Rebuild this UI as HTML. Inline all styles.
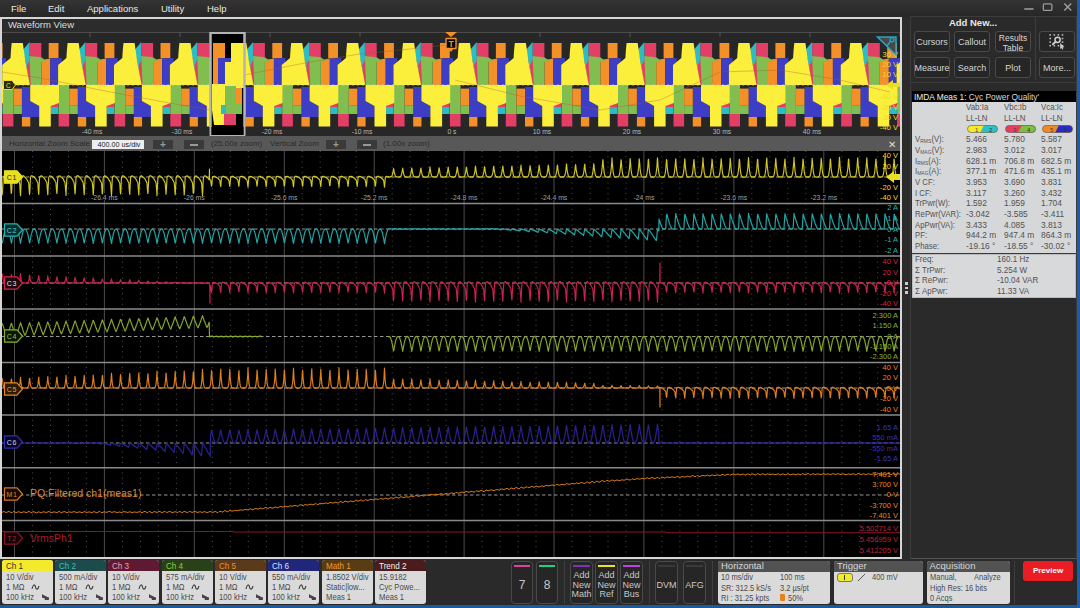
<!DOCTYPE html><html><head><meta charset="utf-8"><style>
html,body{margin:0;padding:0;} body{width:1080px;height:608px;overflow:hidden;position:relative;background:#2b2b2b;font-family:"Liberation Sans", sans-serif;}
.t{position:absolute;white-space:nowrap;} sub{font-size:5.6px;vertical-align:-0.5px;line-height:0;letter-spacing:0.1px}
.a{position:absolute;box-sizing:border-box;}
</style></head><body>
<div class="a" style="left:0;top:0;width:1080px;height:17px;background:linear-gradient(#343434,#262626)"></div>
<div class="t" style="left:11px;top:2.8px;height:12.3px;line-height:12.3px;font-size:9.5px;color:#e8e8e8;">File</div>
<div class="t" style="left:48px;top:2.8px;height:12.3px;line-height:12.3px;font-size:9.5px;color:#e8e8e8;">Edit</div>
<div class="t" style="left:87px;top:2.8px;height:12.3px;line-height:12.3px;font-size:9.5px;color:#e8e8e8;">Applications</div>
<div class="t" style="left:161px;top:2.8px;height:12.3px;line-height:12.3px;font-size:9.5px;color:#e8e8e8;">Utility</div>
<div class="t" style="left:207px;top:2.8px;height:12.3px;line-height:12.3px;font-size:9.5px;color:#e8e8e8;">Help</div>
<svg class="a" style="left:1020px;top:0px" width="57" height="16"><line x1="4.3" y1="9" x2="13.5" y2="9" stroke="#9a9a9a" stroke-width="1.6"/><rect x="23.3" y="3.8" width="8.6" height="6.6" rx="1.2" fill="none" stroke="#9a9a9a" stroke-width="1.3"/><path d="M44.3,3.4 L51.2,10.4 M51.2,3.4 L44.3,10.4" stroke="#a0a0a0" stroke-width="1.4"/></svg>
<div class="a" style="left:0px;top:17px;width:902px;height:542px;border:2px solid #d6d6d6;background:#2c2c2c"></div>
<div class="t" style="left:8px;top:18.8px;height:12.3px;line-height:12.3px;font-size:9.5px;color:#dcdcdc;">Waveform View</div>
<svg width="898" height="104" viewBox="2 32 898 104" style="position:absolute;left:2px;top:32px"><rect x="2" y="32" width="898" height="104" fill="#272727"/><line x1="2" y1="32.5" x2="900" y2="32.5" stroke="#4a4a4a" stroke-width="1"/><line x1="0" y1="32" x2="0" y2="37" stroke="#555" stroke-width="1"/><line x1="90" y1="32" x2="90" y2="37" stroke="#555" stroke-width="1"/><line x1="180" y1="32" x2="180" y2="37" stroke="#555" stroke-width="1"/><line x1="270" y1="32" x2="270" y2="37" stroke="#555" stroke-width="1"/><line x1="360" y1="32" x2="360" y2="37" stroke="#555" stroke-width="1"/><line x1="450" y1="32" x2="450" y2="37" stroke="#555" stroke-width="1"/><line x1="540" y1="32" x2="540" y2="37" stroke="#555" stroke-width="1"/><line x1="630" y1="32" x2="630" y2="37" stroke="#555" stroke-width="1"/><line x1="720" y1="32" x2="720" y2="37" stroke="#555" stroke-width="1"/><line x1="810" y1="32" x2="810" y2="37" stroke="#555" stroke-width="1"/><line x1="900" y1="32" x2="900" y2="37" stroke="#555" stroke-width="1"/><g><polygon fill="#f39028" points="-63.1,43 -53.3,43 -53.3,58 -61.5,58.5 -63.1,58"/><polygon fill="#f39028" points="-70.5,60 -61.5,58.5 -61.5,85 -70.5,85"/><polygon fill="#3d3dc6" points="-61.5,58.5 -50,58 -50,63 -53.7,66 -53.7,85 -61.5,85"/><polygon fill="#e33e66" points="-82.3,43 -70.5,43 -70.5,57.5 -82.3,56.5"/><polygon fill="#82bd4f" points="-82.3,56 -70.5,57.3 -64.8,61.5 -70.5,62 -70.5,85 -82,85 -86.3,62"/><polygon fill="#e33e66" points="-85.8,60 -82.3,56.5 -81.1,85 -82.7,85"/><polygon fill="#2bbcc6" points="-89,50 -82.3,42 -82.3,60 -85.3,66"/><polygon fill="#fbef3c" points="-100.1,43 -89,43 -86.3,62 -82,85 -109.6,85 -109.6,65 -101.3,58 -100.8,50"/><polygon fill="#3d3dc6" points="-33.9,87 -25.6,87 -25.6,101 -16.6,106 -16.6,117 -33.9,117"/><polygon fill="#f39028" points="-33.9,117 -25.6,117 -25.6,126.5 -33.9,126.5"/><polygon fill="#e33e66" points="-61,103 -53.4,103 -53.4,107 -61,107"/><polygon fill="#2bbcc6" points="-61,107 -53.4,107 -53.4,114 -61,114"/><polygon fill="#82bd4f" points="-53.2,85 -42.5,85 -42.5,114 -53.2,114"/><polygon fill="#e33e66" points="-53.2,114 -42.5,114 -42.5,126.5 -53.2,126.5"/><polygon fill="#f39028" points="-42.5,88.6 -33.9,88.6 -33.9,105.8 -42.5,105.8"/><polygon fill="#82bd4f" points="-42.5,105.8 -33.9,105.8 -33.9,114 -42.5,114"/><polygon fill="#fbef3c" points="-81.6,85 -52.8,85 -52.8,103 -61,106 -61,126.5 -72.6,126.5 -72.6,106 -81.6,101"/><polygon fill="#f39028" points="-7.2,43 2.6,43 2.6,58 -5.6,58.5 -7.2,58"/><polygon fill="#f39028" points="-14.6,60 -5.6,58.5 -5.6,85 -14.6,85"/><polygon fill="#3d3dc6" points="-5.6,58.5 5.9,58 5.9,63 2.2,66 2.2,85 -5.6,85"/><polygon fill="#e33e66" points="-26.4,43 -14.6,43 -14.6,57.5 -26.4,56.5"/><polygon fill="#82bd4f" points="-26.4,56 -14.6,57.3 -8.9,61.5 -14.6,62 -14.6,85 -26.1,85 -30.4,62"/><polygon fill="#e33e66" points="-29.9,60 -26.4,56.5 -25.2,85 -26.8,85"/><polygon fill="#2bbcc6" points="-33.1,50 -26.4,42 -26.4,60 -29.4,66"/><polygon fill="#fbef3c" points="-44.2,43 -33.1,43 -30.4,62 -26.1,85 -53.7,85 -53.7,65 -45.4,58 -44.9,50"/><polygon fill="#3d3dc6" points="21.9,87 30.3,87 30.3,101 39.2,106 39.2,117 21.9,117"/><polygon fill="#f39028" points="21.9,117 30.3,117 30.3,126.5 21.9,126.5"/><polygon fill="#e33e66" points="-5.1,103 2.5,103 2.5,107 -5.1,107"/><polygon fill="#2bbcc6" points="-5.1,107 2.5,107 2.5,114 -5.1,114"/><polygon fill="#82bd4f" points="2.7,85 13.4,85 13.4,114 2.7,114"/><polygon fill="#e33e66" points="2.7,114 13.4,114 13.4,126.5 2.7,126.5"/><polygon fill="#f39028" points="13.4,88.6 21.9,88.6 21.9,105.8 13.4,105.8"/><polygon fill="#82bd4f" points="13.4,105.8 21.9,105.8 21.9,114 13.4,114"/><polygon fill="#fbef3c" points="-25.8,85 3.1,85 3.1,103 -5.1,106 -5.1,126.5 -16.8,126.5 -16.8,106 -25.8,101"/><polygon fill="#f39028" points="48.7,43 58.5,43 58.5,58 50.3,58.5 48.7,58"/><polygon fill="#f39028" points="41.3,60 50.3,58.5 50.3,85 41.3,85"/><polygon fill="#3d3dc6" points="50.3,58.5 61.8,58 61.8,63 58.1,66 58.1,85 50.3,85"/><polygon fill="#e33e66" points="29.5,43 41.3,43 41.3,57.5 29.5,56.5"/><polygon fill="#82bd4f" points="29.5,56 41.3,57.3 47,61.5 41.3,62 41.3,85 29.8,85 25.5,62"/><polygon fill="#e33e66" points="26,60 29.5,56.5 30.7,85 29.1,85"/><polygon fill="#2bbcc6" points="22.8,50 29.5,42 29.5,60 26.5,66"/><polygon fill="#fbef3c" points="11.7,43 22.8,43 25.5,62 29.8,85 2.2,85 2.2,65 10.5,58 11,50"/><polygon fill="#3d3dc6" points="77.8,87 86.2,87 86.2,101 95.2,106 95.2,117 77.8,117"/><polygon fill="#f39028" points="77.8,117 86.2,117 86.2,126.5 77.8,126.5"/><polygon fill="#e33e66" points="50.8,103 58.4,103 58.4,107 50.8,107"/><polygon fill="#2bbcc6" points="50.8,107 58.4,107 58.4,114 50.8,114"/><polygon fill="#82bd4f" points="58.6,85 69.2,85 69.2,114 58.6,114"/><polygon fill="#e33e66" points="58.6,114 69.2,114 69.2,126.5 58.6,126.5"/><polygon fill="#f39028" points="69.2,88.6 77.8,88.6 77.8,105.8 69.2,105.8"/><polygon fill="#82bd4f" points="69.2,105.8 77.8,105.8 77.8,114 69.2,114"/><polygon fill="#fbef3c" points="30.2,85 59,85 59,103 50.8,106 50.8,126.5 39.2,126.5 39.2,106 30.2,101"/><polygon fill="#f39028" points="104.6,43 114.4,43 114.4,58 106.2,58.5 104.6,58"/><polygon fill="#f39028" points="97.2,60 106.2,58.5 106.2,85 97.2,85"/><polygon fill="#3d3dc6" points="106.2,58.5 117.7,58 117.7,63 114,66 114,85 106.2,85"/><polygon fill="#e33e66" points="85.4,43 97.2,43 97.2,57.5 85.4,56.5"/><polygon fill="#82bd4f" points="85.4,56 97.2,57.3 102.9,61.5 97.2,62 97.2,85 85.7,85 81.4,62"/><polygon fill="#e33e66" points="81.9,60 85.4,56.5 86.6,85 85,85"/><polygon fill="#2bbcc6" points="78.7,50 85.4,42 85.4,60 82.4,66"/><polygon fill="#fbef3c" points="67.6,43 78.7,43 81.4,62 85.7,85 58.1,85 58.1,65 66.4,58 66.9,50"/><polygon fill="#3d3dc6" points="133.8,87 142.1,87 142.1,101 151.1,106 151.1,117 133.8,117"/><polygon fill="#f39028" points="133.8,117 142.1,117 142.1,126.5 133.8,126.5"/><polygon fill="#e33e66" points="106.7,103 114.3,103 114.3,107 106.7,107"/><polygon fill="#2bbcc6" points="106.7,107 114.3,107 114.3,114 106.7,114"/><polygon fill="#82bd4f" points="114.5,85 125.2,85 125.2,114 114.5,114"/><polygon fill="#e33e66" points="114.5,114 125.2,114 125.2,126.5 114.5,126.5"/><polygon fill="#f39028" points="125.2,88.6 133.8,88.6 133.8,105.8 125.2,105.8"/><polygon fill="#82bd4f" points="125.2,105.8 133.8,105.8 133.8,114 125.2,114"/><polygon fill="#fbef3c" points="86.1,85 114.9,85 114.9,103 106.7,106 106.7,126.5 95.1,126.5 95.1,106 86.1,101"/><polygon fill="#f39028" points="160.5,43 170.3,43 170.3,58 162.1,58.5 160.5,58"/><polygon fill="#f39028" points="153.1,60 162.1,58.5 162.1,85 153.1,85"/><polygon fill="#3d3dc6" points="162.1,58.5 173.6,58 173.6,63 169.9,66 169.9,85 162.1,85"/><polygon fill="#e33e66" points="141.3,43 153.1,43 153.1,57.5 141.3,56.5"/><polygon fill="#82bd4f" points="141.3,56 153.1,57.3 158.8,61.5 153.1,62 153.1,85 141.6,85 137.3,62"/><polygon fill="#e33e66" points="137.8,60 141.3,56.5 142.5,85 140.9,85"/><polygon fill="#2bbcc6" points="134.6,50 141.3,42 141.3,60 138.3,66"/><polygon fill="#fbef3c" points="123.5,43 134.6,43 137.3,62 141.6,85 114,85 114,65 122.3,58 122.8,50"/><polygon fill="#3d3dc6" points="189.7,87 197.9,87 197.9,101 206.9,106 206.9,117 189.7,117"/><polygon fill="#f39028" points="189.7,117 197.9,117 197.9,126.5 189.7,126.5"/><polygon fill="#e33e66" points="162.6,103 170.2,103 170.2,107 162.6,107"/><polygon fill="#2bbcc6" points="162.6,107 170.2,107 170.2,114 162.6,114"/><polygon fill="#82bd4f" points="170.3,85 181.1,85 181.1,114 170.3,114"/><polygon fill="#e33e66" points="170.3,114 181.1,114 181.1,126.5 170.3,126.5"/><polygon fill="#f39028" points="181.1,88.6 189.7,88.6 189.7,105.8 181.1,105.8"/><polygon fill="#82bd4f" points="181.1,105.8 189.7,105.8 189.7,114 181.1,114"/><polygon fill="#fbef3c" points="141.9,85 170.8,85 170.8,103 162.6,106 162.6,126.5 150.9,126.5 150.9,106 141.9,101"/><polygon fill="#f39028" points="216.4,43 226.2,43 226.2,58 218,58.5 216.4,58"/><polygon fill="#f39028" points="209,60 218,58.5 218,85 209,85"/><polygon fill="#3d3dc6" points="218,58.5 229.5,58 229.5,63 225.8,66 225.8,85 218,85"/><polygon fill="#e33e66" points="197.2,43 209,43 209,57.5 197.2,56.5"/><polygon fill="#82bd4f" points="197.2,56 209,57.3 214.7,61.5 209,62 209,85 197.5,85 193.2,62"/><polygon fill="#e33e66" points="193.7,60 197.2,56.5 198.4,85 196.8,85"/><polygon fill="#2bbcc6" points="190.5,50 197.2,42 197.2,60 194.2,66"/><polygon fill="#fbef3c" points="179.4,43 190.5,43 193.2,62 197.5,85 169.9,85 169.9,65 178.2,58 178.7,50"/><polygon fill="#3d3dc6" points="245.5,87 253.8,87 253.8,101 262.8,106 262.8,117 245.5,117"/><polygon fill="#f39028" points="245.5,117 253.8,117 253.8,126.5 245.5,126.5"/><polygon fill="#e33e66" points="218.4,103 226,103 226,107 218.4,107"/><polygon fill="#2bbcc6" points="218.4,107 226,107 226,114 218.4,114"/><polygon fill="#82bd4f" points="226.2,85 236.9,85 236.9,114 226.2,114"/><polygon fill="#e33e66" points="226.2,114 236.9,114 236.9,126.5 226.2,126.5"/><polygon fill="#f39028" points="236.9,88.6 245.5,88.6 245.5,105.8 236.9,105.8"/><polygon fill="#82bd4f" points="236.9,105.8 245.5,105.8 245.5,114 236.9,114"/><polygon fill="#fbef3c" points="197.8,85 226.6,85 226.6,103 218.4,106 218.4,126.5 206.8,126.5 206.8,106 197.8,101"/><polygon fill="#f39028" points="272.3,43 282.1,43 282.1,58 273.9,58.5 272.3,58"/><polygon fill="#f39028" points="264.9,60 273.9,58.5 273.9,85 264.9,85"/><polygon fill="#3d3dc6" points="273.9,58.5 285.4,58 285.4,63 281.7,66 281.7,85 273.9,85"/><polygon fill="#e33e66" points="253.1,43 264.9,43 264.9,57.5 253.1,56.5"/><polygon fill="#82bd4f" points="253.1,56 264.9,57.3 270.6,61.5 264.9,62 264.9,85 253.4,85 249.1,62"/><polygon fill="#e33e66" points="249.6,60 253.1,56.5 254.3,85 252.7,85"/><polygon fill="#2bbcc6" points="246.4,50 253.1,42 253.1,60 250.1,66"/><polygon fill="#fbef3c" points="235.3,43 246.4,43 249.1,62 253.4,85 225.8,85 225.8,65 234.1,58 234.6,50"/><polygon fill="#3d3dc6" points="301.4,87 309.8,87 309.8,101 318.8,106 318.8,117 301.4,117"/><polygon fill="#f39028" points="301.4,117 309.8,117 309.8,126.5 301.4,126.5"/><polygon fill="#e33e66" points="274.4,103 281.9,103 281.9,107 274.4,107"/><polygon fill="#2bbcc6" points="274.4,107 281.9,107 281.9,114 274.4,114"/><polygon fill="#82bd4f" points="282.2,85 292.9,85 292.9,114 282.2,114"/><polygon fill="#e33e66" points="282.2,114 292.9,114 292.9,126.5 282.2,126.5"/><polygon fill="#f39028" points="292.9,88.6 301.4,88.6 301.4,105.8 292.9,105.8"/><polygon fill="#82bd4f" points="292.9,105.8 301.4,105.8 301.4,114 292.9,114"/><polygon fill="#fbef3c" points="253.8,85 282.6,85 282.6,103 274.4,106 274.4,126.5 262.8,126.5 262.8,106 253.8,101"/><polygon fill="#f39028" points="328.2,43 338,43 338,58 329.8,58.5 328.2,58"/><polygon fill="#f39028" points="320.8,60 329.8,58.5 329.8,85 320.8,85"/><polygon fill="#3d3dc6" points="329.8,58.5 341.3,58 341.3,63 337.6,66 337.6,85 329.8,85"/><polygon fill="#e33e66" points="309,43 320.8,43 320.8,57.5 309,56.5"/><polygon fill="#82bd4f" points="309,56 320.8,57.3 326.5,61.5 320.8,62 320.8,85 309.3,85 305,62"/><polygon fill="#e33e66" points="305.5,60 309,56.5 310.2,85 308.6,85"/><polygon fill="#2bbcc6" points="302.3,50 309,42 309,60 306,66"/><polygon fill="#fbef3c" points="291.2,43 302.3,43 305,62 309.3,85 281.7,85 281.7,65 290,58 290.5,50"/><polygon fill="#3d3dc6" points="357.3,87 365.6,87 365.6,101 374.6,106 374.6,117 357.3,117"/><polygon fill="#f39028" points="357.3,117 365.6,117 365.6,126.5 357.3,126.5"/><polygon fill="#e33e66" points="330.2,103 337.8,103 337.8,107 330.2,107"/><polygon fill="#2bbcc6" points="330.2,107 337.8,107 337.8,114 330.2,114"/><polygon fill="#82bd4f" points="338.1,85 348.8,85 348.8,114 338.1,114"/><polygon fill="#e33e66" points="338.1,114 348.8,114 348.8,126.5 338.1,126.5"/><polygon fill="#f39028" points="348.8,88.6 357.3,88.6 357.3,105.8 348.8,105.8"/><polygon fill="#82bd4f" points="348.8,105.8 357.3,105.8 357.3,114 348.8,114"/><polygon fill="#fbef3c" points="309.6,85 338.4,85 338.4,103 330.2,106 330.2,126.5 318.6,126.5 318.6,106 309.6,101"/><polygon fill="#f39028" points="384.1,43 393.9,43 393.9,58 385.7,58.5 384.1,58"/><polygon fill="#f39028" points="376.7,60 385.7,58.5 385.7,85 376.7,85"/><polygon fill="#3d3dc6" points="385.7,58.5 397.2,58 397.2,63 393.5,66 393.5,85 385.7,85"/><polygon fill="#e33e66" points="364.9,43 376.7,43 376.7,57.5 364.9,56.5"/><polygon fill="#82bd4f" points="364.9,56 376.7,57.3 382.4,61.5 376.7,62 376.7,85 365.2,85 360.9,62"/><polygon fill="#e33e66" points="361.4,60 364.9,56.5 366.1,85 364.5,85"/><polygon fill="#2bbcc6" points="358.2,50 364.9,42 364.9,60 361.9,66"/><polygon fill="#fbef3c" points="347.1,43 358.2,43 360.9,62 365.2,85 337.6,85 337.6,65 345.9,58 346.4,50"/><polygon fill="#3d3dc6" points="413.2,87 421.5,87 421.5,101 430.5,106 430.5,117 413.2,117"/><polygon fill="#f39028" points="413.2,117 421.5,117 421.5,126.5 413.2,126.5"/><polygon fill="#e33e66" points="386.1,103 393.7,103 393.7,107 386.1,107"/><polygon fill="#2bbcc6" points="386.1,107 393.7,107 393.7,114 386.1,114"/><polygon fill="#82bd4f" points="393.9,85 404.6,85 404.6,114 393.9,114"/><polygon fill="#e33e66" points="393.9,114 404.6,114 404.6,126.5 393.9,126.5"/><polygon fill="#f39028" points="404.6,88.6 413.2,88.6 413.2,105.8 404.6,105.8"/><polygon fill="#82bd4f" points="404.6,105.8 413.2,105.8 413.2,114 404.6,114"/><polygon fill="#fbef3c" points="365.5,85 394.3,85 394.3,103 386.1,106 386.1,126.5 374.5,126.5 374.5,106 365.5,101"/><polygon fill="#f39028" points="440,43 449.8,43 449.8,58 441.6,58.5 440,58"/><polygon fill="#f39028" points="432.6,60 441.6,58.5 441.6,85 432.6,85"/><polygon fill="#3d3dc6" points="441.6,58.5 453.1,58 453.1,63 449.4,66 449.4,85 441.6,85"/><polygon fill="#e33e66" points="420.8,43 432.6,43 432.6,57.5 420.8,56.5"/><polygon fill="#82bd4f" points="420.8,56 432.6,57.3 438.3,61.5 432.6,62 432.6,85 421.1,85 416.8,62"/><polygon fill="#e33e66" points="417.3,60 420.8,56.5 422,85 420.4,85"/><polygon fill="#2bbcc6" points="414.1,50 420.8,42 420.8,60 417.8,66"/><polygon fill="#fbef3c" points="403,43 414.1,43 416.8,62 421.1,85 393.5,85 393.5,65 401.8,58 402.3,50"/><polygon fill="#3d3dc6" points="469.1,87 477.4,87 477.4,101 486.4,106 486.4,117 469.1,117"/><polygon fill="#f39028" points="469.1,117 477.4,117 477.4,126.5 469.1,126.5"/><polygon fill="#e33e66" points="442.1,103 449.6,103 449.6,107 442.1,107"/><polygon fill="#2bbcc6" points="442.1,107 449.6,107 449.6,114 442.1,114"/><polygon fill="#82bd4f" points="449.9,85 460.6,85 460.6,114 449.9,114"/><polygon fill="#e33e66" points="449.9,114 460.6,114 460.6,126.5 449.9,126.5"/><polygon fill="#f39028" points="460.6,88.6 469.1,88.6 469.1,105.8 460.6,105.8"/><polygon fill="#82bd4f" points="460.6,105.8 469.1,105.8 469.1,114 460.6,114"/><polygon fill="#fbef3c" points="421.4,85 450.2,85 450.2,103 442.1,106 442.1,126.5 430.4,126.5 430.4,106 421.4,101"/><polygon fill="#f39028" points="495.9,43 505.7,43 505.7,58 497.5,58.5 495.9,58"/><polygon fill="#f39028" points="488.5,60 497.5,58.5 497.5,85 488.5,85"/><polygon fill="#3d3dc6" points="497.5,58.5 509,58 509,63 505.3,66 505.3,85 497.5,85"/><polygon fill="#e33e66" points="476.7,43 488.5,43 488.5,57.5 476.7,56.5"/><polygon fill="#82bd4f" points="476.7,56 488.5,57.3 494.2,61.5 488.5,62 488.5,85 477,85 472.7,62"/><polygon fill="#e33e66" points="473.2,60 476.7,56.5 477.9,85 476.3,85"/><polygon fill="#2bbcc6" points="470,50 476.7,42 476.7,60 473.7,66"/><polygon fill="#fbef3c" points="458.9,43 470,43 472.7,62 477,85 449.4,85 449.4,65 457.7,58 458.2,50"/><polygon fill="#3d3dc6" points="525,87 533.4,87 533.4,101 542.4,106 542.4,117 525,117"/><polygon fill="#f39028" points="525,117 533.4,117 533.4,126.5 525,126.5"/><polygon fill="#e33e66" points="497.9,103 505.5,103 505.5,107 497.9,107"/><polygon fill="#2bbcc6" points="497.9,107 505.5,107 505.5,114 497.9,114"/><polygon fill="#82bd4f" points="505.8,85 516.4,85 516.4,114 505.8,114"/><polygon fill="#e33e66" points="505.8,114 516.4,114 516.4,126.5 505.8,126.5"/><polygon fill="#f39028" points="516.4,88.6 525,88.6 525,105.8 516.4,105.8"/><polygon fill="#82bd4f" points="516.4,105.8 525,105.8 525,114 516.4,114"/><polygon fill="#fbef3c" points="477.3,85 506.1,85 506.1,103 497.9,106 497.9,126.5 486.3,126.5 486.3,106 477.3,101"/><polygon fill="#f39028" points="551.8,43 561.6,43 561.6,58 553.4,58.5 551.8,58"/><polygon fill="#f39028" points="544.4,60 553.4,58.5 553.4,85 544.4,85"/><polygon fill="#3d3dc6" points="553.4,58.5 564.9,58 564.9,63 561.2,66 561.2,85 553.4,85"/><polygon fill="#e33e66" points="532.6,43 544.4,43 544.4,57.5 532.6,56.5"/><polygon fill="#82bd4f" points="532.6,56 544.4,57.3 550.1,61.5 544.4,62 544.4,85 532.9,85 528.6,62"/><polygon fill="#e33e66" points="529.1,60 532.6,56.5 533.8,85 532.2,85"/><polygon fill="#2bbcc6" points="525.9,50 532.6,42 532.6,60 529.6,66"/><polygon fill="#fbef3c" points="514.8,43 525.9,43 528.6,62 532.9,85 505.3,85 505.3,65 513.6,58 514.1,50"/><polygon fill="#3d3dc6" points="580.9,87 589.2,87 589.2,101 598.2,106 598.2,117 580.9,117"/><polygon fill="#f39028" points="580.9,117 589.2,117 589.2,126.5 580.9,126.5"/><polygon fill="#e33e66" points="553.8,103 561.4,103 561.4,107 553.8,107"/><polygon fill="#2bbcc6" points="553.8,107 561.4,107 561.4,114 553.8,114"/><polygon fill="#82bd4f" points="561.6,85 572.3,85 572.3,114 561.6,114"/><polygon fill="#e33e66" points="561.6,114 572.3,114 572.3,126.5 561.6,126.5"/><polygon fill="#f39028" points="572.3,88.6 580.9,88.6 580.9,105.8 572.3,105.8"/><polygon fill="#82bd4f" points="572.3,105.8 580.9,105.8 580.9,114 572.3,114"/><polygon fill="#fbef3c" points="533.2,85 562,85 562,103 553.8,106 553.8,126.5 542.2,126.5 542.2,106 533.2,101"/><polygon fill="#f39028" points="607.7,43 617.5,43 617.5,58 609.3,58.5 607.7,58"/><polygon fill="#f39028" points="600.3,60 609.3,58.5 609.3,85 600.3,85"/><polygon fill="#3d3dc6" points="609.3,58.5 620.8,58 620.8,63 617.1,66 617.1,85 609.3,85"/><polygon fill="#e33e66" points="588.5,43 600.3,43 600.3,57.5 588.5,56.5"/><polygon fill="#82bd4f" points="588.5,56 600.3,57.3 606,61.5 600.3,62 600.3,85 588.8,85 584.5,62"/><polygon fill="#e33e66" points="585,60 588.5,56.5 589.7,85 588.1,85"/><polygon fill="#2bbcc6" points="581.8,50 588.5,42 588.5,60 585.5,66"/><polygon fill="#fbef3c" points="570.7,43 581.8,43 584.5,62 588.8,85 561.2,85 561.2,65 569.5,58 570,50"/><polygon fill="#3d3dc6" points="636.9,87 645.2,87 645.2,101 654.2,106 654.2,117 636.9,117"/><polygon fill="#f39028" points="636.9,117 645.2,117 645.2,126.5 636.9,126.5"/><polygon fill="#e33e66" points="609.8,103 617.4,103 617.4,107 609.8,107"/><polygon fill="#2bbcc6" points="609.8,107 617.4,107 617.4,114 609.8,114"/><polygon fill="#82bd4f" points="617.6,85 628.2,85 628.2,114 617.6,114"/><polygon fill="#e33e66" points="617.6,114 628.2,114 628.2,126.5 617.6,126.5"/><polygon fill="#f39028" points="628.2,88.6 636.9,88.6 636.9,105.8 628.2,105.8"/><polygon fill="#82bd4f" points="628.2,105.8 636.9,105.8 636.9,114 628.2,114"/><polygon fill="#fbef3c" points="589.2,85 618,85 618,103 609.8,106 609.8,126.5 598.2,126.5 598.2,106 589.2,101"/><polygon fill="#f39028" points="663.6,43 673.4,43 673.4,58 665.2,58.5 663.6,58"/><polygon fill="#f39028" points="656.2,60 665.2,58.5 665.2,85 656.2,85"/><polygon fill="#3d3dc6" points="665.2,58.5 676.7,58 676.7,63 673,66 673,85 665.2,85"/><polygon fill="#e33e66" points="644.4,43 656.2,43 656.2,57.5 644.4,56.5"/><polygon fill="#82bd4f" points="644.4,56 656.2,57.3 661.9,61.5 656.2,62 656.2,85 644.7,85 640.4,62"/><polygon fill="#e33e66" points="640.9,60 644.4,56.5 645.6,85 644,85"/><polygon fill="#2bbcc6" points="637.7,50 644.4,42 644.4,60 641.4,66"/><polygon fill="#fbef3c" points="626.6,43 637.7,43 640.4,62 644.7,85 617.1,85 617.1,65 625.4,58 625.9,50"/><polygon fill="#3d3dc6" points="692.8,87 701.1,87 701.1,101 710.1,106 710.1,117 692.8,117"/><polygon fill="#f39028" points="692.8,117 701.1,117 701.1,126.5 692.8,126.5"/><polygon fill="#e33e66" points="665.6,103 673.2,103 673.2,107 665.6,107"/><polygon fill="#2bbcc6" points="665.6,107 673.2,107 673.2,114 665.6,114"/><polygon fill="#82bd4f" points="673.5,85 684.1,85 684.1,114 673.5,114"/><polygon fill="#e33e66" points="673.5,114 684.1,114 684.1,126.5 673.5,126.5"/><polygon fill="#f39028" points="684.1,88.6 692.8,88.6 692.8,105.8 684.1,105.8"/><polygon fill="#82bd4f" points="684.1,105.8 692.8,105.8 692.8,114 684.1,114"/><polygon fill="#fbef3c" points="645.1,85 673.9,85 673.9,103 665.6,106 665.6,126.5 654.1,126.5 654.1,106 645.1,101"/><polygon fill="#f39028" points="719.5,43 729.3,43 729.3,58 721.1,58.5 719.5,58"/><polygon fill="#f39028" points="712.1,60 721.1,58.5 721.1,85 712.1,85"/><polygon fill="#3d3dc6" points="721.1,58.5 732.6,58 732.6,63 728.9,66 728.9,85 721.1,85"/><polygon fill="#e33e66" points="700.3,43 712.1,43 712.1,57.5 700.3,56.5"/><polygon fill="#82bd4f" points="700.3,56 712.1,57.3 717.8,61.5 712.1,62 712.1,85 700.6,85 696.3,62"/><polygon fill="#e33e66" points="696.8,60 700.3,56.5 701.5,85 699.9,85"/><polygon fill="#2bbcc6" points="693.6,50 700.3,42 700.3,60 697.3,66"/><polygon fill="#fbef3c" points="682.5,43 693.6,43 696.3,62 700.6,85 673,85 673,65 681.3,58 681.8,50"/><polygon fill="#3d3dc6" points="748.6,87 757,87 757,101 766,106 766,117 748.6,117"/><polygon fill="#f39028" points="748.6,117 757,117 757,126.5 748.6,126.5"/><polygon fill="#e33e66" points="721.5,103 729.1,103 729.1,107 721.5,107"/><polygon fill="#2bbcc6" points="721.5,107 729.1,107 729.1,114 721.5,114"/><polygon fill="#82bd4f" points="729.4,85 740,85 740,114 729.4,114"/><polygon fill="#e33e66" points="729.4,114 740,114 740,126.5 729.4,126.5"/><polygon fill="#f39028" points="740,88.6 748.6,88.6 748.6,105.8 740,105.8"/><polygon fill="#82bd4f" points="740,105.8 748.6,105.8 748.6,114 740,114"/><polygon fill="#fbef3c" points="701,85 729.8,85 729.8,103 721.5,106 721.5,126.5 710,126.5 710,106 701,101"/><polygon fill="#f39028" points="775.4,43 785.2,43 785.2,58 777,58.5 775.4,58"/><polygon fill="#f39028" points="768,60 777,58.5 777,85 768,85"/><polygon fill="#3d3dc6" points="777,58.5 788.5,58 788.5,63 784.8,66 784.8,85 777,85"/><polygon fill="#e33e66" points="756.2,43 768,43 768,57.5 756.2,56.5"/><polygon fill="#82bd4f" points="756.2,56 768,57.3 773.7,61.5 768,62 768,85 756.5,85 752.2,62"/><polygon fill="#e33e66" points="752.7,60 756.2,56.5 757.4,85 755.8,85"/><polygon fill="#2bbcc6" points="749.5,50 756.2,42 756.2,60 753.2,66"/><polygon fill="#fbef3c" points="738.4,43 749.5,43 752.2,62 756.5,85 728.9,85 728.9,65 737.2,58 737.7,50"/><polygon fill="#3d3dc6" points="804.5,87 812.9,87 812.9,101 821.9,106 821.9,117 804.5,117"/><polygon fill="#f39028" points="804.5,117 812.9,117 812.9,126.5 804.5,126.5"/><polygon fill="#e33e66" points="777.4,103 785,103 785,107 777.4,107"/><polygon fill="#2bbcc6" points="777.4,107 785,107 785,114 777.4,114"/><polygon fill="#82bd4f" points="785.2,85 795.9,85 795.9,114 785.2,114"/><polygon fill="#e33e66" points="785.2,114 795.9,114 795.9,126.5 785.2,126.5"/><polygon fill="#f39028" points="795.9,88.6 804.5,88.6 804.5,105.8 795.9,105.8"/><polygon fill="#82bd4f" points="795.9,105.8 804.5,105.8 804.5,114 795.9,114"/><polygon fill="#fbef3c" points="756.9,85 785.6,85 785.6,103 777.4,106 777.4,126.5 765.9,126.5 765.9,106 756.9,101"/><polygon fill="#f39028" points="831.3,43 841.1,43 841.1,58 832.9,58.5 831.3,58"/><polygon fill="#f39028" points="823.9,60 832.9,58.5 832.9,85 823.9,85"/><polygon fill="#3d3dc6" points="832.9,58.5 844.4,58 844.4,63 840.7,66 840.7,85 832.9,85"/><polygon fill="#e33e66" points="812.1,43 823.9,43 823.9,57.5 812.1,56.5"/><polygon fill="#82bd4f" points="812.1,56 823.9,57.3 829.6,61.5 823.9,62 823.9,85 812.4,85 808.1,62"/><polygon fill="#e33e66" points="808.6,60 812.1,56.5 813.3,85 811.7,85"/><polygon fill="#2bbcc6" points="805.4,50 812.1,42 812.1,60 809.1,66"/><polygon fill="#fbef3c" points="794.3,43 805.4,43 808.1,62 812.4,85 784.8,85 784.8,65 793.1,58 793.6,50"/><polygon fill="#3d3dc6" points="860.5,87 868.8,87 868.8,101 877.8,106 877.8,117 860.5,117"/><polygon fill="#f39028" points="860.5,117 868.8,117 868.8,126.5 860.5,126.5"/><polygon fill="#e33e66" points="833.4,103 841,103 841,107 833.4,107"/><polygon fill="#2bbcc6" points="833.4,107 841,107 841,114 833.4,114"/><polygon fill="#82bd4f" points="841.2,85 851.9,85 851.9,114 841.2,114"/><polygon fill="#e33e66" points="841.2,114 851.9,114 851.9,126.5 841.2,126.5"/><polygon fill="#f39028" points="851.9,88.6 860.5,88.6 860.5,105.8 851.9,105.8"/><polygon fill="#82bd4f" points="851.9,105.8 860.5,105.8 860.5,114 851.9,114"/><polygon fill="#fbef3c" points="812.8,85 841.6,85 841.6,103 833.4,106 833.4,126.5 821.8,126.5 821.8,106 812.8,101"/><polygon fill="#f39028" points="887.2,43 897,43 897,58 888.8,58.5 887.2,58"/><polygon fill="#f39028" points="879.8,60 888.8,58.5 888.8,85 879.8,85"/><polygon fill="#3d3dc6" points="888.8,58.5 900.3,58 900.3,63 896.6,66 896.6,85 888.8,85"/><polygon fill="#e33e66" points="868,43 879.8,43 879.8,57.5 868,56.5"/><polygon fill="#82bd4f" points="868,56 879.8,57.3 885.5,61.5 879.8,62 879.8,85 868.3,85 864,62"/><polygon fill="#e33e66" points="864.5,60 868,56.5 869.2,85 867.6,85"/><polygon fill="#2bbcc6" points="861.3,50 868,42 868,60 865,66"/><polygon fill="#fbef3c" points="850.2,43 861.3,43 864,62 868.3,85 840.7,85 840.7,65 849,58 849.5,50"/><polygon fill="#3d3dc6" points="916.4,87 924.7,87 924.7,101 933.7,106 933.7,117 916.4,117"/><polygon fill="#f39028" points="916.4,117 924.7,117 924.7,126.5 916.4,126.5"/><polygon fill="#e33e66" points="889.2,103 896.9,103 896.9,107 889.2,107"/><polygon fill="#2bbcc6" points="889.2,107 896.9,107 896.9,114 889.2,114"/><polygon fill="#82bd4f" points="897.1,85 907.8,85 907.8,114 897.1,114"/><polygon fill="#e33e66" points="897.1,114 907.8,114 907.8,126.5 897.1,126.5"/><polygon fill="#f39028" points="907.8,88.6 916.4,88.6 916.4,105.8 907.8,105.8"/><polygon fill="#82bd4f" points="907.8,105.8 916.4,105.8 916.4,114 907.8,114"/><polygon fill="#fbef3c" points="868.7,85 897.5,85 897.5,103 889.2,106 889.2,126.5 877.7,126.5 877.7,106 868.7,101"/><polygon fill="#f39028" points="943.1,43 952.9,43 952.9,58 944.7,58.5 943.1,58"/><polygon fill="#f39028" points="935.7,60 944.7,58.5 944.7,85 935.7,85"/><polygon fill="#3d3dc6" points="944.7,58.5 956.2,58 956.2,63 952.5,66 952.5,85 944.7,85"/><polygon fill="#e33e66" points="923.9,43 935.7,43 935.7,57.5 923.9,56.5"/><polygon fill="#82bd4f" points="923.9,56 935.7,57.3 941.4,61.5 935.7,62 935.7,85 924.2,85 919.9,62"/><polygon fill="#e33e66" points="920.4,60 923.9,56.5 925.1,85 923.5,85"/><polygon fill="#2bbcc6" points="917.2,50 923.9,42 923.9,60 920.9,66"/><polygon fill="#fbef3c" points="906.1,43 917.2,43 919.9,62 924.2,85 896.6,85 896.6,65 904.9,58 905.4,50"/><polygon fill="#3d3dc6" points="972.2,87 980.6,87 980.6,101 989.6,106 989.6,117 972.2,117"/><polygon fill="#f39028" points="972.2,117 980.6,117 980.6,126.5 972.2,126.5"/><polygon fill="#e33e66" points="945.1,103 952.8,103 952.8,107 945.1,107"/><polygon fill="#2bbcc6" points="945.1,107 952.8,107 952.8,114 945.1,114"/><polygon fill="#82bd4f" points="953,85 963.6,85 963.6,114 953,114"/><polygon fill="#e33e66" points="953,114 963.6,114 963.6,126.5 953,126.5"/><polygon fill="#f39028" points="963.6,88.6 972.2,88.6 972.2,105.8 963.6,105.8"/><polygon fill="#82bd4f" points="963.6,105.8 972.2,105.8 972.2,114 963.6,114"/><polygon fill="#fbef3c" points="924.6,85 953.4,85 953.4,103 945.1,106 945.1,126.5 933.6,126.5 933.6,106 924.6,101"/><polygon fill="#f39028" points="999,43 1008.8,43 1008.8,58 1000.6,58.5 999,58"/><polygon fill="#f39028" points="991.6,60 1000.6,58.5 1000.6,85 991.6,85"/><polygon fill="#3d3dc6" points="1000.6,58.5 1012.1,58 1012.1,63 1008.4,66 1008.4,85 1000.6,85"/><polygon fill="#e33e66" points="979.8,43 991.6,43 991.6,57.5 979.8,56.5"/><polygon fill="#82bd4f" points="979.8,56 991.6,57.3 997.3,61.5 991.6,62 991.6,85 980.1,85 975.8,62"/><polygon fill="#e33e66" points="976.3,60 979.8,56.5 981,85 979.4,85"/><polygon fill="#2bbcc6" points="973.1,50 979.8,42 979.8,60 976.8,66"/><polygon fill="#fbef3c" points="962,43 973.1,43 975.8,62 980.1,85 952.5,85 952.5,65 960.8,58 961.3,50"/><polygon fill="#3d3dc6" points="1028.2,87 1036.5,87 1036.5,101 1045.5,106 1045.5,117 1028.2,117"/><polygon fill="#f39028" points="1028.2,117 1036.5,117 1036.5,126.5 1028.2,126.5"/><polygon fill="#e33e66" points="1001,103 1008.6,103 1008.6,107 1001,107"/><polygon fill="#2bbcc6" points="1001,107 1008.6,107 1008.6,114 1001,114"/><polygon fill="#82bd4f" points="1008.9,85 1019.5,85 1019.5,114 1008.9,114"/><polygon fill="#e33e66" points="1008.9,114 1019.5,114 1019.5,126.5 1008.9,126.5"/><polygon fill="#f39028" points="1019.5,88.6 1028.2,88.6 1028.2,105.8 1019.5,105.8"/><polygon fill="#82bd4f" points="1019.5,105.8 1028.2,105.8 1028.2,114 1019.5,114"/><polygon fill="#fbef3c" points="980.5,85 1009.2,85 1009.2,103 1001,106 1001,126.5 989.5,126.5 989.5,106 980.5,101"/></g><rect x="211" y="33" width="33" height="102" fill="#000"/><polygon fill="#f39028" points="213,43 225,43 225,84 213,84"/><polygon fill="#3d3dc6" points="218,58 232,58 232,84 218,84"/><polygon fill="#fbef3c" points="231,43 244,43 244,84 225,84 225,62 231,62"/><polygon fill="#fbef3c" points="212,84 244,84 244,88 236,88 236,114 225,114 225,125 214,125 212,110"/><polygon fill="#82bd4f" points="225,86 236,86 236,114 225,114"/><polygon fill="#f39028" points="236,88 242,88 242,104 236,104"/><polygon fill="#82bd4f" points="236,104 242,104 242,114 236,114"/><polygon fill="#e33e66" points="224,114 236,114 236,125 224,125"/><polygon fill="#2bbcc6" points="221,105 226,105 226,114 221,114"/><polyline fill="none" stroke="#a85a30" stroke-width="0.7" opacity="0.5" points="2,72 40,78 100,90 175,104 212,110"/><polyline fill="none" stroke="#a85a30" stroke-width="0.7" opacity="0.5" points="244,75 310,62 360,54 420,48 455,44"/><polyline fill="none" stroke="#a85a30" stroke-width="0.7" opacity="0.5" points="455,80 520,96 600,110 660,100 720,72 780,70 840,80 890,92"/><line x1="2" y1="85" x2="900" y2="85" stroke="#d8d8d8" stroke-width="1" stroke-dasharray="2,3" opacity="0.7"/><rect x="210.5" y="33" width="34" height="103" fill="none" stroke="#b4b4b4" stroke-width="2"/><rect x="2" y="127" width="898" height="9" fill="#272727"/><rect x="210.5" y="33" width="34" height="103" fill="none" stroke="#b4b4b4" stroke-width="2"/><rect x="211.5" y="127" width="32" height="8" fill="#000"/><polygon points="3.5,80.5 12,80.5 15.5,85 12,89.5 3.5,89.5" fill="#2a2a10" stroke="#e8df22" stroke-width="1"/><text x="8.3" y="88" font-family="Liberation Sans" font-size="6.5" fill="#e8df22" text-anchor="middle">C</text><polygon fill="#f39028" points="445,32 457,32 451,37"/><polygon points="448,48 454,48 451,52" fill="#f39028"/><rect x="446" y="38.5" width="10" height="10" rx="0.5" fill="#050505" stroke="#f39028" stroke-width="1.4"/><text x="451" y="46.8" font-family="Liberation Sans" font-weight="bold" font-size="8.5" fill="#f39028" text-anchor="middle">T</text><text x="898" y="57.400000000000006" font-family="Liberation Sans" font-size="7.5" fill="#e8df22" text-anchor="end">30 V</text><text x="898" y="67.3" font-family="Liberation Sans" font-size="7.5" fill="#e8df22" text-anchor="end">20 V</text><text x="898" y="77.2" font-family="Liberation Sans" font-size="7.5" fill="#e8df22" text-anchor="end">10 V</text><text x="898" y="99.4" font-family="Liberation Sans" font-size="7.5" fill="#e8df22" text-anchor="end">-10 V</text><text x="898" y="110.10000000000001" font-family="Liberation Sans" font-size="7.5" fill="#e8df22" text-anchor="end">-20 V</text><text x="898" y="119.9" font-family="Liberation Sans" font-size="7.5" fill="#e8df22" text-anchor="end">-30 V</text><text x="898" y="130.2" font-family="Liberation Sans" font-size="7.5" fill="#e8df22" text-anchor="end">-40 V</text><polygon points="886,85 893,80 893,83 900,83 900,87 893,87 893,90" fill="#e8df22"/><polygon fill="#484848" stroke="#28a6c6" stroke-width="1.5" points="877.5,37 896,37 896,55"/><line x1="887" y1="46" x2="890.6" y2="41.2" stroke="#28a6c6" stroke-width="1.3"/><circle cx="892" cy="39.8" r="2" fill="#484848" stroke="#28a6c6" stroke-width="1.2"/></svg>
<div class="t" style="left:92px;top:126.6px;height:9.8px;line-height:9.8px;font-size:7.5px;color:#b8b8b8;transform:translateX(-50%) scaleX(0.9);transform-origin:50% 50%;">-40 ms</div>
<div class="t" style="left:182px;top:126.6px;height:9.8px;line-height:9.8px;font-size:7.5px;color:#b8b8b8;transform:translateX(-50%) scaleX(0.9);transform-origin:50% 50%;">-30 ms</div>
<div class="t" style="left:272px;top:126.6px;height:9.8px;line-height:9.8px;font-size:7.5px;color:#b8b8b8;transform:translateX(-50%) scaleX(0.9);transform-origin:50% 50%;">-20 ms</div>
<div class="t" style="left:362px;top:126.6px;height:9.8px;line-height:9.8px;font-size:7.5px;color:#b8b8b8;transform:translateX(-50%) scaleX(0.9);transform-origin:50% 50%;">-10 ms</div>
<div class="t" style="left:452px;top:126.6px;height:9.8px;line-height:9.8px;font-size:7.5px;color:#b8b8b8;transform:translateX(-50%) scaleX(0.9);transform-origin:50% 50%;">0 s</div>
<div class="t" style="left:542px;top:126.6px;height:9.8px;line-height:9.8px;font-size:7.5px;color:#b8b8b8;transform:translateX(-50%) scaleX(0.9);transform-origin:50% 50%;">10 ms</div>
<div class="t" style="left:632px;top:126.6px;height:9.8px;line-height:9.8px;font-size:7.5px;color:#b8b8b8;transform:translateX(-50%) scaleX(0.9);transform-origin:50% 50%;">20 ms</div>
<div class="t" style="left:722px;top:126.6px;height:9.8px;line-height:9.8px;font-size:7.5px;color:#b8b8b8;transform:translateX(-50%) scaleX(0.9);transform-origin:50% 50%;">30 ms</div>
<div class="t" style="left:812px;top:126.6px;height:9.8px;line-height:9.8px;font-size:7.5px;color:#b8b8b8;transform:translateX(-50%) scaleX(0.9);transform-origin:50% 50%;">40 ms</div>
<div class="a" style="left:2px;top:136px;width:898px;height:15px;background:#585858"></div>
<div class="t" style="left:9px;top:138.8px;height:10.4px;line-height:10.4px;font-size:8px;color:#2a2a2a;">Horizontal Zoom Scale</div>
<div class="a" style="left:92px;top:139.5px;width:52px;height:9.5px;background:#eeeeee"></div>
<div class="t" style="left:118.5px;top:139.6px;height:9.9px;line-height:9.9px;font-size:7.6px;color:#222;transform:translateX(-50%) scaleX(0.95);transform-origin:50% 50%;">400.00 us/div</div>
<div class="a" style="left:153px;top:140px;width:20px;height:9px;background:#3a3a3a"></div>
<div class="a" style="left:184px;top:140px;width:20px;height:9px;background:#3a3a3a"></div>
<div class="a" style="left:326px;top:140px;width:20px;height:9px;background:#3a3a3a"></div>
<div class="a" style="left:357px;top:140px;width:20px;height:9px;background:#3a3a3a"></div>
<div class="t" style="left:163px;top:138px;height:13px;line-height:13px;font-size:10px;color:#999;font-weight:bold;transform:translateX(-50%);">+</div>
<div class="t" style="left:336px;top:138px;height:13px;line-height:13px;font-size:10px;color:#999;font-weight:bold;transform:translateX(-50%);">+</div>
<div class="a" style="left:190px;top:144px;width:8px;height:1.5px;background:#999"></div>
<div class="a" style="left:363px;top:144px;width:8px;height:1.5px;background:#999"></div>
<div class="t" style="left:211px;top:138.8px;height:10.4px;line-height:10.4px;font-size:8px;color:#2a2a2a;">(25.00x zoom)</div>
<div class="t" style="left:270px;top:138.8px;height:10.4px;line-height:10.4px;font-size:8px;color:#2a2a2a;">Vertical Zoom</div>
<div class="t" style="left:383px;top:138.8px;height:10.4px;line-height:10.4px;font-size:8px;color:#2a2a2a;">(1.00x zoom)</div>
<div class="t" style="left:892px;top:137.5px;height:13px;line-height:13px;font-size:10px;color:#ddd;transform:translateX(-50%);">&#x2715;</div>
<svg width="898" height="406" viewBox="2 151 898 406" style="position:absolute;left:2px;top:151px"><rect x="2" y="151" width="898" height="407" fill="#000"/><line x1="32.5" y1="151" x2="32.5" y2="558" stroke="#505050" stroke-width="1" stroke-dasharray="1,4.27"/><line x1="50.5" y1="151" x2="50.5" y2="558" stroke="#505050" stroke-width="1" stroke-dasharray="1,4.27"/><line x1="68.5" y1="151" x2="68.5" y2="558" stroke="#505050" stroke-width="1" stroke-dasharray="1,4.27"/><line x1="86.4" y1="151" x2="86.4" y2="558" stroke="#505050" stroke-width="1" stroke-dasharray="1,4.27"/><line x1="122.4" y1="151" x2="122.4" y2="558" stroke="#505050" stroke-width="1" stroke-dasharray="1,4.27"/><line x1="140.4" y1="151" x2="140.4" y2="558" stroke="#505050" stroke-width="1" stroke-dasharray="1,4.27"/><line x1="158.4" y1="151" x2="158.4" y2="558" stroke="#505050" stroke-width="1" stroke-dasharray="1,4.27"/><line x1="176.4" y1="151" x2="176.4" y2="558" stroke="#505050" stroke-width="1" stroke-dasharray="1,4.27"/><line x1="212.3" y1="151" x2="212.3" y2="558" stroke="#505050" stroke-width="1" stroke-dasharray="1,4.27"/><line x1="230.3" y1="151" x2="230.3" y2="558" stroke="#505050" stroke-width="1" stroke-dasharray="1,4.27"/><line x1="248.3" y1="151" x2="248.3" y2="558" stroke="#505050" stroke-width="1" stroke-dasharray="1,4.27"/><line x1="266.3" y1="151" x2="266.3" y2="558" stroke="#505050" stroke-width="1" stroke-dasharray="1,4.27"/><line x1="302.2" y1="151" x2="302.2" y2="558" stroke="#505050" stroke-width="1" stroke-dasharray="1,4.27"/><line x1="320.2" y1="151" x2="320.2" y2="558" stroke="#505050" stroke-width="1" stroke-dasharray="1,4.27"/><line x1="338.2" y1="151" x2="338.2" y2="558" stroke="#505050" stroke-width="1" stroke-dasharray="1,4.27"/><line x1="356.2" y1="151" x2="356.2" y2="558" stroke="#505050" stroke-width="1" stroke-dasharray="1,4.27"/><line x1="392.2" y1="151" x2="392.2" y2="558" stroke="#505050" stroke-width="1" stroke-dasharray="1,4.27"/><line x1="410.1" y1="151" x2="410.1" y2="558" stroke="#505050" stroke-width="1" stroke-dasharray="1,4.27"/><line x1="428.1" y1="151" x2="428.1" y2="558" stroke="#505050" stroke-width="1" stroke-dasharray="1,4.27"/><line x1="446.1" y1="151" x2="446.1" y2="558" stroke="#505050" stroke-width="1" stroke-dasharray="1,4.27"/><line x1="482.1" y1="151" x2="482.1" y2="558" stroke="#505050" stroke-width="1" stroke-dasharray="1,4.27"/><line x1="500.1" y1="151" x2="500.1" y2="558" stroke="#505050" stroke-width="1" stroke-dasharray="1,4.27"/><line x1="518.1" y1="151" x2="518.1" y2="558" stroke="#505050" stroke-width="1" stroke-dasharray="1,4.27"/><line x1="536" y1="151" x2="536" y2="558" stroke="#505050" stroke-width="1" stroke-dasharray="1,4.27"/><line x1="572" y1="151" x2="572" y2="558" stroke="#505050" stroke-width="1" stroke-dasharray="1,4.27"/><line x1="590" y1="151" x2="590" y2="558" stroke="#505050" stroke-width="1" stroke-dasharray="1,4.27"/><line x1="608" y1="151" x2="608" y2="558" stroke="#505050" stroke-width="1" stroke-dasharray="1,4.27"/><line x1="626" y1="151" x2="626" y2="558" stroke="#505050" stroke-width="1" stroke-dasharray="1,4.27"/><line x1="661.9" y1="151" x2="661.9" y2="558" stroke="#505050" stroke-width="1" stroke-dasharray="1,4.27"/><line x1="679.9" y1="151" x2="679.9" y2="558" stroke="#505050" stroke-width="1" stroke-dasharray="1,4.27"/><line x1="697.9" y1="151" x2="697.9" y2="558" stroke="#505050" stroke-width="1" stroke-dasharray="1,4.27"/><line x1="715.9" y1="151" x2="715.9" y2="558" stroke="#505050" stroke-width="1" stroke-dasharray="1,4.27"/><line x1="751.8" y1="151" x2="751.8" y2="558" stroke="#505050" stroke-width="1" stroke-dasharray="1,4.27"/><line x1="769.8" y1="151" x2="769.8" y2="558" stroke="#505050" stroke-width="1" stroke-dasharray="1,4.27"/><line x1="787.8" y1="151" x2="787.8" y2="558" stroke="#505050" stroke-width="1" stroke-dasharray="1,4.27"/><line x1="805.8" y1="151" x2="805.8" y2="558" stroke="#505050" stroke-width="1" stroke-dasharray="1,4.27"/><line x1="841.8" y1="151" x2="841.8" y2="558" stroke="#505050" stroke-width="1" stroke-dasharray="1,4.27"/><line x1="859.7" y1="151" x2="859.7" y2="558" stroke="#505050" stroke-width="1" stroke-dasharray="1,4.27"/><line x1="877.7" y1="151" x2="877.7" y2="558" stroke="#505050" stroke-width="1" stroke-dasharray="1,4.27"/><line x1="14.5" y1="151" x2="14.5" y2="558" stroke="#4c4c4c" stroke-width="1"/><line x1="104.4" y1="151" x2="104.4" y2="558" stroke="#4c4c4c" stroke-width="1"/><line x1="194.3" y1="151" x2="194.3" y2="558" stroke="#4c4c4c" stroke-width="1"/><line x1="284.3" y1="151" x2="284.3" y2="558" stroke="#4c4c4c" stroke-width="1"/><line x1="374.2" y1="151" x2="374.2" y2="558" stroke="#4c4c4c" stroke-width="1"/><line x1="464.1" y1="151" x2="464.1" y2="558" stroke="#4c4c4c" stroke-width="1"/><line x1="554" y1="151" x2="554" y2="558" stroke="#4c4c4c" stroke-width="1"/><line x1="643.9" y1="151" x2="643.9" y2="558" stroke="#4c4c4c" stroke-width="1"/><line x1="733.9" y1="151" x2="733.9" y2="558" stroke="#4c4c4c" stroke-width="1"/><line x1="823.8" y1="151" x2="823.8" y2="558" stroke="#4c4c4c" stroke-width="1"/><line x1="2" y1="203.5" x2="900" y2="203.5" stroke="#8a8a8a" stroke-width="1.6"/><line x1="2" y1="256" x2="900" y2="256" stroke="#8a8a8a" stroke-width="1.6"/><line x1="2" y1="309" x2="900" y2="309" stroke="#8a8a8a" stroke-width="1.6"/><line x1="2" y1="362.5" x2="900" y2="362.5" stroke="#8a8a8a" stroke-width="1.6"/><line x1="2" y1="415" x2="900" y2="415" stroke="#8a8a8a" stroke-width="1.6"/><line x1="2" y1="467.7" x2="900" y2="467.7" stroke="#8a8a8a" stroke-width="1.6"/><line x1="2" y1="520.5" x2="900" y2="520.5" stroke="#8a8a8a" stroke-width="1.6"/><line x1="2" y1="177" x2="900" y2="177" stroke="#c8c8c8" stroke-width="1" stroke-dasharray="3.5,2.5" opacity="0.75"/><line x1="2" y1="229" x2="900" y2="229" stroke="#c8c8c8" stroke-width="1" stroke-dasharray="3.5,2.5" opacity="0.75"/><line x1="2" y1="283" x2="900" y2="283" stroke="#c8c8c8" stroke-width="1" stroke-dasharray="3.5,2.5" opacity="0.75"/><line x1="2" y1="336.5" x2="900" y2="336.5" stroke="#c8c8c8" stroke-width="1" stroke-dasharray="3.5,2.5" opacity="0.75"/><line x1="2" y1="388" x2="900" y2="388" stroke="#c8c8c8" stroke-width="1" stroke-dasharray="3.5,2.5" opacity="0.75"/><line x1="2" y1="443" x2="900" y2="443" stroke="#c8c8c8" stroke-width="1" stroke-dasharray="3.5,2.5" opacity="0.75"/><line x1="2" y1="495" x2="900" y2="495" stroke="#c8c8c8" stroke-width="1" stroke-dasharray="3.5,2.5" opacity="0.75"/><rect x="90.4" y="193" width="28" height="7" fill="#000"/><text x="104.4" y="199.8" font-family="Liberation Sans" font-size="7.6" fill="#a0a0a0" text-anchor="middle" transform="translate(10.4,0) scale(0.9,1)">-26.4 ms</text><rect x="180.3" y="193" width="28" height="7" fill="#000"/><text x="194.3" y="199.8" font-family="Liberation Sans" font-size="7.6" fill="#a0a0a0" text-anchor="middle" transform="translate(19.4,0) scale(0.9,1)">-26 ms</text><rect x="270.2" y="193" width="28" height="7" fill="#000"/><text x="284.2" y="199.8" font-family="Liberation Sans" font-size="7.6" fill="#a0a0a0" text-anchor="middle" transform="translate(28.4,0) scale(0.9,1)">-25.6 ms</text><rect x="360.2" y="193" width="28" height="7" fill="#000"/><text x="374.2" y="199.8" font-family="Liberation Sans" font-size="7.6" fill="#a0a0a0" text-anchor="middle" transform="translate(37.4,0) scale(0.9,1)">-25.2 ms</text><rect x="450.1" y="193" width="28" height="7" fill="#000"/><text x="464.1" y="199.8" font-family="Liberation Sans" font-size="7.6" fill="#a0a0a0" text-anchor="middle" transform="translate(46.4,0) scale(0.9,1)">-24.8 ms</text><rect x="540" y="193" width="28" height="7" fill="#000"/><text x="554" y="199.8" font-family="Liberation Sans" font-size="7.6" fill="#a0a0a0" text-anchor="middle" transform="translate(55.4,0) scale(0.9,1)">-24.4 ms</text><rect x="629.9" y="193" width="28" height="7" fill="#000"/><text x="643.9" y="199.8" font-family="Liberation Sans" font-size="7.6" fill="#a0a0a0" text-anchor="middle" transform="translate(64.4,0) scale(0.9,1)">-24 ms</text><rect x="719.8" y="193" width="28" height="7" fill="#000"/><text x="733.8" y="199.8" font-family="Liberation Sans" font-size="7.6" fill="#a0a0a0" text-anchor="middle" transform="translate(73.4,0) scale(0.9,1)">-23.6 ms</text><rect x="809.8" y="193" width="28" height="7" fill="#000"/><text x="823.8" y="199.8" font-family="Liberation Sans" font-size="7.6" fill="#a0a0a0" text-anchor="middle" transform="translate(82.4,0) scale(0.9,1)">-23.2 ms</text><path d="M2,191.2 L2.2,194.8 L2.5,191.4 L2.8,186.4 L3,181.3 L3.2,176.7 L3.5,176.4 L3.8,176.6 L4,176.1 L4.2,175.9 L4.5,176.2 L4.8,175.9 L5,176.1 L5.2,176 L5.5,176.2 L5.8,176.2 L6,176.6 L6.2,177 L6.5,177 L6.8,177.3 L7,177.4 L7.2,177.3 L7.5,178 L7.8,178.2 L8,178.4 L8.2,178.6 L8.5,179.4 L8.8,179.6 L9,180.1 L9.2,180.6 L9.5,181 L9.8,181.6 L10,181.8 L10.2,182.6 L10.5,183 L10.8,186.7 L11,190.2 L11.2,193.2 L11.5,193.3 L11.8,188.2 L12,183.5 L12.2,178.2 L12.5,176.9 L12.8,176.4 L13,176.3 L13.2,176.1 L13.5,175.9 L13.8,175.9 L14,175.9 L14.2,176.2 L14.5,176.2 L14.8,176.5 L15,176.7 L15.2,177 L15.5,177.1 L15.8,176.9 L16,177.4 L16.2,177.7 L16.5,177.9 L16.8,178 L17,178.4 L17.2,178.5 L17.5,179.2 L17.8,179.5 L18,179.7 L18.2,180 L18.5,180.9 L18.8,181.4 L19,181.5 L19.2,182.3 L19.5,182.7 L19.8,185 L20,188.5 L20.2,192.2 L20.5,195.7 L20.8,190.2 L21,185.4 L21.2,180 L21.5,177 L21.8,176.6 L22,176.6 L22.2,176.4 L22.5,176 L22.8,176.2 L23,175.8 L23.2,175.7 L23.5,176.1 L23.8,175.9 L24,176.2 L24.2,176.6 L24.5,177 L24.8,176.9 L25,177 L25.2,177.6 L25.5,177.5 L25.8,178.1 L26,178.4 L26.2,178.5 L26.5,178.9 L26.8,179.3 L27,179.7 L27.2,180.1 L27.5,180.6 L27.8,181.1 L28,181.7 L28.2,182 L28.5,182.5 L28.8,183.9 L29,187.1 L29.2,190.6 L29.5,194.4 L29.8,192.5 L30,187.4 L30.2,182 L30.5,177.2 L30.8,176.8 L31,176.2 L31.2,176.3 L31.5,176.1 L31.8,175.7 L32,176 L32.2,175.9 L32.5,176.1 L32.8,176 L33,176.4 L33.2,176.6 L33.5,176.5 L33.8,176.8 L34,177.2 L34.2,177.5 L34.5,177.4 L34.8,177.8 L35,178.1 L35.2,178.3 L35.5,178.7 L35.8,179 L36,179.4 L36.2,180 L36.5,180.3 L36.8,180.8 L37,181.4 L37.2,181.6 L37.5,182.3 L37.8,183 L38,185.7 L38.2,189.1 L38.5,192.9 L38.8,194.4 L39,189.2 L39.2,184.3 L39.5,179.3 L39.8,176.6 L40,176.5 L40.2,176.3 L40.5,176.3 L40.8,176 L41,176.1 L41.2,175.7 L41.5,175.9 L41.8,176.1 L42,176.4 L42.2,176.4 L42.5,176.5 L42.8,176.8 L43,177.1 L43.2,177.1 L43.5,177.6 L43.8,177.8 L44,177.8 L44.2,178.1 L44.5,178.7 L44.8,179 L45,179.5 L45.2,179.7 L45.5,180 L45.8,180.5 L46,181.2 L46.2,181.5 L46.5,182 L46.8,182.6 L47,184.4 L47.2,187.9 L47.5,191.6 L47.8,194.6 L48,191.2 L48.2,186.6 L48.5,181.5 L48.8,177.2 L49,176.7 L49.2,176.7 L49.5,176.4 L49.8,175.9 L50,176.1 L50.2,176.1 L50.5,176 L50.8,176 L51,176 L51.2,176.3 L51.5,176.4 L51.8,176.6 L52,177.1 L52.2,177 L52.5,177.5 L52.8,177.3 L53,178 L53.2,178.2 L53.5,178.7 L53.8,179 L54,179.4 L54.2,179.6 L54.5,179.8 L54.8,180.6 L55,180.7 L55.2,181.3 L55.5,182 L55.8,182.4 L56,183 L56.2,186.7 L56.5,190 L56.8,193.3 L57,193.3 L57.2,188.6 L57.5,183.3 L57.8,178.4 L58,176.7 L58.2,176.4 L58.5,176.3 L58.8,176.3 L59,175.8 L59.2,176 L59.5,176.1 L59.8,176.1 L60,176.2 L60.2,176 L60.5,176.5 L60.8,176.9 L61,176.8 L61.2,177 L61.5,177.1 L61.8,177.5 L62,177.7 L62.2,178 L62.5,178.5 L62.8,178.4 L63,178.8 L63.2,179.2 L63.5,179.6 L63.8,180.1 L64,181 L64.2,181.4 L64.5,181.5 L64.8,182.2 L65,182.6 L65.2,185 L65.5,188.5 L65.8,192.1 L66,195.5 L66.2,190.3 L66.5,185.2 L66.8,180.2 L67,176.7 L67.2,176.7 L67.5,176.5 L67.8,176.1 L68,175.8 L68.2,175.8 L68.5,175.8 L68.8,176 L69,176.2 L69.2,176.1 L69.5,176.5 L69.8,176.7 L70,176.9 L70.2,177 L70.5,177.2 L70.8,177.5 L71,177.6 L71.2,178 L71.5,178.2 L71.8,178.4 L72,178.9 L72.2,179.4 L72.5,179.5 L72.8,180.1 L73,180.5 L73.2,181.2 L73.5,181.7 L73.8,181.9 L74,182.7 L74.2,183.9 L74.5,187.1 L74.8,190.6 L75,193.9 L75.2,192.6 L75.5,187.4 L75.8,182.5 L76,177.3 L76.2,176.8 L76.5,176.6 L76.8,176.3 L77,175.9 L77.2,176 L77.5,175.6 L77.8,175.7 L78,176.1 L78.2,175.9 L78.5,176.1 L78.8,176.3 L79,177 L79.2,176.8 L79.5,176.9 L79.8,177.5 L80,177.3 L80.2,177.9 L80.5,178.2 L80.8,178.6 L81,179 L81.2,179.1 L81.5,179.6 L81.8,179.7 L82,180.5 L82.2,180.8 L82.5,181.4 L82.8,181.6 L83,182.4 L83.2,183.1 L83.5,185.6 L83.8,189.2 L84,192.8 L84.2,194.6 L84.5,189.3 L84.8,184.2 L85,179.1 L85.2,176.9 L85.5,176.7 L85.8,176.3 L86,176.1 L86.2,175.9 L86.5,175.8 L86.8,175.9 L87,175.7 L87.2,176 L87.5,176.5 L87.8,176.4 L88,176.8 L88.2,176.8 L88.5,177.2 L88.8,177.3 L89,177.5 L89.2,177.7 L89.5,177.9 L89.8,178.3 L90,178.8 L90.2,178.8 L90.5,179.1 L90.8,179.9 L91,180.4 L91.2,180.6 L91.5,181.1 L91.8,181.7 L92,181.9 L92.2,182.5 L92.5,184.3 L92.8,187.9 L93,191.3 L93.2,194.7 L93.5,191.5 L93.8,186.6 L94,181.2 L94.2,177.1 L94.5,176.6 L94.8,176.6 L95,176.3 L95.2,175.9 L95.5,175.8 L95.8,175.7 L96,175.9 L96.2,175.9 L96.5,176 L96.8,176.3 L97,176.5 L97.2,177 L97.5,176.8 L97.8,177.4 L98,177.3 L98.2,177.6 L98.5,177.8 L98.8,178.3 L99,178.6 L99.2,178.8 L99.5,179.2 L99.8,179.7 L100,180.2 L100.2,180.4 L100.5,181 L100.8,181.6 L101,181.9 L101.2,182.3 L101.5,182.9 L101.8,186.6 L102,190.1 L102.2,193.7 L102.5,193.6 L102.8,188.3 L103,183.1 L103.2,178.1 L103.5,176.6 L103.8,176.6 L104,176.5 L104.2,176.3 L104.5,175.9 L104.8,176.1 L105,175.8 L105.2,175.9 L105.5,176.2 L105.8,176 L106,176.3 L106.2,176.9 L106.5,176.9 L106.8,177 L107,177.3 L107.2,177.6 L107.5,177.5 L107.8,177.9 L108,178.3 L108.2,178.7 L108.5,178.9 L108.8,179.5 L109,180.1 L109.2,180.2 L109.5,180.7 L109.8,181 L110,181.6 L110.2,182.3 L110.5,182.5 L110.8,185.3 L111,188.8 L111.2,191.8 L111.5,195.7 L111.8,190.4 L112,185.5 L112.2,180.4 L112.5,176.8 L112.8,176.7 L113,176.5 L113.2,176.3 L113.5,175.9 L113.8,176.1 L114,176.1 L114.2,176 L114.5,176 L114.8,176 L115,176.4 L115.2,176.6 L115.5,177 L115.8,177.1 L116,177.2 L116.2,177.2 L116.5,177.7 L116.8,178 L117,178 L117.2,178.7 L117.5,179 L117.8,179.1 L118,179.9 L118.2,179.9 L118.5,180.5 L118.8,181.1 L119,181.5 L119.2,182 L119.5,182.6 L119.8,183.7 L120,187.1 L120.2,190.5 L120.5,193.9 L120.8,192.6 L121,187.5 L121.2,182.3 L121.5,177.3 L121.8,176.7 L122,176.4 L122.2,176.2 L122.5,176.3 L122.8,175.7 L123,175.9 L123.2,175.8 L123.5,176.1 L123.8,176 L124,176.2 L124.2,176.5 L124.5,176.8 L124.8,177.1 L125,177 L125.2,177.5 L125.5,177.3 L125.8,177.7 L126,177.9 L126.2,178.2 L126.5,178.9 L126.8,179.2 L127,179.3 L127.2,179.8 L127.5,180.3 L127.8,180.9 L128,181.5 L128.2,181.9 L128.5,182.3 L128.8,182.7 L129,185.8 L129.2,189.1 L129.5,192.7 L129.8,194.5 L130,189.3 L130.2,184.2 L130.5,179.4 L130.8,176.6 L131,176.7 L131.2,176.5 L131.5,176.4 L131.8,175.9 L132,175.9 L132.2,175.9 L132.5,176 L132.8,176.3 L133,176.3 L133.2,176.3 L133.5,176.9 L133.8,176.9 L134,177.1 L134.2,177.3 L134.5,177.2 L134.8,177.8 L135,178 L135.2,178.2 L135.5,178.6 L135.8,178.9 L136,179.2 L136.2,179.8 L136.5,179.9 L136.8,180.6 L137,181.2 L137.2,181.6 L137.5,182.1 L137.8,182.8 L138,184.6 L138.2,187.7 L138.5,191.5 L138.8,194.9 L139,191.2 L139.2,186.3 L139.5,181.1 L139.8,176.7 L140,176.7 L140.2,176.7 L140.5,176.1 L140.8,176.2 L141,176 L141.2,175.7 L141.5,176.1 L141.8,176 L142,176.4 L142.2,176.4 L142.5,176.7 L142.8,176.8 L143,177.2 L143.2,177.4 L143.5,177.5 L143.8,177.5 L144,178 L144.2,178.1 L144.5,178.3 L144.8,178.6 L145,179 L145.2,179.4 L145.5,179.8 L145.8,180.4 L146,181 L146.2,181.4 L146.5,181.9 L146.8,182.5 L147,183 L147.2,186.5 L147.5,190.1 L147.8,193.4 L148,193.3 L148.2,188.6 L148.5,183.4 L148.8,178.2 L149,176.7 L149.2,176.5 L149.5,176.3 L149.8,176 L150,175.7 L150.2,175.8 L150.5,176 L150.8,175.8 L151,176.1 L151.2,176.1 L151.5,176.3 L151.8,176.6 L152,177 L152.2,176.9 L152.5,177 L152.8,177.3 L153,177.6 L153.2,178 L153.5,178.1 L153.8,178.4 L154,179 L154.2,179.4 L154.5,179.9 L154.8,180 L155,180.7 L155.2,181.1 L155.5,181.5 L155.8,182.4 L156,182.6 L156.2,184.9 L156.5,188.6 L156.8,191.9 L157,195.6 L157.2,190.3 L157.5,185.1 L157.8,180 L158,177 L158.2,176.5 L158.5,176.5 L158.8,176.2 L159,176.2 L159.2,175.8 L159.5,175.8 L159.8,175.8 L160,176.2 L160.2,176.2 L160.5,176.3 L160.8,176.4 L161,177 L161.2,177.3 L161.5,177.2 L161.8,177.1 L162,177.4 L162.2,177.7 L162.5,178 L162.8,178.3 L163,178.7 L163.2,179.3 L163.5,179.9 L163.8,179.9 L164,180.8 L164.2,181 L164.5,181.6 L164.8,182.2 L165,182.7 L165.2,183.5 L165.5,187.1 L165.8,190.7 L166,194.3 L166.2,192.2 L166.5,187.3 L166.8,182.5 L167,177 L167.2,176.7 L167.5,176.4 L167.8,176.3 L168,176.3 L168.2,175.8 L168.5,176 L168.8,176 L169,176.1 L169.2,176.1 L169.5,176.5 L169.8,176.5 L170,176.7 L170.2,176.9 L170.5,177.3 L170.8,177.3 L171,177.4 L171.2,177.6 L171.5,178.2 L171.8,178.4 L172,178.8 L172.2,179 L172.5,179.5 L172.8,179.7 L173,180.5 L173.2,180.6 L173.5,181.3 L173.8,181.9 L174,182.4 L174.2,182.6 L174.5,185.7 L174.8,189.5 L175,192.8 L175.2,194.7 L175.5,189.6 L175.8,184.3 L176,179.4 L176.2,177 L176.5,176.5 L176.8,176.3 L177,175.9 L177.2,175.9 L177.5,176.1 L177.8,175.7 L178,176 L178.2,175.9 L178.5,176 L178.8,176.5 L179,176.6 L179.2,176.7 L179.5,176.9 L179.8,177.3 L180,177.5 L180.2,177.4 L180.5,177.8 L180.8,178.5 L181,178.5 L181.2,179 L181.5,179.3 L181.8,179.9 L182,180.2 L182.2,180.8 L182.5,181.1 L182.8,181.4 L183,181.9 L183.2,182.4 L183.5,184.6 L183.8,187.7 L184,191.1 L184.2,195 L184.5,191.3 L184.8,186.5 L185,181.1 L185.2,176.9 L185.5,176.5 L185.8,176.6 L186,176.3 L186.2,176.1 L186.5,176.1 L186.8,176.1 L187,175.8 L187.2,176 L187.5,176.1 L187.8,176.1 L188,176.7 L188.2,176.9 L188.5,177.2 L188.8,177 L189,177.4 L189.2,177.5 L189.5,177.9 L189.8,177.9 L190,178.4 L190.2,178.8 L190.5,179 L190.8,179.6 L191,180.1 L191.2,180.4 L191.5,181 L191.8,181.4 L192,181.7 L192.2,182.3 L192.5,183.3 L192.8,186.4 L193,189.9 L193.2,193.2 L193.5,193.3 L193.8,188.2 L194,183.5 L194.2,178.3 L194.5,177 L194.8,176.8 L195,176.4 L195.2,176.3 L195.5,176 L195.8,175.9 L196,176.1 L196.2,176.2 L196.5,176.3 L196.8,176.2 L197,176.6 L197.2,176.7 L197.5,177.2 L197.8,177.3 L198,177.2 L198.2,177.7 L198.5,177.6 L198.8,177.8 L199,178.4 L199.2,178.6 L199.5,179 L199.8,179.5 L200,179.6 L200.2,180.4 L200.5,180.6 L200.8,181.2 L201,181.6 L201.2,182.3 L201.5,182.8 L201.8,185 L202,188.4 L202.2,191.9 L202.5,195.5 L202.8,190.2 L203,185.2 L203.2,180.4 L203.5,177 L203.8,176.9 L204,176.6 L204.2,176.4 L204.5,176 L204.8,175.8 L205,175.8 L205.2,175.9 L205.5,176 L205.8,176.2 L206,176.3 L206.2,176.8 L206.5,176.8 L206.8,177 L207,177.4 L207.2,177.5 L207.5,177.5 L207.8,177.8 L208,178.3 L208.2,178.3 L208.5,178.7 L208.8,179.3 L209,179.7 L209.2,179.9 L209.5,169 L209.5,178.7 L209.8,179 L210,179.6 L210.2,179.7 L210.5,180.2 L210.8,180.8 L211,182.8 L211.2,184.2 L211.5,186.1 L211.8,185.1 L212,182.6 L212.2,179.8 L212.5,176.9 L212.8,176.9 L213,176.5 L213.2,176.5 L213.5,176.4 L213.8,176.6 L214,176.4 L214.2,176.3 L214.5,176.2 L214.8,176.5 L215,176.7 L215.2,176.8 L215.5,177.1 L215.8,177.2 L216,176.9 L216.2,177 L216.5,177.4 L216.8,177.6 L217,177.6 L217.2,177.9 L217.5,178 L217.8,178 L218,178.2 L218.2,178.3 L218.5,178.9 L218.8,179.3 L219,179.5 L219.2,179.6 L219.5,179.9 L219.8,180.4 L220,181.9 L220.2,183.7 L220.5,185.5 L220.8,186.5 L221,183.5 L221.2,180.8 L221.5,178.3 L221.8,177.2 L222,176.8 L222.2,176.6 L222.5,176.5 L222.8,176.4 L223,176.6 L223.2,176.4 L223.5,176.7 L223.8,176.3 L224,176.5 L224.2,176.7 L224.5,176.8 L224.8,177.1 L225,177.2 L225.2,177.3 L225.5,177.3 L225.8,177.1 L226,177.5 L226.2,177.7 L226.5,177.9 L226.8,177.9 L227,178.4 L227.2,178.7 L227.5,178.5 L227.8,179 L228,179.2 L228.2,179.5 L228.5,180 L228.8,180.3 L229,181.1 L229.2,182.7 L229.5,185 L229.8,186.5 L230,184.7 L230.2,182.2 L230.5,179.2 L230.8,176.9 L231,177.1 L231.2,176.9 L231.5,176.5 L231.8,176.4 L232,176.3 L232.2,176.2 L232.5,176.3 L232.8,176.7 L233,176.3 L233.2,176.5 L233.5,176.6 L233.8,176.7 L234,177 L234.2,177.2 L234.5,177.4 L234.8,177.4 L235,177.6 L235.2,177.4 L235.5,177.7 L235.8,178.2 L236,178 L236.2,178.3 L236.5,178.6 L236.8,178.7 L237,179.1 L237.2,179.1 L237.5,179.5 L237.8,180.2 L238,180.1 L238.2,182.3 L238.5,183.8 L238.8,186.1 L239,186 L239.2,183.2 L239.5,180.2 L239.8,177.4 L240,177 L240.2,176.6 L240.5,176.5 L240.8,176.7 L241,176.6 L241.2,176.2 L241.5,176.6 L241.8,176.5 L242,176.4 L242.2,176.4 L242.5,176.7 L242.8,177.1 L243,176.9 L243.2,176.9 L243.5,177 L243.8,177.1 L244,177.3 L244.2,177.8 L244.5,177.5 L244.8,177.7 L245,178.3 L245.2,178.6 L245.5,178.8 L245.8,178.6 L246,178.9 L246.2,179.5 L246.5,179.5 L246.8,179.9 L247,180 L247.2,181.2 L247.5,183.2 L247.8,185.3 L248,187.1 L248.2,184.3 L248.5,181.5 L248.8,178.8 L249,176.9 L249.2,176.8 L249.5,176.8 L249.8,176.4 L250,176.5 L250.2,176.6 L250.5,176.6 L250.8,176.3 L251,176.7 L251.2,176.7 L251.5,176.5 L251.8,176.7 L252,176.8 L252.2,176.8 L252.5,177.3 L252.8,177.2 L253,177.5 L253.2,177.3 L253.5,177.4 L253.8,178 L254,178.2 L254.2,178.5 L254.5,178.5 L254.8,178.7 L255,179 L255.2,179 L255.5,179.4 L255.8,179.7 L256,179.8 L256.2,180.7 L256.5,182.4 L256.8,184.4 L257,186.2 L257.2,185.3 L257.5,182.5 L257.8,179.9 L258,177.4 L258.2,177.1 L258.5,176.9 L258.8,176.8 L259,176.4 L259.2,176.7 L259.5,176.3 L259.8,176.2 L260,176.4 L260.2,176.6 L260.5,176.5 L260.8,176.8 L261,176.8 L261.2,177.2 L261.5,177 L261.8,177.1 L262,177.3 L262.2,177.6 L262.5,177.8 L262.8,177.8 L263,177.9 L263.2,178.2 L263.5,178.1 L263.8,178.5 L264,179 L264.2,179.2 L264.5,179.1 L264.8,179.8 L265,179.8 L265.2,180.4 L265.5,181.7 L265.8,183.5 L266,185.5 L266.2,186.6 L266.5,183.7 L266.8,181.1 L267,178.3 L267.2,176.8 L267.5,176.7 L267.8,176.6 L268,176.5 L268.2,176.4 L268.5,176.5 L268.8,176.6 L269,176.5 L269.2,176.3 L269.5,176.4 L269.8,176.6 L270,176.9 L270.2,176.8 L270.5,176.8 L270.8,177 L271,177.1 L271.2,177.1 L271.5,177.5 L271.8,177.9 L272,177.9 L272.2,178.2 L272.5,178.4 L272.8,178.7 L273,178.9 L273.2,178.9 L273.5,179.3 L273.8,179.3 L274,179.9 L274.2,180 L274.5,181 L274.8,183.1 L275,184.7 L275.2,186.5 L275.5,185 L275.8,182.1 L276,179.1 L276.2,176.7 L276.5,176.8 L276.8,176.4 L277,176.7 L277.2,176.3 L277.5,176.3 L277.8,176.3 L278,176.4 L278.2,176.4 L278.5,176.6 L278.8,176.7 L279,176.7 L279.2,176.7 L279.5,177.3 L279.8,177.2 L280,177 L280.2,177.3 L280.5,177.6 L280.8,177.9 L281,177.6 L281.2,177.7 L281.5,178.2 L281.8,178.4 L282,178.8 L282.2,179 L282.5,179 L282.8,179.3 L283,179.7 L283.2,180.1 L283.5,180.1 L283.8,182.1 L284,183.8 L284.2,185.9 L284.5,185.7 L284.8,183.4 L285,180.4 L285.2,177.7 L285.5,176.7 L285.8,176.6 L286,176.6 L286.2,176.7 L286.5,176.5 L286.8,176.3 L287,176.6 L287.2,176.5 L287.5,176.5 L287.8,176.4 L288,176.6 L288.2,177.1 L288.5,176.8 L288.8,177.1 L289,177.2 L289.2,177.2 L289.5,177.5 L289.8,177.7 L290,177.9 L290.2,178 L290.5,177.9 L290.8,178.1 L291,178.5 L291.2,178.7 L291.5,178.9 L291.8,179.5 L292,179.4 L292.2,180 L292.5,180.3 L292.8,181.2 L293,183.5 L293.2,185.1 L293.5,186.9 L293.8,184.1 L294,181.3 L294.2,178.8 L294.5,176.9 L294.8,177 L295,176.8 L295.2,176.3 L295.5,176.4 L295.8,176.4 L296,176.2 L296.2,176.3 L296.5,176.4 L296.8,176.7 L297,176.6 L297.2,176.6 L297.5,176.8 L297.8,177 L298,177.1 L298.2,177.1 L298.5,177.4 L298.8,177.3 L299,177.7 L299.2,177.9 L299.5,177.9 L299.8,178.3 L300,178.4 L300.2,178.7 L300.5,179 L300.8,179.2 L301,179.4 L301.2,179.5 L301.5,180.1 L301.8,180.8 L302,182.5 L302.2,184.4 L302.5,186.1 L302.8,185.6 L303,182.7 L303.2,179.7 L303.5,177.3 L303.8,177.1 L304,176.6 L304.2,176.8 L304.5,176.5 L304.8,176.3 L305,176.5 L305.2,176.3 L305.5,176.6 L305.8,176.6 L306,176.4 L306.2,176.8 L306.5,177.1 L306.8,177 L307,177.1 L307.2,177.3 L307.5,177.3 L307.8,177.4 L308,177.6 L308.2,177.9 L308.5,177.8 L308.8,177.9 L309,178.5 L309.2,178.6 L309.5,178.7 L309.8,179.3 L310,179.5 L310.2,179.6 L310.5,180.1 L310.8,180.3 L311,181.9 L311.2,183.5 L311.5,185.3 L311.8,186.5 L312,183.8 L312.2,180.9 L312.5,178.2 L312.8,177 L313,176.6 L313.2,176.7 L313.5,176.6 L313.8,176.4 L314,176.2 L314.2,176.4 L314.5,176.3 L314.8,176.6 L315,176.4 L315.2,176.6 L315.5,176.7 L315.8,176.9 L316,177.1 L316.2,176.9 L316.5,177 L316.8,177.4 L317,177.4 L317.2,177.7 L317.5,177.7 L317.8,177.9 L318,178.3 L318.2,178.7 L318.5,178.9 L318.8,179 L319,179.2 L319.2,179.3 L319.5,179.6 L319.8,179.9 L320,181.2 L320.2,182.7 L320.5,185 L320.8,186.6 L321,184.8 L321.2,181.9 L321.5,179.5 L321.8,176.8 L322,176.9 L322.2,176.7 L322.5,176.4 L322.8,176.3 L323,176.7 L323.2,176.5 L323.5,176.5 L323.8,176.7 L324,176.3 L324.2,176.7 L324.5,176.9 L324.8,176.8 L325,177 L325.2,177.3 L325.5,177.1 L325.8,177.4 L326,177.3 L326.2,177.7 L326.5,177.7 L326.8,178 L327,178.1 L327.2,178.6 L327.5,178.7 L327.8,178.9 L328,179.2 L328.2,179.3 L328.5,179.8 L328.8,179.8 L329,180.3 L329.2,182.2 L329.5,184 L329.8,185.7 L330,185.7 L330.2,183.2 L330.5,180.3 L330.8,177.8 L331,176.9 L331.2,177 L331.5,176.8 L331.8,176.6 L332,176.4 L332.2,176.2 L332.5,176.4 L332.8,176.6 L333,176.7 L333.2,176.4 L333.5,176.5 L333.8,177.1 L334,177.1 L334.2,177 L334.5,177.3 L334.8,177.1 L335,177.4 L335.2,177.6 L335.5,177.8 L335.8,177.7 L336,177.9 L336.2,178.4 L336.5,178.7 L336.8,178.6 L337,178.8 L337.2,179.1 L337.5,179.7 L337.8,179.8 L338,180.1 L338.2,181.6 L338.5,183.3 L338.8,185 L339,187.1 L339.2,184 L339.5,181.4 L339.8,178.9 L340,176.8 L340.2,176.6 L340.5,176.7 L340.8,176.5 L341,176.7 L341.2,176.2 L341.5,176.6 L341.8,176.4 L342,176.6 L342.2,176.5 L342.5,176.8 L342.8,176.7 L343,176.8 L343.2,177 L343.5,177.2 L343.8,177.1 L344,177.2 L344.2,177.4 L344.5,177.4 L344.8,177.7 L345,178.1 L345.2,178.2 L345.5,178.5 L345.8,178.6 L346,178.7 L346.2,178.9 L346.5,179.3 L346.8,179.5 L347,180 L347.2,180.5 L347.5,182.6 L347.8,184.4 L348,186.3 L348.2,185.5 L348.5,182.6 L348.8,179.8 L349,177 L349.2,176.6 L349.5,176.9 L349.8,176.6 L350,176.3 L350.2,176.6 L350.5,176.4 L350.8,176.5 L351,176.4 L351.2,176.3 L351.5,176.9 L351.8,176.6 L352,176.8 L352.2,177.3 L352.5,176.9 L352.8,177.2 L353,177.3 L353.2,177.3 L353.5,177.8 L353.8,177.7 L354,177.7 L354.2,178.1 L354.5,178.1 L354.8,178.7 L355,179 L355.2,179.3 L355.5,179.1 L355.8,179.7 L356,179.8 L356.2,180.1 L356.5,181.7 L356.8,183.5 L357,185.3 L357.2,186.5 L357.5,183.5 L357.8,181.2 L358,178 L358.2,177.1 L358.5,176.6 L358.8,176.4 L359,176.7 L359.2,176.5 L359.5,176.5 L359.8,176.4 L360,176.5 L360.2,176.3 L360.5,176.7 L360.8,176.7 L361,177.1 L361.2,176.7 L361.5,176.8 L361.8,177.2 L362,177.4 L362.2,177.3 L362.5,177.6 L362.8,177.7 L363,177.8 L363.2,178 L363.5,178.3 L363.8,178.2 L364,178.6 L364.2,179.1 L364.5,179.1 L364.8,179.5 L365,179.6 L365.2,180 L365.5,181.1 L365.8,183 L366,185 L366.2,186.6 L366.5,184.7 L366.8,182 L367,179.1 L367.2,176.8 L367.5,176.9 L367.8,176.8 L368,176.4 L368.2,176.3 L368.5,176.2 L368.8,176.2 L369,176.4 L369.2,176.3 L369.5,176.7 L369.8,176.7 L370,176.7 L370.2,176.9 L370.5,176.8 L370.8,177.2 L371,177.3 L371.2,177.2 L371.5,177.6 L371.8,177.5 L372,177.6 L372.2,177.8 L372.5,178 L372.8,178.4 L373,178.7 L373.2,179 L373.5,178.9 L373.8,179.5 L374,179.6 L374.2,179.9 L374.5,180.3 L374.8,182.1 L375,183.9 L375.2,185.8 L375.5,186 L375.8,183.3 L376,180.6 L376.2,177.5 L376.5,177.1 L376.8,176.9 L377,176.7 L377.2,176.8 L377.5,176.3 L377.8,176.5 L378,176.6 L378.2,176.2 L378.5,176.5 L378.8,176.8 L379,176.6 L379.2,177 L379.5,177.2 L379.8,177 L380,177 L380.2,177.1 L380.5,177.6 L380.8,177.5 L381,177.6 L381.2,177.9 L381.5,178.3 L381.8,178.2 L382,178.3 L382.2,179 L382.5,178.9 L382.8,179.2 L383,179.8 L383.2,179.7 L383.5,179.9 L383.8,181.6 L384,183.1 L384.2,185 L384.5,187.2 L384.8,184.1 L385,181.7 L385.2,178.7 L385.5,176.8 L385.8,176.7 L386,176.7 L386.2,176.6 L386.5,176.4 L386.8,176.4 L387,176.3 L387.2,176.6 L387.5,176.7 L387.8,176.7 L388,176.8 L388.2,176.6 L388.5,176.8 L388.8,176.9 L389,176.8 L389.2,177.2 L389.5,177.2 L389.8,177.2 L390,177 L390.2,176.8 L390.5,176.9 L390.8,176.7 L391,177 L391.2,176.6 L391.5,176.4 L391.8,176.4 L392,175.5 L392.2,175.3 L392.5,174.2 L392.8,173.3 L393,171.8 L393.2,170.7 L393.5,168.6 L393.8,169 L394,170.9 L394.2,172.3 L394.5,173.3 L394.8,174.2 L395,175.2 L395.2,175.5 L395.5,176.4 L395.8,176.4 L396,176.6 L396.2,176.8 L396.5,176.7 L396.8,176.9 L397,177 L397.2,177 L397.5,176.9 L397.8,176.9 L398,177 L398.2,177.1 L398.5,177 L398.8,177.1 L399,177 L399.2,176.8 L399.5,176.8 L399.8,177.1 L400,176.9 L400.2,176.7 L400.5,176.6 L400.8,176.4 L401,175.8 L401.2,175.2 L401.5,174.5 L401.8,173.4 L402,172.5 L402.2,171 L402.5,169.3 L402.8,168.1 L403,170 L403.2,171.7 L403.5,172.8 L403.8,174.2 L404,174.7 L404.2,175.7 L404.5,175.9 L404.8,176.5 L405,176.5 L405.2,176.6 L405.5,176.9 L405.8,177.1 L406,177.2 L406.2,177.2 L406.5,177.2 L406.8,176.8 L407,176.9 L407.2,176.8 L407.5,177.1 L407.8,177 L408,177.1 L408.2,177.1 L408.5,177.2 L408.8,177 L409,177.1 L409.2,176.8 L409.5,176.4 L409.8,176.6 L410,175.8 L410.2,175.3 L410.5,175 L410.8,173.8 L411,172.9 L411.2,171.2 L411.5,169.7 L411.8,168 L412,168.8 L412.2,170.8 L412.5,172.5 L412.8,173.4 L413,174.6 L413.2,175.4 L413.5,175.9 L413.8,176.4 L414,176.6 L414.2,176.5 L414.5,176.7 L414.8,177 L415,177.2 L415.2,176.8 L415.5,177 L415.8,176.8 L416,177.2 L416.2,177 L416.5,177 L416.8,177.1 L417,176.8 L417.2,177.1 L417.5,177.1 L417.8,177.1 L418,176.8 L418.2,176.7 L418.5,176.5 L418.8,176.7 L419,176.1 L419.2,175.6 L419.5,175.1 L419.8,174.4 L420,173.1 L420.2,171.9 L420.5,170.5 L420.8,168.6 L421,168 L421.2,169.8 L421.5,171.8 L421.8,173.1 L422,174.1 L422.2,174.9 L422.5,175.8 L422.8,176 L423,176.3 L423.2,176.5 L423.5,176.7 L423.8,177 L424,176.9 L424.2,177.2 L424.5,177.1 L424.8,177 L425,177.1 L425.2,177.1 L425.5,177.1 L425.8,177 L426,177 L426.2,177 L426.5,177.2 L426.8,176.8 L427,177.1 L427.2,176.8 L427.5,176.9 L427.8,176.4 L428,176.3 L428.2,175.9 L428.5,175.4 L428.8,174.4 L429,173.5 L429.2,172.2 L429.5,170.9 L429.8,169.2 L430,166.8 L430.2,168.9 L430.5,170.7 L430.8,172.6 L431,173.6 L431.2,174.6 L431.5,175.2 L431.8,176 L432,176.4 L432.2,176.7 L432.5,176.5 L432.8,176.8 L433,176.9 L433.2,176.7 L433.5,177.1 L433.8,176.9 L434,176.9 L434.2,177.1 L434.5,177 L434.8,177 L435,177.2 L435.2,177 L435.5,176.9 L435.8,176.8 L436,177 L436.2,176.8 L436.5,176.8 L436.8,176.6 L437,176.2 L437.2,175.8 L437.5,175.4 L437.8,174.6 L438,174.1 L438.2,172.9 L438.5,171.3 L438.8,169.8 L439,167.8 L439.2,167.9 L439.5,170.2 L439.8,171.6 L440,173.3 L440.2,174 L440.5,174.9 L440.8,175.5 L441,176.3 L441.2,176.6 L441.5,176.7 L441.8,176.7 L442,176.9 L442.2,177.1 L442.5,176.8 L442.8,177.2 L443,177.2 L443.2,177.2 L443.5,177.1 L443.8,177.1 L444,177.2 L444.2,176.9 L444.5,176.9 L444.8,176.8 L445,176.8 L445.2,177.1 L445.5,176.6 L445.8,176.8 L446,176.4 L446.2,176.4 L446.5,175.9 L446.8,175.2 L447,174.5 L447.2,173 L447.5,171.8 L447.8,170.2 L448,168.3 L448.2,167.1 L448.5,169.4 L448.8,171.1 L449,172.7 L449.2,173.8 L449.5,174.6 L449.8,175.4 L450,176 L450.2,176.5 L450.5,176.5 L450.8,176.7 L451,176.9 L451.2,176.8 L451.5,177.2 L451.8,176.7 L452,177.1 L452.2,177 L452.5,176.8 L452.8,177 L453,177 L453.2,177.2 L453.5,177.2 L453.8,177 L454,177.2 L454.2,177.1 L454.5,176.7 L454.8,176.9 L455,176.8 L455.2,176.6 L455.5,176 L455.8,175.3 L456,174.4 L456.2,173.7 L456.5,172.2 L456.8,171 L457,169 L457.2,167 L457.5,168.1 L457.8,170 L458,172 L458.2,173.2 L458.5,174.1 L458.8,175.1 L459,175.7 L459.2,176.2 L459.5,176.5 L459.8,176.6 L460,177.1 L460.2,177.1 L460.5,177.1 L460.8,176.9 L461,176.8 L461.2,177.1 L461.5,177.2 L461.8,177.1 L462,176.9 L462.2,177.1 L462.5,177 L462.8,176.9 L463,177 L463.2,176.9 L463.5,177 L463.8,176.9 L464,176.9 L464.2,176.2 L464.5,176.1 L464.8,175.8 L465,175 L465.2,174 L465.5,173 L465.8,171.1 L466,169.8 L466.2,167.6 L466.5,167.2 L466.8,169.1 L467,171.1 L467.2,172.3 L467.5,173.8 L467.8,174.6 L468,175.6 L468.2,176.1 L468.5,176.3 L468.8,176.7 L469,176.7 L469.2,176.9 L469.5,176.8 L469.8,177.2 L470,177.1 L470.2,177.1 L470.5,176.8 L470.8,177.2 L471,176.8 L471.2,177 L471.5,177 L471.8,176.8 L472,177 L472.2,177.2 L472.5,177 L472.8,176.8 L473,176.9 L473.2,176.5 L473.5,176.4 L473.8,175.7 L474,174.9 L474.2,174.5 L474.5,173 L474.8,171.8 L475,170.4 L475.2,168.1 L475.5,166 L475.8,168.4 L476,170.3 L476.2,171.8 L476.5,173.3 L476.8,174.5 L477,175.2 L477.2,175.8 L477.5,176.1 L477.8,176.5 L478,177 L478.2,177.1 L478.5,176.7 L478.8,176.8 L479,176.9 L479.2,177.1 L479.5,176.8 L479.8,176.8 L480,177.1 L480.2,176.8 L480.5,177.2 L480.8,177 L481,177.2 L481.2,177.1 L481.5,176.8 L481.8,177 L482,176.7 L482.2,176.5 L482.5,176.1 L482.8,176 L483,175.4 L483.2,174.5 L483.5,173.8 L483.8,172.2 L484,170.8 L484.2,168.7 L484.5,166.6 L484.8,167.4 L485,169.3 L485.2,171 L485.5,172.5 L485.8,173.9 L486,174.7 L486.2,175.7 L486.5,175.8 L486.8,176.6 L487,176.7 L487.2,177 L487.5,176.8 L487.8,176.7 L488,176.8 L488.2,177.1 L488.5,176.8 L488.8,176.8 L489,177.1 L489.2,177.2 L489.5,177.2 L489.8,177.2 L490,177 L490.2,177.2 L490.5,177.1 L490.8,176.9 L491,176.8 L491.2,176.4 L491.5,176.2 L491.8,176 L492,175.6 L492.2,174.7 L492.5,174.2 L492.8,172.9 L493,171.5 L493.2,169.8 L493.5,167.3 L493.8,166.2 L494,168.6 L494.2,170.2 L494.5,171.8 L494.8,173.5 L495,174.6 L495.2,175.3 L495.5,175.8 L495.8,176.3 L496,176.4 L496.2,176.6 L496.5,176.8 L496.8,177.1 L497,176.8 L497.2,177.2 L497.5,176.8 L497.8,177.2 L498,176.9 L498.2,177.2 L498.5,177.2 L498.8,177.2 L499,177 L499.2,177.1 L499.5,176.9 L499.8,177.1 L500,176.7 L500.2,176.9 L500.5,176.6 L500.8,176 L501,176 L501.2,175.1 L501.5,174.1 L501.8,173.1 L502,171.7 L502.2,170.1 L502.5,168.3 L502.8,166.1 L503,167.3 L503.2,169.6 L503.5,171.4 L503.8,172.8 L504,173.9 L504.2,174.7 L504.5,175.4 L504.8,176.1 L505,176.3 L505.2,176.8 L505.5,176.7 L505.8,177 L506,177 L506.2,177.1 L506.5,176.8 L506.8,176.9 L507,177.1 L507.2,176.9 L507.5,177.1 L507.8,177.2 L508,176.9 L508.2,177.2 L508.5,177 L508.8,177.2 L509,176.9 L509.2,176.9 L509.5,176.7 L509.8,176.2 L510,176 L510.2,175.5 L510.5,174.6 L510.8,173.7 L511,172.6 L511.2,171 L511.5,169.1 L511.8,166.4 L512,166.2 L512.2,168.5 L512.5,170.7 L512.8,171.8 L513,173.3 L513.2,174.7 L513.5,175.2 L513.8,176 L514,176.3 L514.2,176.5 L514.5,176.7 L514.8,176.9 L515,177.2 L515.2,177 L515.5,177.1 L515.8,176.9 L516,177.1 L516.2,177.1 L516.5,177.1 L516.8,177.2 L517,176.8 L517.2,177.2 L517.5,177 L517.8,176.9 L518,176.9 L518.2,176.6 L518.5,176.6 L518.8,176.6 L519,176.2 L519.2,175.8 L519.5,174.8 L519.8,173.8 L520,172.8 L520.2,171.4 L520.5,169.7 L520.8,167.3 L521,165 L521.2,167.4 L521.5,169.5 L521.8,171.5 L522,172.6 L522.2,174.1 L522.5,174.8 L522.8,175.4 L523,176.1 L523.2,176.5 L523.5,176.8 L523.8,176.8 L524,177.1 L524.2,177.1 L524.5,176.8 L524.8,176.7 L525,177.2 L525.2,177 L525.5,176.8 L525.8,176.8 L526,177.1 L526.2,176.8 L526.5,176.9 L526.8,177.1 L527,176.9 L527.2,177 L527.5,177 L527.8,176.7 L528,176.3 L528.2,175.9 L528.5,175.1 L528.8,174.5 L529,173.4 L529.2,172 L529.5,170.2 L529.8,168.3 L530,165.6 L530.2,166.4 L530.5,168.8 L530.8,170.3 L531,172.1 L531.2,173.8 L531.5,174.4 L531.8,175.5 L532,176 L532.2,176.1 L532.5,176.7 L532.8,176.5 L533,177.1 L533.2,176.9 L533.5,177.2 L533.8,177.2 L534,176.8 L534.2,177 L534.5,176.8 L534.8,177.1 L535,176.8 L535.2,176.8 L535.5,176.8 L535.8,177.2 L536,176.8 L536.2,176.8 L536.5,176.8 L536.8,176.7 L537,176.4 L537.2,176.2 L537.5,175.4 L537.8,174.7 L538,173.9 L538.2,172.3 L538.5,170.7 L538.8,169.1 L539,166.5 L539.2,165.2 L539.5,167.7 L539.8,169.6 L540,171.4 L540.2,172.8 L540.5,174.3 L540.8,175 L541,175.6 L541.2,176 L541.5,176.4 L541.8,176.9 L542,176.7 L542.2,177 L542.5,177 L542.8,177 L543,177 L543.2,176.9 L543.5,176.8 L543.8,177.2 L544,177.2 L544.2,177 L544.5,176.9 L544.8,177.2 L545,176.8 L545.2,176.8 L545.5,176.9 L545.8,176.9 L546,176.5 L546.2,176 L546.5,175.9 L546.8,174.8 L547,174 L547.2,173.2 L547.5,171.6 L547.8,169.7 L548,167.2 L548.2,165 L548.5,166.3 L548.8,168.5 L549,170.9 L549.2,172.6 L549.5,173.4 L549.8,174.6 L550,175.6 L550.2,175.9 L550.5,176.3 L550.8,176.8 L551,176.8 L551.2,177.2 L551.5,177.1 L551.8,177.2 L552,177.1 L552.2,176.8 L552.5,177.1 L552.8,177 L553,177 L553.2,177 L553.5,176.9 L553.8,176.8 L554,177.2 L554.2,176.9 L554.5,176.7 L554.8,177 L555,176.6 L555.2,176.4 L555.5,175.8 L555.8,175.1 L556,174.4 L556.2,173.5 L556.5,171.9 L556.8,170.5 L557,168.1 L557.2,165.9 L557.5,165 L557.8,167.7 L558,169.7 L558.2,171.5 L558.5,173.1 L558.8,174.2 L559,175.1 L559.2,175.6 L559.5,176.1 L559.8,176.5 L560,176.9 L560.2,176.7 L560.5,176.9 L560.8,177.2 L561,177 L561.2,176.9 L561.5,177.2 L561.8,176.8 L562,176.8 L562.2,176.8 L562.5,177 L562.8,177.2 L563,176.9 L563.2,176.9 L563.5,177.1 L563.8,176.6 L564,176.4 L564.2,176.5 L564.5,175.8 L564.8,175.5 L565,174.6 L565.2,173.8 L565.5,172.7 L565.8,170.9 L566,168.8 L566.2,166.6 L566.5,163.9 L566.8,166.3 L567,168.8 L567.2,170.8 L567.5,172.5 L567.8,173.7 L568,174.8 L568.2,175.4 L568.5,176.3 L568.8,176.4 L569,176.5 L569.2,176.6 L569.5,176.7 L569.8,176.8 L570,177.2 L570.2,177 L570.5,177 L570.8,177.2 L571,177.2 L571.2,177.1 L571.5,176.9 L571.8,176.9 L572,177 L572.2,176.9 L572.5,176.9 L572.8,176.7 L573,176.6 L573.2,176.7 L573.5,176.3 L573.8,175.7 L574,175.1 L574.2,174.2 L574.5,173.1 L574.8,171.2 L575,169.8 L575.2,167.4 L575.5,164.7 L575.8,165.5 L576,168 L576.2,169.9 L576.5,171.6 L576.8,173.2 L577,174.3 L577.2,175.1 L577.5,175.6 L577.8,176.3 L578,176.5 L578.2,176.9 L578.5,176.9 L578.8,176.8 L579,177.1 L579.2,177 L579.5,176.8 L579.8,176.9 L580,176.8 L580.2,177 L580.5,177.2 L580.8,177.2 L581,177.1 L581.2,176.8 L581.5,176.8 L581.8,176.8 L582,176.7 L582.2,176.7 L582.5,176.1 L582.8,175.9 L583,175.3 L583.2,174.6 L583.5,173.6 L583.8,172 L584,170.4 L584.2,168.1 L584.5,165.7 L584.8,164 L585,166.5 L585.2,169.1 L585.5,171 L585.8,172.5 L586,173.8 L586.2,175 L586.5,175.5 L586.8,176 L587,176.4 L587.2,176.7 L587.5,176.8 L587.8,176.9 L588,176.9 L588.2,176.8 L588.5,177 L588.8,177 L589,176.8 L589.2,177 L589.5,176.9 L589.8,177.2 L590,177.2 L590.2,176.8 L590.5,177.1 L590.8,176.9 L591,176.7 L591.2,176.9 L591.5,176.7 L591.8,176.2 L592,175.6 L592.2,175.1 L592.5,173.9 L592.8,172.7 L593,171 L593.2,169.1 L593.5,166.8 L593.8,163.7 L594,165.3 L594.2,168.1 L594.5,170.2 L594.8,171.9 L595,173.5 L595.2,174.6 L595.5,175.4 L595.8,175.9 L596,176.4 L596.2,176.5 L596.5,176.9 L596.8,176.7 L597,177.2 L597.2,177 L597.5,176.9 L597.8,176.8 L598,177 L598.2,177 L598.5,177.1 L598.8,176.8 L599,177.2 L599.2,177 L599.5,177 L599.8,177.1 L600,176.9 L600.2,176.7 L600.5,176.3 L600.8,176 L601,175.1 L601.2,174.3 L601.5,173.4 L601.8,171.5 L602,169.4 L602.2,167.3 L602.5,164 L602.8,160.5 L603,159.7 L603.2,163.5 L603.5,166.5 L603.8,169.3 L604,171 L604.2,173.1 L604.5,174.2 L604.8,175.3 L605,175.8 L605.2,176.5 L605.5,176.6 L605.8,176.9 L606,176.8 L606.2,177.1 L606.5,177.1 L606.8,176.8 L607,177.1 L607.2,177.2 L607.5,176.9 L607.8,176.8 L608,177.2 L608.2,177.2 L608.5,176.8 L608.8,177.1 L609,177.1 L609.2,176.6 L609.5,176.7 L609.8,176.1 L610,175.8 L610.2,174.9 L610.5,173.8 L610.8,172.2 L611,170.6 L611.2,168.3 L611.5,165.2 L611.8,161.7 L612,157.8 L612.2,161.8 L612.5,165.6 L612.8,168.3 L613,170.7 L613.2,172.5 L613.5,173.6 L613.8,174.8 L614,175.9 L614.2,176.4 L614.5,176.8 L614.8,176.9 L615,177 L615.2,177.1 L615.5,177.2 L615.8,177 L616,176.8 L616.2,176.9 L616.5,176.8 L616.8,176.9 L617,177 L617.2,176.9 L617.5,176.9 L617.8,176.8 L618,176.8 L618.2,176.8 L618.5,176.7 L618.8,176.6 L619,175.7 L619.2,175.1 L619.5,174 L619.8,173.2 L620,171.3 L620.2,169.2 L620.5,166.7 L620.8,163.1 L621,159.8 L621.2,160.3 L621.5,164.1 L621.8,167 L622,169.7 L622.2,171.5 L622.5,173.1 L622.8,174.3 L623,175.5 L623.2,176 L623.5,176.2 L623.8,176.6 L624,176.9 L624.2,176.9 L624.5,177 L624.8,177.2 L625,177.1 L625.2,177.2 L625.5,176.9 L625.8,177.2 L626,177.2 L626.2,177 L626.5,176.8 L626.8,176.8 L627,177.1 L627.2,177 L627.5,176.8 L627.8,176.5 L628,176.1 L628.2,175.3 L628.5,174.7 L628.8,173.8 L629,171.8 L629.2,170.1 L629.5,167.8 L629.8,164.7 L630,161.1 L630.2,158.6 L630.5,162.7 L630.8,166.1 L631,168.8 L631.2,170.8 L631.5,172.8 L631.8,174.2 L632,175 L632.2,175.9 L632.5,176.2 L632.8,176.4 L633,176.5 L633.2,177 L633.5,177.1 L633.8,176.8 L634,176.8 L634.2,176.9 L634.5,176.9 L634.8,177.1 L635,176.8 L635.2,177 L635.5,177 L635.8,176.9 L636,177.1 L636.2,176.9 L636.5,176.8 L636.8,176.7 L637,176.2 L637.2,175.6 L637.5,175.2 L637.8,174.1 L638,172.7 L638.2,170.9 L638.5,168.7 L638.8,165.8 L639,162.4 L639.2,158.7 L639.5,161.3 L639.8,164.4 L640,167.8 L640.2,170 L640.5,172.2 L640.8,173.6 L641,174.5 L641.2,175.3 L641.5,176.3 L641.8,176.7 L642,176.9 L642.2,176.9 L642.5,177 L642.8,177.1 L643,177.2 L643.2,177.2 L643.5,176.9 L643.8,177.2 L644,177.2 L644.2,177 L644.5,176.8 L644.8,176.8 L645,177.1 L645.2,176.9 L645.5,177.1 L645.8,176.7 L646,176.5 L646.2,175.8 L646.5,175.4 L646.8,174.6 L647,173.4 L647.2,171.8 L647.5,169.5 L647.8,167 L648,164.2 L648.2,160.1 L648.5,159.3 L648.8,163.1 L649,166.6 L649.2,169 L649.5,171.4 L649.8,173.1 L650,174.4 L650.2,175 L650.5,176 L650.8,176.5 L651,176.7 L651.2,177 L651.5,177.1 L651.8,177 L652,177.2 L652.2,177 L652.5,176.8 L652.8,176.9 L653,177.2 L653.2,176.9 L653.5,177 L653.8,177.2 L654,177.1 L654.2,177.1 L654.5,176.9 L654.8,176.8 L655,176.3 L655.2,176 L655.5,175.5 L655.8,174.9 L656,173.8 L656.2,172.1 L656.5,170.5 L656.8,167.9 L657,165.2 L657.2,161.6 L657.5,157.8 L657.8,161.6 L658,165.5 L658.2,168 L658.5,170.6 L658.8,172.3 L659,173.7 L659.2,175 L659.5,175.5 L659.8,176.2 L660,176.6 L660.2,177 L660.5,177 L660.8,176.7 L661,177 L661.2,177.2 L661.5,177.2 L661.8,176.9 L662,176.8 L662.2,176.9 L662.5,177.1 L662.8,176.8 L663,177.2 L663.2,176.9 L663.5,177 L663.8,176.9 L664,176.5 L664.2,176.3 L664.5,175.9 L664.8,175.1 L665,174.2 L665.2,173 L665.5,171.5 L665.8,169 L666,166.3 L666.2,163.2 L666.5,159.5 L666.8,160.3 L667,164.1 L667.2,166.9 L667.5,169.6 L667.8,171.6 L668,173.1 L668.2,174.4 L668.5,175.3 L668.8,175.9 L669,176.5 L669.2,176.9 L669.5,177.1 L669.8,176.8 L670,176.9 L670.2,177.2 L670.5,176.8 L670.8,176.8 L671,176.8 L671.2,177.2 L671.5,177 L671.8,177 L672,176.8 L672.2,177.2 L672.5,177.2 L672.8,177 L673,176.9 L673.2,176.5 L673.5,176 L673.8,175.3 L674,174.5 L674.2,173.3 L674.5,171.9 L674.8,169.8 L675,167.3 L675.2,164.8 L675.5,161.2 L675.8,158.8 L676,162.4 L676.2,165.8 L676.5,168.6 L676.8,171 L677,172.5 L677.2,174 L677.5,175 L677.8,175.9 L678,176.2 L678.2,176.3 L678.5,176.7 L678.8,177.1 L679,176.8 L679.2,177.1 L679.5,176.8 L679.8,176.9 L680,177.1 L680.2,176.8 L680.5,177 L680.8,177 L681,176.9 L681.2,177.1 L681.5,177.1 L681.8,176.8 L682,176.9 L682.2,176.7 L682.5,176.3 L682.8,175.8 L683,175 L683.2,174.1 L683.5,172.7 L683.8,170.7 L684,168.7 L684.2,165.9 L684.5,162.5 L684.8,158.8 L685,160.9 L685.2,164.6 L685.5,167.6 L685.8,170 L686,171.8 L686.2,173.6 L686.5,174.4 L686.8,175.5 L687,176 L687.2,176.6 L687.5,176.9 L687.8,177.1 L688,176.8 L688.2,177.2 L688.5,177 L688.8,177 L689,176.8 L689.2,177.2 L689.5,176.9 L689.8,176.9 L690,176.9 L690.2,176.9 L690.5,176.9 L690.8,176.8 L691,176.9 L691.2,176.6 L691.5,176.5 L691.8,176.2 L692,175.5 L692.2,174.4 L692.5,173.3 L692.8,171.7 L693,169.6 L693.2,166.9 L693.5,163.7 L693.8,160.3 L694,159.5 L694.2,163.1 L694.5,166.5 L694.8,168.8 L695,171.3 L695.2,173.1 L695.5,174.4 L695.8,175 L696,176 L696.2,176.5 L696.5,176.5 L696.8,176.9 L697,176.8 L697.2,176.8 L697.5,176.8 L697.8,176.9 L698,177.2 L698.2,177 L698.5,177.1 L698.8,177.2 L699,176.8 L699.2,177.2 L699.5,177.2 L699.8,177 L700,176.8 L700.2,176.6 L700.5,176.5 L700.8,176.1 L701,175.5 L701.2,174.9 L701.5,173.8 L701.8,172.2 L702,170.2 L702.2,168 L702.5,165.3 L702.8,161.8 L703,157.7 L703.2,161.9 L703.5,165.3 L703.8,168 L704,170.5 L704.2,172.4 L704.5,173.6 L704.8,174.7 L705,175.5 L705.2,176.3 L705.5,176.7 L705.8,176.7 L706,176.9 L706.2,176.7 L706.5,177 L706.8,177 L707,177.1 L707.2,177.2 L707.5,176.8 L707.8,177.2 L708,176.8 L708.2,177.2 L708.5,177.2 L708.8,176.8 L709,176.8 L709.2,176.6 L709.5,176.8 L709.8,176.5 L710,176.1 L710.2,175.3 L710.5,174.1 L710.8,173 L711,171.1 L711.2,168.9 L711.5,166.3 L711.8,163.2 L712,159.2 L712.2,160.2 L712.5,163.9 L712.8,167.1 L713,169.5 L713.2,171.5 L713.5,173.2 L713.8,174.4 L714,175.4 L714.2,175.8 L714.5,176.2 L714.8,176.4 L715,176.8 L715.2,177.1 L715.5,177 L715.8,177.1 L716,177.2 L716.2,177.2 L716.5,176.9 L716.8,176.9 L717,177 L717.2,176.9 L717.5,177 L717.8,176.8 L718,176.9 L718.2,177 L718.5,176.6 L718.8,176.3 L719,176.2 L719.2,175.3 L719.5,174.8 L719.8,173.5 L720,172.1 L720.2,170 L720.5,167.5 L720.8,164.3 L721,160.7 L721.2,158.7 L721.5,162.2 L721.8,165.5 L722,168.7 L722.2,170.8 L722.5,172.6 L722.8,174.2 L723,175.1 L723.2,175.6 L723.5,176.1 L723.8,176.7 L724,176.9 L724.2,176.8 L724.5,176.8 L724.8,177 L725,176.8 L725.2,177.2 L725.5,177.1 L725.8,176.8 L726,177 L726.2,177 L726.5,176.8 L726.8,177 L727,177.1 L727.2,176.9 L727.5,176.9 L727.8,176.4 L728,176.5 L728.2,175.8 L728.5,175 L728.8,173.7 L729,172.5 L729.2,170.5 L729.5,168.5 L729.8,165.6 L730,162.2 L730.2,158.3 L730.5,160.7 L730.8,164.3 L731,167.5 L731.2,169.7 L731.5,171.9 L731.8,173.7 L732,174.7 L732.2,175.7 L732.5,175.9 L732.8,176.5 L733,176.6 L733.2,177.1 L733.5,176.9 L733.8,177.1 L734,177.1 L734.2,176.8 L734.5,176.8 L734.8,177.2 L735,177.2 L735.2,177 L735.5,176.8 L735.8,176.8 L736,177.1 L736.2,177 L736.5,176.8 L736.8,176.8 L737,176.5 L737.2,175.7 L737.5,175.4 L737.8,174.6 L738,173.4 L738.2,171.7 L738.5,169.4 L738.8,166.9 L739,163.6 L739.2,160.2 L739.5,159.3 L739.8,163 L740,166.1 L740.2,168.8 L740.5,171.1 L740.8,173.1 L741,174.2 L741.2,175.3 L741.5,175.7 L741.8,176.2 L742,176.5 L742.2,176.7 L742.5,177.1 L742.8,176.9 L743,176.9 L743.2,177.1 L743.5,177 L743.8,177.2 L744,177.1 L744.2,177.2 L744.5,177 L744.8,176.9 L745,177 L745.2,177.2 L745.5,177.1 L745.8,176.8 L746,176.5 L746.2,175.9 L746.5,175.8 L746.8,174.9 L747,173.7 L747.2,172.1 L747.5,170.3 L747.8,168.1 L748,164.9 L748.2,161.5 L748.5,157.5 L748.8,161.6 L749,164.8 L749.2,167.7 L749.5,170.3 L749.8,172.3 L750,173.6 L750.2,174.6 L750.5,175.5 L750.8,176 L751,176.7 L751.2,176.6 L751.5,177.1 L751.8,176.8 L752,176.8 L752.2,176.8 L752.5,177 L752.8,177 L753,177.1 L753.2,177.1 L753.5,177 L753.8,176.8 L754,177.2 L754.2,176.8 L754.5,176.8 L754.8,176.6 L755,176.7 L755.2,176.4 L755.5,175.8 L755.8,175 L756,173.9 L756.2,172.9 L756.5,171.3 L756.8,168.8 L757,166.1 L757.2,163.1 L757.5,159.3 L757.8,159.8 L758,164 L758.2,167 L758.5,169.5 L758.8,171.4 L759,173.4 L759.2,174.4 L759.5,175.4 L759.8,176.2 L760,176.6 L760.2,176.5 L760.5,176.7 L760.8,176.8 L761,176.8 L761.2,177.2 L761.5,177 L761.8,177 L762,176.9 L762.2,177 L762.5,177 L762.8,177.1 L763,177 L763.2,177.2 L763.5,177.1 L763.8,177 L764,176.8 L764.2,176.3 L764.5,176 L764.8,175.6 L765,174.5 L765.2,173.5 L765.5,171.7 L765.8,170 L766,167.3 L766.2,164.3 L766.5,160.9 L766.8,158.1 L767,162 L767.2,165.6 L767.5,168.4 L767.8,170.5 L768,172.5 L768.2,174.1 L768.5,175.2 L768.8,175.9 L769,176.4 L769.2,176.4 L769.5,176.7 L769.8,176.9 L770,176.7 L770.2,177.1 L770.5,176.9 L770.8,177.1 L771,177.1 L771.2,176.9 L771.5,176.9 L771.8,177 L772,176.8 L772.2,176.7 L772.5,176.9 L772.8,176.8 L773,176.7 L773.2,176.7 L773.5,176.4 L773.8,175.7 L774,174.7 L774.2,174.1 L774.5,172.4 L774.8,170.5 L775,168.6 L775.2,165.8 L775.5,162.1 L775.8,158.3 L776,160.9 L776.2,164.4 L776.5,167.3 L776.8,169.7 L777,171.6 L777.2,173.6 L777.5,174.8 L777.8,175.3 L778,176.1 L778.2,176.3 L778.5,176.8 L778.8,176.8 L779,177 L779.2,177 L779.5,176.8 L779.8,177 L780,177.1 L780.2,176.8 L780.5,176.8 L780.8,176.9 L781,177.1 L781.2,177.2 L781.5,176.9 L781.8,177.1 L782,176.9 L782.2,176.6 L782.5,176.4 L782.8,176.1 L783,175.3 L783.2,174.4 L783.5,173.2 L783.8,171.3 L784,169.4 L784.2,166.8 L784.5,163.7 L784.8,160 L785,159 L785.2,162.9 L785.5,166.2 L785.8,168.7 L786,171.3 L786.2,173.1 L786.5,174.2 L786.8,175.1 L787,175.8 L787.2,176.3 L787.5,176.6 L787.8,176.7 L788,177.1 L788.2,176.9 L788.5,176.8 L788.8,177.1 L789,176.8 L789.2,176.9 L789.5,177 L789.8,177.2 L790,176.9 L790.2,176.8 L790.5,177.2 L790.8,176.7 L791,176.8 L791.2,176.8 L791.5,176.8 L791.8,176.1 L792,175.5 L792.2,174.7 L792.5,173.6 L792.8,172 L793,170.5 L793.2,167.9 L793.5,165.1 L793.8,161.3 L794,157.4 L794.2,161.7 L794.5,164.8 L794.8,168.1 L795,170.2 L795.2,172.3 L795.5,173.9 L795.8,174.8 L796,175.8 L796.2,176.1 L796.5,176.5 L796.8,177 L797,176.9 L797.2,176.7 L797.5,176.8 L797.8,177 L798,176.9 L798.2,176.8 L798.5,177.2 L798.8,176.9 L799,177.2 L799.2,176.9 L799.5,176.8 L799.8,176.9 L800,177.1 L800.2,177 L800.5,176.7 L800.8,176.2 L801,175.9 L801.2,175 L801.5,174.1 L801.8,172.6 L802,170.9 L802.2,169.1 L802.5,166.3 L802.8,162.8 L803,159.1 L803.2,159.6 L803.5,163.8 L803.8,166.8 L804,169.5 L804.2,171.4 L804.5,173.1 L804.8,174.5 L805,175.2 L805.2,175.7 L805.5,176.2 L805.8,176.9 L806,176.7 L806.2,176.7 L806.5,177 L806.8,176.8 L807,177 L807.2,177.1 L807.5,176.9 L807.8,177 L808,177.2 L808.2,177.2 L808.5,177.2 L808.8,176.7 L809,177.2 L809.2,176.9 L809.5,176.5 L809.8,176.7 L810,175.9 L810.2,175.7 L810.5,174.3 L810.8,173.2 L811,171.8 L811.2,169.9 L811.5,167.4 L811.8,164.4 L812,160.4 L812.2,158.3 L812.5,162.1 L812.8,165.8 L813,168.5 L813.2,170.8 L813.5,172.3 L813.8,174.1 L814,174.9 L814.2,175.6 L814.5,176.2 L814.8,176.7 L815,176.7 L815.2,176.9 L815.5,177 L815.8,176.9 L816,176.8 L816.2,177 L816.5,177.1 L816.8,177.1 L817,176.9 L817.2,177.1 L817.5,177.2 L817.8,177.1 L818,176.8 L818.2,176.7 L818.5,177 L818.8,176.7 L819,176.1 L819.2,175.8 L819.5,175 L819.8,174 L820,172.4 L820.2,170.8 L820.5,168.3 L820.8,165.5 L821,162.1 L821.2,158.3 L821.5,160.8 L821.8,164.1 L822,167.1 L822.2,169.7 L822.5,172 L822.8,173.3 L823,174.3 L823.2,175.6 L823.5,176 L823.8,176.2 L824,176.8 L824.2,176.9 L824.5,177.1 L824.8,177.1 L825,177.2 L825.2,177.2 L825.5,176.9 L825.8,177.2 L826,177 L826.2,177.1 L826.5,176.9 L826.8,177.1 L827,176.8 L827.2,177.1 L827.5,176.7 L827.8,176.7 L828,176.6 L828.2,176.1 L828.5,175.5 L828.8,174.3 L829,172.9 L829.2,171.7 L829.5,169.2 L829.8,166.9 L830,163.5 L830.2,159.8 L830.5,159 L830.8,162.9 L831,166.3 L831.2,168.9 L831.5,170.9 L831.8,172.8 L832,173.9 L832.2,175.3 L832.5,175.7 L832.8,176.2 L833,176.7 L833.2,176.7 L833.5,177.1 L833.8,177.1 L834,176.9 L834.2,177 L834.5,177.1 L834.8,177 L835,177.1 L835.2,176.9 L835.5,177 L835.8,177 L836,177.2 L836.2,176.9 L836.5,177 L836.8,176.6 L837,176.4 L837.2,176 L837.5,175.8 L837.8,174.6 L838,173.5 L838.2,172.1 L838.5,170.3 L838.8,167.9 L839,164.7 L839.2,161.3 L839.5,157.3 L839.8,161.2 L840,164.7 L840.2,168 L840.5,170 L840.8,171.9 L841,173.5 L841.2,174.9 L841.5,175.5 L841.8,176.1 L842,176.5 L842.2,176.9 L842.5,176.7 L842.8,176.8 L843,176.9 L843.2,177.1 L843.5,176.8 L843.8,177 L844,177 L844.2,176.8 L844.5,176.9 L844.8,176.8 L845,177.2 L845.2,176.7 L845.5,176.7 L845.8,176.9 L846,176.5 L846.2,176.3 L846.5,175.7 L846.8,175.4 L847,174.2 L847.2,172.7 L847.5,170.9 L847.8,168.8 L848,166.2 L848.2,162.9 L848.5,159 L848.8,159.7 L849,163.7 L849.2,166.6 L849.5,169.3 L849.8,171.7 L850,173.2 L850.2,174.3 L850.5,175.4 L850.8,176.1 L851,176.3 L851.2,176.6 L851.5,177 L851.8,176.9 L852,176.9 L852.2,177 L852.5,176.8 L852.8,176.9 L853,177.2 L853.2,176.9 L853.5,177.2 L853.8,176.8 L854,176.9 L854.2,177 L854.5,176.8 L854.8,177.1 L855,176.9 L855.2,176.4 L855.5,175.9 L855.8,175.6 L856,174.7 L856.2,173.4 L856.5,171.6 L856.8,169.5 L857,167.3 L857.2,164.3 L857.5,160.5 L857.8,157.9 L858,161.9 L858.2,165.4 L858.5,168.3 L858.8,170.7 L859,172.4 L859.2,173.8 L859.5,174.8 L859.8,175.8 L860,176.4 L860.2,176.4 L860.5,176.9 L860.8,177 L861,176.8 L861.2,176.8 L861.5,177.2 L861.8,176.8 L862,176.8 L862.2,176.8 L862.5,177.2 L862.8,176.9 L863,176.7 L863.2,176.9 L863.5,177 L863.8,176.9 L864,176.6 L864.2,176.7 L864.5,176.3 L864.8,175.6 L865,174.9 L865.2,173.8 L865.5,172.2 L865.8,170.7 L866,168.2 L866.2,165.5 L866.5,162.2 L866.8,157.9 L867,160.4 L867.2,164.1 L867.5,167.2 L867.8,169.5 L868,171.7 L868.2,173.3 L868.5,174.4 L868.8,175.6 L869,176.1 L869.2,176.4 L869.5,176.5 L869.8,177 L870,176.9 L870.2,177.2 L870.5,177.1 L870.8,176.9 L871,177.1 L871.2,177 L871.5,176.9 L871.8,177.1 L872,176.9 L872.2,176.8 L872.5,176.7 L872.8,177 L873,176.7 L873.2,176.5 L873.5,176.2 L873.8,176.1 L874,175.2 L874.2,174.5 L874.5,173.3 L874.8,171.6 L875,169.2 L875.2,166.9 L875.5,163.5 L875.8,159.8 L876,159 L876.2,162.6 L876.5,166 L876.8,169 L877,170.9 L877.2,172.6 L877.5,173.9 L877.8,175.1 L878,175.7 L878.2,176.5 L878.5,176.4 L878.8,176.8 L879,177 L879.2,177 L879.5,177.2 L879.8,177.1 L880,177.2 L880.2,177.2 L880.5,177.2 L880.8,177.1 L881,176.9 L881.2,177 L881.5,176.8 L881.8,176.8 L882,176.9 L882.2,176.7 L882.5,176.5 L882.8,175.9 L883,175.8 L883.2,174.7 L883.5,173.6 L883.8,172 L884,170.2 L884.2,167.9 L884.5,165 L884.8,161.3 L885,157.3 L885.2,161.2 L885.5,164.8 L885.8,167.7 L886,170.4 L886.2,171.9 L886.5,173.5 L886.8,174.9 L887,175.4 L887.2,175.9 L887.5,176.4 L887.8,176.7 L888,176.9 L888.2,176.8 L888.5,176.9 L888.8,176.9 L889,176.8 L889.2,177 L889.5,176.9 L889.8,176.8 L890,177.2 L890.2,177.2 L890.5,176.9 L890.8,177 L891,176.7 L891.2,176.6 L891.5,176.6 L891.8,176.5 L892,175.6 L892.2,175.1 L892.5,174.3 L892.8,172.5 L893,171.1 L893.2,168.7 L893.5,166.1 L893.8,162.9 L894,159 L894.2,159.7 L894.5,163.2 L894.8,166.7 L895,169.3 L895.2,171.3 L895.5,172.9 L895.8,174.3 L896,175.2 L896.2,175.9 L896.5,176.6 L896.8,176.5 L897,177 L897.2,176.8 L897.5,177.1 L897.8,177 L898,176.9 L898.2,177 L898.5,176.8 L898.8,176.9 L899,177 L899.2,176.8 L899.5,177.2 L899.8,177.1 L900,177" fill="none" stroke="#d2c822" stroke-width="1.15" stroke-linejoin="round" opacity="1"/><path d="M2,241.9 L2.2,243 L2.5,242.1 L2.8,240.7 L3,239.8 L3.2,238.3 L3.5,237.3 L3.8,235.7 L4,234.7 L4.2,233.8 L4.5,233 L4.8,231.9 L5,231.2 L5.2,230.5 L5.5,230 L5.8,229.9 L6,229.6 L6.2,229.1 L6.5,228.9 L6.8,229.2 L7,229 L7.2,229.2 L7.5,229.2 L7.8,229.2 L8,229.9 L8.2,230 L8.5,231 L8.8,231.2 L9,232 L9.2,232.7 L9.5,233.8 L9.8,235 L10,235.9 L10.2,237.1 L10.5,238.3 L10.8,239.6 L11,241.2 L11.2,242.5 L11.5,243.1 L11.8,241.6 L12,240.1 L12.2,239 L12.5,237.7 L12.8,236.2 L13,235.3 L13.2,234.2 L13.5,233 L13.8,232.4 L14,231.3 L14.2,230.9 L14.5,230.5 L14.8,229.9 L15,229.6 L15.2,229.3 L15.5,229 L15.8,228.8 L16,228.9 L16.2,228.9 L16.5,229.3 L16.8,229.5 L17,229.9 L17.2,229.9 L17.5,230.7 L17.8,231.3 L18,231.6 L18.2,232.6 L18.5,233.3 L18.8,234.3 L19,235.6 L19.2,236.9 L19.5,237.9 L19.8,239.2 L20,240.7 L20.2,242.1 L20.5,243.3 L20.8,241.9 L21,240.4 L21.2,239.2 L21.5,238.3 L21.8,236.6 L22,235.7 L22.2,234.6 L22.5,233.7 L22.8,232.8 L23,231.6 L23.2,231 L23.5,230.7 L23.8,230.1 L24,229.8 L24.2,229.1 L24.5,229.3 L24.8,229 L25,229.1 L25.2,229.1 L25.5,229 L25.8,229.3 L26,229.3 L26.2,230.1 L26.5,230.5 L26.8,230.9 L27,231.6 L27.2,232.4 L27.5,233.1 L27.8,234 L28,235.2 L28.2,236.5 L28.5,237.7 L28.8,238.9 L29,240 L29.2,241.4 L29.5,242.8 L29.8,242.7 L30,241.4 L30.2,239.9 L30.5,238.6 L30.8,237.2 L31,235.9 L31.2,234.8 L31.5,234.2 L31.8,233.2 L32,232.2 L32.2,231.5 L32.5,230.6 L32.8,230 L33,229.5 L33.2,229.2 L33.5,229.1 L33.8,229.3 L34,229 L34.2,228.9 L34.5,228.8 L34.8,228.9 L35,229.1 L35.2,229.5 L35.5,230 L35.8,230.4 L36,231.1 L36.2,232 L36.5,232.6 L36.8,233.5 L37,234.9 L37.2,235.7 L37.5,237.1 L37.8,238.2 L38,239.7 L38.2,240.7 L38.5,242.2 L38.8,243.4 L39,241.7 L39.2,240.5 L39.5,238.9 L39.8,237.6 L40,236.5 L40.2,235.4 L40.5,234.1 L40.8,233.3 L41,232.4 L41.2,231.6 L41.5,231.1 L41.8,230.6 L42,229.9 L42.2,229.5 L42.5,229.4 L42.8,229.2 L43,229 L43.2,229.1 L43.5,228.9 L43.8,229.2 L44,229.3 L44.2,229.7 L44.5,229.8 L44.8,230.2 L45,231.2 L45.2,231.7 L45.5,232.6 L45.8,233.5 L46,234.5 L46.2,235.3 L46.5,236.7 L46.8,237.8 L47,239 L47.2,240.2 L47.5,241.6 L47.8,243.1 L48,242.3 L48.2,240.9 L48.5,239.6 L48.8,238.5 L49,237.1 L49.2,235.9 L49.5,234.5 L49.8,233.8 L50,232.8 L50.2,232.1 L50.5,231.2 L50.8,230.7 L51,230.1 L51.2,229.8 L51.5,229.4 L51.8,229.3 L52,229.2 L52.2,229 L52.5,229 L52.8,229.2 L53,229.2 L53.2,229.7 L53.5,230 L53.8,230.2 L54,230.8 L54.2,231.2 L54.5,232.3 L54.8,233 L55,233.7 L55.2,234.7 L55.5,236.2 L55.8,237.4 L56,238.6 L56.2,239.8 L56.5,241.1 L56.8,242.6 L57,243.1 L57.2,241.6 L57.5,239.9 L57.8,238.6 L58,237.3 L58.2,236.5 L58.5,235.3 L58.8,234.3 L59,233.1 L59.2,232.2 L59.5,231.3 L59.8,230.7 L60,230.2 L60.2,229.8 L60.5,229.4 L60.8,229.4 L61,229.3 L61.2,229 L61.5,229.2 L61.8,228.9 L62,229 L62.2,229.5 L62.5,229.4 L62.8,229.8 L63,230.8 L63.2,231.1 L63.5,231.8 L63.8,232.8 L64,233.7 L64.2,234.5 L64.5,235.8 L64.8,236.6 L65,238.2 L65.2,239.3 L65.5,240.6 L65.8,241.8 L66,243.3 L66.2,242 L66.5,240.5 L66.8,239.4 L67,238.3 L67.2,236.7 L67.5,235.7 L67.8,234.6 L68,233.6 L68.2,232.8 L68.5,231.8 L68.8,231.3 L69,230.3 L69.2,230.1 L69.5,229.6 L69.8,229.2 L70,229 L70.2,229.3 L70.5,229.1 L70.8,229 L71,229.1 L71.2,229.4 L71.5,229.6 L71.8,229.7 L72,230.5 L72.2,231 L72.5,231.7 L72.8,232.4 L73,233.2 L73.2,234 L73.5,235.4 L73.8,236.4 L74,237.3 L74.2,238.9 L74.5,240.1 L74.8,241.3 L75,243.1 L75.2,242.5 L75.5,241.2 L75.8,239.7 L76,238.5 L76.2,237.3 L76.5,236.2 L76.8,235.2 L77,234.1 L77.2,233.1 L77.5,232.1 L77.8,231.6 L78,230.6 L78.2,230.1 L78.5,229.8 L78.8,229.4 L79,229.2 L79.2,228.9 L79.5,228.9 L79.8,228.8 L80,229 L80.2,229 L80.5,229.5 L80.8,229.6 L81,230 L81.2,230.7 L81.5,231.1 L81.8,232.1 L82,232.8 L82.2,233.5 L82.5,234.8 L82.8,236.1 L83,236.9 L83.2,238.3 L83.5,239.6 L83.8,241.2 L84,242.6 L84.2,243 L84.5,241.7 L84.8,240.6 L85,239 L85.2,237.8 L85.5,236.6 L85.8,235.1 L86,234.1 L86.2,233.5 L86.5,232.4 L86.8,231.6 L87,231 L87.2,230.5 L87.5,230.1 L87.8,229.4 L88,229.4 L88.2,228.9 L88.5,229 L88.8,229.2 L89,229 L89.2,229 L89.5,229.5 L89.8,229.7 L90,230.1 L90.2,230.4 L90.5,230.9 L90.8,231.8 L91,232.4 L91.2,233.1 L91.5,234.1 L91.8,235.6 L92,236.6 L92.2,237.5 L92.5,239.2 L92.8,240.5 L93,241.6 L93.2,243.5 L93.5,242.2 L93.8,241 L94,239.7 L94.2,238.3 L94.5,236.9 L94.8,235.8 L95,234.8 L95.2,233.9 L95.5,233 L95.8,232.2 L96,231.4 L96.2,230.6 L96.5,230 L96.8,229.9 L97,229.6 L97.2,229.1 L97.5,229.2 L97.8,228.9 L98,228.8 L98.2,229.1 L98.5,229.4 L98.8,229.5 L99,229.9 L99.2,230.4 L99.5,230.9 L99.8,231.3 L100,232.3 L100.2,232.8 L100.5,233.9 L100.8,234.7 L101,236 L101.2,237.5 L101.5,238.7 L101.8,240.1 L102,241.3 L102.2,242.7 L102.5,242.8 L102.8,241.5 L103,240.3 L103.2,238.7 L103.5,237.7 L103.8,236.2 L104,235.3 L104.2,234 L104.5,233.4 L104.8,232.1 L105,231.3 L105.2,230.9 L105.5,230.4 L105.8,230 L106,229.5 L106.2,229.4 L106.5,228.9 L106.8,228.9 L107,228.9 L107.2,228.9 L107.5,228.9 L107.8,229.2 L108,229.6 L108.2,230.1 L108.5,230.4 L108.8,231.2 L109,231.7 L109.2,232.8 L109.5,233.3 L109.8,234.7 L110,235.8 L110.2,236.8 L110.5,238.1 L110.8,239.6 L111,240.5 L111.2,241.9 L111.5,243.5 L111.8,242.2 L112,240.7 L112.2,239.3 L112.5,238 L112.8,236.8 L113,235.8 L113.2,234.3 L113.5,233.6 L113.8,232.4 L114,232 L114.2,231 L114.5,230.7 L114.8,229.9 L115,229.7 L115.2,229.3 L115.5,229.4 L115.8,229 L116,229 L116.2,229 L116.5,229 L116.8,229.5 L117,229.4 L117.2,229.7 L117.5,230.2 L117.8,231 L118,231.7 L118.2,232.3 L118.5,233.4 L118.8,234 L119,235.4 L119.2,236.4 L119.5,237.4 L119.8,238.6 L120,240.1 L120.2,241.5 L120.5,242.9 L120.8,242.8 L121,241.1 L121.2,239.7 L121.5,238.4 L121.8,237.1 L122,236 L122.2,235 L122.5,233.8 L122.8,232.8 L123,232.2 L123.2,231.2 L123.5,230.9 L123.8,230.3 L124,229.6 L124.2,229.2 L124.5,229.4 L124.8,228.8 L125,229.1 L125.2,229 L125.5,229.1 L125.8,229 L126,229.5 L126.2,229.6 L126.5,230.2 L126.8,230.9 L127,231.3 L127.2,231.8 L127.5,232.7 L127.8,233.7 L128,234.9 L128.2,236 L128.5,237 L128.8,238.3 L129,239.5 L129.2,240.9 L129.5,242.3 L129.8,243.4 L130,241.7 L130.2,240.3 L130.5,239.1 L130.8,237.6 L131,236.3 L131.2,235.4 L131.5,234.5 L131.8,233.3 L132,232.3 L132.2,231.6 L132.5,231 L132.8,230.3 L133,229.9 L133.2,229.6 L133.5,229.1 L133.8,229 L134,229.2 L134.2,228.9 L134.5,229.1 L134.8,228.9 L135,229.3 L135.2,229.5 L135.5,230 L135.8,230.2 L136,230.8 L136.2,231.6 L136.5,232.7 L136.8,233.3 L137,234.5 L137.2,235.4 L137.5,236.8 L137.8,237.6 L138,239.2 L138.2,240.3 L138.5,241.6 L138.8,243.2 L139,242.3 L139.2,241.2 L139.5,239.8 L139.8,238.4 L140,236.9 L140.2,235.7 L140.5,234.7 L140.8,233.6 L141,232.7 L141.2,231.8 L141.5,231.1 L141.8,230.5 L142,229.9 L142.2,229.6 L142.5,229.6 L142.8,229.3 L143,229.1 L143.2,229.2 L143.5,229.2 L143.8,228.9 L144,229 L144.2,229.4 L144.5,229.8 L144.8,230.4 L145,230.5 L145.2,231.5 L145.5,232.3 L145.8,232.8 L146,234 L146.2,235.1 L146.5,235.9 L146.8,237.3 L147,238.5 L147.2,240 L147.5,241.1 L147.8,242.7 L148,242.7 L148.2,241.3 L148.5,240.1 L148.8,238.7 L149,237.5 L149.2,236.2 L149.5,235.4 L149.8,234.1 L150,233.1 L150.2,232.2 L150.5,231.7 L150.8,230.7 L151,230.5 L151.2,229.7 L151.5,229.7 L151.8,229.2 L152,229.1 L152.2,228.9 L152.5,229.2 L152.8,228.9 L153,229.3 L153.2,229.4 L153.5,229.8 L153.8,230.3 L154,230.7 L154.2,230.9 L154.5,232 L154.8,232.4 L155,233.7 L155.2,234.7 L155.5,235.4 L155.8,236.5 L156,238.2 L156.2,239.2 L156.5,240.8 L156.8,242.2 L157,243.7 L157.2,242.1 L157.5,240.8 L157.8,239.5 L158,238.2 L158.2,236.7 L158.5,235.8 L158.8,234.5 L159,233.7 L159.2,232.6 L159.5,231.8 L159.8,230.9 L160,230.3 L160.2,230.2 L160.5,229.6 L160.8,229.5 L161,229.1 L161.2,229.1 L161.5,229 L161.8,228.8 L162,229 L162.2,229.3 L162.5,229.3 L162.8,230.1 L163,230.1 L163.2,230.9 L163.5,231.7 L163.8,232.4 L164,233 L164.2,233.9 L164.5,235.3 L164.8,236.3 L165,237.3 L165.2,238.6 L165.5,240.2 L165.8,241.3 L166,242.8 L166.2,242.9 L166.5,241.1 L166.8,240 L167,238.3 L167.2,237.1 L167.5,235.8 L167.8,235.1 L168,233.9 L168.2,233.1 L168.5,232.3 L168.8,231.5 L169,230.5 L169.2,230.2 L169.5,229.5 L169.8,229.6 L170,229.1 L170.2,229.1 L170.5,229.2 L170.8,229.2 L171,229.1 L171.2,229.1 L171.5,229.6 L171.8,229.9 L172,230 L172.2,230.6 L172.5,231.5 L172.8,232.2 L173,233 L173.2,233.7 L173.5,234.6 L173.8,236 L174,236.9 L174.2,238.3 L174.5,239.5 L174.8,241.1 L175,242.3 L175.2,243.2 L175.5,242 L175.8,240.5 L176,239.3 L176.2,237.6 L176.5,236.4 L176.8,235.5 L177,234.3 L177.2,233.5 L177.5,232.4 L177.8,231.4 L178,231 L178.2,230.3 L178.5,230.1 L178.8,229.7 L179,229.5 L179.2,228.9 L179.5,229.1 L179.8,228.8 L180,229.3 L180.2,228.9 L180.5,229.4 L180.8,229.7 L181,229.8 L181.2,230.4 L181.5,230.8 L181.8,231.4 L182,232.3 L182.2,233.1 L182.5,234.3 L182.8,235.5 L183,236.7 L183.2,237.6 L183.5,239 L183.8,240.5 L184,241.7 L184.2,243.1 L184.5,242.3 L184.8,241.1 L185,239.5 L185.2,238.4 L185.5,236.8 L185.8,235.7 L186,234.6 L186.2,233.6 L186.5,232.6 L186.8,231.9 L187,231.4 L187.2,230.7 L187.5,230.4 L187.8,229.6 L188,229.3 L188.2,229 L188.5,229 L188.8,228.8 L189,229.2 L189.2,229 L189.5,229 L189.8,229.4 L190,229.7 L190.2,230 L190.5,230.6 L190.8,231.5 L191,232.4 L191.2,233 L191.5,233.8 L191.8,234.7 L192,236 L192.2,237.1 L192.5,238.5 L192.8,239.8 L193,241.1 L193.2,242.5 L193.5,243.1 L193.8,241.7 L194,240.2 L194.2,239 L194.5,237.5 L194.8,236.4 L195,235.1 L195.2,234.2 L195.5,233.3 L195.8,232.4 L196,231.7 L196.2,230.9 L196.5,230.2 L196.8,230 L197,229.7 L197.2,229.1 L197.5,228.9 L197.8,228.8 L198,228.9 L198.2,228.9 L198.5,229 L198.8,229.2 L199,229.5 L199.2,229.8 L199.5,230.7 L199.8,230.9 L200,231.6 L200.2,232.8 L200.5,233.5 L200.8,234.6 L201,235.5 L201.2,236.5 L201.5,237.8 L201.8,239.5 L202,240.4 L202.2,242 L202.5,243.4 L202.8,242.1 L203,240.6 L203.2,239.5 L203.5,237.9 L203.8,236.8 L204,235.8 L204.2,234.5 L204.5,233.7 L204.8,232.4 L205,232 L205.2,231.1 L205.5,230.8 L205.8,230.1 L206,229.5 L206.2,229.5 L206.5,229 L206.8,229 L207,229.1 L207.2,228.8 L207.5,228.9 L207.8,229.4 L208,229.3 L208.2,230 L208.5,230.3 L208.8,230.7 L209,231.7 L209.2,232.2 L209.5,233 L209.8,234.3 L210,235.4 L210.2,236.2 L210.5,237.7 L210.8,238.6 L211,240.3 L211.2,241.6 L211.5,242.8 L211.8,242.6 L212,241.1 L212.2,239.9 L212.5,238.5 L212.8,237.2 L213,236.2 L213.2,234.9 L213.5,233.7 L213.8,233 L214,232.3 L214.2,231.2 L214.5,230.6 L214.8,230.4 L215,229.6 L215.2,229.7 L215.5,229.1 L215.8,228.9 L216,229.1 L216.2,229.2 L216.5,229 L216.8,229.1 L217,229.2 L217.2,229.4 L217.5,230.2 L217.8,230.7 L218,231.1 L218.2,232 L218.5,232.9 L218.8,233.8 L219,234.8 L219.2,236 L219.5,236.9 L219.8,238.5 L220,239.6 L220.2,240.9 L220.5,242.4 L220.8,243.1 L221,241.7 L221.2,240.6 L221.5,239.2 L221.8,237.8 L222,236.7 L222.2,235.6 L222.5,234.3 L222.8,233.1 L223,232.7 L223.2,231.4 L223.5,231 L223.8,230.2 L224,229.9 L224.2,229.7 L224.5,229.1 L224.8,229.1 L225,229 L225.2,229.1 L225.5,229.2 L225.8,229.2 L226,229.1 L226.2,229.5 L226.5,229.9 L226.8,230.2 L227,231.2 L227.2,231.6 L227.5,232.4 L227.8,233.2 L228,234.3 L228.2,235.5 L228.5,236.3 L228.8,237.8 L229,239 L229.2,240.2 L229.5,241.7 L229.8,243.3 L230,242.4 L230.2,241.2 L230.5,239.7 L230.8,238.5 L231,237.1 L231.2,235.9 L231.5,234.9 L231.8,233.9 L232,232.9 L232.2,231.9 L232.5,231.1 L232.8,230.8 L233,229.9 L233.2,229.6 L233.5,229.6 L233.8,229.1 L234,229 L234.2,228.9 L234.5,229.1 L234.8,229.2 L235,229 L235.2,229.4 L235.5,229.9 L235.8,230.2 L236,231 L236.2,231.3 L236.5,232.1 L236.8,232.8 L237,234.1 L237.2,234.9 L237.5,236.2 L237.8,237.4 L238,238.4 L238.2,240 L238.5,241 L238.8,242.9 L239,243.1 L239.2,241.4 L239.5,240.2 L239.8,238.7 L240,237.5 L240.2,236.5 L240.5,235.1 L240.8,234.2 L241,232.9 L241.2,232.1 L241.5,231.5 L241.8,230.8 L242,230.5 L242.2,229.9 L242.5,229.7 L242.8,229.3 L243,229.3 L243.2,228.9 L243.5,228.8 L243.8,229.2 L244,229.2 L244.2,229.2 L244.5,229.5 L244.8,230 L245,230.7 L245.2,231.2 L245.5,231.8 L245.8,232.7 L246,233.4 L246.2,234.5 L246.5,235.5 L246.8,236.9 L247,237.8 L247.2,239.3 L247.5,240.5 L247.8,241.9 L248,243.6 L248.2,242.3 L248.5,240.7 L248.8,239.6 L249,238.1 L249.2,236.8 L249.5,235.7 L249.8,234.3 L250,233.3 L250.2,232.7 L250.5,231.7 L250.8,231.3 L251,230.4 L251.2,229.9 L251.5,229.5 L251.8,229.6 L252,229.2 L252.2,228.9 L252.5,228.8 L252.8,229.1 L253,228.8 L253.2,229.4 L253.5,229.3 L253.8,230 L254,230.5 L254.2,230.8 L254.5,231.6 L254.8,232.4 L255,233.1 L255.2,234.1 L255.5,235.4 L255.8,236.2 L256,237.5 L256.2,238.5 L256.5,240.2 L256.8,241.7 L257,242.9 L257.2,242.8 L257.5,241.1 L257.8,239.8 L258,238.5 L258.2,237.5 L258.5,236 L258.8,234.7 L259,233.9 L259.2,233 L259.5,232.2 L259.8,231.4 L260,230.6 L260.2,230.3 L260.5,229.6 L260.8,229.3 L261,229 L261.2,228.8 L261.5,228.9 L261.8,229.1 L262,229 L262.2,229.2 L262.5,229.3 L262.8,229.6 L263,230.2 L263.2,230.8 L263.5,231.1 L263.8,232.1 L264,233 L264.2,233.7 L264.5,234.9 L264.8,235.7 L265,237.2 L265.2,238.1 L265.5,239.4 L265.8,240.7 L266,242.1 L266.2,243.3 L266.5,241.7 L266.8,240.3 L267,239.2 L267.2,237.6 L267.5,236.7 L267.8,235.2 L268,234.6 L268.2,233.5 L268.5,232.4 L268.8,231.9 L269,231.2 L269.2,230.6 L269.5,229.8 L269.8,229.5 L270,229.2 L270.2,229.1 L270.5,229.1 L270.8,229.2 L271,228.9 L271.2,229.1 L271.5,229.2 L271.8,229.5 L272,229.7 L272.2,230.4 L272.5,231 L272.8,231.7 L273,232.6 L273.2,233.3 L273.5,234.2 L273.8,235.6 L274,236.5 L274.2,237.6 L274.5,239.1 L274.8,240.5 L275,241.7 L275.2,243.1 L275.5,242.1 L275.8,241 L276,239.5 L276.2,238.4 L276.5,236.8 L276.8,235.9 L277,234.6 L277.2,233.6 L277.5,232.6 L277.8,232 L278,231.4 L278.2,230.6 L278.5,230.3 L278.8,229.8 L279,229.6 L279.2,229.2 L279.5,229 L279.8,229 L280,229.2 L280.2,229 L280.5,229.1 L280.8,229.7 L281,230 L281.2,230.3 L281.5,230.9 L281.8,231.2 L282,232.3 L282.2,233 L282.5,233.8 L282.8,234.8 L283,236.2 L283.2,237.5 L283.5,238.7 L283.8,239.6 L284,241.3 L284.2,242.6 L284.5,242.8 L284.8,241.3 L285,240.2 L285.2,238.7 L285.5,237.4 L285.8,236.3 L286,235.4 L286.2,234 L286.5,233.2 L286.8,232.4 L287,231.6 L287.2,231 L287.5,230.2 L287.8,230 L288,229.3 L288.2,229.2 L288.5,229.2 L288.8,229.2 L289,228.9 L289.2,229.1 L289.5,229.2 L289.8,229.1 L290,229.8 L290.2,230.2 L290.5,230.3 L290.8,231 L291,231.8 L291.2,232.8 L291.5,233.8 L291.8,234.4 L292,235.6 L292.2,236.6 L292.5,237.8 L292.8,239.2 L293,240.9 L293.2,242.3 L293.5,243.3 L293.8,242.1 L294,240.7 L294.2,239.3 L294.5,238.2 L294.8,236.6 L295,235.5 L295.2,234.3 L295.5,233.7 L295.8,232.8 L296,231.8 L296.2,230.9 L296.5,230.7 L296.8,230.2 L297,229.8 L297.2,229.6 L297.5,229.2 L297.8,229 L298,229.2 L298.2,228.8 L298.5,229.3 L298.8,229.2 L299,229.5 L299.2,230 L299.5,230.1 L299.8,230.8 L300,231.7 L300.2,232.2 L300.5,233.4 L300.8,234.2 L301,235 L301.2,236.3 L301.5,237.4 L301.8,238.9 L302,240.2 L302.2,241.5 L302.5,242.7 L302.8,242.8 L303,241.1 L303.2,239.9 L303.5,238.7 L303.8,237.2 L304,235.8 L304.2,235 L304.5,233.7 L304.8,232.8 L305,232 L305.2,231.2 L305.5,230.8 L305.8,230.3 L306,229.7 L306.2,229.7 L306.5,229 L306.8,229 L307,228.9 L307.2,229 L307.5,229.1 L307.8,229.1 L308,229.3 L308.2,229.6 L308.5,230 L308.8,230.4 L309,231.4 L309.2,231.7 L309.5,232.8 L309.8,233.6 L310,234.7 L310.2,235.9 L310.5,237.2 L310.8,238.5 L311,239.6 L311.2,240.8 L311.5,242.1 L311.8,243 L312,242 L312.2,240.3 L312.5,239 L312.8,237.7 L313,236.5 L313.2,235.2 L313.5,234.2 L313.8,233.3 L314,232.4 L314.2,231.4 L314.5,230.8 L314.8,230.2 L315,229.9 L315.2,229.6 L315.5,229.5 L315.8,229.1 L316,229.1 L316.2,229.1 L316.5,229 L316.8,229.1 L317,229.1 L317.2,229.7 L317.5,230 L317.8,230.3 L318,231.1 L318.2,231.5 L318.5,232.3 L318.8,233.2 L319,234.3 L319.2,235.3 L319.5,236.4 L319.8,238 L320,239.2 L320.2,240.3 L320.5,241.6 L320.8,243.3 L321,242.6 L321.2,241.1 L321.5,239.7 L321.8,238.5 L322,237.1 L322.2,235.6 L322.5,234.7 L322.8,233.7 L323,232.8 L323.2,231.8 L323.5,231.3 L323.8,230.7 L324,230 L324.2,229.8 L324.5,229.3 L324.8,229.3 L325,229 L325.2,229.2 L325.5,229 L325.8,228.8 L326,229 L326.2,229.5 L326.5,229.6 L326.8,230.3 L327,230.7 L327.2,231.3 L327.5,232.1 L327.8,233.1 L328,233.9 L328.2,234.9 L328.5,236.1 L328.8,237.3 L329,238.5 L329.2,240 L329.5,241.2 L329.8,242.5 L330,242.7 L330.2,241.5 L330.5,240 L330.8,238.6 L331,237.3 L331.2,236.2 L331.5,235.4 L331.8,234.1 L332,233 L332.2,232.3 L332.5,231.5 L332.8,230.6 L333,230.5 L333.2,229.9 L333.5,229.7 L333.8,229.3 L334,229 L334.2,229.3 L334.5,228.8 L334.8,228.9 L335,229 L335.2,229.2 L335.5,229.4 L335.8,230.2 L336,230.3 L336.2,231.1 L336.5,231.6 L336.8,232.5 L337,233.3 L337.2,234.5 L337.5,235.5 L337.8,236.9 L338,238.3 L338.2,239.2 L338.5,240.7 L338.8,242.1 L339,243.7 L339.2,241.9 L339.5,240.8 L339.8,239.3 L340,238 L340.2,236.9 L340.5,235.7 L340.8,234.5 L341,233.7 L341.2,232.7 L341.5,231.7 L341.8,231 L342,230.4 L342.2,230.2 L342.5,229.8 L342.8,229.2 L343,229.2 L343.2,228.8 L343.5,228.8 L343.8,229.1 L344,229.1 L344.2,229.2 L344.5,229.5 L344.8,229.8 L345,230.2 L345.2,230.7 L345.5,231.7 L345.8,232.1 L346,233.2 L346.2,233.9 L346.5,235.1 L346.8,236.1 L347,237.3 L347.2,238.8 L347.5,239.9 L347.8,241.5 L348,243 L348.2,242.7 L348.5,241 L348.8,239.8 L349,238.4 L349.2,237.4 L349.5,236.2 L349.8,235 L350,234.1 L350.2,232.9 L350.5,232.4 L350.8,231.5 L351,230.9 L351.2,230 L351.5,229.9 L351.8,229.5 L352,229.3 L352.2,229.3 L352.5,228.9 L352.8,228.8 L353,229.1 L353.2,229 L353.5,229.6 L353.8,229.9 L354,230.1 L354.2,230.8 L354.5,231.3 L354.8,232.2 L355,232.8 L355.2,233.6 L355.5,235 L355.8,235.7 L356,236.8 L356.2,238.4 L356.5,239.7 L356.8,241.1 L357,242.2 L357.2,243.4 L357.5,242 L357.8,240.5 L358,238.8 L358.2,237.9 L358.5,236.5 L358.8,235.2 L359,234.2 L359.2,233.6 L359.5,232.4 L359.8,231.6 L360,231.2 L360.2,230.5 L360.5,229.9 L360.8,229.5 L361,229.3 L361.2,229.1 L361.5,229.1 L361.8,229.1 L362,228.9 L362.2,229.3 L362.5,229.4 L362.8,229.6 L363,229.8 L363.2,230.4 L363.5,231.2 L363.8,231.5 L364,232.4 L364.2,233.4 L364.5,234.4 L364.8,235.6 L365,236.5 L365.2,237.9 L365.5,238.9 L365.8,240.2 L366,241.9 L366.2,243.1 L366.5,242.5 L366.8,240.9 L367,239.5 L367.2,238.4 L367.5,236.8 L367.8,236.1 L368,234.6 L368.2,233.5 L368.5,232.7 L368.8,231.8 L369,231.1 L369.2,230.6 L369.5,230.1 L369.8,229.5 L370,229.6 L370.2,229 L370.5,228.9 L370.8,228.9 L371,228.8 L371.2,229.3 L371.5,229 L371.8,229.2 L372,229.8 L372.2,230.1 L372.5,230.5 L372.8,231.4 L373,232 L373.2,232.8 L373.5,233.9 L373.8,234.8 L374,236 L374.2,237.3 L374.5,238.8 L374.8,239.9 L375,241.3 L375.2,242.5 L375.5,242.9 L375.8,241.4 L376,240.3 L376.2,239 L376.5,237.7 L376.8,236.3 L377,235.3 L377.2,234 L377.5,233.3 L377.8,232.5 L378,231.4 L378.2,230.6 L378.5,230.5 L378.8,229.9 L379,229.6 L379.2,229.4 L379.5,229.2 L379.8,228.8 L380,228.9 L380.2,229 L380.5,229.3 L380.8,229.5 L381,229.5 L381.2,229.8 L381.5,230.7 L381.8,231.3 L382,231.6 L382.2,232.5 L382.5,233.3 L382.8,234.5 L383,235.4 L383.2,236.7 L383.5,237.9 L383.8,239.1 L384,240.9 L384.2,241.9 L384.5,243.7 L384.8,242.2 L385,240.6 L385.2,239.3 L385.5,238 L385.8,236.7 L386,235.6 L386.2,234.3 L386.5,233.6 L386.8,232.6 L387,231.7 L387.2,231.3 L387.5,230.4 L387.8,230.1 L388,229.7 L388.2,229.5 L388.5,229.2 L388.8,229 L389,229 L389.2,229.1 L389.5,228.6 L389.8,228.8 L390,228.9 L390.2,228.7 L390.5,228.8 L390.8,228.9 L391,229 L391.2,228.8 L391.5,229.1 L391.8,229.2 L392,229.2 L392.2,229.1 L392.5,229.5 L392.8,229.2 L393,229.3 L393.2,229 L393.5,229.2 L393.8,229.1 L394,229.2 L394.2,228.8 L394.5,228.6 L394.8,228.7 L395,228.7 L395.2,228.8 L395.5,228.7 L395.8,229 L396,229.1 L396.2,228.7 L396.5,229.3 L396.8,228.9 L397,229.1 L397.2,229 L397.5,229.4 L397.8,229.5 L398,229.1 L398.2,229.2 L398.5,229.3 L398.8,229.1 L399,228.8 L399.2,228.8 L399.5,229 L399.8,228.9 L400,228.7 L400.2,228.8 L400.5,228.6 L400.8,228.8 L401,229.1 L401.2,228.8 L401.5,229 L401.8,229.2 L402,229 L402.2,229.1 L402.5,229.4 L402.8,229.1 L403,229.2 L403.2,229.3 L403.5,229 L403.8,229 L404,228.7 L404.2,228.8 L404.5,228.8 L404.8,228.7 L405,228.7 L405.2,228.6 L405.5,228.9 L405.8,228.8 L406,229.1 L406.2,229 L406.5,229.4 L406.8,229.2 L407,229.4 L407.2,229.3 L407.5,229.1 L407.8,229.2 L408,229 L408.2,229.1 L408.5,228.9 L408.8,228.8 L409,229.1 L409.2,229 L409.5,228.8 L409.8,228.8 L410,228.9 L410.2,228.9 L410.5,228.9 L410.8,229 L411,229.2 L411.2,228.9 L411.5,229.1 L411.8,229 L412,229.3 L412.2,229 L412.5,229.2 L412.8,229 L413,229 L413.2,229.2 L413.5,228.8 L413.8,228.8 L414,228.9 L414.2,228.6 L414.5,228.6 L414.8,228.7 L415,228.9 L415.2,228.7 L415.5,228.8 L415.8,228.8 L416,229 L416.2,229.1 L416.5,229.3 L416.8,229.1 L417,229.3 L417.2,229.4 L417.5,229.1 L417.8,229.2 L418,229.2 L418.2,229.2 L418.5,229 L418.8,228.9 L419,228.8 L419.2,228.7 L419.5,229 L419.8,228.6 L420,228.8 L420.2,228.7 L420.5,229 L420.8,229.3 L421,229.2 L421.2,229 L421.5,229.4 L421.8,229 L422,229.1 L422.2,229.2 L422.5,228.9 L422.8,229.2 L423,229.1 L423.2,229.1 L423.5,228.9 L423.8,228.7 L424,228.6 L424.2,228.7 L424.5,228.8 L424.8,229 L425,228.7 L425.2,229 L425.5,229.1 L425.8,229 L426,229.3 L426.2,229.1 L426.5,229.2 L426.8,229.1 L427,229.4 L427.2,228.9 L427.5,229 L427.8,229.1 L428,228.9 L428.2,228.7 L428.5,228.8 L428.8,228.7 L429,228.8 L429.2,228.7 L429.5,228.6 L429.8,229 L430,228.9 L430.2,229.2 L430.5,229 L430.8,229.4 L431,229.1 L431.2,229.3 L431.5,229.5 L431.8,229.1 L432,229.3 L432.2,229.1 L432.5,228.8 L432.8,229 L433,228.8 L433.2,228.6 L433.5,228.9 L433.8,228.8 L434,229 L434.2,228.6 L434.5,228.8 L434.8,229 L435,228.9 L435.2,228.9 L435.5,229.1 L435.8,229.2 L436,229.2 L436.2,229.2 L436.5,229.2 L436.8,229.2 L437,229.2 L437.2,228.9 L437.5,229 L437.8,229.1 L438,229 L438.2,228.9 L438.5,229 L438.8,228.7 L439,228.9 L439.2,229 L439.5,228.8 L439.8,229.1 L440,229 L440.2,229.2 L440.5,229 L440.8,229.4 L441,229.2 L441.2,229.2 L441.5,229.2 L441.8,229.3 L442,229.3 L442.2,229.2 L442.5,229 L442.8,228.7 L443,228.8 L443.2,228.8 L443.5,228.7 L443.8,229 L444,228.7 L444.2,228.9 L444.5,229.2 L444.8,228.9 L445,229.1 L445.2,229.4 L445.5,229.4 L445.8,229.2 L446,229.3 L446.2,229.3 L446.5,229 L446.8,229.3 L447,229.2 L447.2,229.2 L447.5,228.7 L447.8,228.8 L448,228.9 L448.2,228.9 L448.5,228.9 L448.8,228.6 L449,228.9 L449.2,228.8 L449.5,228.8 L449.8,229.1 L450,228.9 L450.2,229.1 L450.5,229.2 L450.8,229.2 L451,229.1 L451.2,229.2 L451.5,229.1 L451.8,228.9 L452,228.8 L452.2,228.8 L452.5,228.6 L452.8,228.8 L453,229 L453.2,228.6 L453.5,229 L453.8,228.8 L454,228.9 L454.2,229.1 L454.5,229 L454.8,229.1 L455,229.4 L455.2,229 L455.5,229.2 L455.8,229.1 L456,229.2 L456.2,229.2 L456.5,229.2 L456.8,228.9 L457,229.1 L457.2,229.1 L457.5,228.9 L457.8,228.8 L458,228.9 L458.2,228.5 L458.5,228.9 L458.8,228.8 L459,228.9 L459.2,229.1 L459.5,229 L459.8,229.4 L460,229 L460.2,229.1 L460.5,229.2 L460.8,229 L461,229 L461.2,229.2 L461.5,228.9 L461.8,228.8 L462,229 L462.2,229 L462.5,228.8 L462.8,228.8 L463,228.7 L463.2,229 L463.5,229 L463.8,229.1 L464,229 L464.2,228.9 L464.5,229.1 L464.8,229.2 L465,229.3 L465.2,229.1 L465.5,229.1 L465.8,229.2 L466,228.9 L466.2,228.9 L466.5,229 L466.8,228.9 L467,229 L467.2,229 L467.5,228.8 L467.8,228.8 L468,228.7 L468.2,228.9 L468.5,228.8 L468.8,229.2 L469,229.1 L469.2,229 L469.5,229.2 L469.8,229.4 L470,229 L470.2,229.5 L470.5,229.3 L470.8,229.2 L471,229 L471.2,228.9 L471.5,228.8 L471.8,229 L472,228.9 L472.2,228.8 L472.5,228.7 L472.8,228.7 L473,228.6 L473.2,228.8 L473.5,229 L473.8,228.8 L474,229.3 L474.2,228.9 L474.5,229.2 L474.8,229.1 L475,229.3 L475.2,229.1 L475.5,229.2 L475.8,228.9 L476,229.2 L476.2,229.2 L476.5,229.1 L476.8,228.9 L477,228.6 L477.2,228.8 L477.5,228.8 L477.8,228.9 L478,228.8 L478.2,229.1 L478.5,228.9 L478.8,228.8 L479,229 L479.2,229.5 L479.5,229.2 L479.8,229.1 L480,229.1 L480.2,229.4 L480.5,229.3 L480.8,229 L481,228.7 L481.2,229 L481.5,228.6 L481.8,228.9 L482,228.7 L482.2,228.7 L482.5,228.5 L482.8,228.9 L483,229.1 L483.2,229 L483.5,229.2 L483.8,229 L484,229.1 L484.2,229.2 L484.5,229.1 L484.8,229.5 L485,229.2 L485.2,228.9 L485.5,229.1 L485.8,228.8 L486,228.8 L486.2,229 L486.5,228.7 L486.8,228.6 L487,228.9 L487.2,228.7 L487.5,229 L487.8,228.6 L488,228.7 L488.2,229.3 L488.5,229.2 L488.8,229.2 L489,229.4 L489.2,229.1 L489.5,229.4 L489.8,229.1 L490,229.4 L490.2,229.1 L490.5,229.2 L490.8,229.2 L491,229 L491.2,228.6 L491.5,228.7 L491.8,229 L492,228.7 L492.2,228.6 L492.5,228.8 L492.8,228.7 L493,228.8 L493.2,229.1 L493.5,228.9 L493.8,229.2 L494,229.2 L494.2,229.4 L494.5,229.2 L494.8,229.2 L495,229.2 L495.2,228.9 L495.5,229 L495.8,228.7 L496,228.8 L496.2,228.9 L496.5,229 L496.8,229 L497,228.9 L497.2,228.6 L497.5,228.9 L497.8,228.9 L498,229 L498.2,229.1 L498.5,229.3 L498.8,229 L499,229.3 L499.2,229 L499.5,229.3 L499.8,229.4 L500,229.5 L500.2,229.6 L500.5,229.7 L500.8,229.7 L501,229.4 L501.2,229.6 L501.5,229.6 L501.8,229.6 L502,229.4 L502.2,229.1 L502.5,229.1 L502.8,228.8 L503,229.2 L503.2,229.2 L503.5,228.8 L503.8,229.2 L504,229.3 L504.2,229.2 L504.5,229.3 L504.8,229.2 L505,229.2 L505.2,229.2 L505.5,229.1 L505.8,229.2 L506,229.2 L506.2,229.4 L506.5,229.4 L506.8,229.4 L507,229.8 L507.2,229.4 L507.5,229.6 L507.8,229.8 L508,229.6 L508.2,229.5 L508.5,229.8 L508.8,229.8 L509,230 L509.2,229.9 L509.5,229.9 L509.8,230.1 L510,230.2 L510.2,230 L510.5,230 L510.8,230.4 L511,229.9 L511.2,230 L511.5,229.6 L511.8,229.2 L512,228.8 L512.2,228.9 L512.5,228.9 L512.8,229.2 L513,229.2 L513.2,229.4 L513.5,229.2 L513.8,229.5 L514,229.6 L514.2,229.5 L514.5,229.5 L514.8,229.8 L515,229.6 L515.2,229.4 L515.5,229.9 L515.8,229.6 L516,229.8 L516.2,229.8 L516.5,230.2 L516.8,230.1 L517,230.1 L517.2,230.4 L517.5,230.4 L517.8,230.4 L518,230.3 L518.2,230.3 L518.5,230.7 L518.8,230.7 L519,230.9 L519.2,230.7 L519.5,231 L519.8,230.7 L520,230.7 L520.2,230.6 L520.5,230 L520.8,229.3 L521,228.9 L521.2,228.9 L521.5,229.2 L521.8,229.3 L522,229.3 L522.2,229.3 L522.5,229.2 L522.8,229.4 L523,229.8 L523.2,229.7 L523.5,229.7 L523.8,229.8 L524,229.8 L524.2,229.7 L524.5,229.8 L524.8,230 L525,229.9 L525.2,230.2 L525.5,230.2 L525.8,230.4 L526,230.4 L526.2,230.7 L526.5,230.7 L526.8,230.9 L527,230.9 L527.2,230.8 L527.5,231 L527.8,231.2 L528,231 L528.2,231.4 L528.5,231.6 L528.8,231.6 L529,231.7 L529.2,231.2 L529.5,230.2 L529.8,229.9 L530,229.2 L530.2,228.9 L530.5,229.1 L530.8,229 L531,229.4 L531.2,229.2 L531.5,229.4 L531.8,229.4 L532,229.9 L532.2,229.6 L532.5,229.9 L532.8,229.7 L533,229.9 L533.2,230.1 L533.5,230 L533.8,230.5 L534,230.5 L534.2,230.3 L534.5,230.6 L534.8,230.6 L535,230.8 L535.2,231.1 L535.5,230.9 L535.8,231.3 L536,231.3 L536.2,231.5 L536.5,231.7 L536.8,231.5 L537,231.9 L537.2,232.1 L537.5,232 L537.8,232 L538,232.3 L538.2,231.8 L538.5,230.9 L538.8,230.6 L539,229.4 L539.2,229.1 L539.5,229 L539.8,229.2 L540,229.3 L540.2,229.3 L540.5,229.6 L540.8,229.9 L541,229.7 L541.2,229.9 L541.5,230.2 L541.8,229.9 L542,230.4 L542.2,230.6 L542.5,230.5 L542.8,230.4 L543,230.6 L543.2,230.7 L543.5,231 L543.8,230.9 L544,231.4 L544.2,231.6 L544.5,231.3 L544.8,231.7 L545,231.7 L545.2,231.9 L545.5,232 L545.8,232 L546,232.3 L546.2,232.4 L546.5,232.4 L546.8,232.5 L547,232.7 L547.2,232.6 L547.5,231.9 L547.8,231 L548,230.2 L548.2,229.3 L548.5,229.2 L548.8,229.1 L549,229.3 L549.2,229.3 L549.5,229.8 L549.8,230 L550,230 L550.2,230 L550.5,230 L550.8,230.3 L551,230.5 L551.2,230.5 L551.5,230.7 L551.8,230.6 L552,230.8 L552.2,231.1 L552.5,231.4 L552.8,231.3 L553,231.5 L553.2,231.6 L553.5,231.6 L553.8,231.9 L554,232.2 L554.2,232.2 L554.5,232.4 L554.8,232.6 L555,232.8 L555.2,233 L555.5,233.2 L555.8,233.4 L556,233.4 L556.2,233.6 L556.5,233 L556.8,231.7 L557,230.7 L557.2,229.4 L557.5,229.1 L557.8,229.2 L558,229.6 L558.2,229.3 L558.5,229.5 L558.8,229.9 L559,230.1 L559.2,230.2 L559.5,230.1 L559.8,230.6 L560,230.6 L560.2,230.9 L560.5,231.1 L560.8,231.1 L561,231.2 L561.2,231.4 L561.5,231.3 L561.8,231.8 L562,232.1 L562.2,232.1 L562.5,232.3 L562.8,232.5 L563,232.6 L563.2,232.5 L563.5,233 L563.8,233.2 L564,233.1 L564.2,233.4 L564.5,233.4 L564.8,233.6 L565,233.9 L565.2,234.1 L565.5,233.9 L565.8,232.8 L566,231.5 L566.2,230.1 L566.5,228.9 L566.8,229 L567,229.4 L567.2,229.4 L567.5,229.7 L567.8,229.8 L568,230.1 L568.2,230.3 L568.5,230.3 L568.8,230.5 L569,230.8 L569.2,230.7 L569.5,231.1 L569.8,231.1 L570,231.3 L570.2,231.6 L570.5,231.8 L570.8,231.9 L571,232.4 L571.2,232.2 L571.5,232.7 L571.8,232.8 L572,232.8 L572.2,233 L572.5,233.4 L572.8,233.5 L573,233.7 L573.2,234.1 L573.5,233.9 L573.8,234.1 L574,234.7 L574.2,234.6 L574.5,234.9 L574.8,233.5 L575,232.1 L575.2,231.1 L575.5,229.7 L575.8,229 L576,229.1 L576.2,229.6 L576.5,229.6 L576.8,230 L577,229.9 L577.2,230.5 L577.5,230.3 L577.8,230.6 L578,230.7 L578.2,231.1 L578.5,231.4 L578.8,231.2 L579,231.7 L579.2,232.1 L579.5,232 L579.8,232.4 L580,232.6 L580.2,232.6 L580.5,233.1 L580.8,233.2 L581,233.3 L581.2,233.4 L581.5,233.5 L581.8,234.1 L582,234.2 L582.2,234.4 L582.5,234.5 L582.8,234.5 L583,234.8 L583.2,235 L583.5,235.6 L583.8,234.9 L584,233.2 L584.2,231.8 L584.5,230.3 L584.8,229.3 L585,229.5 L585.2,229.3 L585.5,229.9 L585.8,229.9 L586,230 L586.2,230.4 L586.5,230.3 L586.8,230.9 L587,231.1 L587.2,231 L587.5,231.3 L587.8,231.8 L588,232.1 L588.2,232.1 L588.5,232.5 L588.8,232.3 L589,232.7 L589.2,233.1 L589.5,233 L589.8,233.3 L590,233.5 L590.2,233.9 L590.5,234.3 L590.8,234.3 L591,234.7 L591.2,234.6 L591.5,235 L591.8,235.5 L592,235.8 L592.2,235.6 L592.5,235.8 L592.8,235.8 L593,234.5 L593.2,232.5 L593.5,230.9 L593.8,229.2 L594,229.2 L594.2,229.6 L594.5,229.6 L594.8,230 L595,230.1 L595.2,230.5 L595.5,230.5 L595.8,230.9 L596,231 L596.2,231.2 L596.5,231.4 L596.8,231.9 L597,231.9 L597.2,232.5 L597.5,232.6 L597.8,232.5 L598,233.2 L598.2,233.4 L598.5,233.5 L598.8,233.6 L599,234.1 L599.2,234.1 L599.5,234.7 L599.8,234.9 L600,234.8 L600.2,235.2 L600.5,235.7 L600.8,235.9 L601,235.9 L601.2,236.2 L601.5,236.7 L601.8,236.6 L602,235.3 L602.2,233.8 L602.5,231.8 L602.8,230.2 L603,229.1 L603.2,229.3 L603.5,229.7 L603.8,230 L604,229.9 L604.2,230.4 L604.5,230.8 L604.8,231.1 L605,230.9 L605.2,231.4 L605.5,231.5 L605.8,232.1 L606,232 L606.2,232.6 L606.5,232.6 L606.8,233.2 L607,233 L607.2,233.5 L607.5,233.8 L607.8,234 L608,234.2 L608.2,234.7 L608.5,234.6 L608.8,235.3 L609,235.6 L609.2,235.8 L609.5,236 L609.8,236.2 L610,236.5 L610.2,236.7 L610.5,236.9 L610.8,237.4 L611,236.6 L611.2,234.6 L611.5,233 L611.8,231.2 L612,229.1 L612.2,229.1 L612.5,229.3 L612.8,229.6 L613,230.1 L613.2,230.5 L613.5,230.6 L613.8,230.7 L614,231.4 L614.2,231.6 L614.5,231.6 L614.8,232.2 L615,232.5 L615.2,232.5 L615.5,232.9 L615.8,232.9 L616,233.4 L616.2,233.6 L616.5,234.2 L616.8,234.4 L617,234.5 L617.2,235 L617.5,235 L617.8,235.3 L618,235.7 L618.2,236.2 L618.5,236.6 L618.8,236.6 L619,236.9 L619.2,237.2 L619.5,237.5 L619.8,238 L620,238.2 L620.2,236 L620.5,234 L620.8,232 L621,229.6 L621.2,229 L621.5,229.3 L621.8,229.6 L622,229.8 L622.2,230.4 L622.5,230.7 L622.8,230.8 L623,231.4 L623.2,231.4 L623.5,231.8 L623.8,232.2 L624,232.5 L624.2,232.9 L624.5,232.8 L624.8,233.1 L625,233.4 L625.2,233.8 L625.5,234.2 L625.8,234.6 L626,235 L626.2,235.4 L626.5,235.6 L626.8,235.8 L627,236.1 L627.2,236.3 L627.5,236.6 L627.8,237 L628,237.2 L628.2,237.8 L628.5,237.9 L628.8,238.6 L629,238.6 L629.2,237.7 L629.5,235.2 L629.8,232.9 L630,230.8 L630.2,229.1 L630.5,229.6 L630.8,229.5 L631,229.8 L631.2,230.1 L631.5,230.8 L631.8,230.7 L632,231.5 L632.2,231.4 L632.5,232.1 L632.8,232.1 L633,232.7 L633.2,232.8 L633.5,233.1 L633.8,233.3 L634,233.8 L634.2,234.1 L634.5,234.7 L634.8,234.8 L635,235.3 L635.2,235.5 L635.5,235.9 L635.8,236.2 L636,236.3 L636.2,236.9 L636.5,237.3 L636.8,237.5 L637,237.7 L637.2,238 L637.5,238.5 L637.8,239.1 L638,239.2 L638.2,239 L638.5,236.7 L638.8,234.4 L639,232.1 L639.2,229.3 L639.5,229.2 L639.8,229.4 L640,229.8 L640.2,230.2 L640.5,230.4 L640.8,230.7 L641,231.4 L641.2,231.5 L641.5,232.1 L641.8,232.1 L642,232.5 L642.2,232.8 L642.5,233.5 L642.8,233.5 L643,233.9 L643.2,234.4 L643.5,234.7 L643.8,235.2 L644,235.3 L644.2,235.5 L644.5,236.2 L644.8,236.4 L645,236.8 L645.2,237 L645.5,237.8 L645.8,238 L646,238.1 L646.2,238.5 L646.5,238.8 L646.8,239.6 L647,239.5 L647.2,240 L647.5,238.1 L647.8,235.6 L648,233.2 L648.2,230.4 L648.5,229.2 L648.8,229.6 L649,229.7 L649.2,230.4 L649.5,230.5 L649.8,230.9 L650,231.5 L650.2,231.5 L650.5,231.7 L650.8,232.2 L651,232.5 L651.2,232.9 L651.5,233.6 L651.8,233.9 L652,234 L652.2,234.5 L652.5,234.8 L652.8,235.1 L653,235.5 L653.2,235.8 L653.5,236.6 L653.8,236.7 L654,237.2 L654.2,237.7 L654.5,237.9 L654.8,238.3 L655,238.8 L655.2,239 L655.5,239.3 L655.8,239.9 L656,240 L656.2,240.6 L656.5,239.7 L656.8,237.1 L657,234.3 L657.2,231.7 L657.5,228.9 L657.8,229.5 L658,229.7 L658.2,229.9 L658.5,230.5 L658.8,230.8 L659,218.9 L659.2,219.7 L659.5,220.2 L659.8,221.3 L660,221.8 L660.2,223 L660.5,223.5 L660.8,224.3 L661,224.8 L661.2,225.3 L661.5,226.1 L661.8,226.7 L662,227.2 L662.2,228.1 L662.5,228.3 L662.8,228.8 L663,228.9 L663.2,229.2 L663.5,228.8 L663.8,229.2 L664,228.8 L664.2,228.9 L664.5,229 L664.8,228.9 L665,228.8 L665.2,229.1 L665.5,228.8 L665.8,227.9 L666,223.5 L666.2,219.2 L666.5,215.1 L666.8,214.1 L667,214.7 L667.2,215.8 L667.5,216.7 L667.8,217.8 L668,218.7 L668.2,219.3 L668.5,220.2 L668.8,220.7 L669,221.7 L669.2,222.7 L669.5,223.4 L669.8,224 L670,224.8 L670.2,225.5 L670.5,226 L670.8,226.4 L671,227.3 L671.2,227.6 L671.5,228.4 L671.8,228.5 L672,229.1 L672.2,229.1 L672.5,229.1 L672.8,228.9 L673,229 L673.2,229 L673.5,229.2 L673.8,229.1 L674,229.1 L674.2,229.2 L674.5,229 L674.8,229.1 L675,225.4 L675.2,221.1 L675.5,216.8 L675.8,213.6 L676,214.4 L676.2,215.7 L676.5,216.3 L676.8,217.4 L677,218 L677.2,218.9 L677.5,219.6 L677.8,220.6 L678,221.2 L678.2,222.1 L678.5,223 L678.8,223.9 L679,224.1 L679.2,225.2 L679.5,225.9 L679.8,226.5 L680,227.1 L680.2,227.6 L680.5,228 L680.8,228.2 L681,228.7 L681.2,229.1 L681.5,228.9 L681.8,229 L682,229.1 L682.2,229 L682.5,228.9 L682.8,228.9 L683,229.2 L683.2,229 L683.5,229.1 L683.8,229.1 L684,227 L684.2,222.8 L684.5,218.6 L684.8,214.4 L685,214.3 L685.2,215 L685.5,216 L685.8,217 L686,217.7 L686.2,218.6 L686.5,219.6 L686.8,220.3 L687,221.1 L687.2,221.7 L687.5,222.7 L687.8,223.5 L688,223.9 L688.2,224.6 L688.5,225.6 L688.8,226.1 L689,226.8 L689.2,227.1 L689.5,228 L689.8,228.3 L690,228.6 L690.2,229.1 L690.5,229 L690.8,228.9 L691,229.2 L691.2,228.8 L691.5,228.9 L691.8,229.2 L692,229.2 L692.2,228.8 L692.5,229.2 L692.8,228.8 L693,228.8 L693.2,224.7 L693.5,220.1 L693.8,216 L694,213.8 L694.2,214.8 L694.5,215.6 L694.8,216.4 L695,217.4 L695.2,218.3 L695.5,219.2 L695.8,219.8 L696,220.5 L696.2,221.7 L696.5,222.4 L696.8,223.2 L697,223.9 L697.2,224.3 L697.5,225 L697.8,226 L698,226.5 L698.2,227 L698.5,227.7 L698.8,228 L699,228.8 L699.2,229 L699.5,228.9 L699.8,229.1 L700,229 L700.2,228.9 L700.5,228.8 L700.8,228.8 L701,229 L701.2,229 L701.5,229.2 L701.8,228.9 L702,229 L702.2,226.5 L702.5,222.2 L702.8,217.8 L703,213.7 L703.2,214.5 L703.5,215.5 L703.8,216.3 L704,216.9 L704.2,218 L704.5,218.9 L704.8,219.7 L705,220.4 L705.2,221 L705.5,222 L705.8,222.9 L706,223.7 L706.2,224.3 L706.5,224.9 L706.8,225.4 L707,226.1 L707.2,227 L707.5,227.1 L707.8,227.9 L708,228.3 L708.2,228.7 L708.5,229.2 L708.8,228.8 L709,229.1 L709.2,229.1 L709.5,228.8 L709.8,228.8 L710,228.9 L710.2,228.8 L710.5,228.9 L710.8,229.2 L711,229.2 L711.2,228 L711.5,223.7 L711.8,219.5 L712,215.1 L712.2,214.1 L712.5,214.9 L712.8,215.9 L713,216.7 L713.2,217.6 L713.5,218.5 L713.8,219.3 L714,220.1 L714.2,220.8 L714.5,221.6 L714.8,222.5 L715,223 L715.2,224 L715.5,224.7 L715.8,225.2 L716,226.2 L716.2,226.7 L716.5,227.3 L716.8,227.7 L717,228.4 L717.2,228.5 L717.5,229 L717.8,229 L718,228.9 L718.2,229 L718.5,229.2 L718.8,228.8 L719,229.1 L719.2,228.8 L719.5,229 L719.8,229.1 L720,229 L720.2,229.2 L720.5,225.6 L720.8,220.9 L721,216.8 L721.2,213.8 L721.5,214.7 L721.8,215.5 L722,216.2 L722.2,217.1 L722.5,218 L722.8,219 L723,219.9 L723.2,220.5 L723.5,221.5 L723.8,222.2 L724,222.9 L724.2,223.8 L724.5,224.2 L724.8,225.2 L725,225.6 L725.2,226.5 L725.5,226.9 L725.8,227.4 L726,228.2 L726.2,228.4 L726.5,229 L726.8,229 L727,228.8 L727.2,228.9 L727.5,228.9 L727.8,228.8 L728,228.8 L728.2,229 L728.5,229 L728.8,229.1 L729,228.9 L729.2,228.8 L729.5,227.3 L729.8,223 L730,218.8 L730.2,214.3 L730.5,214.1 L730.8,215.4 L731,215.8 L731.2,216.9 L731.5,217.6 L731.8,218.5 L732,219.7 L732.2,220.5 L732.5,221.1 L732.8,221.6 L733,222.6 L733.2,223.6 L733.5,224.3 L733.8,224.6 L734,225.3 L734.2,226.1 L734.5,226.5 L734.8,227.2 L735,227.8 L735.2,228.2 L735.5,228.8 L735.8,229.2 L736,228.9 L736.2,229 L736.5,229.1 L736.8,228.8 L737,229 L737.2,229 L737.5,229.2 L737.8,229 L738,229.2 L738.2,229.1 L738.5,228.6 L738.8,224.7 L739,220.3 L739.2,216.1 L739.5,213.9 L739.8,214.8 L740,215.6 L740.2,216.5 L740.5,217.6 L740.8,218.1 L741,219.1 L741.2,219.9 L741.5,220.5 L741.8,221.3 L742,222.3 L742.2,223.3 L742.5,223.8 L742.8,224.4 L743,224.9 L743.2,225.7 L743.5,226.7 L743.8,226.9 L744,227.8 L744.2,228.2 L744.5,228.3 L744.8,229.1 L745,229 L745.2,228.8 L745.5,229.2 L745.8,229.1 L746,228.8 L746.2,229 L746.5,229 L746.8,228.9 L747,229.1 L747.2,229.2 L747.5,229.1 L747.8,226.1 L748,222.3 L748.2,217.8 L748.5,213.3 L748.8,214.6 L749,215.5 L749.2,216.4 L749.5,217.3 L749.8,218 L750,218.6 L750.2,219.8 L750.5,220.5 L750.8,221.5 L751,222.3 L751.2,222.8 L751.5,223.3 L751.8,224.4 L752,224.7 L752.2,225.5 L752.5,226.2 L752.8,226.6 L753,227.3 L753.2,228 L753.5,228.2 L753.8,228.9 L754,228.8 L754.2,228.8 L754.5,229.2 L754.8,228.9 L755,228.8 L755.2,229.1 L755.5,229 L755.8,229 L756,229.2 L756.2,228.9 L756.5,229 L756.8,228.1 L757,223.6 L757.2,219.5 L757.5,215.1 L757.8,214.3 L758,214.7 L758.2,215.7 L758.5,216.9 L758.8,217.4 L759,218.5 L759.2,219.2 L759.5,220.2 L759.8,221 L760,221.8 L760.2,222.7 L760.5,223 L760.8,223.7 L761,224.5 L761.2,225.1 L761.5,225.9 L761.8,226.8 L762,227 L762.2,227.6 L762.5,228 L762.8,228.7 L763,228.9 L763.2,229 L763.5,229.2 L763.8,228.9 L764,229.1 L764.2,228.9 L764.5,229.2 L764.8,229.2 L765,228.9 L765.2,229.2 L765.5,228.8 L765.8,228.8 L766,225.4 L766.2,221.1 L766.5,216.8 L766.8,213.6 L767,214.5 L767.2,215.4 L767.5,216.5 L767.8,217.1 L768,218.2 L768.2,219.1 L768.5,219.8 L768.8,220.4 L769,221.3 L769.2,222 L769.5,222.8 L769.8,223.8 L770,224.5 L770.2,225 L770.5,225.5 L770.8,226.4 L771,227.2 L771.2,227.5 L771.5,228 L771.8,228.5 L772,228.8 L772.2,229.2 L772.5,228.8 L772.8,229 L773,229.2 L773.2,228.8 L773.5,229.2 L773.8,229 L774,229 L774.2,229.2 L774.5,229.2 L774.8,228.8 L775,227 L775.2,222.6 L775.5,218.5 L775.8,214.4 L776,214.2 L776.2,215.2 L776.5,215.8 L776.8,216.7 L777,217.7 L777.2,218.5 L777.5,219.4 L777.8,220.3 L778,221.1 L778.2,221.6 L778.5,222.4 L778.8,223.1 L779,224.2 L779.2,225 L779.5,225.6 L779.8,226.1 L780,226.8 L780.2,227.3 L780.5,227.6 L780.8,228.1 L781,228.8 L781.2,229 L781.5,229.1 L781.8,228.9 L782,228.9 L782.2,228.9 L782.5,229 L782.8,229 L783,229 L783.2,229 L783.5,229.1 L783.8,228.8 L784,229 L784.2,224.4 L784.5,220.3 L784.8,215.9 L785,213.6 L785.2,214.6 L785.5,215.4 L785.8,216.6 L786,217.2 L786.2,218.4 L786.5,219.2 L786.8,220.1 L787,220.6 L787.2,221.4 L787.5,222.4 L787.8,223.2 L788,224 L788.2,224.7 L788.5,225.4 L788.8,225.6 L789,226.5 L789.2,227.1 L789.5,227.8 L789.8,228.1 L790,228.4 L790.2,228.7 L790.5,228.9 L790.8,228.8 L791,229 L791.2,228.8 L791.5,229.2 L791.8,228.8 L792,229.1 L792.2,228.9 L792.5,228.9 L792.8,228.8 L793,229 L793.2,226.4 L793.5,222 L793.8,217.8 L794,213.4 L794.2,214.3 L794.5,215.5 L794.8,216 L795,217.2 L795.2,218.1 L795.5,218.8 L795.8,219.5 L796,220.3 L796.2,221.3 L796.5,222.1 L796.8,222.6 L797,223.4 L797.2,224.4 L797.5,224.7 L797.8,225.8 L798,226.3 L798.2,226.7 L798.5,227.6 L798.8,227.8 L799,228.4 L799.2,228.8 L799.5,228.8 L799.8,228.9 L800,228.8 L800.2,229.1 L800.5,229.2 L800.8,228.8 L801,228.9 L801.2,229 L801.5,229 L801.8,229 L802,229.1 L802.2,228.2 L802.5,223.5 L802.8,219.3 L803,215.2 L803.2,214.1 L803.5,215.1 L803.8,215.9 L804,216.9 L804.2,217.8 L804.5,218.7 L804.8,219.2 L805,220.4 L805.2,221 L805.5,221.8 L805.8,222.6 L806,223 L806.2,224.2 L806.5,224.8 L806.8,225.4 L807,226.1 L807.2,226.5 L807.5,227.2 L807.8,227.6 L808,228.1 L808.2,228.6 L808.5,228.9 L808.8,229.2 L809,229 L809.2,228.8 L809.5,229.1 L809.8,229.1 L810,229.2 L810.2,229.1 L810.5,228.8 L810.8,228.8 L811,229.2 L811.2,229.1 L811.5,225.4 L811.8,221.4 L812,216.7 L812.2,213.8 L812.5,214.5 L812.8,215.3 L813,216.6 L813.2,217.4 L813.5,217.9 L813.8,219 L814,220 L814.2,220.8 L814.5,221.4 L814.8,222.3 L815,223.1 L815.2,223.7 L815.5,224.6 L815.8,224.9 L816,225.6 L816.2,226.3 L816.5,227.1 L816.8,227.3 L817,227.9 L817.2,228.5 L817.5,229.1 L817.8,229 L818,229.2 L818.2,228.8 L818.5,228.9 L818.8,228.8 L819,228.8 L819.2,229.2 L819.5,228.9 L819.8,229 L820,229 L820.2,228.8 L820.5,227.4 L820.8,222.9 L821,218.8 L821.2,214.2 L821.5,214.3 L821.8,215.3 L822,216.2 L822.2,216.9 L822.5,217.9 L822.8,218.8 L823,219.5 L823.2,220.4 L823.5,220.9 L823.8,221.9 L824,222.7 L824.2,223.2 L824.5,224.2 L824.8,224.6 L825,225.6 L825.2,226 L825.5,226.5 L825.8,227.2 L826,227.9 L826.2,228.2 L826.5,228.7 L826.8,229 L827,228.8 L827.2,229 L827.5,229 L827.8,229.1 L828,228.9 L828.2,228.8 L828.5,229.2 L828.8,229.1 L829,228.8 L829.2,228.8 L829.5,229 L829.8,224.5 L830,220.2 L830.2,216.1 L830.5,214.1 L830.8,214.9 L831,215.4 L831.2,216.5 L831.5,217.7 L831.8,218.4 L832,219.2 L832.2,220 L832.5,220.9 L832.8,221.3 L833,222.5 L833.2,222.9 L833.5,223.8 L833.8,224.4 L834,224.9 L834.2,225.7 L834.5,226.4 L834.8,227.2 L835,227.5 L835.2,228.1 L835.5,228.7 L835.8,229 L836,229.1 L836.2,229.1 L836.5,228.9 L836.8,229.2 L837,228.9 L837.2,228.9 L837.5,229.2 L837.8,229 L838,229.1 L838.2,229 L838.5,228.9 L838.8,226.2 L839,221.9 L839.2,217.7 L839.5,213.5 L839.8,214.2 L840,215.2 L840.2,216.3 L840.5,217.1 L840.8,217.8 L841,218.9 L841.2,219.5 L841.5,220.6 L841.8,221.5 L842,222 L842.2,222.7 L842.5,223.7 L842.8,224.3 L843,224.7 L843.2,225.6 L843.5,226.4 L843.8,226.9 L844,227.5 L844.2,227.8 L844.5,228.6 L844.8,228.9 L845,228.9 L845.2,229.1 L845.5,229 L845.8,228.9 L846,229.1 L846.2,229.2 L846.5,229.1 L846.8,229.2 L847,229.2 L847.2,229.1 L847.5,229.2 L847.8,227.9 L848,223.6 L848.2,219.4 L848.5,215.1 L848.8,214 L849,214.9 L849.2,215.6 L849.5,216.8 L849.8,217.6 L850,218.4 L850.2,219.2 L850.5,220.4 L850.8,221.1 L851,221.9 L851.2,222.6 L851.5,223 L851.8,223.8 L852,224.7 L852.2,225.5 L852.5,225.8 L852.8,226.6 L853,227.3 L853.2,227.9 L853.5,228 L853.8,228.8 L854,229 L854.2,229.2 L854.5,228.8 L854.8,229.1 L855,229.2 L855.2,229.2 L855.5,228.9 L855.8,229 L856,229.2 L856.2,229 L856.5,229 L856.8,228.9 L857,225.4 L857.2,221 L857.5,216.8 L857.8,213.9 L858,214.8 L858.2,215.3 L858.5,216.5 L858.8,217.5 L859,218 L859.2,218.9 L859.5,219.8 L859.8,220.5 L860,221.5 L860.2,222.3 L860.5,222.9 L860.8,223.8 L861,224.6 L861.2,224.9 L861.5,225.8 L861.8,226.1 L862,227 L862.2,227.3 L862.5,227.9 L862.8,228.6 L863,228.9 L863.2,228.9 L863.5,228.8 L863.8,229.2 L864,229 L864.2,228.9 L864.5,229.2 L864.8,229.1 L865,229.1 L865.2,229 L865.5,229.1 L865.8,228.8 L866,227 L866.2,223 L866.5,218.6 L866.8,214.2 L867,214 L867.2,215 L867.5,216.2 L867.8,216.7 L868,217.8 L868.2,218.6 L868.5,219.4 L868.8,220.2 L869,221.3 L869.2,222.1 L869.5,222.6 L869.8,223.5 L870,224.1 L870.2,224.9 L870.5,225.7 L870.8,226 L871,226.7 L871.2,227.2 L871.5,227.9 L871.8,228.2 L872,228.9 L872.2,229.2 L872.5,228.8 L872.8,229.1 L873,228.8 L873.2,228.8 L873.5,228.8 L873.8,229 L874,229.2 L874.2,228.8 L874.5,229.2 L874.8,229 L875,228.7 L875.2,224.7 L875.5,220.5 L875.8,216 L876,213.8 L876.2,215 L876.5,215.9 L876.8,216.4 L877,217.5 L877.2,218.5 L877.5,219.3 L877.8,219.8 L878,221 L878.2,221.6 L878.5,222.5 L878.8,223 L879,224 L879.2,224.6 L879.5,225 L879.8,225.8 L880,226.2 L880.2,227.2 L880.5,227.6 L880.8,228 L881,228.6 L881.2,229.1 L881.5,228.9 L881.8,229 L882,228.9 L882.2,229.2 L882.5,228.8 L882.8,229.2 L883,229.1 L883.2,229.2 L883.5,228.9 L883.8,228.9 L884,228.9 L884.2,226.4 L884.5,221.8 L884.8,217.6 L885,213.7 L885.2,214.6 L885.5,215.5 L885.8,216.3 L886,217 L886.2,217.8 L886.5,218.9 L886.8,219.5 L887,220.3 L887.2,221.4 L887.5,222.2 L887.8,222.6 L888,223.4 L888.2,224.5 L888.5,224.8 L888.8,225.7 L889,226.4 L889.2,226.6 L889.5,227.2 L889.8,227.9 L890,228.2 L890.2,229 L890.5,229 L890.8,229.2 L891,229.1 L891.2,228.9 L891.5,228.9 L891.8,229 L892,229 L892.2,229.2 L892.5,228.9 L892.8,228.9 L893,228.9 L893.2,228.1 L893.5,223.8 L893.8,219.5 L894,215 L894.2,214.1 L894.5,215 L894.8,216 L895,216.7 L895.2,217.5 L895.5,218.6 L895.8,219 L896,220.3 L896.2,221 L896.5,221.8 L896.8,222.4 L897,223.1 L897.2,223.8 L897.5,224.7 L897.8,225.1 L898,226.2 L898.2,226.8 L898.5,227.1 L898.8,227.9 L899,228.4 L899.2,228.8 L899.5,229.2 L899.8,228.8 L900,229.2" fill="none" stroke="#22aaaa" stroke-width="1.15" stroke-linejoin="round" opacity="1"/><path d="M2,276.3 L2.2,273.8 L2.5,275.3 L2.8,277.3 L3,279.2 L3.2,280.5 L3.5,281.2 L3.8,281.8 L4,282.6 L4.2,282.8 L4.5,282.7 L4.8,282.9 L5,282.9 L5.2,283.2 L5.5,283.1 L5.8,282.9 L6,282.9 L6.2,283.2 L6.5,283 L6.8,283 L7,283 L7.2,282.8 L7.5,282.8 L7.8,283 L8,282.9 L8.2,283.2 L8.5,283 L8.8,282.9 L9,283.1 L9.2,282.9 L9.5,282.8 L9.8,282.5 L10,282 L10.2,281.4 L10.5,280.3 L10.8,279.1 L11,277.2 L11.2,275.3 L11.5,274.5 L11.8,276.9 L12,278.9 L12.2,279.9 L12.5,280.9 L12.8,282 L13,282.1 L13.2,282.7 L13.5,282.7 L13.8,282.9 L14,282.8 L14.2,283.1 L14.5,282.8 L14.8,282.9 L15,283.2 L15.2,283.1 L15.5,283 L15.8,282.9 L16,282.8 L16.2,282.8 L16.5,283.2 L16.8,283.2 L17,282.9 L17.2,283.1 L17.5,283 L17.8,283.1 L18,282.9 L18.2,283 L18.5,282.5 L18.8,282.7 L19,282.1 L19.2,281.9 L19.5,280.7 L19.8,279.6 L20,278.4 L20.2,276.4 L20.5,273.8 L20.8,276.2 L21,278.3 L21.2,279.9 L21.5,280.9 L21.8,281.7 L22,282 L22.2,282.6 L22.5,282.5 L22.8,282.6 L23,282.7 L23.2,282.8 L23.5,283.2 L23.8,283.2 L24,283 L24.2,282.9 L24.5,282.9 L24.8,283.1 L25,283.1 L25.2,283 L25.5,283.1 L25.8,283 L26,283.2 L26.2,282.8 L26.5,283.1 L26.8,282.8 L27,283.2 L27.2,283.1 L27.5,283 L27.8,282.5 L28,282.5 L28.2,281.8 L28.5,281.3 L28.8,280.5 L29,279.1 L29.2,277.8 L29.5,275.2 L29.8,275.8 L30,277.7 L30.2,279.7 L30.5,280.7 L30.8,281.5 L31,282 L31.2,282.3 L31.5,282.4 L31.8,282.8 L32,282.9 L32.2,282.9 L32.5,283.1 L32.8,282.9 L33,282.9 L33.2,282.8 L33.5,283.1 L33.8,283.2 L34,282.8 L34.2,282.9 L34.5,282.8 L34.8,282.9 L35,283 L35.2,283.2 L35.5,282.8 L35.8,282.9 L36,283.2 L36.2,282.7 L36.5,283.1 L36.8,283 L37,282.7 L37.2,282 L37.5,281.7 L37.8,281.1 L38,279.9 L38.2,278.4 L38.5,276.8 L38.8,275.5 L39,277.6 L39.2,279 L39.5,280.1 L39.8,281.2 L40,282 L40.2,282.3 L40.5,282.9 L40.8,282.7 L41,283.1 L41.2,282.7 L41.5,282.8 L41.8,282.8 L42,283.1 L42.2,283.2 L42.5,282.9 L42.8,282.9 L43,282.8 L43.2,282.9 L43.5,282.9 L43.8,282.8 L44,283 L44.2,283 L44.5,282.8 L44.8,283.1 L45,282.9 L45.2,282.9 L45.5,283.1 L45.8,282.7 L46,282.8 L46.2,282.2 L46.5,282.2 L46.8,281.1 L47,280.7 L47.2,279.6 L47.5,277.7 L47.8,275.9 L48,277.1 L48.2,279 L48.5,280 L48.8,281.2 L49,281.7 L49.2,282 L49.5,282.6 L49.8,283 L50,282.8 L50.2,282.9 L50.5,283 L50.8,283.2 L51,283.1 L51.2,283.2 L51.5,283.1 L51.8,282.8 L52,283.1 L52.2,283.2 L52.5,283.1 L52.8,282.9 L53,283 L53.2,283.2 L53.5,283 L53.8,282.9 L54,283.2 L54.2,283.1 L54.5,282.9 L54.8,282.8 L55,282.5 L55.2,282.3 L55.5,282.4 L55.8,281.8 L56,281.1 L56.2,280.3 L56.5,278.6 L56.8,277.3 L57,276.8 L57.2,278.2 L57.5,279.8 L57.8,281 L58,281.6 L58.2,282 L58.5,282.7 L58.8,282.7 L59,282.8 L59.2,282.9 L59.5,282.9 L59.8,282.9 L60,283.1 L60.2,282.8 L60.5,282.8 L60.8,282.8 L61,282.9 L61.2,283 L61.5,282.8 L61.8,283.2 L62,282.8 L62.2,282.8 L62.5,283.1 L62.8,282.9 L63,282.9 L63.2,283 L63.5,282.7 L63.8,282.8 L64,282.8 L64.2,282.9 L64.5,282.3 L64.8,282.1 L65,281.5 L65.2,280.4 L65.5,279.6 L65.8,278.3 L66,276.5 L66.2,278.2 L66.5,279.6 L66.8,280.7 L67,281.6 L67.2,282.2 L67.5,282.6 L67.8,282.9 L68,282.8 L68.2,283.1 L68.5,283 L68.8,283.2 L69,283.1 L69.2,283.1 L69.5,283.1 L69.8,283 L70,283.1 L70.2,283.2 L70.5,282.8 L70.8,283.1 L71,283.1 L71.2,283.1 L71.5,283.2 L71.8,282.9 L72,282.8 L72.2,282.9 L72.5,283.2 L72.8,283.1 L73,283.1 L73.2,282.8 L73.5,282.7 L73.8,282.2 L74,281.8 L74.2,281.2 L74.5,280.1 L74.8,278.9 L75,277.3 L75.2,277.9 L75.5,279.2 L75.8,280.4 L76,281.5 L76.2,282 L76.5,282.1 L76.8,282.6 L77,282.8 L77.2,282.8 L77.5,282.8 L77.8,282.8 L78,283.1 L78.2,283.2 L78.5,283 L78.8,283.2 L79,282.9 L79.2,282.8 L79.5,283.2 L79.8,282.9 L80,282.9 L80.2,283 L80.5,283.2 L80.8,282.8 L81,282.8 L81.2,283 L81.5,283.1 L81.8,282.7 L82,282.9 L82.2,283 L82.5,282.6 L82.8,282.2 L83,282 L83.2,281.7 L83.5,280.7 L83.8,279.8 L84,278.4 L84.2,277.8 L84.5,279.1 L84.8,280.4 L85,281 L85.2,281.8 L85.5,282 L85.8,282.6 L86,282.7 L86.2,282.7 L86.5,282.8 L86.8,283 L87,283.1 L87.2,283.2 L87.5,283.1 L87.8,283.2 L88,282.9 L88.2,282.8 L88.5,283 L88.8,282.9 L89,283.1 L89.2,283 L89.5,283.2 L89.8,283.2 L90,283.1 L90.2,282.9 L90.5,282.9 L90.8,282.8 L91,282.8 L91.2,282.9 L91.5,282.8 L91.8,282.5 L92,282.3 L92.2,281.8 L92.5,281.2 L92.8,280.7 L93,279.3 L93.2,277.8 L93.5,279 L93.8,280.1 L94,280.8 L94.2,281.7 L94.5,282.3 L94.8,282.4 L95,282.6 L95.2,282.9 L95.5,283 L95.8,283.2 L96,282.9 L96.2,283 L96.5,282.8 L96.8,283.2 L97,282.9 L97.2,283.1 L97.5,283 L97.8,282.8 L98,283.2 L98.2,282.9 L98.5,282.8 L98.8,283.2 L99,282.9 L99.2,282.8 L99.5,282.8 L99.8,283.1 L100,283.1 L100.2,282.9 L100.5,282.8 L100.8,282.6 L101,282.7 L101.2,281.9 L101.5,281.4 L101.8,281.2 L102,280.3 L102.2,279.1 L102.5,279 L102.8,280.2 L103,280.8 L103.2,281.4 L103.5,282.1 L103.8,282.2 L104,282.6 L104.2,282.6 L104.5,283 L104.8,282.7 L105,283.1 L105.2,283.2 L105.5,282.8 L105.8,283 L106,282.8 L106.2,282.9 L106.5,282.8 L106.8,283 L107,282.8 L107.2,283 L107.5,283.1 L107.8,283 L108,283.2 L108.2,283.2 L108.5,283.2 L108.8,282.9 L109,283.1 L109.2,283.1 L109.5,283.1 L109.8,283 L110,282.5 L110.2,282.6 L110.5,282 L110.8,281.6 L111,280.5 L111.2,279.9 L111.5,278.8 L111.8,280.1 L112,280.9 L112.2,281.4 L112.5,282 L112.8,282.4 L113,282.4 L113.2,282.7 L113.5,283.1 L113.8,282.8 L114,283.1 L114.2,282.8 L114.5,282.9 L114.8,282.8 L115,283 L115.2,282.8 L115.5,282.8 L115.8,283.2 L116,282.9 L116.2,282.9 L116.5,282.8 L116.8,282.8 L117,282.9 L117.2,283 L117.5,282.8 L117.8,283.1 L118,282.8 L118.2,283.1 L118.5,282.8 L118.8,282.9 L119,282.8 L119.2,282.4 L119.5,282.4 L119.8,281.9 L120,281.2 L120.2,280.5 L120.5,279.6 L120.8,280.1 L121,280.9 L121.2,281.2 L121.5,282.1 L121.8,282.3 L122,282.7 L122.2,282.6 L122.5,282.8 L122.8,283.2 L123,283.1 L123.2,283 L123.5,283 L123.8,282.9 L124,282.9 L124.2,283 L124.5,283 L124.8,283 L125,283.1 L125.2,283.2 L125.5,283.1 L125.8,283.2 L126,282.8 L126.2,283 L126.5,282.9 L126.8,282.8 L127,282.9 L127.2,283.2 L127.5,283.2 L127.8,282.9 L128,282.6 L128.2,282.7 L128.5,282.3 L128.8,282.1 L129,281.5 L129.2,281.2 L129.5,280.3 L129.8,279.7 L130,280.6 L130.2,281.3 L130.5,282 L130.8,282.5 L131,282.4 L131.2,282.5 L131.5,282.9 L131.8,282.8 L132,282.8 L132.2,283.1 L132.5,283.1 L132.8,282.9 L133,283.2 L133.2,283 L133.5,283.1 L133.8,283 L134,283.1 L134.2,283.2 L134.5,282.8 L134.8,283 L135,283.1 L135.2,283.2 L135.5,283.2 L135.8,282.8 L136,282.8 L136.2,283.1 L136.5,282.9 L136.8,283.1 L137,282.9 L137.2,282.8 L137.5,282.5 L137.8,282.1 L138,282 L138.2,281.6 L138.5,280.8 L138.8,280.1 L139,280.8 L139.2,281.4 L139.5,282 L139.8,282.1 L140,282.7 L140.2,282.7 L140.5,283.1 L140.8,282.7 L141,282.7 L141.2,283.1 L141.5,283.2 L141.8,282.9 L142,283 L142.2,283.1 L142.5,283.1 L142.8,283.1 L143,283.2 L143.2,283.2 L143.5,282.8 L143.8,282.8 L144,283 L144.2,282.9 L144.5,282.8 L144.8,283 L145,282.9 L145.2,283.2 L145.5,283.2 L145.8,283.2 L146,282.9 L146.2,283 L146.5,282.7 L146.8,282.3 L147,282.4 L147.2,282.1 L147.5,281.4 L147.8,281 L148,281 L148.2,281.3 L148.5,281.9 L148.8,282.4 L149,282.7 L149.2,282.5 L149.5,282.8 L149.8,282.8 L150,283.1 L150.2,283.1 L150.5,282.9 L150.8,283 L151,282.9 L151.2,282.9 L151.5,283.1 L151.8,282.8 L152,282.9 L152.2,283.1 L152.5,283 L152.8,283 L153,282.9 L153.2,282.9 L153.5,283 L153.8,283.2 L154,283.2 L154.2,283.1 L154.5,283 L154.8,283.1 L155,283 L155.2,283.1 L155.5,283 L155.8,282.9 L156,282.7 L156.2,282.3 L156.5,281.9 L156.8,281.5 L157,281.2 L157.2,281.8 L157.5,281.8 L157.8,282.5 L158,282.4 L158.2,282.7 L158.5,282.6 L158.8,282.7 L159,282.9 L159.2,283.1 L159.5,282.8 L159.8,282.8 L160,283.1 L160.2,283.1 L160.5,283.2 L160.8,283.2 L161,282.9 L161.2,282.9 L161.5,282.9 L161.8,283.1 L162,283.2 L162.2,282.9 L162.5,283.2 L162.8,283.2 L163,282.9 L163.2,283.1 L163.5,282.9 L163.8,283.2 L164,283 L164.2,283 L164.5,282.9 L164.8,282.7 L165,282.8 L165.2,282.7 L165.5,282.2 L165.8,282.1 L166,281.8 L166.2,281.8 L166.5,282.1 L166.8,282.3 L167,282.5 L167.2,283 L167.5,282.7 L167.8,282.7 L168,283 L168.2,283.1 L168.5,282.8 L168.8,282.9 L169,283.2 L169.2,283.2 L169.5,283.1 L169.8,283 L170,283 L170.2,283.2 L170.5,283.2 L170.8,283 L171,283.1 L171.2,283.2 L171.5,283.2 L171.8,283 L172,282.8 L172.2,283.2 L172.5,283 L172.8,283.1 L173,283 L173.2,282.8 L173.5,282.7 L173.8,282.9 L174,283 L174.2,282.8 L174.5,282.8 L174.8,282.3 L175,282.2 L175.2,282.2 L175.5,282.2 L175.8,282.5 L176,282.9 L176.2,282.7 L176.5,282.7 L176.8,282.9 L177,282.9 L177.2,283.1 L177.5,282.9 L177.8,283.1 L178,282.8 L178.2,283.1 L178.5,283.2 L178.8,282.9 L179,283 L179.2,283.2 L179.5,282.8 L179.8,282.8 L180,282.9 L180.2,283 L180.5,283 L180.8,282.8 L181,282.9 L181.2,282.8 L181.5,282.9 L181.8,282.9 L182,282.9 L182.2,283 L182.5,282.7 L182.8,283.1 L183,283 L183.2,282.7 L183.5,282.8 L183.8,282.9 L184,282.8 L184.2,282.7 L184.5,282.4 L184.8,282.9 L185,282.8 L185.2,283 L185.5,283 L185.8,283.1 L186,283 L186.2,282.8 L186.5,283.2 L186.8,282.8 L187,282.9 L187.2,283.2 L187.5,282.9 L187.8,283 L188,283.2 L188.2,283.2 L188.5,283.1 L188.8,283.1 L189,282.9 L189.2,283.1 L189.5,283.2 L189.8,282.8 L190,282.9 L190.2,283 L190.5,282.8 L190.8,283.2 L191,283.2 L191.2,282.8 L191.5,283 L191.8,283 L192,282.7 L192.2,283.1 L192.5,282.9 L192.8,282.8 L193,282.8 L193.2,282.8 L193.5,283 L193.8,283.2 L194,283 L194.2,282.8 L194.5,283.2 L194.8,283.1 L195,283.1 L195.2,283.2 L195.5,282.9 L195.8,283.2 L196,283.2 L196.2,282.7 L196.5,282.8 L196.8,282.8 L197,282.7 L197.2,282.7 L197.5,282.8 L197.8,282.7 L198,283 L198.2,282.9 L198.5,283.1 L198.8,283.3 L199,283.3 L199.2,283 L199.5,282.9 L199.8,283.2 L200,282.9 L200.2,283 L200.5,282.8 L200.8,283 L201,282.9 L201.2,282.9 L201.5,283 L201.8,282.8 L202,282.8 L202.2,282.8 L202.5,282.7 L202.8,282.8 L203,282.9 L203.2,283 L203.5,282.9 L203.8,283.3 L204,283.3 L204.2,283.4 L204.5,283.3 L204.8,282.9 L205,283.2 L205.2,283.2 L205.5,283.2 L205.8,283.1 L206,283.1 L206.2,282.9 L206.5,282.8 L206.8,282.8 L207,282.9 L207.2,283 L207.5,283 L207.8,282.8 L208,283 L208.2,283.2 L208.5,283.2 L208.8,283.1 L209,283.2 L209.2,283 L209.5,285 L209.8,285.3 L210,303 L210,285.3 L210.2,285.6 L210.5,285.9 L210.8,286.8 L211,288.3 L211.2,290.6 L211.5,292.5 L211.8,291.5 L212,288.7 L212.2,285.8 L212.5,283.3 L212.8,282.6 L213,282.5 L213.2,282.7 L213.5,282.4 L213.8,282.3 L214,282.2 L214.2,282.5 L214.5,282.6 L214.8,282.5 L215,282.4 L215.2,282.9 L215.5,283 L215.8,282.9 L216,282.9 L216.2,283.1 L216.5,283.2 L216.8,283.2 L217,283.8 L217.2,283.9 L217.5,283.9 L217.8,284.1 L218,284.2 L218.2,284.6 L218.5,284.7 L218.8,285.2 L219,285.1 L219.2,285.6 L219.5,285.9 L219.8,286.2 L220,287.7 L220.2,289.5 L220.5,291.7 L220.8,292.5 L221,289.7 L221.2,287 L221.5,284.1 L221.8,283.2 L222,282.6 L222.2,282.6 L222.5,282.3 L222.8,282.2 L223,282.5 L223.2,282.4 L223.5,282.4 L223.8,282.6 L224,282.3 L224.2,282.6 L224.5,283.1 L224.8,283.1 L225,283 L225.2,283.2 L225.5,283.4 L225.8,283.3 L226,283.3 L226.2,283.8 L226.5,283.9 L226.8,284.2 L227,284.3 L227.2,284.4 L227.5,284.5 L227.8,285 L228,285.2 L228.2,285.4 L228.5,285.9 L228.8,286 L229,287.2 L229.2,288.7 L229.5,290.5 L229.8,292.6 L230,290.6 L230.2,288.3 L230.5,285.4 L230.8,283.2 L231,282.7 L231.2,282.9 L231.5,282.8 L231.8,282.7 L232,282.6 L232.2,282.2 L232.5,282.6 L232.8,282.3 L233,282.5 L233.2,282.5 L233.5,282.6 L233.8,283.1 L234,283.1 L234.2,283.3 L234.5,283.1 L234.8,283.2 L235,283.6 L235.2,283.8 L235.5,283.9 L235.8,284.2 L236,284.4 L236.2,284.5 L236.5,284.8 L236.8,285 L237,284.9 L237.2,285.2 L237.5,285.6 L237.8,285.8 L238,286.5 L238.2,288.3 L238.5,290 L238.8,291.7 L239,291.7 L239.2,288.9 L239.5,286.3 L239.8,283.5 L240,283.1 L240.2,282.7 L240.5,282.6 L240.8,282.6 L241,282.7 L241.2,282.5 L241.5,282.3 L241.8,282.4 L242,282.4 L242.2,282.5 L242.5,282.8 L242.8,282.9 L243,282.9 L243.2,283.1 L243.5,282.9 L243.8,283.3 L244,283.5 L244.2,283.8 L244.5,283.7 L244.8,283.8 L245,284.2 L245.2,284.6 L245.5,284.4 L245.8,284.7 L246,284.8 L246.2,285.2 L246.5,285.7 L246.8,285.8 L247,285.9 L247.2,287.3 L247.5,289.1 L247.8,291.2 L248,292.8 L248.2,290.1 L248.5,287.5 L248.8,284.9 L249,283.1 L249.2,282.8 L249.5,282.8 L249.8,282.4 L250,282.3 L250.2,282.4 L250.5,282.5 L250.8,282.5 L251,282.6 L251.2,282.4 L251.5,282.5 L251.8,282.6 L252,282.8 L252.2,283.1 L252.5,283.3 L252.8,283.4 L253,283.5 L253.2,283.5 L253.5,283.5 L253.8,284 L254,284.1 L254.2,284.5 L254.5,284.5 L254.8,284.5 L255,284.8 L255.2,285.4 L255.5,285.3 L255.8,285.7 L256,286 L256.2,286.6 L256.5,288.7 L256.8,290.6 L257,292.1 L257.2,291.6 L257.5,288.6 L257.8,285.7 L258,283.3 L258.2,282.8 L258.5,282.7 L258.8,282.5 L259,282.5 L259.2,282.3 L259.5,282.6 L259.8,282.2 L260,282.4 L260.2,282.5 L260.5,282.8 L260.8,282.7 L261,283 L261.2,282.9 L261.5,283.2 L261.8,283.2 L262,283.5 L262.2,283.6 L262.5,283.5 L262.8,283.8 L263,284 L263.2,284.3 L263.5,284.2 L263.8,284.6 L264,285 L264.2,284.9 L264.5,285.6 L264.8,285.6 L265,285.9 L265.2,285.9 L265.5,287.7 L265.8,289.6 L266,291.4 L266.2,292.7 L266.5,289.7 L266.8,286.9 L267,284.4 L267.2,283.1 L267.5,282.7 L267.8,282.4 L268,282.4 L268.2,282.3 L268.5,282.4 L268.8,282.7 L269,282.2 L269.2,282.4 L269.5,282.4 L269.8,282.6 L270,283 L270.2,283 L270.5,283.2 L270.8,283 L271,283.3 L271.2,283.2 L271.5,283.5 L271.8,283.5 L272,284 L272.2,284 L272.5,284.3 L272.8,284.6 L273,284.7 L273.2,284.8 L273.5,285.2 L273.8,285.7 L274,285.8 L274.2,286.1 L274.5,287.2 L274.8,289 L275,290.6 L275.2,292.7 L275.5,291 L275.8,287.9 L276,285.2 L276.2,282.8 L276.5,283.1 L276.8,282.6 L277,282.7 L277.2,282.3 L277.5,282.2 L277.8,282.5 L278,282.3 L278.2,282.4 L278.5,282.6 L278.8,282.5 L279,282.8 L279.2,282.7 L279.5,282.8 L279.8,282.9 L280,283.3 L280.2,283.4 L280.5,283.4 L280.8,283.5 L281,284 L281.2,283.9 L281.5,284.3 L281.8,284.6 L282,284.8 L282.2,285.1 L282.5,285.1 L282.8,285.4 L283,285.8 L283.2,285.7 L283.5,286.3 L283.8,288.2 L284,290.2 L284.2,291.9 L284.5,292.1 L284.8,289.3 L285,286.7 L285.2,283.9 L285.5,282.9 L285.8,283 L286,282.7 L286.2,282.3 L286.5,282.5 L286.8,282.5 L287,282.3 L287.2,282.6 L287.5,282.6 L287.8,282.8 L288,282.7 L288.2,282.9 L288.5,283 L288.8,283.2 L289,283.2 L289.2,283 L289.5,283.5 L289.8,283.4 L290,283.6 L290.2,283.7 L290.5,284.2 L290.8,284.1 L291,284.8 L291.2,284.7 L291.5,284.9 L291.8,285.3 L292,285.8 L292.2,285.9 L292.5,286 L292.8,287.3 L293,289.3 L293.2,291 L293.5,292.9 L293.8,290.3 L294,287.3 L294.2,284.8 L294.5,283.1 L294.8,283 L295,282.6 L295.2,282.6 L295.5,282.4 L295.8,282.5 L296,282.3 L296.2,282.4 L296.5,282.6 L296.8,282.4 L297,282.9 L297.2,282.8 L297.5,282.8 L297.8,282.9 L298,282.9 L298.2,283.3 L298.5,283.3 L298.8,283.3 L299,283.6 L299.2,284 L299.5,284 L299.8,284 L300,284.4 L300.2,284.7 L300.5,285 L300.8,285 L301,285.3 L301.2,285.7 L301.5,286.1 L301.8,286.9 L302,288.5 L302.2,290.2 L302.5,292.2 L302.8,291.1 L303,288.6 L303.2,285.9 L303.5,283 L303.8,282.8 L304,282.8 L304.2,282.4 L304.5,282.4 L304.8,282.4 L305,282.5 L305.2,282.5 L305.5,282.2 L305.8,282.5 L306,282.7 L306.2,282.7 L306.5,282.8 L306.8,283 L307,283.3 L307.2,283.2 L307.5,283.5 L307.8,283.3 L308,283.5 L308.2,283.9 L308.5,283.9 L308.8,284.4 L309,284.3 L309.2,284.7 L309.5,285 L309.8,284.9 L310,285.2 L310.2,285.5 L310.5,285.9 L310.8,286.4 L311,287.8 L311.2,289.7 L311.5,291.4 L311.8,292.4 L312,289.5 L312.2,287.1 L312.5,284 L312.8,283 L313,282.6 L313.2,282.7 L313.5,282.7 L313.8,282.5 L314,282.6 L314.2,282.2 L314.5,282.6 L314.8,282.7 L315,282.8 L315.2,282.6 L315.5,282.8 L315.8,283.2 L316,283.1 L316.2,283.2 L316.5,283 L316.8,283.2 L317,283.4 L317.2,283.6 L317.5,283.9 L317.8,283.9 L318,284.4 L318.2,284.7 L318.5,284.7 L318.8,284.8 L319,285.3 L319.2,285.7 L319.5,285.7 L319.8,286.3 L320,287.2 L320.2,288.9 L320.5,290.7 L320.8,292.6 L321,290.9 L321.2,287.9 L321.5,285.5 L321.8,283.1 L322,282.9 L322.2,282.9 L322.5,282.4 L322.8,282.5 L323,282.4 L323.2,282.5 L323.5,282.7 L323.8,282.2 L324,282.3 L324.2,282.5 L324.5,282.8 L324.8,283.1 L325,283.2 L325.2,283.1 L325.5,283.1 L325.8,283.4 L326,283.4 L326.2,283.4 L326.5,283.6 L326.8,284 L327,284.2 L327.2,284.5 L327.5,284.7 L327.8,284.6 L328,285 L328.2,285.2 L328.5,285.6 L328.8,286.1 L329,286.4 L329.2,288.2 L329.5,289.8 L329.8,291.8 L330,292 L330.2,289 L330.5,286.4 L330.8,283.6 L331,282.8 L331.2,282.7 L331.5,282.6 L331.8,282.7 L332,282.6 L332.2,282.4 L332.5,282.6 L332.8,282.5 L333,282.6 L333.2,282.7 L333.5,282.9 L333.8,282.9 L334,282.9 L334.2,283.2 L334.5,283.1 L334.8,283.2 L335,283.6 L335.2,283.6 L335.5,283.5 L335.8,283.9 L336,284.1 L336.2,284.2 L336.5,284.8 L336.8,284.5 L337,285 L337.2,285.4 L337.5,285.5 L337.8,285.8 L338,286.3 L338.2,287.5 L338.5,289.4 L338.8,291.3 L339,292.8 L339.2,290.3 L339.5,287.3 L339.8,284.6 L340,283.1 L340.2,283 L340.5,282.9 L340.8,282.4 L341,282.5 L341.2,282.2 L341.5,282.2 L341.8,282.5 L342,282.2 L342.2,282.3 L342.5,282.8 L342.8,282.7 L343,282.9 L343.2,282.9 L343.5,283 L343.8,283.2 L344,283.5 L344.2,283.6 L344.5,283.4 L344.8,283.7 L345,283.9 L345.2,284.3 L345.5,284.7 L345.8,284.9 L346,284.7 L346.2,285 L346.5,285.6 L346.8,285.8 L347,286.2 L347.2,286.6 L347.5,288.3 L347.8,290.5 L348,292 L348.2,291.2 L348.5,288.5 L348.8,285.7 L349,283 L349.2,283 L349.5,282.6 L349.8,282.7 L350,282.5 L350.2,282.4 L350.5,282.4 L350.8,282.4 L351,282.7 L351.2,282.4 L351.5,282.5 L351.8,282.9 L352,283.1 L352.2,283.2 L352.5,282.9 L352.8,283.2 L353,283.1 L353.2,283.3 L353.5,283.4 L353.8,283.6 L354,283.7 L354.2,284 L354.5,284.6 L354.8,284.7 L355,284.9 L355.2,284.9 L355.5,285.2 L355.8,285.8 L356,286.1 L356.2,286.1 L356.5,287.6 L356.8,289.6 L357,291.6 L357.2,292.6 L357.5,289.9 L357.8,287.2 L358,284 L358.2,283.1 L358.5,282.8 L358.8,282.7 L359,282.6 L359.2,282.5 L359.5,282.4 L359.8,282.6 L360,282.4 L360.2,282.4 L360.5,282.5 L360.8,282.6 L361,282.7 L361.2,283.2 L361.5,283 L361.8,283 L362,283.2 L362.2,283.4 L362.5,283.4 L362.8,283.6 L363,283.9 L363.2,284.1 L363.5,284.4 L363.8,284.6 L364,284.7 L364.2,284.8 L364.5,285.3 L364.8,285.3 L365,285.9 L365.2,286.2 L365.5,287.1 L365.8,288.7 L366,290.9 L366.2,292.6 L366.5,290.6 L366.8,288.3 L367,285.3 L367.2,282.8 L367.5,282.8 L367.8,282.8 L368,282.8 L368.2,282.3 L368.5,282.6 L368.8,282.2 L369,282.2 L369.2,282.3 L369.5,282.6 L369.8,282.8 L370,282.9 L370.2,282.8 L370.5,283.1 L370.8,283.1 L371,283.1 L371.2,283.3 L371.5,283.7 L371.8,283.5 L372,283.7 L372.2,283.8 L372.5,284.2 L372.8,284.2 L373,284.6 L373.2,285 L373.5,285.1 L373.8,285.1 L374,285.6 L374.2,286 L374.5,286.4 L374.8,288.3 L375,290 L375.2,292.1 L375.5,291.7 L375.8,289.2 L376,286.3 L376.2,283.5 L376.5,282.9 L376.8,282.8 L377,282.5 L377.2,282.7 L377.5,282.5 L377.8,282.3 L378,282.3 L378.2,282.5 L378.5,282.6 L378.8,282.4 L379,282.6 L379.2,282.8 L379.5,283.2 L379.8,283.1 L380,283.1 L380.2,283.3 L380.5,283.3 L380.8,283.4 L381,283.6 L381.2,283.7 L381.5,284.3 L381.8,284.2 L382,284.6 L382.2,284.8 L382.5,284.8 L382.8,285.1 L383,285.3 L383.2,285.8 L383.5,285.9 L383.8,287.5 L384,289.5 L384.2,290.9 L384.5,293.2 L384.8,290.4 L385,287.3 L385.2,284.8 L385.5,282.9 L385.8,282.7 L386,282.6 L386.2,282.8 L386.5,282.4 L386.8,282.4 L387,282.2 L387.2,282.6 L387.5,282.4 L387.8,282.4 L388,282.5 L388.2,283 L388.5,282.8 L388.8,283 L389,283.2 L389.2,283.3 L389.5,283.7 L389.8,284.1 L390,284 L390.2,284.7 L390.5,284.9 L390.8,285.5 L391,285.6 L391.2,286 L391.5,286.8 L391.8,287 L392,287.8 L392.2,288 L392.5,288.8 L392.8,290.1 L393,293.3 L393.2,297.2 L393.5,300.6 L393.8,299 L394,293.5 L394.2,288.5 L394.5,283.2 L394.8,282.6 L395,282.4 L395.2,282.5 L395.5,281.9 L395.8,282.2 L396,281.8 L396.2,281.8 L396.5,282 L396.8,282.2 L397,282.2 L397.2,282.4 L397.5,282.9 L397.8,282.8 L398,283 L398.2,283.5 L398.5,283.4 L398.8,283.8 L399,284.3 L399.2,284.3 L399.5,284.6 L399.8,285.2 L400,285.6 L400.2,286.1 L400.5,286.7 L400.8,287 L401,287.5 L401.2,288 L401.5,288.2 L401.8,289.2 L402,291.9 L402.2,295.5 L402.5,299 L402.8,301.1 L403,296 L403.2,290.5 L403.5,285.1 L403.8,282.6 L404,282.4 L404.2,282.2 L404.5,282 L404.8,282.2 L405,281.9 L405.2,281.7 L405.5,282.2 L405.8,281.9 L406,282 L406.2,282.2 L406.5,282.6 L406.8,283 L407,283.2 L407.2,283.3 L407.5,283.7 L407.8,283.8 L408,284.2 L408.2,284.3 L408.5,284.6 L408.8,284.9 L409,285.5 L409.2,285.6 L409.5,286.2 L409.8,286.7 L410,287.1 L410.2,287.8 L410.5,288.2 L410.8,288.6 L411,290.6 L411.2,294 L411.5,297.8 L411.8,301.1 L412,297.7 L412.2,292.6 L412.5,287.2 L412.8,282.8 L413,282.6 L413.2,282.3 L413.5,282.2 L413.8,282 L414,282 L414.2,281.7 L414.5,281.9 L414.8,281.8 L415,282.3 L415.2,282.2 L415.5,282.4 L415.8,283.1 L416,283 L416.2,282.9 L416.5,283.2 L416.8,283.4 L417,283.9 L417.2,284 L417.5,284.5 L417.8,285.1 L418,285.4 L418.2,285.6 L418.5,286.1 L418.8,286.6 L419,287.2 L419.2,287.6 L419.5,288.3 L419.8,288.8 L420,289.3 L420.2,292.7 L420.5,296.5 L420.8,300 L421,299.9 L421.2,294.8 L421.5,289.7 L421.8,284.3 L422,282.7 L422.2,282.3 L422.5,282.4 L422.8,282 L423,281.8 L423.2,281.7 L423.5,282 L423.8,282.1 L424,281.9 L424.2,282.1 L424.5,282.4 L424.8,282.8 L425,282.8 L425.2,282.9 L425.5,283.4 L425.8,283.7 L426,283.5 L426.2,284 L426.5,284.4 L426.8,284.6 L427,285.2 L427.2,285.3 L427.5,286 L427.8,286.2 L428,286.9 L428.2,287.4 L428.5,288.1 L428.8,288.5 L429,288.8 L429.2,291.2 L429.5,295 L429.8,298.6 L430,302 L430.2,296.7 L430.5,291.6 L430.8,286.2 L431,283.1 L431.2,282.8 L431.5,282.2 L431.8,281.9 L432,281.8 L432.2,281.9 L432.5,281.9 L432.8,282 L433,282.1 L433.2,282.1 L433.5,282.3 L433.8,282.8 L434,283 L434.2,282.8 L434.5,283.4 L434.8,283.3 L435,283.5 L435.2,283.8 L435.5,284.3 L435.8,284.6 L436,285.1 L436.2,285.2 L436.5,285.7 L436.8,286.3 L437,286.5 L437.2,287.2 L437.5,287.9 L437.8,288 L438,288.8 L438.2,290.1 L438.5,293.5 L438.8,297.1 L439,300.5 L439.2,299 L439.5,293.6 L439.8,288.2 L440,283.4 L440.2,282.8 L440.5,282.7 L440.8,282.1 L441,282.1 L441.2,282.2 L441.5,281.8 L441.8,281.9 L442,282.1 L442.2,282.3 L442.5,282.5 L442.8,282.3 L443,282.7 L443.2,283.1 L443.5,283.2 L443.8,283.4 L444,283.7 L444.2,283.9 L444.5,284.2 L444.8,284.4 L445,284.7 L445.2,285.2 L445.5,285.5 L445.8,286.1 L446,286.3 L446.2,286.9 L446.5,287.3 L446.8,288 L447,288.6 L447.2,288.8 L447.5,292.1 L447.8,295.8 L448,299.4 L448.2,300.9 L448.5,295.8 L448.8,290.4 L449,285.1 L449.2,282.7 L449.5,282.8 L449.8,282.5 L450,282 L450.2,282 L450.5,281.8 L450.8,281.7 L451,282 L451.2,282 L451.5,282.4 L451.8,282.2 L452,282.4 L452.2,283 L452.5,283.1 L452.8,283.1 L453,283.6 L453.2,283.9 L453.5,284.2 L453.8,284.1 L454,284.4 L454.2,284.8 L454.5,285.3 L454.8,285.9 L455,286.5 L455.2,286.9 L455.5,287.4 L455.8,287.5 L456,288 L456.2,288.8 L456.5,290.8 L456.8,294.4 L457,297.9 L457.2,301.4 L457.5,297.8 L457.8,292.8 L458,287.4 L458.2,283 L458.5,282.7 L458.8,282.4 L459,282 L459.2,282.3 L459.5,282 L459.8,281.7 L460,281.9 L460.2,281.7 L460.5,282.1 L460.8,282.6 L461,282.4 L461.2,282.8 L461.5,282.9 L461.8,283.3 L462,283.1 L462.2,283.6 L462.5,283.9 L462.8,284.1 L463,284.6 L463.2,285 L463.5,285 L463.8,285.7 L464,286.2 L464.2,286.7 L464.5,287.2 L464.8,287.7 L465,287.9 L465.2,288.7 L465.5,289.2 L465.8,292.7 L466,296.4 L466.2,299.7 L466.5,300.1 L466.8,294.8 L467,289.6 L467.2,284 L467.5,283 L467.8,282.6 L468,282 L468.2,282.1 L468.5,281.9 L468.8,281.7 L469,281.7 L469.2,282.2 L469.5,282.1 L469.8,282 L470,282.2 L470.2,282.8 L470.5,283.2 L470.8,283.1 L471,283.4 L471.2,283.4 L471.5,283.6 L471.8,284.3 L472,284.3 L472.2,284.9 L472.5,285.2 L472.8,285.7 L473,285.9 L473.2,286.3 L473.5,286.6 L473.8,287.2 L474,287.9 L474.2,288.3 L474.5,288.9 L474.8,291.3 L475,294.8 L475.2,298.7 L475.5,302.2 L475.8,296.6 L476,291.8 L476.2,286.4 L476.5,282.9 L476.8,282.6 L477,282.3 L477.2,282.1 L477.5,282 L477.8,281.9 L478,282 L478.2,282 L478.5,282.2 L478.8,282.1 L479,282.2 L479.2,282.7 L479.5,283 L479.8,282.9 L480,283.2 L480.2,283.6 L480.5,283.5 L480.8,283.7 L481,284.3 L481.2,284.6 L481.5,285.2 L481.8,285.4 L482,285.6 L482.2,286.4 L482.5,286.9 L482.8,287.4 L483,287.7 L483.2,288.3 L483.5,288.5 L483.8,289.8 L484,293.5 L484.2,296.9 L484.5,300.7 L484.8,298.8 L485,293.6 L485.2,288.6 L485.5,283.2 L485.8,282.7 L486,282.5 L486.2,282.2 L486.5,282.2 L486.8,281.7 L487,281.9 L487.2,281.7 L487.5,282.1 L487.8,281.8 L488,282.2 L488.2,282.6 L488.5,282.8 L488.8,282.8 L489,283.3 L489.2,283.5 L489.5,283.3 L489.8,283.8 L490,284 L490.2,284.6 L490.5,284.7 L490.8,285.4 L491,285.7 L491.2,285.8 L491.5,286.7 L491.8,286.7 L492,287.5 L492.2,288.1 L492.5,288.7 L492.8,288.8 L493,292 L493.2,295.6 L493.5,299 L493.8,301.2 L494,296 L494.2,290.3 L494.5,285.2 L494.8,282.8 L495,282.7 L495.2,282.2 L495.5,282.3 L495.8,282 L496,281.9 L496.2,282 L496.5,281.8 L496.8,282 L497,282 L497.2,282.6 L497.5,282.5 L497.8,282.8 L498,283.2 L498.2,283.2 L498.5,283.7 L498.8,283.5 L499,284.1 L499.2,284.3 L499.5,284.5 L499.8,285 L500,285.2 L500.2,286.1 L500.5,286.3 L500.8,286.6 L501,287.2 L501.2,287.8 L501.5,288.3 L501.8,288.6 L502,290.6 L502.2,294.4 L502.5,297.9 L502.8,301.2 L503,297.6 L503.2,292.5 L503.5,287.5 L503.8,282.8 L504,282.5 L504.2,282.2 L504.5,282.1 L504.8,282.2 L505,281.9 L505.2,281.7 L505.5,281.6 L505.8,282.2 L506,282.1 L506.2,282.3 L506.5,282.4 L506.8,282.9 L507,283.2 L507.2,283.2 L507.5,283.3 L507.8,283.8 L508,283.6 L508.2,284.1 L508.5,284.7 L508.8,284.8 L509,285.2 L509.2,285.8 L509.5,286.2 L509.8,286.6 L510,287 L510.2,287.4 L510.5,288.1 L510.8,288.8 L511,289.2 L511.2,292.7 L511.5,296.5 L511.8,299.7 L512,299.7 L512.2,294.7 L512.5,289.7 L512.8,284.3 L513,282.7 L513.2,282.4 L513.5,282.3 L513.8,282.3 L514,281.8 L514.2,281.9 L514.5,282.1 L514.8,282.1 L515,282.1 L515.2,282.5 L515.5,282.4 L515.8,282.5 L516,282.9 L516.2,283 L516.5,283.5 L516.8,283.3 L517,283.5 L517.2,283.9 L517.5,284.3 L517.8,284.9 L518,285 L518.2,285.4 L518.5,285.8 L518.8,286.2 L519,286.6 L519.2,287.4 L519.5,287.7 L519.8,288.3 L520,289 L520.2,291.2 L520.5,294.7 L520.8,298.2 L521,302.2 L521.2,296.8 L521.5,291.5 L521.8,286.1 L522,282.9 L522.2,282.4 L522.5,282.5 L522.8,282.4 L523,281.9 L523.2,281.8 L523.5,281.7 L523.8,282.1 L524,281.8 L524.2,282.1 L524.5,282.2 L524.8,282.5 L525,283.1 L525.2,283 L525.5,283 L525.8,283.2 L526,283.4 L526.2,283.9 L526.5,284.3 L526.8,284.4 L527,284.7 L527.2,285.2 L527.5,286 L527.8,286.3 L528,286.6 L528.2,286.9 L528.5,287.5 L528.8,287.9 L529,288.6 L529.2,289.7 L529.5,293.5 L529.8,297.1 L530,300.5 L530.2,298.8 L530.5,293.5 L530.8,288.3 L531,283.4 L531.2,282.5 L531.5,282.3 L531.8,282.5 L532,282.2 L532.2,282.1 L532.5,281.6 L532.8,281.9 L533,281.8 L533.2,282.1 L533.5,282.5 L533.8,282.5 L534,283 L534.2,283 L534.5,283.2 L534.8,283.2 L535,283.3 L535.2,283.5 L535.5,283.9 L535.8,284.3 L536,285 L536.2,285.2 L536.5,285.6 L536.8,285.8 L537,286.3 L537.2,287 L537.5,287.6 L537.8,287.7 L538,288.7 L538.2,289 L538.5,291.9 L538.8,295.9 L539,299.2 L539.2,301.1 L539.5,295.8 L539.8,290.4 L540,285.5 L540.2,283 L540.5,282.4 L540.8,282.3 L541,282.2 L541.2,282.1 L541.5,282.1 L541.8,282.1 L542,281.8 L542.2,281.8 L542.5,282.1 L542.8,282.2 L543,282.9 L543.2,282.8 L543.5,283 L543.8,283.2 L544,283.3 L544.2,283.6 L544.5,283.8 L544.8,284.1 L545,284.9 L545.2,285.2 L545.5,285.3 L545.8,285.7 L546,286.3 L546.2,286.6 L546.5,287.3 L546.8,287.5 L547,288.4 L547.2,289 L547.5,290.6 L547.8,294.1 L548,298 L548.2,301.5 L548.5,297.6 L548.8,292.4 L549,287.3 L549.2,283 L549.5,282.8 L549.8,282.5 L550,282.3 L550.2,282.2 L550.5,282.1 L550.8,281.6 L551,281.9 L551.2,281.7 L551.5,282.1 L551.8,282.5 L552,282.3 L552.2,282.6 L552.5,282.9 L552.8,282.9 L553,283.3 L553.2,283.5 L553.5,283.7 L553.8,283.9 L554,284.4 L554.2,284.7 L554.5,285.2 L554.8,285.5 L555,286.3 L555.2,286.7 L555.5,286.9 L555.8,287.6 L556,287.8 L556.2,288.7 L556.5,289.4 L556.8,292.9 L557,296.1 L557.2,299.8 L557.5,299.8 L557.8,294.7 L558,289.4 L558.2,284.5 L558.5,282.7 L558.8,282.7 L559,282.4 L559.2,282.1 L559.5,281.7 L559.8,281.9 L560,281.6 L560.2,282.2 L560.5,281.8 L560.8,282 L561,282.3 L561.2,282.8 L561.5,283.2 L561.8,282.8 L562,283.2 L562.2,283.5 L562.5,283.6 L562.8,284.3 L563,284.3 L563.2,284.6 L563.5,285.3 L563.8,285.7 L564,286.1 L564.2,286.2 L564.5,287 L564.8,287.2 L565,287.7 L565.2,288.3 L565.5,289 L565.8,291.4 L566,295 L566.2,298.5 L566.5,302 L566.8,296.9 L567,291.4 L567.2,286.2 L567.5,283 L567.8,282.8 L568,282.4 L568.2,282.2 L568.5,281.8 L568.8,281.9 L569,282.1 L569.2,281.7 L569.5,282.1 L569.8,282.4 L570,282.4 L570.2,282.5 L570.5,283 L570.8,282.8 L571,283.4 L571.2,283.5 L571.5,283.4 L571.8,283.9 L572,284.1 L572.2,284.6 L572.5,284.7 L572.8,285.1 L573,285.9 L573.2,286 L573.5,286.6 L573.8,287 L574,287.7 L574.2,288.1 L574.5,288.7 L574.8,290.1 L575,293.3 L575.2,297.1 L575.5,300.7 L575.8,298.8 L576,293.6 L576.2,288.3 L576.5,283.1 L576.8,282.8 L577,282.7 L577.2,282.5 L577.5,281.9 L577.8,282.1 L578,282 L578.2,281.8 L578.5,282 L578.8,282 L579,282.5 L579.2,282.7 L579.5,282.9 L579.8,283 L580,283.2 L580.2,283.2 L580.5,283.4 L580.8,283.8 L581,283.9 L581.2,284.5 L581.5,284.8 L581.8,285.1 L582,285.7 L582.2,285.9 L582.5,286.6 L582.8,286.7 L583,287.2 L583.2,287.9 L583.5,288.3 L583.8,289.2 L584,292 L584.2,295.9 L584.5,298.9 L584.8,301 L585,295.5 L585.2,290.6 L585.5,285.4 L585.8,283 L586,282.7 L586.2,282.3 L586.5,282.1 L586.8,281.9 L587,281.6 L587.2,281.8 L587.5,281.7 L587.8,281.8 L588,282.1 L588.2,282.3 L588.5,282.8 L588.8,283 L589,283.1 L589.2,283.1 L589.5,283.7 L589.8,283.5 L590,283.8 L590.2,284.4 L590.5,284.5 L590.8,285.2 L591,285.2 L591.2,286 L591.5,286.4 L591.8,287 L592,287.3 L592.2,287.6 L592.5,288.2 L592.8,288.7 L593,290.9 L593.2,294.3 L593.5,297.7 L593.8,301.4 L594,298.1 L594.2,292.7 L594.5,287.5 L594.8,282.8 L595,282.7 L595.2,282.3 L595.5,282.1 L595.8,282.1 L596,282.1 L596.2,282 L596.5,282 L596.8,282.1 L597,281.9 L597.2,282.1 L597.5,282.8 L597.8,282.8 L598,283 L598.2,283.4 L598.5,283.4 L598.8,283.4 L599,284 L599.2,283.9 L599.5,284.5 L599.8,284.8 L600,285.4 L600.2,285.9 L600.5,286.1 L600.8,286.7 L601,287 L601.2,287.3 L601.5,288 L601.8,288.7 L602,289.1 L602.2,292.5 L602.5,296.3 L602.8,299.8 L603,300 L603.2,294.9 L603.5,289.6 L603.8,284.1 L604,282.7 L604.2,282.6 L604.5,282.2 L604.8,282.3 L605,281.9 L605.2,282 L605.5,281.9 L605.8,282 L606,282.2 L606.2,282.2 L606.5,282.7 L606.8,282.6 L607,283 L607.2,283 L607.5,283.5 L607.8,283.6 L608,283.9 L608.2,284.1 L608.5,284.4 L608.8,284.7 L609,285.1 L609.2,285.3 L609.5,285.9 L609.8,286.5 L610,286.8 L610.2,287.5 L610.5,288 L610.8,288.3 L611,288.8 L611.2,291.4 L611.5,295.1 L611.8,298.5 L612,301.8 L612.2,297 L612.5,291.6 L612.8,286.1 L613,282.7 L613.2,282.7 L613.5,282.5 L613.8,282.4 L614,282.2 L614.2,282.1 L614.5,282.1 L614.8,281.9 L615,282.2 L615.2,282.3 L615.5,282.4 L615.8,282.4 L616,282.9 L616.2,283.3 L616.5,283.3 L616.8,283.4 L617,283.7 L617.2,284.1 L617.5,284.1 L617.8,284.7 L618,284.8 L618.2,285.4 L618.5,285.5 L618.8,286.2 L619,286.8 L619.2,287.2 L619.5,287.7 L619.8,288.2 L620,288.6 L620.2,289.7 L620.5,293.4 L620.8,297.1 L621,300.5 L621.2,298.8 L621.5,293.8 L621.8,288.3 L622,283.4 L622.2,283 L622.5,282.3 L622.8,282.2 L623,282 L623.2,281.8 L623.5,282 L623.8,281.8 L624,281.9 L624.2,282 L624.5,282.3 L624.8,282.5 L625,282.7 L625.2,283 L625.5,283.3 L625.8,283.5 L626,283.4 L626.2,283.8 L626.5,284.1 L626.8,284.6 L627,285 L627.2,285.2 L627.5,285.5 L627.8,285.9 L628,286.3 L628.2,286.7 L628.5,287.5 L628.8,287.9 L629,288.3 L629.2,288.8 L629.5,291.9 L629.8,295.7 L630,299.2 L630.2,300.9 L630.5,295.9 L630.8,290.5 L631,285.1 L631.2,282.6 L631.5,282.8 L631.8,282.5 L632,282.1 L632.2,281.7 L632.5,282 L632.8,282 L633,281.8 L633.2,281.9 L633.5,282.3 L633.8,282.3 L634,282.8 L634.2,282.8 L634.5,282.9 L634.8,283.3 L635,283.2 L635.2,283.8 L635.5,284.2 L635.8,284.1 L636,284.6 L636.2,284.8 L636.5,285.6 L636.8,285.9 L637,286.5 L637.2,286.9 L637.5,287 L637.8,287.8 L638,288.4 L638.2,288.8 L638.5,290.5 L638.8,294 L639,297.8 L639.2,301.1 L639.5,297.6 L639.8,292.8 L640,287.3 L640.2,283 L640.5,282.5 L640.8,282.4 L641,282.1 L641.2,282.2 L641.5,281.7 L641.8,282 L642,281.7 L642.2,282.1 L642.5,282.1 L642.8,282.1 L643,282.7 L643.2,282.7 L643.5,283.2 L643.8,283.3 L644,283.5 L644.2,283.7 L644.5,283.9 L644.8,283.9 L645,284.3 L645.2,284.6 L645.5,285.1 L645.8,285.8 L646,286.2 L646.2,286.5 L646.5,287 L646.8,287.6 L647,288 L647.2,288.7 L647.5,289.3 L647.8,292.6 L648,296.5 L648.2,299.7 L648.5,300 L648.8,294.7 L649,289.3 L649.2,284.2 L649.5,282.9 L649.8,282.6 L650,282.1 L650.2,282 L650.5,281.9 L650.8,282 L651,281.6 L651.2,282.1 L651.5,282.2 L651.8,282.4 L652,282.6 L652.2,282.5 L652.5,283 L652.8,283.3 L653,283.5 L653.2,283.7 L653.5,283.8 L653.8,283.9 L654,284.2 L654.2,284.7 L654.5,285 L654.8,285.7 L655,286 L655.2,286.2 L655.5,286.9 L655.8,287.3 L656,287.6 L656.2,288.2 L656.5,289.1 L656.8,291.4 L657,295 L657.2,298.3 L657.5,302.1 L657.8,296.6 L658,291.5 L658.2,286.1 L658.5,283.1 L658.8,282.8 L659,282.7 L659.2,282.6 L659.5,282.6 L659.8,282.5 L660,263 L660,282.3 L660.2,282.7 L660.5,282.3 L660.8,282.6 L661,282.6 L661.2,282.8 L661.5,283 L661.8,283 L662,283 L662.2,283.2 L662.5,283.5 L662.8,283.6 L663,283.8 L663.2,284 L663.5,284.1 L663.8,284.4 L664,284.6 L664.2,284.9 L664.5,285 L664.8,284.9 L665,285.4 L665.2,285.5 L665.5,286 L665.8,286.8 L666,288.7 L666.2,290.2 L666.5,292 L666.8,291.5 L667,288.8 L667.2,285.7 L667.5,283.2 L667.8,283.1 L668,282.9 L668.2,282.4 L668.5,282.5 L668.8,282.7 L669,282.4 L669.2,282.4 L669.5,282.6 L669.8,282.5 L670,282.6 L670.2,282.8 L670.5,283 L670.8,282.9 L671,283.1 L671.2,283 L671.5,283.2 L671.8,283.2 L672,283.6 L672.2,283.6 L672.5,284 L672.8,284.3 L673,284.5 L673.2,284.4 L673.5,284.9 L673.8,285 L674,285.3 L674.2,285.5 L674.5,285.8 L674.8,285.9 L675,287.8 L675.2,289.7 L675.5,291.5 L675.8,292.6 L676,289.8 L676.2,287.2 L676.5,284 L676.8,282.7 L677,282.7 L677.2,282.7 L677.5,282.6 L677.8,282.6 L678,282.4 L678.2,282.3 L678.5,282.4 L678.8,282.7 L679,282.7 L679.2,282.5 L679.5,282.6 L679.8,282.8 L680,283 L680.2,283.2 L680.5,283.2 L680.8,283.6 L681,283.7 L681.2,283.7 L681.5,283.8 L681.8,283.9 L682,284.3 L682.2,284.6 L682.5,284.7 L682.8,285.1 L683,285.1 L683.2,285.6 L683.5,285.8 L683.8,285.9 L684,287.2 L684.2,288.8 L684.5,290.5 L684.8,292.5 L685,291 L685.2,287.9 L685.5,285.2 L685.8,283 L686,283 L686.2,282.6 L686.5,282.8 L686.8,282.4 L687,282.4 L687.2,282.4 L687.5,282.5 L687.8,282.3 L688,282.4 L688.2,282.7 L688.5,282.9 L688.8,283.1 L689,283 L689.2,283.1 L689.5,283.4 L689.8,283.1 L690,283.6 L690.2,283.6 L690.5,283.9 L690.8,283.7 L691,284 L691.2,284.2 L691.5,284.5 L691.8,284.9 L692,285.2 L692.2,285.3 L692.5,285.7 L692.8,286 L693,286.3 L693.2,288.3 L693.5,290.2 L693.8,291.8 L694,292 L694.2,289.3 L694.5,286.4 L694.8,283.6 L695,282.7 L695.2,282.6 L695.5,282.5 L695.8,282.4 L696,282.2 L696.2,282.2 L696.5,282.6 L696.8,282.3 L697,282.5 L697.2,282.3 L697.5,282.9 L697.8,283 L698,283 L698.2,282.8 L698.5,283 L698.8,283.4 L699,283.2 L699.2,283.4 L699.5,283.8 L699.8,284.1 L700,284.3 L700.2,284.3 L700.5,284.8 L700.8,284.8 L701,285 L701.2,285.4 L701.5,285.6 L701.8,285.7 L702,286.1 L702.2,287.6 L702.5,289.3 L702.8,291 L703,293.2 L703.2,290.3 L703.5,287.4 L703.8,284.8 L704,282.8 L704.2,282.8 L704.5,282.7 L704.8,282.3 L705,282.5 L705.2,282.2 L705.5,282.5 L705.8,282.2 L706,282.3 L706.2,282.3 L706.5,282.7 L706.8,282.8 L707,282.9 L707.2,283.2 L707.5,282.9 L707.8,283.3 L708,283.5 L708.2,283.6 L708.5,283.6 L708.8,284 L709,283.8 L709.2,284.2 L709.5,284.5 L709.8,284.9 L710,284.7 L710.2,285.3 L710.5,285.6 L710.8,285.5 L711,286.1 L711.2,286.6 L711.5,288.7 L711.8,290.4 L712,292.3 L712.2,291.2 L712.5,288.5 L712.8,285.8 L713,283.3 L713.2,283 L713.5,282.8 L713.8,282.5 L714,282.6 L714.2,282.4 L714.5,282.6 L714.8,282.6 L715,282.6 L715.2,282.5 L715.5,282.4 L715.8,283 L716,282.8 L716.2,282.8 L716.5,283.3 L716.8,283.3 L717,283.5 L717.2,283.6 L717.5,283.4 L717.8,283.9 L718,283.8 L718.2,284.2 L718.5,284.5 L718.8,284.6 L719,284.7 L719.2,285.1 L719.5,285.6 L719.8,285.7 L720,286.1 L720.2,285.9 L720.5,287.5 L720.8,289.8 L721,291.4 L721.2,292.3 L721.5,289.8 L721.8,286.9 L722,284.1 L722.2,282.7 L722.5,282.6 L722.8,282.5 L723,282.5 L723.2,282.5 L723.5,282.2 L723.8,282.2 L724,282.5 L724.2,282.4 L724.5,282.4 L724.8,282.5 L725,282.8 L725.2,282.7 L725.5,283 L725.8,282.9 L726,283.3 L726.2,283.6 L726.5,283.5 L726.8,283.6 L727,283.8 L727.2,283.9 L727.5,284.2 L727.8,284.5 L728,284.7 L728.2,284.8 L728.5,285 L728.8,285.6 L729,285.9 L729.2,286 L729.5,286.8 L729.8,288.8 L730,290.8 L730.2,292.6 L730.5,290.6 L730.8,287.8 L731,285.3 L731.2,283.1 L731.5,282.6 L731.8,282.5 L732,282.8 L732.2,282.7 L732.5,282.5 L732.8,282.4 L733,282.4 L733.2,282.3 L733.5,282.6 L733.8,282.5 L734,282.7 L734.2,282.9 L734.5,282.9 L734.8,283.1 L735,283.1 L735.2,283.5 L735.5,283.3 L735.8,283.4 L736,283.5 L736.2,284 L736.5,284.2 L736.8,284.1 L737,284.6 L737.2,284.9 L737.5,285.1 L737.8,285.2 L738,285.8 L738.2,286 L738.5,286.2 L738.8,288.1 L739,290 L739.2,291.7 L739.5,291.8 L739.8,289.2 L740,286.2 L740.2,283.8 L740.5,282.8 L740.8,282.8 L741,282.4 L741.2,282.7 L741.5,282.5 L741.8,282.6 L742,282.6 L742.2,282.5 L742.5,282.5 L742.8,282.4 L743,282.8 L743.2,282.9 L743.5,283 L743.8,282.9 L744,283.1 L744.2,283.4 L744.5,283.2 L744.8,283.8 L745,283.7 L745.2,283.7 L745.5,283.9 L745.8,284.6 L746,284.4 L746.2,284.9 L746.5,285 L746.8,285.4 L747,285.4 L747.2,286 L747.5,285.9 L747.8,287.2 L748,289.1 L748.2,291.3 L748.5,292.8 L748.8,290.4 L749,287.7 L749.2,284.7 L749.5,283 L749.8,283 L750,282.9 L750.2,282.4 L750.5,282.7 L750.8,282.5 L751,282.3 L751.2,282.4 L751.5,282.6 L751.8,282.6 L752,282.5 L752.2,283 L752.5,283.1 L752.8,283.1 L753,283.3 L753.2,283.1 L753.5,283.5 L753.8,283.4 L754,283.9 L754.2,283.6 L754.5,284 L754.8,284.3 L755,284.2 L755.2,284.7 L755.5,284.8 L755.8,285.2 L756,285.5 L756.2,285.6 L756.5,285.9 L756.8,286.6 L757,288.6 L757.2,290.5 L757.5,292.2 L757.8,291.2 L758,288.5 L758.2,285.9 L758.5,283.1 L758.8,282.8 L759,282.6 L759.2,282.7 L759.5,282.5 L759.8,282.3 L760,282.4 L760.2,282.6 L760.5,282.6 L760.8,282.3 L761,282.7 L761.2,282.6 L761.5,282.8 L761.8,282.8 L762,283 L762.2,283 L762.5,283.3 L762.8,283.5 L763,283.4 L763.2,283.6 L763.5,284.2 L763.8,283.9 L764,284.4 L764.2,284.7 L764.5,284.9 L764.8,285 L765,285.4 L765.2,285.6 L765.5,285.7 L765.8,286.3 L766,287.7 L766.2,289.7 L766.5,291.6 L766.8,292.7 L767,289.7 L767.2,287 L767.5,284.2 L767.8,283.2 L768,282.8 L768.2,282.9 L768.5,282.4 L768.8,282.3 L769,282.3 L769.2,282.2 L769.5,282.3 L769.8,282.6 L770,282.5 L770.2,282.6 L770.5,282.8 L770.8,282.9 L771,282.8 L771.2,282.9 L771.5,283.3 L771.8,283.5 L772,283.4 L772.2,283.7 L772.5,283.7 L772.8,284 L773,284.3 L773.2,284.4 L773.5,284.9 L773.8,285.2 L774,285 L774.2,285.6 L774.5,285.6 L774.8,286.2 L775,287.2 L775.2,289 L775.5,290.7 L775.8,292.8 L776,290.6 L776.2,287.9 L776.5,285.1 L776.8,283 L777,282.8 L777.2,282.7 L777.5,282.6 L777.8,282.7 L778,282.6 L778.2,282.3 L778.5,282.6 L778.8,282.6 L779,282.7 L779.2,282.5 L779.5,282.8 L779.8,282.8 L780,282.8 L780.2,283.2 L780.5,283 L780.8,283.1 L781,283.7 L781.2,283.6 L781.5,283.8 L781.8,284.1 L782,283.9 L782.2,284.2 L782.5,284.5 L782.8,284.8 L783,284.9 L783.2,285.2 L783.5,285.4 L783.8,286 L784,286.1 L784.2,287.9 L784.5,289.8 L784.8,292 L785,292 L785.2,289.1 L785.5,286.2 L785.8,283.8 L786,283 L786.2,282.7 L786.5,282.8 L786.8,282.7 L787,282.2 L787.2,282.4 L787.5,282.6 L787.8,282.3 L788,282.6 L788.2,282.8 L788.5,282.9 L788.8,282.8 L789,282.8 L789.2,283 L789.5,283.3 L789.8,283.2 L790,283.4 L790.2,283.7 L790.5,283.7 L790.8,284 L791,284 L791.2,284.1 L791.5,284.8 L791.8,285 L792,285 L792.2,285.2 L792.5,285.6 L792.8,286 L793,286.1 L793.2,287.3 L793.5,289.3 L793.8,291 L794,292.9 L794.2,290.4 L794.5,287.3 L794.8,284.9 L795,282.8 L795.2,282.9 L795.5,282.6 L795.8,282.5 L796,282.6 L796.2,282.2 L796.5,282.4 L796.8,282.2 L797,282.6 L797.2,282.4 L797.5,282.7 L797.8,282.8 L798,283 L798.2,283.3 L798.5,282.9 L798.8,283.3 L799,283.5 L799.2,283.6 L799.5,283.5 L799.8,283.6 L800,283.8 L800.2,284.1 L800.5,284.4 L800.8,284.8 L801,285.1 L801.2,285.2 L801.5,285.4 L801.8,285.8 L802,286.1 L802.2,286.7 L802.5,288.3 L802.8,290.4 L803,292.3 L803.2,291.1 L803.5,288.8 L803.8,285.8 L804,283.1 L804.2,282.8 L804.5,282.9 L804.8,282.6 L805,282.3 L805.2,282.2 L805.5,282.4 L805.8,282.4 L806,282.5 L806.2,282.7 L806.5,282.6 L806.8,283 L807,283 L807.2,283 L807.5,283.1 L807.8,283.3 L808,283.4 L808.2,283.3 L808.5,283.4 L808.8,283.6 L809,283.9 L809.2,284.1 L809.5,284.5 L809.8,284.8 L810,284.9 L810.2,285.2 L810.5,285.3 L810.8,285.3 L811,285.9 L811.2,286 L811.5,287.6 L811.8,289.9 L812,291.7 L812.2,292.4 L812.5,289.7 L812.8,286.8 L813,284.1 L813.2,283.1 L813.5,283 L813.8,282.9 L814,282.5 L814.2,282.5 L814.5,282.2 L814.8,282.3 L815,282.5 L815.2,282.4 L815.5,282.5 L815.8,282.5 L816,282.8 L816.2,282.9 L816.5,283.1 L816.8,283 L817,283.3 L817.2,283.4 L817.5,283.6 L817.8,283.8 L818,283.9 L818.2,284.1 L818.5,284.1 L818.8,284.6 L819,284.7 L819.2,285.1 L819.5,285.3 L819.8,285.5 L820,285.5 L820.2,286.1 L820.5,287.3 L820.8,289.1 L821,290.6 L821.2,292.8 L821.5,291 L821.8,288.2 L822,285.5 L822.2,282.8 L822.5,282.8 L822.8,282.5 L823,282.6 L823.2,282.5 L823.5,282.3 L823.8,282.5 L824,282.2 L824.2,282.6 L824.5,282.5 L824.8,282.5 L825,282.6 L825.2,282.7 L825.5,282.9 L825.8,283.1 L826,283 L826.2,283.5 L826.5,283.6 L826.8,283.8 L827,283.5 L827.2,284 L827.5,284 L827.8,284.4 L828,284.6 L828.2,284.8 L828.5,285.3 L828.8,285.2 L829,285.8 L829.2,286.1 L829.5,286.4 L829.8,288.4 L830,289.9 L830.2,291.9 L830.5,291.8 L830.8,289.2 L831,286.2 L831.2,283.6 L831.5,283.1 L831.8,282.8 L832,282.4 L832.2,282.5 L832.5,282.3 L832.8,282.4 L833,282.5 L833.2,282.5 L833.5,282.7 L833.8,282.5 L834,282.8 L834.2,283 L834.5,283.2 L834.8,283.1 L835,283.2 L835.2,283.1 L835.5,283.6 L835.8,283.7 L836,283.8 L836.2,283.9 L836.5,284 L836.8,284.5 L837,284.6 L837.2,284.6 L837.5,285.1 L837.8,285.5 L838,285.8 L838.2,285.7 L838.5,285.9 L838.8,287.6 L839,289.2 L839.2,291 L839.5,293.2 L839.8,290.5 L840,287.5 L840.2,284.9 L840.5,282.7 L840.8,282.7 L841,282.6 L841.2,282.6 L841.5,282.3 L841.8,282.7 L842,282.5 L842.2,282.4 L842.5,282.5 L842.8,282.4 L843,282.6 L843.2,282.9 L843.5,283 L843.8,283 L844,283 L844.2,283.4 L844.5,283.4 L844.8,283.5 L845,283.8 L845.2,283.7 L845.5,283.8 L845.8,284.3 L846,284.6 L846.2,284.8 L846.5,285 L846.8,285.2 L847,285.4 L847.2,285.5 L847.5,286.1 L847.8,286.7 L848,288.5 L848.2,290.4 L848.5,292.4 L848.8,291.4 L849,288.5 L849.2,285.8 L849.5,283.2 L849.8,283 L850,282.9 L850.2,282.7 L850.5,282.7 L850.8,282.6 L851,282.2 L851.2,282.5 L851.5,282.2 L851.8,282.5 L852,282.4 L852.2,282.7 L852.5,282.7 L852.8,282.8 L853,283.1 L853.2,283 L853.5,283.5 L853.8,283.2 L854,283.8 L854.2,283.6 L854.5,284 L854.8,284 L855,284.4 L855.2,284.6 L855.5,284.7 L855.8,285.1 L856,285.4 L856.2,285.8 L856.5,285.8 L856.8,286 L857,287.9 L857.2,289.4 L857.5,291.4 L857.8,292.4 L858,289.7 L858.2,286.7 L858.5,284.3 L858.8,283.1 L859,282.9 L859.2,282.4 L859.5,282.8 L859.8,282.5 L860,282.4 L860.2,282.4 L860.5,282.2 L860.8,282.6 L861,282.5 L861.2,282.6 L861.5,282.9 L861.8,283.2 L862,283 L862.2,282.9 L862.5,283.3 L862.8,283.5 L863,283.6 L863.2,283.6 L863.5,283.9 L863.8,283.9 L864,284.2 L864.2,284.5 L864.5,284.7 L864.8,284.8 L865,285.4 L865.2,285.6 L865.5,285.9 L865.8,285.8 L866,287.3 L866.2,288.8 L866.5,290.6 L866.8,292.7 L867,290.9 L867.2,288.1 L867.5,285.3 L867.8,283.2 L868,282.7 L868.2,282.7 L868.5,282.7 L868.8,282.5 L869,282.2 L869.2,282.6 L869.5,282.5 L869.8,282.3 L870,282.6 L870.2,282.4 L870.5,283 L870.8,282.8 L871,283.3 L871.2,283.1 L871.5,283.4 L871.8,283.3 L872,283.5 L872.2,283.5 L872.5,283.7 L872.8,284.2 L873,284.4 L873.2,284.5 L873.5,284.8 L873.8,284.7 L874,285 L874.2,285.5 L874.5,285.7 L874.8,286.1 L875,286.4 L875.2,288.3 L875.5,290.2 L875.8,292 L876,291.7 L876.2,289.2 L876.5,286.5 L876.8,283.4 L877,283.1 L877.2,282.7 L877.5,282.5 L877.8,282.5 L878,282.6 L878.2,282.6 L878.5,282.3 L878.8,282.5 L879,282.7 L879.2,282.8 L879.5,282.6 L879.8,282.7 L880,282.9 L880.2,283.2 L880.5,283.3 L880.8,283.1 L881,283.3 L881.2,283.8 L881.5,283.8 L881.8,283.8 L882,284.2 L882.2,284.2 L882.5,284.8 L882.8,284.9 L883,285.2 L883.2,285.4 L883.5,285.3 L883.8,285.6 L884,285.9 L884.2,287.6 L884.5,289.1 L884.8,291.1 L885,293.2 L885.2,290.1 L885.5,287.6 L885.8,285 L886,283 L886.2,283 L886.5,282.7 L886.8,282.8 L887,282.7 L887.2,282.6 L887.5,282.6 L887.8,282.2 L888,282.4 L888.2,282.8 L888.5,282.9 L888.8,282.8 L889,282.9 L889.2,282.8 L889.5,283.1 L889.8,283.4 L890,283.5 L890.2,283.4 L890.5,283.6 L890.8,283.6 L891,284.2 L891.2,284 L891.5,284.3 L891.8,284.8 L892,285.2 L892.2,285 L892.5,285.7 L892.8,285.8 L893,286 L893.2,286.6 L893.5,288.4 L893.8,290.5 L894,292.3 L894.2,291.6 L894.5,288.8 L894.8,286.1 L895,283.1 L895.2,282.9 L895.5,282.5 L895.8,282.7 L896,282.7 L896.2,282.6 L896.5,282.5 L896.8,282.2 L897,282.2 L897.2,282.6 L897.5,282.8 L897.8,282.6 L898,283.1 L898.2,283.2 L898.5,283.2 L898.8,283.4 L899,283.3 L899.2,283.3 L899.5,283.4 L899.8,283.7 L900,283.7" fill="none" stroke="#cc2250" stroke-width="1.15" stroke-linejoin="round" opacity="1"/><path d="M2,324.3 L2.2,323.6 L2.5,324.4 L2.8,324.8 L3,325.4 L3.2,326.6 L3.5,327 L3.8,327.7 L4,328.7 L4.2,329.3 L4.5,330.2 L4.8,330.7 L5,331.7 L5.2,332.2 L5.5,333.1 L5.8,333.4 L6,334.5 L6.2,335.1 L6.5,335.5 L6.8,336.1 L7,335.8 L7.2,335.3 L7.5,334.7 L7.8,333.9 L8,333.6 L8.2,332.8 L8.5,332 L8.8,331.4 L9,330.3 L9.2,329.6 L9.5,328.9 L9.8,328.2 L10,327.6 L10.2,326.7 L10.5,326 L10.8,325.2 L11,324.2 L11.2,323.4 L11.5,323.6 L11.8,324.2 L12,325.1 L12.2,325.6 L12.5,326.5 L12.8,327.2 L13,328.2 L13.2,328.7 L13.5,329.2 L13.8,330.2 L14,330.8 L14.2,331.4 L14.5,332.2 L14.8,333.1 L15,333.6 L15.2,334.4 L15.5,334.7 L15.8,335.7 L16,336 L16.2,335.4 L16.5,334.8 L16.8,333.9 L17,333.1 L17.2,332.5 L17.5,331.7 L17.8,331 L18,330.6 L18.2,329.6 L18.5,329.1 L18.8,328.4 L19,327.5 L19.2,326.6 L19.5,325.8 L19.8,325.3 L20,324.5 L20.2,323.6 L20.5,322.7 L20.8,323.5 L21,324.1 L21.2,325 L21.5,325.9 L21.8,326.4 L22,327.1 L22.2,327.8 L22.5,328.6 L22.8,329.7 L23,330.3 L23.2,330.8 L23.5,331.6 L23.8,332.5 L24,332.9 L24.2,333.7 L24.5,334.4 L24.8,334.7 L25,335.5 L25.2,334.9 L25.5,334.2 L25.8,334 L26,333.2 L26.2,332.5 L26.5,331.9 L26.8,331.3 L27,330.1 L27.2,329.8 L27.5,328.9 L27.8,328.3 L28,327.6 L28.2,326.5 L28.5,325.9 L28.8,325.2 L29,324.4 L29.2,323.7 L29.5,322.6 L29.8,323 L30,323.8 L30.2,324.7 L30.5,325.2 L30.8,325.9 L31,326.6 L31.2,327.2 L31.5,328 L31.8,328.9 L32,329.5 L32.2,330.1 L32.5,330.9 L32.8,331.8 L33,332.5 L33.2,333 L33.5,333.7 L33.8,334.3 L34,335 L34.2,334.8 L34.5,334.1 L34.8,333.5 L35,332.9 L35.2,332.6 L35.5,331.6 L35.8,331.2 L36,330.5 L36.2,329.4 L36.5,328.6 L36.8,327.8 L37,327.2 L37.2,326.4 L37.5,325.8 L37.8,325.1 L38,324.3 L38.2,323.4 L38.5,322.5 L38.8,322 L39,323.2 L39.2,323.6 L39.5,324.3 L39.8,325.1 L40,325.8 L40.2,326.7 L40.5,327.2 L40.8,328 L41,329 L41.2,329.8 L41.5,330.4 L41.8,331.1 L42,331.8 L42.2,332.4 L42.5,332.9 L42.8,333.7 L43,334.3 L43.2,334.8 L43.5,334.4 L43.8,333.4 L44,332.9 L44.2,332.3 L44.5,331.7 L44.8,330.7 L45,330.3 L45.2,329.4 L45.5,328.7 L45.8,328.1 L46,327.3 L46.2,326.3 L46.5,325.5 L46.8,325 L47,324.4 L47.2,323.4 L47.5,322.9 L47.8,321.8 L48,322.5 L48.2,323 L48.5,323.6 L48.8,324.8 L49,325.4 L49.2,326.1 L49.5,327 L49.8,327.4 L50,328.1 L50.2,329.2 L50.5,329.4 L50.8,330.3 L51,331.2 L51.2,331.9 L51.5,332.4 L51.8,333.2 L52,333.6 L52.2,334.3 L52.5,333.8 L52.8,333.2 L53,332.9 L53.2,332.2 L53.5,331.2 L53.8,330.8 L54,330.1 L54.2,329.2 L54.5,328.5 L54.8,327.9 L55,327.4 L55.2,326.4 L55.5,325.6 L55.8,324.8 L56,324.4 L56.2,323.3 L56.5,322.4 L56.8,321.8 L57,321.8 L57.2,322.5 L57.5,323 L57.8,323.8 L58,324.5 L58.2,325.6 L58.5,326.1 L58.8,326.6 L59,327.4 L59.2,328.3 L59.5,328.9 L59.8,329.9 L60,330.6 L60.2,331.1 L60.5,331.6 L60.8,332.6 L61,333.2 L61.2,333.5 L61.5,333.7 L61.8,333.5 L62,332.8 L62.2,331.8 L62.5,331.2 L62.8,330.8 L63,329.9 L63.2,329.3 L63.5,328.5 L63.8,327.9 L64,327.2 L64.2,326.4 L64.5,325.9 L64.8,324.9 L65,324.2 L65.2,323.5 L65.5,322.3 L65.8,322 L66,320.9 L66.2,321.7 L66.5,322.5 L66.8,323.3 L67,324 L67.2,324.6 L67.5,325.4 L67.8,326.4 L68,326.8 L68.2,327.6 L68.5,328.2 L68.8,329.3 L69,329.8 L69.2,330.4 L69.5,331.1 L69.8,331.8 L70,332.5 L70.2,333.1 L70.5,333.4 L70.8,333 L71,332.7 L71.2,331.9 L71.5,331.1 L71.8,330.6 L72,329.7 L72.2,329.4 L72.5,328.4 L72.8,327.9 L73,327.1 L73.2,326.1 L73.5,325.6 L73.8,324.8 L74,324.3 L74.2,323 L74.5,322.5 L74.8,321.8 L75,321 L75.2,320.9 L75.5,321.7 L75.8,322.6 L76,323.4 L76.2,324.2 L76.5,325 L76.8,325.4 L77,326.5 L77.2,327 L77.5,327.7 L77.8,328.2 L78,329.2 L78.2,329.5 L78.5,330.5 L78.8,331 L79,331.5 L79.2,332.2 L79.5,332.7 L79.8,333 L80,332.4 L80.2,331.7 L80.5,331.2 L80.8,330.3 L81,329.8 L81.2,329.1 L81.5,328.6 L81.8,327.6 L82,327.1 L82.2,326.1 L82.5,325.7 L82.8,324.8 L83,323.8 L83.2,323.1 L83.5,322.6 L83.8,321.6 L84,320.7 L84.2,320.3 L84.5,321.4 L84.8,322.1 L85,322.7 L85.2,323.6 L85.5,324 L85.8,324.9 L86,325.6 L86.2,326.3 L86.5,327.3 L86.8,327.6 L87,328.2 L87.2,329.1 L87.5,329.6 L87.8,330.2 L88,330.8 L88.2,331.8 L88.5,332.3 L88.8,332.9 L89,332.4 L89.2,331.7 L89.5,330.9 L89.8,330.1 L90,329.4 L90.2,329 L90.5,328.2 L90.8,327.5 L91,327 L91.2,326.3 L91.5,325.5 L91.8,324.8 L92,324 L92.2,323.3 L92.5,322.6 L92.8,321.6 L93,320.9 L93.2,320.3 L93.5,320.7 L93.8,321.5 L94,322.1 L94.2,322.8 L94.5,323.5 L94.8,324.1 L95,325.2 L95.2,325.5 L95.5,326.4 L95.8,327 L96,327.6 L96.2,328.3 L96.5,329.1 L96.8,329.7 L97,330.2 L97.2,330.9 L97.5,331.5 L97.8,332 L98,332 L98.2,331.2 L98.5,330.7 L98.8,330.4 L99,329.6 L99.2,329.1 L99.5,328.2 L99.8,327.5 L100,327 L100.2,325.9 L100.5,325.3 L100.8,324.5 L101,324 L101.2,323 L101.5,322.6 L101.8,321.7 L102,320.7 L102.2,320.3 L102.5,319.9 L102.8,320.5 L103,321.5 L103.2,322.1 L103.5,323.1 L103.8,323.4 L104,324.3 L104.2,324.8 L104.5,325.7 L104.8,326.2 L105,326.9 L105.2,327.7 L105.5,328.6 L105.8,329.3 L106,329.7 L106.2,330.2 L106.5,330.8 L106.8,331.4 L107,332 L107.2,331.1 L107.5,330.7 L107.8,330 L108,329.6 L108.2,328.7 L108.5,328 L108.8,327.3 L109,326.4 L109.2,325.9 L109.5,325.2 L109.8,324.3 L110,323.8 L110.2,322.9 L110.5,322.4 L110.8,321.6 L111,320.9 L111.2,319.9 L111.5,319.3 L111.8,320 L112,321 L112.2,321.3 L112.5,322.3 L112.8,322.8 L113,323.5 L113.2,324.5 L113.5,324.8 L113.8,325.9 L114,326.6 L114.2,327 L114.5,327.8 L114.8,328.5 L115,329.1 L115.2,329.7 L115.5,330.2 L115.8,330.9 L116,331.5 L116.2,331.1 L116.5,330.7 L116.8,329.9 L117,329.2 L117.2,328.5 L117.5,327.8 L117.8,327.2 L118,326.4 L118.2,325.7 L118.5,325.1 L118.8,324.3 L119,323.6 L119.2,323.2 L119.5,322.4 L119.8,321.5 L120,320.6 L120.2,319.8 L120.5,319.3 L120.8,319.6 L121,319.9 L121.2,320.8 L121.5,321.6 L121.8,322.5 L122,322.9 L122.2,323.6 L122.5,324.4 L122.8,325.3 L123,325.7 L123.2,326.5 L123.5,327 L123.8,328.1 L124,328.4 L124.2,328.9 L124.5,329.8 L124.8,330.2 L125,330.8 L125.2,331.1 L125.5,330.5 L125.8,329.9 L126,329.2 L126.2,328.3 L126.5,328.1 L126.8,327.3 L127,326.4 L127.2,325.6 L127.5,325.2 L127.8,324.3 L128,323.4 L128.2,322.9 L128.5,322.4 L128.8,321.4 L129,320.5 L129.2,320.1 L129.5,319 L129.8,318.8 L130,319.3 L130.2,320.3 L130.5,320.8 L130.8,321.6 L131,322.3 L131.2,323.2 L131.5,323.5 L131.8,324.2 L132,325.3 L132.2,325.7 L132.5,326.3 L132.8,327.1 L133,327.7 L133.2,328.4 L133.5,328.9 L133.8,329.8 L134,330.2 L134.2,330.7 L134.5,330.4 L134.8,329.7 L135,329 L135.2,328.5 L135.5,327.5 L135.8,327.2 L136,326.5 L136.2,325.6 L136.5,325 L136.8,324.3 L137,323.7 L137.2,322.9 L137.5,321.9 L137.8,321.2 L138,320.5 L138.2,319.9 L138.5,319 L138.8,318.5 L139,318.9 L139.2,319.4 L139.5,320.4 L139.8,320.9 L140,321.9 L140.2,322.6 L140.5,323.2 L140.8,323.6 L141,324.5 L141.2,325.1 L141.5,326 L141.8,326.4 L142,327.3 L142.2,327.9 L142.5,328.6 L142.8,329.2 L143,329.6 L143.2,330.3 L143.5,330.1 L143.8,329.6 L144,328.9 L144.2,328 L144.5,327.8 L144.8,327.1 L145,326.2 L145.2,325.6 L145.5,324.8 L145.8,324.1 L146,323.5 L146.2,322.9 L146.5,322.2 L146.8,321.1 L147,320.5 L147.2,320 L147.5,319 L147.8,318.1 L148,318 L148.2,318.7 L148.5,319.5 L148.8,320.5 L149,320.9 L149.2,321.8 L149.5,322.6 L149.8,323.4 L150,324 L150.2,324.6 L150.5,325.4 L150.8,326.1 L151,326.8 L151.2,326.9 L151.5,327.7 L151.8,328.5 L152,329.2 L152.2,329.7 L152.5,329.7 L152.8,329.4 L153,328.6 L153.2,328.3 L153.5,327.6 L153.8,326.7 L154,325.9 L154.2,325.7 L154.5,324.7 L154.8,324.3 L155,323.3 L155.2,322.8 L155.5,322 L155.8,321.1 L156,320.7 L156.2,320 L156.5,319.2 L156.8,318.5 L157,317.7 L157.2,318.2 L157.5,319.1 L157.8,319.6 L158,320.5 L158.2,321.2 L158.5,321.8 L158.8,322.7 L159,323.4 L159.2,323.8 L159.5,324.7 L159.8,325.2 L160,325.7 L160.2,326.8 L160.5,327.4 L160.8,327.8 L161,328.4 L161.2,329 L161.5,329.3 L161.8,329.4 L162,328.6 L162.2,328.2 L162.5,327.5 L162.8,326.6 L163,326.3 L163.2,325.6 L163.5,324.5 L163.8,323.8 L164,323.4 L164.2,322.5 L164.5,321.9 L164.8,321.1 L165,320.2 L165.2,319.4 L165.5,319.1 L165.8,318.1 L166,317.7 L166.2,317.7 L166.5,318.6 L166.8,319 L167,319.8 L167.2,320.6 L167.5,321.3 L167.8,322 L168,322.3 L168.2,323.1 L168.5,323.8 L168.8,324.7 L169,325.1 L169.2,326 L169.5,326.8 L169.8,327.2 L170,327.8 L170.2,328.3 L170.5,328.7 L170.8,329.2 L171,328.6 L171.2,327.9 L171.5,327.3 L171.8,326.4 L172,325.8 L172.2,325.2 L172.5,324.4 L172.8,323.9 L173,323.1 L173.2,322.4 L173.5,321.8 L173.8,320.8 L174,320.3 L174.2,319.8 L174.5,318.7 L174.8,318.3 L175,317.4 L175.2,316.8 L175.5,317.5 L175.8,318.6 L176,319.3 L176.2,320 L176.5,320.3 L176.8,321.3 L177,321.8 L177.2,322.8 L177.5,323.1 L177.8,323.8 L178,324.8 L178.2,325.4 L178.5,325.9 L178.8,326.6 L179,327.3 L179.2,327.7 L179.5,328.3 L179.8,328.8 L180,328.2 L180.2,327.7 L180.5,326.9 L180.8,326.3 L181,325.8 L181.2,325.2 L181.5,324.4 L181.8,324 L182,323.3 L182.2,322.2 L182.5,321.7 L182.8,321 L183,320.4 L183.2,319.7 L183.5,319 L183.8,318 L184,317.1 L184.2,316.8 L184.5,316.9 L184.8,317.6 L185,318.4 L185.2,319.1 L185.5,319.7 L185.8,320.8 L186,321.2 L186.2,321.8 L186.5,322.5 L186.8,323.2 L187,324 L187.2,324.4 L187.5,325.4 L187.8,325.9 L188,326.3 L188.2,327.3 L188.5,327.5 L188.8,328.1 L189,328.3 L189.2,327.6 L189.5,326.8 L189.8,326.3 L190,325.8 L190.2,325.2 L190.5,324.3 L190.8,323.6 L191,323.1 L191.2,322.4 L191.5,321.7 L191.8,321.1 L192,320.2 L192.2,319.3 L192.5,318.8 L192.8,317.8 L193,317.2 L193.2,316.3 L193.5,316.3 L193.8,316.9 L194,318 L194.2,318.3 L194.5,319.1 L194.8,320.2 L195,320.5 L195.2,321.6 L195.5,321.9 L195.8,322.7 L196,323.2 L196.2,324.2 L196.5,324.6 L196.8,325.1 L197,326.1 L197.2,326.6 L197.5,326.9 L197.8,327.4 L198,327.9 L198.2,327.4 L198.5,326.7 L198.8,326 L199,325.6 L199.2,324.9 L199.5,324.2 L199.8,323.5 L200,322.9 L200.2,322.3 L200.5,321.5 L200.8,320.8 L201,320.3 L201.2,319.5 L201.5,318.6 L201.8,317.9 L202,317 L202.2,316.4 L202.5,315.7 L202.8,316.3 L203,317.2 L203.2,318.1 L203.5,318.4 L203.8,319.3 L204,320.2 L204.2,320.7 L204.5,321.3 L204.8,321.9 L205,322.8 L205.2,323.3 L205.5,324.1 L205.8,324.4 L206,325.4 L206.2,326 L206.5,326.3 L206.8,327 L207,327.6 L207.2,327 L207.5,326.5 L207.8,326.2 L208,325.2 L208.2,324.6 L208.5,324.2 L208.8,323.6 L209,322.7 L209.2,322.2 L209.5,336.8 L209.8,336.8 L210,336.7 L210.2,336.4 L210.5,336.4 L210.8,336.3 L211,336.4 L211.2,336.3 L211.5,336.4 L211.8,336 L212,336.4 L212.2,336.1 L212.5,336.5 L212.8,336.3 L213,336.8 L213.2,336.5 L213.5,337 L213.8,337 L214,336.6 L214.2,336.6 L214.5,336.7 L214.8,336.5 L215,336.6 L215.2,336.5 L215.5,336.4 L215.8,336.3 L216,336.1 L216.2,336.2 L216.5,336.4 L216.8,336.4 L217,336.2 L217.2,336.4 L217.5,336.7 L217.8,336.4 L218,336.7 L218.2,336.7 L218.5,337 L218.8,337 L219,336.7 L219.2,336.6 L219.5,336.7 L219.8,336.4 L220,336.3 L220.2,336.6 L220.5,336.3 L220.8,336.4 L221,336.1 L221.2,336.2 L221.5,336.4 L221.8,336.4 L222,336.3 L222.2,336.6 L222.5,336.6 L222.8,336.5 L223,336.9 L223.2,336.6 L223.5,336.7 L223.8,336.9 L224,336.7 L224.2,336.9 L224.5,336.5 L224.8,336.4 L225,336.7 L225.2,336.5 L225.5,336.5 L225.8,336 L226,336.5 L226.2,336.4 L226.5,336.1 L226.8,336.6 L227,336.5 L227.2,336.7 L227.5,336.6 L227.8,336.6 L228,336.7 L228.2,337 L228.5,336.8 L228.8,336.6 L229,336.6 L229.2,336.7 L229.5,336.5 L229.8,336.6 L230,336.4 L230.2,336 L230.5,336.3 L230.8,336.1 L231,336.4 L231.2,336.3 L231.5,336.4 L231.8,336.2 L232,336.3 L232.2,336.8 L232.5,336.8 L232.8,337 L233,336.9 L233.2,336.9 L233.5,337 L233.8,336.7 L234,336.8 L234.2,336.5 L234.5,336.3 L234.8,336.5 L235,336.4 L235.2,336.2 L235.5,336.5 L235.8,336.1 L236,336.2 L236.2,336.3 L236.5,336.4 L236.8,336.5 L237,336.8 L237.2,336.7 L237.5,336.8 L237.8,336.8 L238,337 L238.2,336.7 L238.5,336.6 L238.8,336.4 L239,336.6 L239.2,336.3 L239.5,336.2 L239.8,336.4 L240,336.5 L240.2,336.3 L240.5,336.3 L240.8,336.1 L241,336.1 L241.2,336.2 L241.5,336.2 L241.8,336.7 L242,336.5 L242.2,336.8 L242.5,336.6 L242.8,336.9 L243,336.7 L243.2,336.8 L243.5,336.8 L243.8,336.8 L244,336.3 L244.2,336.6 L244.5,336.2 L244.8,336.5 L245,336.2 L245.2,336.3 L245.5,336.3 L245.8,336.5 L246,336.3 L246.2,336.5 L246.5,336.4 L246.8,336.6 L247,336.7 L247.2,336.8 L247.5,336.8 L247.8,336.6 L248,336.6 L248.2,336.8 L248.5,336.6 L248.8,336.4 L249,336.3 L249.2,336.5 L249.5,336.3 L249.8,336.5 L250,336 L250.2,336.5 L250.5,336.5 L250.8,336.4 L251,336.6 L251.2,336.7 L251.5,336.4 L251.8,336.8 L252,336.6 L252.2,336.9 L252.5,336.8 L252.8,336.7 L253,336.5 L253.2,336.5 L253.5,336.5 L253.8,336.7 L254,336.6 L254.2,336.5 L254.5,336.3 L254.8,336.4 L255,336.3 L255.2,336.5 L255.5,336.5 L255.8,336.3 L256,336.3 L256.2,336.5 L256.5,336.5 L256.8,336.8 L257,336.8 L257.2,337 L257.5,336.5 L257.8,336.7 L258,336.7 L258.2,336.6 L258.5,336.3 L258.8,336.5 L259,336.3 L259.2,336.2 L259.5,336 L259.8,336.2 L260,336 L260.2,336.3 L260.5,336.1 L260.8,336.2 L261,336.4 L261.2,336.4 L261.5,336.7 L261.8,336.9" fill="none" stroke="#8aaa2a" stroke-width="1.15" stroke-linejoin="round" opacity="1"/><path d="M388,336.8 L388.2,336.8 L388.5,336.5 L388.8,336.5 L389,336.7 L389.2,336.6 L389.5,336.4 L389.8,336.9 L390,336.9 L390.2,337.4 L390.5,337.9 L390.8,338.3 L391,339.2 L391.2,339.7 L391.5,340.6 L391.8,341.9 L392,343.1 L392.2,344 L392.5,345.1 L392.8,346.8 L393,348 L393.2,349.5 L393.5,351 L393.8,350.6 L394,349.3 L394.2,347.9 L394.5,346.4 L394.8,344.8 L395,343.7 L395.2,342.9 L395.5,341.7 L395.8,340.6 L396,339.9 L396.2,338.9 L396.5,338.3 L396.8,337.6 L397,337.3 L397.2,337 L397.5,336.9 L397.8,336.5 L398,336.6 L398.2,336.6 L398.5,336.6 L398.8,336.6 L399,337 L399.2,337 L399.5,337.8 L399.8,338.3 L400,338.9 L400.2,339.7 L400.5,340.4 L400.8,341.5 L401,342.3 L401.2,343.5 L401.5,344.8 L401.8,346 L402,347.3 L402.2,348.9 L402.5,350.3 L402.8,351.4 L403,349.8 L403.2,348.3 L403.5,346.9 L403.8,345.4 L404,344.5 L404.2,343.3 L404.5,342.2 L404.8,340.8 L405,340 L405.2,339.4 L405.5,338.4 L405.8,338.1 L406,337.4 L406.2,336.9 L406.5,336.7 L406.8,336.6 L407,336.3 L407.2,336.3 L407.5,336.5 L407.8,336.8 L408,336.6 L408.2,337.3 L408.5,337.5 L408.8,337.7 L409,338.6 L409.2,339.3 L409.5,340.1 L409.8,340.8 L410,341.8 L410.2,342.9 L410.5,344.3 L410.8,345.5 L411,346.8 L411.2,348.1 L411.5,349.7 L411.8,351.4 L412,350.5 L412.2,348.9 L412.5,347.6 L412.8,346.3 L413,344.8 L413.2,343.6 L413.5,342.6 L413.8,341.2 L414,340.5 L414.2,339.6 L414.5,338.9 L414.8,338.2 L415,337.8 L415.2,337.4 L415.5,336.9 L415.8,336.6 L416,336.4 L416.2,336.3 L416.5,336.4 L416.8,336.5 L417,336.8 L417.2,337 L417.5,337.5 L417.8,337.7 L418,338.3 L418.2,339.1 L418.5,339.8 L418.8,340.8 L419,341.8 L419.2,342.7 L419.5,343.7 L419.8,345 L420,346.1 L420.2,347.6 L420.5,349.3 L420.8,350.8 L421,351 L421.2,349.6 L421.5,348.3 L421.8,346.8 L422,345.3 L422.2,344.3 L422.5,343.1 L422.8,341.7 L423,340.9 L423.2,339.7 L423.5,339.3 L423.8,338.5 L424,337.6 L424.2,337.4 L424.5,337.1 L424.8,336.8 L425,336.7 L425.2,336.7 L425.5,336.3 L425.8,336.6 L426,336.8 L426.2,337 L426.5,337.2 L426.8,337.5 L427,338.2 L427.2,338.9 L427.5,339.5 L427.8,340.3 L428,341.3 L428.2,342 L428.5,343.1 L428.8,344.7 L429,345.9 L429.2,347.1 L429.5,348.6 L429.8,350.2 L430,351.3 L430.2,349.8 L430.5,348.5 L430.8,347.4 L431,345.8 L431.2,344.6 L431.5,343.3 L431.8,342.3 L432,341.1 L432.2,340.2 L432.5,339.4 L432.8,338.8 L433,337.9 L433.2,337.4 L433.5,336.9 L433.8,336.7 L434,336.8 L434.2,336.3 L434.5,336.5 L434.8,336.5 L435,336.6 L435.2,336.7 L435.5,337 L435.8,337.2 L436,337.9 L436.2,338.3 L436.5,338.9 L436.8,339.7 L437,341 L437.2,341.6 L437.5,343 L437.8,343.8 L438,345.4 L438.2,346.4 L438.5,348 L438.8,349.4 L439,351 L439.2,350.7 L439.5,349.3 L439.8,347.7 L440,346.6 L440.2,345 L440.5,343.9 L440.8,342.5 L441,341.7 L441.2,340.8 L441.5,339.7 L441.8,339.2 L442,338.1 L442.2,337.9 L442.5,337.3 L442.8,337.1 L443,336.6 L443.2,336.5 L443.5,336.4 L443.8,336.3 L444,336.5 L444.2,336.7 L444.5,336.7 L444.8,337.4 L445,337.5 L445.2,338.1 L445.5,338.9 L445.8,339.7 L446,340.6 L446.2,341.3 L446.5,342.5 L446.8,343.6 L447,344.8 L447.2,346.2 L447.5,347.6 L447.8,349.1 L448,350.2 L448.2,351.4 L448.5,349.9 L448.8,348.4 L449,346.9 L449.2,345.7 L449.5,344.2 L449.8,343.2 L450,341.8 L450.2,341 L450.5,340.2 L450.8,339.2 L451,338.5 L451.2,338.1 L451.5,337.4 L451.8,336.9 L452,336.6 L452.2,336.8 L452.5,336.5 L452.8,336.4 L453,336.7 L453.2,336.8 L453.5,336.9 L453.8,337.1 L454,337.2 L454.2,337.9 L454.5,338.6 L454.8,339.3 L455,340.1 L455.2,340.7 L455.5,342.2 L455.8,343.2 L456,344.4 L456.2,345.6 L456.5,346.8 L456.8,348.4 L457,349.6 L457.2,351.2 L457.5,350.3 L457.8,349 L458,347.4 L458.2,346 L458.5,345 L458.8,343.4 L459,342.4 L459.2,341.4 L459.5,340.4 L459.8,339.6 L460,338.7 L460.2,338.4 L460.5,337.8 L460.8,337.1 L461,337.1 L461.2,336.5 L461.5,336.4 L461.8,336.4 L462,336.6 L462.2,336.7 L462.5,336.8 L462.8,337.2 L463,337 L463.2,337.9 L463.5,338.1 L463.8,339 L464,339.8 L464.2,340.6 L464.5,341.3 L464.8,342.6 L465,343.7 L465.2,345 L465.5,346.1 L465.8,347.7 L466,349 L466.2,350.5 L466.5,351 L466.8,349.2 L467,348 L467.2,346.7 L467.5,345.2 L467.8,344.2 L468,343.1 L468.2,341.9 L468.5,340.6 L468.8,340 L469,338.9 L469.2,338.3 L469.5,338 L469.8,337.3 L470,337.1 L470.2,336.9 L470.5,336.6 L470.8,336.5 L471,336.3 L471.2,336.4 L471.5,336.5 L471.8,337.1 L472,337 L472.2,337.5 L472.5,338.1 L472.8,338.7 L473,339.4 L473.2,340.4 L473.5,341.1 L473.8,342.4 L474,343.3 L474.2,344.8 L474.5,345.7 L474.8,347 L475,348.7 L475.2,349.9 L475.5,351.4 L475.8,350.1 L476,348.7 L476.2,347 L476.5,346 L476.8,344.5 L477,343.4 L477.2,342.2 L477.5,341.1 L477.8,340.1 L478,339.4 L478.2,338.7 L478.5,338 L478.8,337.3 L479,337 L479.2,336.6 L479.5,336.4 L479.8,336.4 L480,336.5 L480.2,336.7 L480.5,336.4 L480.8,336.6 L481,337.1 L481.2,337.6 L481.5,337.8 L481.8,338.7 L482,339.3 L482.2,339.7 L482.5,340.9 L482.8,341.9 L483,343.1 L483.2,344 L483.5,345.1 L483.8,346.9 L484,348.2 L484.2,349.5 L484.5,351 L484.8,350.7 L485,349.3 L485.2,347.8 L485.5,346.4 L485.8,345.2 L486,344 L486.2,342.4 L486.5,341.5 L486.8,340.8 L487,339.9 L487.2,338.7 L487.5,338.3 L487.8,337.7 L488,337.5 L488.2,336.8 L488.5,336.9 L488.8,336.5 L489,336.7 L489.2,336.6 L489.5,336.4 L489.8,336.5 L490,337.1 L490.2,337.4 L490.5,337.7 L490.8,338.1 L491,338.8 L491.2,339.5 L491.5,340.4 L491.8,341.1 L492,342.2 L492.2,343.5 L492.5,345 L492.8,345.9 L493,347.6 L493.2,348.9 L493.5,350.2 L493.8,351.1 L494,349.9 L494.2,348.3 L494.5,347.1 L494.8,345.4 L495,344.2 L495.2,342.9 L495.5,341.9 L495.8,340.8 L496,340.2 L496.2,339.4 L496.5,338.5 L496.8,338 L497,337.4 L497.2,337.2 L497.5,336.8 L497.8,336.8 L498,336.5 L498.2,336.3 L498.5,336.4 L498.8,336.4 L499,336.8 L499.2,337.3 L499.5,337.4 L499.8,337.7 L500,338.4 L500.2,339.1 L500.5,339.9 L500.8,341 L501,342.2 L501.2,342.9 L501.5,344.2 L501.8,345.6 L502,346.8 L502.2,348.3 L502.5,350 L502.8,351.2 L503,350.3 L503.2,348.8 L503.5,347.7 L503.8,346.2 L504,344.9 L504.2,343.4 L504.5,342.6 L504.8,341.5 L505,340.3 L505.2,339.6 L505.5,338.8 L505.8,337.9 L506,337.5 L506.2,337.4 L506.5,336.7 L506.8,336.7 L507,336.7 L507.2,336.6 L507.5,336.4 L507.8,336.4 L508,336.9 L508.2,337.1 L508.5,337.2 L508.8,337.6 L509,338.2 L509.2,339.2 L509.5,339.6 L509.8,340.5 L510,341.7 L510.2,342.6 L510.5,343.9 L510.8,345.1 L511,346.2 L511.2,347.5 L511.5,349 L511.8,350.8 L512,350.8 L512.2,349.4 L512.5,347.8 L512.8,346.8 L513,345.2 L513.2,343.9 L513.5,342.7 L513.8,341.7 L514,340.9 L514.2,339.8 L514.5,339.3 L514.8,338.4 L515,338 L515.2,337.5 L515.5,336.9 L515.8,336.7 L516,336.5 L516.2,336.6 L516.5,336.6 L516.8,336.5 L517,336.7 L517.2,337.1 L517.5,337.2 L517.8,337.8 L518,337.9 L518.2,338.6 L518.5,339.6 L518.8,340.5 L519,341.3 L519.2,342.1 L519.5,343.3 L519.8,344.7 L520,345.7 L520.2,347.1 L520.5,348.8 L520.8,350 L521,351.3 L521.2,349.9 L521.5,348.3 L521.8,347 L522,345.9 L522.2,344.8 L522.5,343.3 L522.8,342.2 L523,341.2 L523.2,340.2 L523.5,339.3 L523.8,338.9 L524,338.2 L524.2,337.6 L524.5,337 L524.8,337.1 L525,336.9 L525.2,336.5 L525.5,336.3 L525.8,336.7 L526,336.5 L526.2,336.8 L526.5,337.1 L526.8,337.3 L527,338 L527.2,338.4 L527.5,339.1 L527.8,340.1 L528,340.7 L528.2,341.7 L528.5,342.7 L528.8,343.8 L529,345.3 L529.2,346.7 L529.5,347.8 L529.8,349.6 L530,350.7 L530.2,350.7 L530.5,349.2 L530.8,347.7 L531,346.1 L531.2,344.8 L531.5,343.6 L531.8,342.6 L532,341.5 L532.2,340.8 L532.5,339.6 L532.8,339.1 L533,338.2 L533.2,337.9 L533.5,337.2 L533.8,337 L534,336.8 L534.2,336.4 L534.5,336.3 L534.8,336.4 L535,336.3 L535.2,336.8 L535.5,337.1 L535.8,337.3 L536,337.9 L536.2,338 L536.5,338.9 L536.8,339.5 L537,340.4 L537.2,341.6 L537.5,342.2 L537.8,343.7 L538,344.7 L538.2,345.8 L538.5,347.6 L538.8,349 L539,350.3 L539.2,351.4 L539.5,349.5 L539.8,348.4 L540,347.1 L540.2,345.4 L540.5,344.2 L540.8,343.2 L541,341.8 L541.2,341 L541.5,340.1 L541.8,339.2 L542,338.3 L542.2,337.9 L542.5,337.5 L542.8,337.1 L543,337 L543.2,336.5 L543.5,336.7 L543.8,336.6 L544,336.4 L544.2,336.7 L544.5,336.9 L544.8,337.1 L545,337.2 L545.2,337.8 L545.5,338.5 L545.8,339.1 L546,340.2 L546.2,340.8 L546.5,342.2 L546.8,343 L547,344.4 L547.2,345.5 L547.5,347 L547.8,348.4 L548,349.8 L548.2,351.2 L548.5,350.4 L548.8,348.9 L549,347.2 L549.2,346.1 L549.5,344.8 L549.8,343.5 L550,342.6 L550.2,341.2 L550.5,340.3 L550.8,339.5 L551,339 L551.2,338 L551.5,337.6 L551.8,337.4 L552,337.1 L552.2,336.8 L552.5,336.4 L552.8,336.6 L553,336.4 L553.2,336.5 L553.5,336.6 L553.8,337.1 L554,337.1 L554.2,337.7 L554.5,338.4 L554.8,338.8 L555,339.5 L555.2,340.6 L555.5,341.5 L555.8,342.9 L556,343.6 L556.2,345.3 L556.5,346.5 L556.8,347.7 L557,349.2 L557.2,350.7 L557.5,350.9 L557.8,349.5 L558,347.8 L558.2,346.5 L558.5,345.3 L558.8,344.1 L559,342.7 L559.2,341.6 L559.5,340.8 L559.8,339.7 L560,339.1 L560.2,338.2 L560.5,337.8 L560.8,337.4 L561,337.1 L561.2,336.9 L561.5,336.7 L561.8,336.6 L562,336.5 L562.2,336.4 L562.5,336.4 L562.8,337 L563,337.2 L563.2,337.6 L563.5,337.8 L563.8,338.5 L564,339.2 L564.2,340.3 L564.5,341.3 L564.8,342 L565,343.1 L565.2,344.7 L565.5,345.6 L565.8,347 L566,348.8 L566.2,350.2 L566.5,351.7 L566.8,350 L567,348.7 L567.2,347.4 L567.5,346.1 L567.8,344.5 L568,343.4 L568.2,342.3 L568.5,341.4 L568.8,340.4 L569,339.3 L569.2,338.4 L569.5,337.8 L569.8,337.5 L570,337.3 L570.2,336.8 L570.5,336.7 L570.8,336.5 L571,336.7 L571.2,336.6 L571.5,336.8 L571.8,336.9 L572,336.9 L572.2,337.5 L572.5,338.1 L572.8,338.3 L573,339.2 L573.2,340 L573.5,340.6 L573.8,341.9 L574,342.6 L574.2,343.9 L574.5,345.1 L574.8,346.7 L575,348.1 L575.2,349.4 L575.5,351.1 L575.8,350.5 L576,349 L576.2,347.8 L576.5,346.6 L576.8,344.9 L577,344 L577.2,342.8 L577.5,341.4 L577.8,340.7 L578,339.8 L578.2,339.2 L578.5,338.3 L578.8,337.6 L579,337.5 L579.2,337 L579.5,336.9 L579.8,336.7 L580,336.7 L580.2,336.6 L580.5,336.6 L580.8,336.6 L581,336.9 L581.2,337.4 L581.5,337.4 L581.8,338.4 L582,338.7 L582.2,339.6 L582.5,340.4 L582.8,341.3 L583,342.2 L583.2,343.4 L583.5,344.7 L583.8,346.3 L584,347.5 L584.2,348.8 L584.5,350.3 L584.8,351.1 L585,349.5 L585.2,348.1 L585.5,346.9 L585.8,345.4 L586,344.4 L586.2,343.1 L586.5,342.1 L586.8,340.8 L587,340.3 L587.2,339.4 L587.5,338.8 L587.8,337.8 L588,337.4 L588.2,337.3 L588.5,336.6 L588.8,336.7 L589,336.3 L589.2,336.6 L589.5,336.8 L589.8,336.8 L590,336.6 L590.2,337.2 L590.5,337.3 L590.8,337.9 L591,338.7 L591.2,339.1 L591.5,340.1 L591.8,341.1 L592,342 L592.2,343.3 L592.5,344.4 L592.8,345.4 L593,346.7 L593.2,348.1 L593.5,350 L593.8,351.1 L594,350.1 L594.2,349 L594.5,347.2 L594.8,346.3 L595,344.8 L595.2,343.7 L595.5,342.3 L595.8,341.5 L596,340.5 L596.2,339.5 L596.5,339 L596.8,338 L597,337.8 L597.2,337.2 L597.5,336.8 L597.8,336.7 L598,336.7 L598.2,336.3 L598.5,336.5 L598.8,336.6 L599,336.5 L599.2,337.1 L599.5,337.2 L599.8,338 L600,338.3 L600.2,339.2 L600.5,339.8 L600.8,340.5 L601,341.7 L601.2,342.7 L601.5,343.6 L601.8,345 L602,346.4 L602.2,347.5 L602.5,349 L602.8,350.8 L603,351.1 L603.2,349.6 L603.5,348.2 L603.8,346.9 L604,345.1 L604.2,344.2 L604.5,343 L604.8,341.6 L605,340.9 L605.2,339.9 L605.5,339 L605.8,338.6 L606,337.7 L606.2,337.4 L606.5,336.9 L606.8,336.5 L607,336.4 L607.2,336.4 L607.5,336.3 L607.8,336.7 L608,336.6 L608.2,336.9 L608.5,337.4 L608.8,337.7 L609,338.3 L609.2,338.9 L609.5,339.5 L609.8,340.2 L610,341.2 L610.2,342.5 L610.5,343.3 L610.8,344.6 L611,345.8 L611.2,347.1 L611.5,348.5 L611.8,349.8 L612,351.5 L612.2,350 L612.5,348.5 L612.8,346.9 L613,345.6 L613.2,344.6 L613.5,343.5 L613.8,342.2 L614,341.4 L614.2,340.4 L614.5,339.3 L614.8,338.7 L615,337.9 L615.2,337.7 L615.5,337.4 L615.8,337 L616,336.7 L616.2,336.3 L616.5,336.5 L616.8,336.6 L617,336.7 L617.2,336.6 L617.5,336.8 L617.8,337.4 L618,337.9 L618.2,338.5 L618.5,339.2 L618.8,339.7 L619,340.9 L619.2,342 L619.5,343 L619.8,343.9 L620,345.1 L620.2,346.8 L620.5,348.2 L620.8,349.3 L621,351 L621.2,350.7 L621.5,349.3 L621.8,347.6 L622,346.3 L622.2,345.3 L622.5,344 L622.8,342.5 L623,341.6 L623.2,340.7 L623.5,339.8 L623.8,339.1 L624,338.5 L624.2,337.6 L624.5,337 L624.8,336.9 L625,336.9 L625.2,336.6 L625.5,336.6 L625.8,336.7 L626,336.3 L626.2,336.9 L626.5,336.8 L626.8,337.1 L627,337.8 L627.2,338.3 L627.5,338.7 L627.8,339.4 L628,340.4 L628.2,341.5 L628.5,342.2 L628.8,343.4 L629,344.9 L629.2,345.9 L629.5,347.5 L629.8,348.9 L630,350.2 L630.2,351.1 L630.5,349.6 L630.8,348.1 L631,347 L631.2,345.4 L631.5,344.5 L631.8,343 L632,342.1 L632.2,341.1 L632.5,340.2 L632.8,339.4 L633,338.4 L633.2,337.9 L633.5,337.4 L633.8,336.9 L634,336.6 L634.2,336.7 L634.5,336.4 L634.8,336.5 L635,336.6 L635.2,336.6 L635.5,336.6 L635.8,337 L636,337.5 L636.2,337.7 L636.5,338.4 L636.8,339.1 L637,339.8 L637.2,340.8 L637.5,342.1 L637.8,342.9 L638,344.1 L638.2,345.6 L638.5,347 L638.8,348.3 L639,349.9 L639.2,351 L639.5,350.4 L639.8,348.9 L640,347.6 L640.2,346.1 L640.5,344.7 L640.8,343.6 L641,342.2 L641.2,341.2 L641.5,340.7 L641.8,339.5 L642,338.9 L642.2,338.2 L642.5,337.9 L642.8,337 L643,336.8 L643.2,336.9 L643.5,336.5 L643.8,336.4 L644,336.7 L644.2,336.8 L644.5,336.8 L644.8,336.9 L645,337.4 L645.2,337.6 L645.5,338.4 L645.8,338.9 L646,339.7 L646.2,340.5 L646.5,341.8 L646.8,342.6 L647,344.1 L647.2,344.9 L647.5,346.5 L647.8,347.7 L648,349.4 L648.2,350.8 L648.5,351.2 L648.8,349.6 L649,348 L649.2,346.8 L649.5,345.2 L649.8,344.2 L650,343.1 L650.2,341.6 L650.5,340.6 L650.8,340 L651,339.1 L651.2,338.6 L651.5,338 L651.8,337.3 L652,337.1 L652.2,336.6 L652.5,336.5 L652.8,336.4 L653,336.3 L653.2,336.7 L653.5,336.9 L653.8,336.8 L654,336.9 L654.2,337.7 L654.5,338.1 L654.8,338.7 L655,339.4 L655.2,340.3 L655.5,341.1 L655.8,342 L656,343.1 L656.2,344.8 L656.5,345.7 L656.8,347.3 L657,348.4 L657.2,349.9 L657.5,351.3 L657.8,350.2 L658,348.5 L658.2,347 L658.5,345.8 L658.8,344.5 L659,343.2 L659.2,342 L659.5,341.3 L659.8,340.4 L660,339.2 L660.2,338.6 L660.5,338.3 L660.8,337.8 L661,337.2 L661.2,336.7 L661.5,336.7 L661.8,336.4 L662,336.7 L662.2,336.6 L662.5,336.7 L662.8,336.9 L663,337.3 L663.2,337.4 L663.5,337.8 L663.8,338.4 L664,338.9 L664.2,339.7 L664.5,340.8 L664.8,341.6 L665,342.8 L665.2,344.1 L665.5,345.1 L665.8,346.5 L666,348 L666.2,349.5 L666.5,350.9 L666.8,350.7 L667,349.3 L667.2,347.5 L667.5,346.4 L667.8,344.9 L668,343.6 L668.2,342.5 L668.5,341.6 L668.8,340.6 L669,339.6 L669.2,339.1 L669.5,338.5 L669.8,337.6 L670,337.2 L670.2,337.1 L670.5,336.9 L670.8,336.6 L671,336.6 L671.2,336.3 L671.5,336.4 L671.8,336.9 L672,336.7 L672.2,337.4 L672.5,337.9 L672.8,338.2 L673,338.7 L673.2,339.7 L673.5,340.3 L673.8,341.6 L674,342.2 L674.2,343.7 L674.5,344.7 L674.8,346.2 L675,347.2 L675.2,348.9 L675.5,350.2 L675.8,351 L676,349.8 L676.2,348.5 L676.5,346.9 L676.8,345.6 L677,344.3 L677.2,343.2 L677.5,341.9 L677.8,340.9 L678,339.9 L678.2,339.3 L678.5,338.8 L678.8,337.7 L679,337.5 L679.2,337.1 L679.5,337 L679.8,336.8 L680,336.5 L680.2,336.6 L680.5,336.5 L680.8,336.8 L681,336.6 L681.2,336.9 L681.5,337.2 L681.8,338.1 L682,338.7 L682.2,339.2 L682.5,340.2 L682.8,340.9 L683,342.1 L683.2,342.9 L683.5,344.4 L683.8,345.5 L684,347.1 L684.2,348.1 L684.5,349.8 L684.8,351.3 L685,350.4 L685.2,348.9 L685.5,347.7 L685.8,345.9 L686,344.7 L686.2,343.5 L686.5,342.5 L686.8,341.5 L687,340.2 L687.2,339.4 L687.5,339 L687.8,338.2 L688,337.5 L688.2,337.5 L688.5,336.8 L688.8,336.7 L689,336.3 L689.2,336.5 L689.5,336.6 L689.8,336.8 L690,336.8 L690.2,336.9 L690.5,337.1 L690.8,337.6 L691,338.4 L691.2,338.9 L691.5,339.6 L691.8,340.7 L692,341.8 L692.2,342.6 L692.5,343.9 L692.8,345 L693,346.3 L693.2,347.6 L693.5,349.2 L693.8,350.7 L694,351.1 L694.2,349.5 L694.5,348.2 L694.8,346.7 L695,345.4 L695.2,344.2 L695.5,342.8 L695.8,342 L696,340.7 L696.2,340.1 L696.5,339.3 L696.8,338.2 L697,337.8 L697.2,337.4 L697.5,336.8 L697.8,336.9 L698,336.5 L698.2,336.7 L698.5,336.3 L698.8,336.5 L699,336.6 L699.2,337 L699.5,337.3 L699.8,337.8 L700,338.3 L700.2,338.8 L700.5,339.3 L700.8,340.3 L701,341.3 L701.2,342.3 L701.5,343.2 L701.8,344.4 L702,345.7 L702.2,347.4 L702.5,348.7 L702.8,350.1 L703,351.7 L703.2,350.2 L703.5,348.4 L703.8,347.4 L704,345.9 L704.2,344.3 L704.5,343.5 L704.8,342 L705,341.1 L705.2,340 L705.5,339.2 L705.8,338.7 L706,337.9 L706.2,337.6 L706.5,337 L706.8,337 L707,336.4 L707.2,336.5 L707.5,336.5 L707.8,336.6 L708,336.5 L708.2,336.9 L708.5,336.8 L708.8,337.6 L709,337.9 L709.2,338.2 L709.5,338.9 L709.8,340.1 L710,340.6 L710.2,342 L710.5,342.8 L710.8,344.1 L711,345.3 L711.2,346.5 L711.5,348.1 L711.8,349.3 L712,351 L712.2,350.6 L712.5,349.3 L712.8,347.6 L713,346.3 L713.2,345 L713.5,344 L713.8,342.6 L714,341.4 L714.2,340.4 L714.5,339.8 L714.8,339.1 L715,338.3 L715.2,337.8 L715.5,337.4 L715.8,337 L716,336.6 L716.2,336.8 L716.5,336.6 L716.8,336.3 L717,336.4 L717.2,336.4 L717.5,336.7 L717.8,337.2 L718,337.5 L718.2,338.3 L718.5,339 L718.8,339.6 L719,340.2 L719.2,341.3 L719.5,342.7 L719.8,343.4 L720,345 L720.2,346.3 L720.5,347.4 L720.8,349.1 L721,350.3 L721.2,351.1 L721.5,349.6 L721.8,348.1 L722,347.1 L722.2,345.6 L722.5,344.1 L722.8,343.2 L723,342.2 L723.2,341 L723.5,340.3 L723.8,339.5 L724,338.6 L724.2,337.9 L724.5,337.5 L724.8,336.9 L725,337 L725.2,336.4 L725.5,336.7 L725.8,336.6 L726,336.7 L726.2,336.4 L726.5,336.6 L726.8,337 L727,337.6 L727.2,338 L727.5,338.3 L727.8,339.2 L728,340 L728.2,340.8 L728.5,341.9 L728.8,343.3 L729,344.2 L729.2,345.7 L729.5,347.1 L729.8,348.4 L730,349.9 L730.2,351.2 L730.5,350.1 L730.8,348.6 L731,347.4 L731.2,346 L731.5,344.9 L731.8,343.8 L732,342.5 L732.2,341.4 L732.5,340.2 L732.8,339.3 L733,338.7 L733.2,338 L733.5,337.7 L733.8,337.3 L734,336.7 L734.2,336.6 L734.5,336.7 L734.8,336.6 L735,336.6 L735.2,336.7 L735.5,336.5 L735.8,337 L736,337.1 L736.2,337.8 L736.5,338.2 L736.8,338.9 L737,339.7 L737.2,340.4 L737.5,341.6 L737.8,342.8 L738,344 L738.2,345.2 L738.5,346.6 L738.8,347.8 L739,349.1 L739.2,350.5 L739.5,351 L739.8,349.3 L740,348 L740.2,346.9 L740.5,345.4 L740.8,344.2 L741,342.9 L741.2,341.9 L741.5,340.9 L741.8,340.1 L742,339.2 L742.2,338.4 L742.5,337.8 L742.8,337.4 L743,337.3 L743.2,336.6 L743.5,336.5 L743.8,336.7 L744,336.7 L744.2,336.5 L744.5,336.5 L744.8,336.8 L745,337.3 L745.2,337.3 L745.5,337.9 L745.8,338.9 L746,339.4 L746.2,340.2 L746.5,341.3 L746.8,342.1 L747,343.3 L747.2,344.4 L747.5,345.8 L747.8,347.3 L748,348.4 L748.2,350.2 L748.5,351.5 L748.8,349.9 L749,348.4 L749.2,347.1 L749.5,345.8 L749.8,344.3 L750,343.3 L750.2,342.4 L750.5,341.2 L750.8,340.2 L751,339.6 L751.2,338.8 L751.5,337.9 L751.8,337.7 L752,336.9 L752.2,336.8 L752.5,336.8 L752.8,336.4 L753,336.5 L753.2,336.6 L753.5,336.7 L753.8,337 L754,336.9 L754.2,337.5 L754.5,338 L754.8,338.5 L755,339.3 L755.2,339.7 L755.5,340.8 L755.8,341.8 L756,343.1 L756.2,344.2 L756.5,345.3 L756.8,346.6 L757,347.8 L757.2,349.5 L757.5,351 L757.8,350.8 L758,349.3 L758.2,347.5 L758.5,346.5 L758.8,345 L759,344 L759.2,342.8 L759.5,341.8 L759.8,340.7 L760,339.9 L760.2,338.7 L760.5,338.1 L760.8,337.9 L761,337.3 L761.2,336.8 L761.5,336.6 L761.8,336.4 L762,336.3 L762.2,336.3 L762.5,336.7 L762.8,336.9 L763,336.8 L763.2,337.1 L763.5,337.7 L763.8,338 L764,338.7 L764.2,339.5 L764.5,340.6 L764.8,341.5 L765,342.2 L765.2,343.4 L765.5,344.6 L765.8,346.3 L766,347.3 L766.2,348.9 L766.5,350.1 L766.8,351.3 L767,349.6 L767.2,348.4 L767.5,347.1 L767.8,345.4 L768,344.1 L768.2,343.1 L768.5,341.9 L768.8,341.1 L769,340 L769.2,339 L769.5,338.7 L769.8,338.1 L770,337.7 L770.2,337.2 L770.5,336.9 L770.8,336.4 L771,336.3 L771.2,336.5 L771.5,336.5 L771.8,336.5 L772,336.6 L772.2,337.2 L772.5,337.6 L772.8,337.7 L773,338.7 L773.2,339.1 L773.5,340 L773.8,341 L774,342.1 L774.2,343.2 L774.5,344.1 L774.8,345.5 L775,347 L775.2,348.3 L775.5,349.7 L775.8,351.4 L776,350.2 L776.2,349 L776.5,347.7 L776.8,345.9 L777,345 L777.2,343.7 L777.5,342.4 L777.8,341.3 L778,340.4 L778.2,339.8 L778.5,338.6 L778.8,338.3 L779,337.7 L779.2,337 L779.5,337.1 L779.8,336.6 L780,336.4 L780.2,336.7 L780.5,336.5 L780.8,336.5 L781,336.6 L781.2,336.7 L781.5,337.3 L781.8,337.6 L782,338.3 L782.2,339.1 L782.5,339.9 L782.8,340.6 L783,341.5 L783.2,342.5 L783.5,343.6 L783.8,344.8 L784,346.6 L784.2,347.7 L784.5,349.3 L784.8,350.6 L785,350.7 L785.2,349.6 L785.5,348.1 L785.8,346.6 L786,345.3 L786.2,344.3 L786.5,342.9 L786.8,341.8 L787,340.7 L787.2,340.1 L787.5,338.9 L787.8,338.2 L788,337.8 L788.2,337.5 L788.5,337.2 L788.8,336.9 L789,336.7 L789.2,336.6 L789.5,336.4 L789.8,336.6 L790,336.5 L790.2,336.9 L790.5,337 L790.8,337.6 L791,338 L791.2,338.6 L791.5,339.4 L791.8,340.1 L792,341 L792.2,342.4 L792.5,343.3 L792.8,344.4 L793,345.7 L793.2,347.1 L793.5,348.8 L793.8,350.1 L794,351.7 L794.2,350.2 L794.5,348.5 L794.8,347.2 L795,345.9 L795.2,344.4 L795.5,343.4 L795.8,342.2 L796,340.9 L796.2,340.1 L796.5,339.5 L796.8,338.8 L797,338.2 L797.2,337.4 L797.5,337.3 L797.8,337 L798,336.7 L798.2,336.3 L798.5,336.7 L798.8,336.5 L799,336.8 L799.2,336.5 L799.5,336.8 L799.8,337.6 L800,338 L800.2,338.2 L800.5,339.1 L800.8,340 L801,340.7 L801.2,341.9 L801.5,342.8 L801.8,344.1 L802,345.3 L802.2,346.6 L802.5,347.8 L802.8,349.4 L803,351.1 L803.2,350.8 L803.5,348.9 L803.8,347.9 L804,346.4 L804.2,344.9 L804.5,343.9 L804.8,342.5 L805,341.6 L805.2,340.8 L805.5,339.9 L805.8,338.9 L806,338.2 L806.2,337.9 L806.5,337.3 L806.8,336.9 L807,336.6 L807.2,336.7 L807.5,336.6 L807.8,336.5 L808,336.8 L808.2,336.8 L808.5,336.8 L808.8,337.4 L809,337.5 L809.2,338.2 L809.5,338.6 L809.8,339.4 L810,340.5 L810.2,341.4 L810.5,342.6 L810.8,343.6 L811,344.9 L811.2,346.2 L811.5,347.2 L811.8,348.7 L812,350.4 L812.2,351.1 L812.5,349.8 L812.8,348.1 L813,347 L813.2,345.7 L813.5,344.4 L813.8,343.2 L814,342.1 L814.2,340.9 L814.5,340 L814.8,339.1 L815,338.4 L815.2,337.8 L815.5,337.3 L815.8,336.9 L816,336.8 L816.2,336.8 L816.5,336.6 L816.8,336.3 L817,336.6 L817.2,336.6 L817.5,336.6 L817.8,337.3 L818,337.3 L818.2,338 L818.5,338.5 L818.8,339.3 L819,340.1 L819.2,340.9 L819.5,342.1 L819.8,343.3 L820,344.2 L820.2,345.6 L820.5,346.9 L820.8,348.1 L821,349.7 L821.2,351.1 L821.5,350.5 L821.8,349.1 L822,347.3 L822.2,346 L822.5,344.9 L822.8,343.8 L823,342.6 L823.2,341.2 L823.5,340.5 L823.8,339.4 L824,338.7 L824.2,338.2 L824.5,337.7 L824.8,337.1 L825,336.7 L825.2,336.9 L825.5,336.5 L825.8,336.6 L826,336.5 L826.2,336.7 L826.5,336.9 L826.8,337.1 L827,337.2 L827.2,337.6 L827.5,338.3 L827.8,338.7 L828,339.5 L828.2,340.6 L828.5,341.5 L828.8,342.9 L829,344.1 L829.2,344.9 L829.5,346.5 L829.8,347.9 L830,349 L830.2,350.7 L830.5,351.1 L830.8,349.5 L831,347.9 L831.2,346.9 L831.5,345.4 L831.8,344.1 L832,343 L832.2,341.6 L832.5,341 L832.8,339.8 L833,339 L833.2,338.2 L833.5,338.1 L833.8,337.2 L834,337.2 L834.2,336.9 L834.5,336.6 L834.8,336.4 L835,336.4 L835.2,336.5 L835.5,336.8 L835.8,337 L836,337.3 L836.2,337.4 L836.5,337.8 L836.8,338.6 L837,339.5 L837.2,340.4 L837.5,340.9 L837.8,342.2 L838,343.4 L838.2,344.4 L838.5,345.7 L838.8,347.1 L839,348.4 L839.2,349.9 L839.5,351.3 L839.8,349.8 L840,348.4 L840.2,347.3 L840.5,345.9 L840.8,344.4 L841,343.3 L841.2,342.1 L841.5,341.4 L841.8,340.3 L842,339.4 L842.2,338.5 L842.5,338.1 L842.8,337.6 L843,337.3 L843.2,336.7 L843.5,336.8 L843.8,336.7 L844,336.7 L844.2,336.7 L844.5,336.6 L844.8,336.7 L845,336.9 L845.2,337.6 L845.5,337.9 L845.8,338.6 L846,339 L846.2,339.8 L846.5,341 L846.8,341.6 L847,343.1 L847.2,344.3 L847.5,345.3 L847.8,346.8 L848,348.2 L848.2,349.6 L848.5,351 L848.8,350.7 L849,349.3 L849.2,347.9 L849.5,346.3 L849.8,344.9 L850,343.9 L850.2,342.4 L850.5,341.4 L850.8,340.4 L851,339.9 L851.2,338.9 L851.5,338.5 L851.8,337.9 L852,337.5 L852.2,337 L852.5,336.6 L852.8,336.7 L853,336.6 L853.2,336.7 L853.5,336.3 L853.8,336.8 L854,336.8 L854.2,337.1 L854.5,337.8 L854.8,338.1 L855,339 L855.2,339.5 L855.5,340.7 L855.8,341.3 L856,342.2 L856.2,343.6 L856.5,344.8 L856.8,345.9 L857,347.4 L857.2,348.9 L857.5,350.3 L857.8,351 L858,349.9 L858.2,348.3 L858.5,346.8 L858.8,345.4 L859,344.4 L859.2,343 L859.5,342.2 L859.8,341.1 L860,339.9 L860.2,339.3 L860.5,338.4 L860.8,338 L861,337.5 L861.2,337.3 L861.5,336.9 L861.8,336.4 L862,336.5 L862.2,336.7 L862.5,336.5 L862.8,336.4 L863,337 L863.2,337.2 L863.5,337.4 L863.8,338 L864,338.8 L864.2,339.4 L864.5,340 L864.8,340.9 L865,342.1 L865.2,342.9 L865.5,344.5 L865.8,345.4 L866,346.7 L866.2,348.2 L866.5,349.8 L866.8,351.4 L867,350.4 L867.2,348.6 L867.5,347.3 L867.8,346 L868,345 L868.2,343.4 L868.5,342.5 L868.8,341.6 L869,340.3 L869.2,339.7 L869.5,338.6 L869.8,338.3 L870,337.7 L870.2,337.5 L870.5,336.9 L870.8,336.7 L871,336.3 L871.2,336.6 L871.5,336.5 L871.8,336.7 L872,336.7 L872.2,337 L872.5,337.3 L872.8,337.7 L873,338.1 L873.2,338.9 L873.5,339.6 L873.8,340.4 L874,341.6 L874.2,342.5 L874.5,343.7 L874.8,345.1 L875,346.4 L875.2,347.7 L875.5,349.3 L875.8,350.6 L876,350.8 L876.2,349.6 L876.5,347.9 L876.8,346.7 L877,345.2 L877.2,343.9 L877.5,342.9 L877.8,342 L878,340.8 L878.2,340 L878.5,339.2 L878.8,338.3 L879,337.6 L879.2,337.3 L879.5,336.8 L879.8,336.7 L880,336.5 L880.2,336.6 L880.5,336.7 L880.8,336.4 L881,336.8 L881.2,336.6 L881.5,337.3 L881.8,337.6 L882,338.2 L882.2,338.6 L882.5,339.2 L882.8,340.3 L883,341.2 L883.2,342.4 L883.5,343.1 L883.8,344.7 L884,345.8 L884.2,347.3 L884.5,348.7 L884.8,350.2 L885,351.5 L885.2,350 L885.5,348.5 L885.8,347.4 L886,345.9 L886.2,344.4 L886.5,343.6 L886.8,342.3 L887,341 L887.2,340.1 L887.5,339.6 L887.8,338.5 L888,337.8 L888.2,337.5 L888.5,336.9 L888.8,336.8 L889,336.6 L889.2,336.8 L889.5,336.7 L889.8,336.3 L890,336.5 L890.2,337 L890.5,336.8 L890.8,337.4 L891,337.9 L891.2,338.6 L891.5,339.3 L891.8,339.8 L892,340.9 L892.2,341.9 L892.5,342.7 L892.8,344.1 L893,345.1 L893.2,346.9 L893.5,347.9 L893.8,349.5 L894,351.1 L894.2,350.8 L894.5,349.3 L894.8,347.8 L895,346.4 L895.2,345.3 L895.5,343.8 L895.8,342.8 L896,341.6 L896.2,340.6 L896.5,339.6 L896.8,339.1 L897,338.2 L897.2,337.6 L897.5,337.4 L897.8,336.9 L898,336.8 L898.2,336.5 L898.5,336.7 L898.8,336.3 L899,336.5 L899.2,336.5 L899.5,336.9 L899.8,337.1 L900,337.7" fill="none" stroke="#8aaa2a" stroke-width="1.15" stroke-linejoin="round" opacity="1"/><path d="M2,381.2 L2.2,378.4 L2.5,380 L2.8,382.6 L3,384 L3.2,385.5 L3.5,386.5 L3.8,386.8 L4,387.6 L4.2,387.6 L4.5,388 L4.8,387.9 L5,388 L5.2,388.1 L5.5,388 L5.8,388 L6,388.1 L6.2,388.1 L6.5,388.1 L6.8,388 L7,388.1 L7.2,388.2 L7.5,387.8 L7.8,388 L8,387.9 L8.2,387.9 L8.5,388.1 L8.8,387.9 L9,387.9 L9.2,387.8 L9.5,387.5 L9.8,387.3 L10,386.8 L10.2,385.9 L10.5,385.2 L10.8,383.6 L11,381.8 L11.2,379.5 L11.5,379 L11.8,381.3 L12,383.3 L12.2,384.9 L12.5,385.9 L12.8,386.7 L13,387.1 L13.2,387.6 L13.5,387.7 L13.8,387.8 L14,388.1 L14.2,387.8 L14.5,388.1 L14.8,387.8 L15,387.8 L15.2,387.8 L15.5,387.9 L15.8,387.8 L16,387.9 L16.2,388 L16.5,388 L16.8,388 L17,387.9 L17.2,388 L17.5,387.8 L17.8,388 L18,388.1 L18.2,387.8 L18.5,387.7 L18.8,387.6 L19,386.8 L19.2,386.6 L19.5,385.4 L19.8,384.2 L20,382.6 L20.2,380.2 L20.5,377.3 L20.8,380.2 L21,382.6 L21.2,384.1 L21.5,385.5 L21.8,386.4 L22,387 L22.2,387.5 L22.5,387.8 L22.8,387.7 L23,388 L23.2,388.1 L23.5,387.9 L23.8,387.7 L24,388 L24.2,388.1 L24.5,388 L24.8,388.2 L25,388.1 L25.2,387.9 L25.5,388.1 L25.8,388 L26,387.8 L26.2,387.9 L26.5,388.1 L26.8,388 L27,388.1 L27.2,387.7 L27.5,387.5 L27.8,387.5 L28,387 L28.2,386.5 L28.5,385.9 L28.8,384.8 L29,382.9 L29.2,381.1 L29.5,378.3 L29.8,378.8 L30,381.2 L30.2,383.3 L30.5,385 L30.8,386 L31,386.9 L31.2,387.1 L31.5,387.8 L31.8,387.9 L32,388.1 L32.2,387.8 L32.5,388.2 L32.8,388.2 L33,388 L33.2,388.1 L33.5,388.1 L33.8,388 L34,388 L34.2,388.1 L34.5,388 L34.8,388 L35,387.9 L35.2,388.2 L35.5,388.1 L35.8,387.9 L36,388.1 L36.2,387.9 L36.5,388 L36.8,387.6 L37,387.3 L37.2,386.7 L37.5,386.2 L37.8,384.9 L38,383.6 L38.2,381.4 L38.5,379.1 L38.8,377 L39,380.3 L39.2,382.6 L39.5,384.3 L39.8,385.6 L40,386.3 L40.2,386.9 L40.5,387.5 L40.8,387.9 L41,387.6 L41.2,387.9 L41.5,388.2 L41.8,387.8 L42,388.1 L42.2,387.8 L42.5,387.9 L42.8,388 L43,387.9 L43.2,387.9 L43.5,388.2 L43.8,387.9 L44,387.9 L44.2,388.2 L44.5,388 L44.8,387.9 L45,387.9 L45.2,388.1 L45.5,387.9 L45.8,387.9 L46,387.5 L46.2,386.9 L46.5,386.4 L46.8,385.2 L47,383.8 L47.2,382.2 L47.5,379.9 L47.8,376.6 L48,378.7 L48.2,381.4 L48.5,383.2 L48.8,385.1 L49,385.9 L49.2,386.8 L49.5,387.5 L49.8,387.8 L50,388 L50.2,388.1 L50.5,387.7 L50.8,388.1 L51,388.1 L51.2,387.9 L51.5,387.9 L51.8,388.2 L52,388.1 L52.2,388 L52.5,387.9 L52.8,388.2 L53,388.2 L53.2,388.2 L53.5,388.1 L53.8,388.2 L54,388.2 L54.2,388.1 L54.5,387.8 L54.8,388 L55,387.3 L55.2,387.4 L55.5,386.7 L55.8,385.6 L56,384.5 L56.2,382.8 L56.5,380.6 L56.8,377.6 L57,377 L57.2,379.9 L57.5,382.6 L57.8,384.4 L58,385.6 L58.2,386.4 L58.5,387.2 L58.8,387.5 L59,387.8 L59.2,387.7 L59.5,388.1 L59.8,388 L60,388.1 L60.2,388.2 L60.5,388 L60.8,388 L61,388 L61.2,388.2 L61.5,388 L61.8,388 L62,387.8 L62.2,387.8 L62.5,387.8 L62.8,387.9 L63,387.8 L63.2,388 L63.5,388 L63.8,387.9 L64,387.9 L64.2,387.3 L64.5,387 L64.8,386 L65,385.1 L65.2,383.5 L65.5,381.5 L65.8,378.9 L66,375.4 L66.2,378.7 L66.5,381.2 L66.8,383.7 L67,384.9 L67.2,386 L67.5,386.6 L67.8,387.4 L68,387.7 L68.2,388.1 L68.5,388 L68.8,387.8 L69,388.1 L69.2,388.2 L69.5,388.2 L69.8,387.9 L70,388 L70.2,388 L70.5,387.9 L70.8,388.2 L71,388.1 L71.2,387.9 L71.5,388.1 L71.8,388.2 L72,387.9 L72.2,388.2 L72.5,388 L72.8,387.9 L73,387.8 L73.2,387.3 L73.5,387.2 L73.8,386.2 L74,385.6 L74.2,384 L74.5,381.9 L74.8,379.5 L75,376.4 L75.2,377 L75.5,380 L75.8,382.6 L76,384.2 L76.2,385.8 L76.5,386.6 L76.8,387.3 L77,387.6 L77.2,387.9 L77.5,387.9 L77.8,387.8 L78,387.9 L78.2,387.8 L78.5,388.1 L78.8,388 L79,387.9 L79.2,388 L79.5,387.8 L79.8,388.2 L80,388 L80.2,388.2 L80.5,387.8 L80.8,388 L81,388 L81.2,388.2 L81.5,387.8 L81.8,388 L82,387.8 L82.2,387.5 L82.5,387 L82.8,386.5 L83,385.6 L83.2,384.7 L83.5,382.8 L83.8,380.3 L84,377.3 L84.2,375.4 L84.5,378.8 L84.8,381.4 L85,383.7 L85.2,385.2 L85.5,386 L85.8,386.8 L86,387.6 L86.2,387.9 L86.5,387.6 L86.8,387.9 L87,388.1 L87.2,387.9 L87.5,388.2 L87.8,388.2 L88,387.8 L88.2,388 L88.5,387.8 L88.8,387.8 L89,388.2 L89.2,387.9 L89.5,388.2 L89.8,388 L90,387.8 L90.2,387.8 L90.5,388.2 L90.8,387.7 L91,388 L91.2,387.6 L91.5,387.4 L91.8,386.6 L92,386 L92.2,384.8 L92.5,383.2 L92.8,381.3 L93,378.4 L93.2,375 L93.5,377.3 L93.8,380.4 L94,382.8 L94.2,384.6 L94.5,385.5 L94.8,386.7 L95,387.2 L95.2,387.7 L95.5,387.9 L95.8,387.7 L96,388 L96.2,387.7 L96.5,388 L96.8,388.2 L97,388.2 L97.2,388.1 L97.5,388 L97.8,388 L98,388.2 L98.2,387.8 L98.5,387.9 L98.8,388 L99,388.1 L99.2,387.8 L99.5,387.8 L99.8,387.9 L100,387.7 L100.2,387.8 L100.5,387.4 L100.8,387 L101,386.3 L101.2,385.5 L101.5,384.1 L101.8,382.1 L102,379.5 L102.2,376.3 L102.5,375.4 L102.8,378.6 L103,381.5 L103.2,383.5 L103.5,385.3 L103.8,386.2 L104,387.1 L104.2,387.5 L104.5,387.7 L104.8,388 L105,387.9 L105.2,388 L105.5,388 L105.8,387.9 L106,387.8 L106.2,388 L106.5,388.1 L106.8,387.8 L107,387.9 L107.2,388.1 L107.5,388 L107.8,387.8 L108,387.8 L108.2,388.1 L108.5,387.9 L108.8,387.8 L109,387.9 L109.2,388 L109.5,387.4 L109.8,387 L110,386.7 L110.2,385.6 L110.5,384.6 L110.8,382.8 L111,380.6 L111.2,377.1 L111.5,373.2 L111.8,377.1 L112,380.4 L112.2,382.7 L112.5,384.6 L112.8,385.6 L113,386.8 L113.2,387.4 L113.5,387.4 L113.8,388 L114,387.7 L114.2,387.7 L114.5,388 L114.8,387.8 L115,388 L115.2,387.8 L115.5,388 L115.8,388 L116,388.2 L116.2,388 L116.5,387.9 L116.8,387.8 L117,387.8 L117.2,388 L117.5,388.2 L117.8,387.8 L118,388 L118.2,387.9 L118.5,387.7 L118.8,387.3 L119,386.8 L119.2,386.1 L119.5,385 L119.8,383.6 L120,381 L120.2,378.2 L120.5,374.5 L120.8,375.5 L121,379.1 L121.2,381.9 L121.5,383.7 L121.8,385.4 L122,386.4 L122.2,386.8 L122.5,387.4 L122.8,387.8 L123,387.9 L123.2,388.2 L123.5,387.8 L123.8,388.2 L124,388 L124.2,388 L124.5,388.2 L124.8,388 L125,387.9 L125.2,388 L125.5,388.2 L125.8,388 L126,388.1 L126.2,388.2 L126.5,387.9 L126.8,388 L127,388.2 L127.2,387.8 L127.5,387.6 L127.8,387.3 L128,386.9 L128.2,386.3 L128.5,385.2 L128.8,384.2 L129,382.1 L129.2,379.4 L129.5,375.7 L129.8,373.3 L130,377.4 L130.2,380.4 L130.5,383 L130.8,384.7 L131,385.9 L131.2,386.5 L131.5,387.3 L131.8,387.4 L132,387.8 L132.2,388 L132.5,387.8 L132.8,388 L133,388 L133.2,387.8 L133.5,388.2 L133.8,387.8 L134,387.8 L134.2,388.1 L134.5,388 L134.8,388.1 L135,387.8 L135.2,388.1 L135.5,388.2 L135.8,388 L136,388.2 L136.2,388 L136.5,388 L136.8,387.4 L137,387.3 L137.2,386.7 L137.5,385.9 L137.8,384.6 L138,383 L138.2,380.6 L138.5,377.1 L138.8,372.9 L139,375.5 L139.2,379 L139.5,382 L139.8,383.7 L140,385.5 L140.2,386.5 L140.5,386.9 L140.8,387.3 L141,387.5 L141.2,387.6 L141.5,387.9 L141.8,388 L142,388.2 L142.2,388 L142.5,388.2 L142.8,388 L143,387.9 L143.2,388.1 L143.5,388 L143.8,387.9 L144,388 L144.2,387.8 L144.5,387.9 L144.8,388.1 L145,387.8 L145.2,388 L145.5,387.9 L145.8,387.7 L146,387.4 L146.2,386.7 L146.5,386.4 L146.8,384.9 L147,383.3 L147.2,381.2 L147.5,378.4 L147.8,374.5 L148,373.7 L148.2,377.4 L148.5,380.7 L148.8,383.1 L149,384.6 L149.2,385.8 L149.5,386.8 L149.8,387.3 L150,387.5 L150.2,387.6 L150.5,387.7 L150.8,388.2 L151,388.1 L151.2,388.2 L151.5,387.8 L151.8,388 L152,388.2 L152.2,388.2 L152.5,388 L152.8,387.9 L153,388 L153.2,388.1 L153.5,387.9 L153.8,387.8 L154,387.9 L154.2,387.8 L154.5,387.9 L154.8,387.7 L155,387.3 L155.2,387.2 L155.5,386.5 L155.8,385.5 L156,384.1 L156.2,381.9 L156.5,379.3 L156.8,375.9 L157,371 L157.2,375.8 L157.5,379.5 L157.8,382.2 L158,384.3 L158.2,385.3 L158.5,386.5 L158.8,387 L159,387.5 L159.2,387.8 L159.5,388 L159.8,387.9 L160,388 L160.2,388.2 L160.5,388 L160.8,387.9 L161,388.2 L161.2,388 L161.5,387.8 L161.8,388 L162,387.8 L162.2,387.8 L162.5,388 L162.8,387.7 L163,388.2 L163.2,388.1 L163.5,387.7 L163.8,387.7 L164,387.7 L164.2,387.3 L164.5,387 L164.8,385.9 L165,384.7 L165.2,383 L165.5,380.5 L165.8,377.2 L166,373.1 L166.2,373.9 L166.5,378 L166.8,380.9 L167,383.3 L167.2,384.8 L167.5,386 L167.8,386.8 L168,387.2 L168.2,387.9 L168.5,387.8 L168.8,388 L169,388.2 L169.2,388 L169.5,387.8 L169.8,388.2 L170,387.9 L170.2,387.9 L170.5,387.9 L170.8,388.1 L171,388.2 L171.2,387.9 L171.5,388.1 L171.8,388.2 L172,388 L172.2,388 L172.5,387.7 L172.8,387.9 L173,387.6 L173.2,387.5 L173.5,387.2 L173.8,386.4 L174,385.2 L174.2,383.6 L174.5,381.5 L174.8,378.1 L175,374.5 L175.2,371.3 L175.5,375.9 L175.8,379.5 L176,382.2 L176.2,384.2 L176.5,385.6 L176.8,386.4 L177,387.3 L177.2,387.6 L177.5,387.9 L177.8,388 L178,387.8 L178.2,387.9 L178.5,387.8 L178.8,388 L179,388.1 L179.2,388.2 L179.5,388 L179.8,388.1 L180,387.8 L180.2,387.9 L180.5,387.9 L180.8,388 L181,387.9 L181.2,387.8 L181.5,387.7 L181.8,387.7 L182,387.6 L182.2,387.5 L182.5,387.3 L182.8,386.7 L183,385.8 L183.2,383.9 L183.5,382 L183.8,379.4 L184,376 L184.2,371.1 L184.5,374 L184.8,378.3 L185,381.1 L185.2,383.2 L185.5,384.9 L185.8,386.1 L186,386.7 L186.2,387.6 L186.5,387.5 L186.8,387.9 L187,387.9 L187.2,388 L187.5,387.8 L187.8,387.8 L188,388 L188.2,388.2 L188.5,388.2 L188.8,387.8 L189,388.2 L189.2,388.2 L189.5,388 L189.8,388 L190,388.2 L190.2,387.9 L190.5,387.8 L190.8,387.9 L191,387.9 L191.2,387.5 L191.5,387.4 L191.8,386.9 L192,385.9 L192.2,384.5 L192.5,383.1 L192.8,380.6 L193,377 L193.2,372.8 L193.5,371.9 L193.8,376.5 L194,379.9 L194.2,382.7 L194.5,384.6 L194.8,385.6 L195,386.5 L195.2,387 L195.5,387.5 L195.8,387.8 L196,388 L196.2,388.1 L196.5,388.1 L196.8,388.2 L197,388.2 L197.2,388.2 L197.5,388 L197.8,388.2 L198,388 L198.2,387.8 L198.5,387.8 L198.8,388.2 L199,387.9 L199.2,387.9 L199.5,388.2 L199.8,388.1 L200,388 L200.2,388 L200.5,387.6 L200.8,387.2 L201,386.2 L201.2,385.3 L201.5,383.4 L201.8,381.6 L202,378.6 L202.2,374.2 L202.5,369.2 L202.8,374.5 L203,378.5 L203.2,381.4 L203.5,383.5 L203.8,385.2 L204,386.1 L204.2,386.9 L204.5,387.5 L204.8,387.6 L205,387.9 L205.2,388.1 L205.5,388 L205.8,388.2 L206,388.1 L206.2,388.1 L206.5,388.2 L206.8,388 L207,388.1 L207.2,388.2 L207.5,387.9 L207.8,388 L208,387.9 L208.2,388 L208.5,387.9 L208.8,388 L209,387.7 L209.2,388 L209.5,387.7 L209.8,387.4 L210,386.3 L210.2,385.3 L210.5,384.1 L210.8,382 L211,379 L211.2,375.3 L211.5,370.6 L211.8,371.4 L212,376.2 L212.2,379.5 L212.5,382.3 L212.8,384.4 L213,385.8 L213.2,386.9 L213.5,387.1 L213.8,387.6 L214,387.8 L214.2,388 L214.5,388.2 L214.8,388.1 L215,388 L215.2,388.1 L215.5,388.2 L215.8,387.8 L216,387.9 L216.2,387.9 L216.5,387.9 L216.8,388.2 L217,388 L217.2,388.1 L217.5,388 L217.8,387.8 L218,387.9 L218.2,388 L218.5,387.6 L218.8,387.4 L219,387 L219.2,386.2 L219.5,384.6 L219.8,382.7 L220,380.2 L220.2,377.1 L220.5,372.3 L220.8,369 L221,374.2 L221.2,378.6 L221.5,381.2 L221.8,383.6 L222,385.1 L222.2,386.6 L222.5,387 L222.8,387.6 L223,388 L223.2,387.7 L223.5,387.8 L223.8,388.1 L224,387.8 L224.2,388 L224.5,387.9 L224.8,387.9 L225,388.2 L225.2,387.9 L225.5,388.1 L225.8,387.8 L226,388 L226.2,388.1 L226.5,388.1 L226.8,387.9 L227,387.8 L227.2,388 L227.5,387.8 L227.8,387.3 L228,387.2 L228.2,386.5 L228.5,385.2 L228.8,383.4 L229,381.6 L229.2,378.4 L229.5,374.5 L229.8,369.4 L230,372.5 L230.2,376.9 L230.5,380.3 L230.8,383 L231,384.6 L231.2,386 L231.5,386.7 L231.8,387.6 L232,387.7 L232.2,387.6 L232.5,387.9 L232.8,387.9 L233,387.8 L233.2,387.9 L233.5,388.2 L233.8,387.9 L234,387.8 L234.2,388 L234.5,388.2 L234.8,388 L235,387.8 L235.2,388.1 L235.5,388 L235.8,388 L236,388.2 L236.2,388 L236.5,388.1 L236.8,387.7 L237,387.1 L237.2,386.4 L237.5,385.6 L237.8,384.6 L238,382.5 L238.2,379.7 L238.5,376.3 L238.8,371.6 L239,370.5 L239.2,375.2 L239.5,379.3 L239.8,382.1 L240,384.2 L240.2,385.6 L240.5,386.4 L240.8,387.4 L241,387.6 L241.2,387.8 L241.5,388.1 L241.8,388 L242,388.1 L242.2,387.8 L242.5,388 L242.8,387.9 L243,388.1 L243.2,387.9 L243.5,387.9 L243.8,387.8 L244,388 L244.2,387.8 L244.5,388.2 L244.8,388.2 L245,387.7 L245.2,387.8 L245.5,387.8 L245.8,387.8 L246,387.6 L246.2,386.9 L246.5,386.2 L246.8,385.2 L247,383 L247.2,380.7 L247.5,377.6 L247.8,373.5 L248,367.9 L248.2,373.4 L248.5,377.7 L248.8,381.1 L249,383.1 L249.2,385 L249.5,386.1 L249.8,387.1 L250,387.3 L250.2,387.8 L250.5,387.7 L250.8,387.7 L251,388 L251.2,387.9 L251.5,387.8 L251.8,388.2 L252,387.8 L252.2,387.8 L252.5,387.9 L252.8,387.9 L253,387.8 L253.2,387.8 L253.5,388.2 L253.8,387.8 L254,387.8 L254.2,388 L254.5,387.8 L254.8,388 L255,387.6 L255.2,387.3 L255.5,386.3 L255.8,385.5 L256,384 L256.2,382 L256.5,379.3 L256.8,375.2 L257,370.1 L257.2,371.4 L257.5,376.1 L257.8,379.7 L258,382.2 L258.2,384.3 L258.5,385.6 L258.8,386.6 L259,387.1 L259.2,387.6 L259.5,387.6 L259.8,388 L260,388.1 L260.2,387.8 L260.5,388.1 L260.8,387.9 L261,387.9 L261.2,388.2 L261.5,387.8 L261.8,388.2 L262,388 L262.2,388 L262.5,388.1 L262.8,388.1 L263,388 L263.2,388.2 L263.5,387.8 L263.8,387.9 L264,387.5 L264.2,387.4 L264.5,386.9 L264.8,386.2 L265,384.9 L265.2,382.7 L265.5,380.2 L265.8,376.8 L266,372.6 L266.2,369.4 L266.5,374.5 L266.8,378.4 L267,381.3 L267.2,383.5 L267.5,385.4 L267.8,386.2 L268,387 L268.2,387.2 L268.5,387.9 L268.8,387.6 L269,388 L269.2,388.1 L269.5,388.1 L269.8,387.9 L270,388.1 L270.2,387.8 L270.5,387.9 L270.8,387.9 L271,387.8 L271.2,388 L271.5,388.2 L271.8,388 L272,387.9 L272.2,388 L272.5,388.2 L272.8,387.7 L273,387.9 L273.2,387.4 L273.5,387 L273.8,386.1 L274,385.5 L274.2,383.8 L274.5,381.6 L274.8,378.2 L275,374.3 L275.2,369.1 L275.5,372.4 L275.8,377 L276,380.5 L276.2,382.9 L276.5,384.5 L276.8,385.9 L277,386.9 L277.2,387.2 L277.5,387.7 L277.8,387.9 L278,387.7 L278.2,387.7 L278.5,388.1 L278.8,388.1 L279,388.1 L279.2,388.2 L279.5,388.1 L279.8,388 L280,388.2 L280.2,388.2 L280.5,388.2 L280.8,388.2 L281,387.8 L281.2,388.2 L281.5,387.8 L281.8,387.9 L282,387.6 L282.2,387.5 L282.5,387.1 L282.8,386.4 L283,385.6 L283.2,384.3 L283.5,382.2 L283.8,379.8 L284,376.2 L284.2,371.5 L284.5,370.2 L284.8,375.4 L285,379 L285.2,382 L285.5,384.2 L285.8,385.7 L286,386.7 L286.2,387 L286.5,387.6 L286.8,387.6 L287,387.9 L287.2,388.1 L287.5,388.2 L287.8,387.8 L288,388.1 L288.2,387.9 L288.5,387.8 L288.8,388 L289,388 L289.2,388 L289.5,388.2 L289.8,388.2 L290,387.8 L290.2,388.2 L290.5,388.2 L290.8,388.2 L291,388 L291.2,387.7 L291.5,387.4 L291.8,386.9 L292,386.3 L292.2,385.1 L292.5,383.3 L292.8,381.1 L293,377.8 L293.2,373.3 L293.5,368.2 L293.8,373.6 L294,377.8 L294.2,381 L294.5,383.4 L294.8,385.2 L295,386.1 L295.2,386.8 L295.5,387.2 L295.8,387.7 L296,387.7 L296.2,387.9 L296.5,387.9 L296.8,387.8 L297,387.8 L297.2,388.2 L297.5,387.8 L297.8,388.1 L298,388 L298.2,388.1 L298.5,388.2 L298.8,388.2 L299,388.1 L299.2,388 L299.5,388 L299.8,387.8 L300,387.7 L300.2,387.6 L300.5,387.4 L300.8,387.1 L301,386.6 L301.2,385.4 L301.5,384 L301.8,381.8 L302,379 L302.2,375 L302.5,370.2 L302.8,371.4 L303,376.3 L303.2,379.6 L303.5,382.3 L303.8,384.4 L304,385.9 L304.2,386.7 L304.5,387.2 L304.8,387.7 L305,388 L305.2,387.8 L305.5,388 L305.8,387.9 L306,388.1 L306.2,388 L306.5,387.9 L306.8,388 L307,388 L307.2,388.1 L307.5,387.8 L307.8,387.8 L308,387.8 L308.2,387.8 L308.5,388.1 L308.8,387.8 L309,388.1 L309.2,388 L309.5,387.7 L309.8,387.4 L310,386.9 L310.2,386 L310.5,384.7 L310.8,382.8 L311,380.4 L311.2,376.7 L311.5,372.4 L311.8,368.9 L312,374.6 L312.2,378.2 L312.5,381.4 L312.8,383.7 L313,385.2 L313.2,386.2 L313.5,387.1 L313.8,387.4 L314,387.5 L314.2,388 L314.5,387.8 L314.8,387.9 L315,388.1 L315.2,388.2 L315.5,388.1 L315.8,388.2 L316,387.9 L316.2,388 L316.5,388.2 L316.8,387.8 L317,387.9 L317.2,388.1 L317.5,387.9 L317.8,387.8 L318,387.7 L318.2,388.1 L318.5,387.8 L318.8,387.4 L319,387.3 L319.2,386.4 L319.5,385.4 L319.8,383.5 L320,381.6 L320.2,378.3 L320.5,374.6 L320.8,369 L321,372.3 L321.2,376.8 L321.5,380.4 L321.8,382.9 L322,384.9 L322.2,386 L322.5,386.7 L322.8,387.4 L323,387.7 L323.2,388 L323.5,388.1 L323.8,387.9 L324,388 L324.2,387.9 L324.5,388 L324.8,388.1 L325,388 L325.2,387.8 L325.5,388.1 L325.8,388.2 L326,387.8 L326.2,388.1 L326.5,388.1 L326.8,388 L327,387.9 L327.2,387.9 L327.5,387.7 L327.8,387.5 L328,387.4 L328.2,386.7 L328.5,385.7 L328.8,384.5 L329,382.5 L329.2,380 L329.5,376 L329.8,371.4 L330,370.3 L330.2,375.2 L330.5,379.3 L330.8,382 L331,384.3 L331.2,385.6 L331.5,386.7 L331.8,387.3 L332,387.7 L332.2,387.9 L332.5,387.8 L332.8,387.8 L333,388 L333.2,388.1 L333.5,387.9 L333.8,388 L334,387.9 L334.2,388 L334.5,387.9 L334.8,388.2 L335,387.9 L335.2,387.8 L335.5,388 L335.8,388 L336,388.2 L336.2,387.8 L336.5,387.7 L336.8,387.7 L337,387.3 L337.2,386.9 L337.5,386.3 L337.8,384.8 L338,383.3 L338.2,381.1 L338.5,377.6 L338.8,373.5 L339,367.8 L339.2,373.4 L339.5,377.5 L339.8,380.7 L340,383.1 L340.2,385.1 L340.5,385.9 L340.8,387.1 L341,387.5 L341.2,387.9 L341.5,388 L341.8,387.7 L342,388 L342.2,387.9 L342.5,387.9 L342.8,387.8 L343,387.8 L343.2,387.9 L343.5,388.1 L343.8,388 L344,388.1 L344.2,387.9 L344.5,388 L344.8,388 L345,388 L345.2,387.7 L345.5,387.7 L345.8,387.7 L346,387.6 L346.2,387.1 L346.5,386.4 L346.8,385.8 L347,384.3 L347.2,381.8 L347.5,379.3 L347.8,375.3 L348,370.1 L348.2,371.2 L348.5,375.9 L348.8,379.9 L349,382.2 L349.2,384.3 L349.5,385.6 L349.8,386.7 L350,387.4 L350.2,387.7 L350.5,387.7 L350.8,388.1 L351,388.1 L351.2,388 L351.5,388.2 L351.8,387.9 L352,387.9 L352.2,388.1 L352.5,388 L352.8,387.8 L353,387.9 L353.2,387.8 L353.5,387.8 L353.8,387.9 L354,388.2 L354.2,388.1 L354.5,388 L354.8,387.9 L355,387.9 L355.2,387.3 L355.5,386.6 L355.8,385.9 L356,384.6 L356.2,382.7 L356.5,380.3 L356.8,376.7 L357,372.6 L357.2,369.4 L357.5,374.1 L357.8,378.6 L358,381.5 L358.2,383.6 L358.5,385.3 L358.8,386.4 L359,387.1 L359.2,387.7 L359.5,387.9 L359.8,387.6 L360,388.1 L360.2,387.8 L360.5,388.1 L360.8,388 L361,387.8 L361.2,388.2 L361.5,387.9 L361.8,387.8 L362,388 L362.2,388 L362.5,388.1 L362.8,388 L363,388 L363.2,388.2 L363.5,387.8 L363.8,387.7 L364,387.8 L364.2,387.4 L364.5,387.3 L364.8,386.4 L365,385.1 L365.2,383.6 L365.5,381.4 L365.8,378.6 L366,374.1 L366.2,369.2 L366.5,372.5 L366.8,377 L367,380.2 L367.2,382.8 L367.5,384.6 L367.8,386.1 L368,386.8 L368.2,387.6 L368.5,387.5 L368.8,387.6 L369,388 L369.2,388 L369.5,387.9 L369.8,388 L370,387.8 L370.2,387.9 L370.5,388.1 L370.8,388.1 L371,388 L371.2,388.1 L371.5,388.2 L371.8,388.1 L372,388.2 L372.2,387.8 L372.5,387.9 L372.8,387.8 L373,388 L373.2,387.4 L373.5,387.5 L373.8,386.6 L374,385.6 L374.2,384.6 L374.5,382.2 L374.8,379.7 L375,376 L375.2,371.2 L375.5,370.3 L375.8,375.3 L376,379.1 L376.2,382.1 L376.5,384.3 L376.8,385.3 L377,386.4 L377.2,387.1 L377.5,387.4 L377.8,387.6 L378,387.9 L378.2,388 L378.5,388.1 L378.8,387.8 L379,388.2 L379.2,387.9 L379.5,388.1 L379.8,387.9 L380,388 L380.2,388.1 L380.5,388.1 L380.8,388.2 L381,387.9 L381.2,388 L381.5,388.2 L381.8,387.8 L382,387.7 L382.2,387.8 L382.5,387.3 L382.8,386.8 L383,386.2 L383.2,385 L383.5,383.2 L383.8,380.7 L384,377.7 L384.2,373.3 L384.5,368 L384.8,373.6 L385,377.8 L385.2,380.9 L385.5,383.5 L385.8,385.2 L386,386.3 L386.2,387.1 L386.5,387.4 L386.8,387.5 L387,388.1 L387.2,387.8 L387.5,387.9 L387.8,387.9 L388,388.1 L388.2,387.9 L388.5,388.1 L388.8,387.8 L389,388 L389.2,387.8 L389.5,387.9 L389.8,388.1 L390,388.2 L390.2,388.1 L390.5,388.2 L390.8,388.2 L391,387.8 L391.2,387.9 L391.5,387.8 L391.8,387.7 L392,387 L392.2,387 L392.5,385.9 L392.8,385 L393,383.5 L393.2,381.8 L393.5,379.4 L393.8,379.9 L394,382.3 L394.2,383.9 L394.5,385.5 L394.8,386 L395,386.8 L395.2,387.2 L395.5,387.9 L395.8,387.6 L396,387.8 L396.2,387.8 L396.5,387.8 L396.8,387.9 L397,387.8 L397.2,387.9 L397.5,387.8 L397.8,387.9 L398,388.2 L398.2,387.8 L398.5,388 L398.8,388.1 L399,388 L399.2,387.9 L399.5,387.8 L399.8,388.1 L400,387.9 L400.2,387.9 L400.5,387.9 L400.8,387.9 L401,387.4 L401.2,386.9 L401.5,386.3 L401.8,385.4 L402,384.5 L402.2,382.8 L402.5,380.5 L402.8,379 L403,381.6 L403.2,383.2 L403.5,385.1 L403.8,386.1 L404,386.8 L404.2,387 L404.5,387.4 L404.8,387.8 L405,387.9 L405.2,387.9 L405.5,388.1 L405.8,388 L406,388.2 L406.2,387.8 L406.5,388.1 L406.8,388 L407,387.9 L407.2,388.1 L407.5,388.2 L407.8,387.9 L408,388 L408.2,387.9 L408.5,387.8 L408.8,387.9 L409,388 L409.2,387.9 L409.5,387.7 L409.8,387.9 L410,387.8 L410.2,387.1 L410.5,386.5 L410.8,386 L411,384.8 L411.2,383.5 L411.5,381.4 L411.8,378.9 L412,380.6 L412.2,382.8 L412.5,384.4 L412.8,385.5 L413,386.6 L413.2,387 L413.5,387.6 L413.8,387.8 L414,388 L414.2,387.8 L414.5,388.1 L414.8,388 L415,388.1 L415.2,388.2 L415.5,388.2 L415.8,388.1 L416,388.2 L416.2,387.8 L416.5,387.9 L416.8,388.1 L417,388.2 L417.2,388 L417.5,387.8 L417.8,388 L418,388 L418.2,388.1 L418.5,387.8 L418.8,387.9 L419,387.6 L419.2,387.4 L419.5,387.2 L419.8,386.2 L420,385.5 L420.2,384 L420.5,382.3 L420.8,380.5 L421,379.9 L421.2,382.4 L421.5,384 L421.8,385.3 L422,386.4 L422.2,387 L422.5,387.3 L422.8,387.7 L423,387.6 L423.2,388.1 L423.5,388 L423.8,388 L424,387.8 L424.2,388.2 L424.5,387.8 L424.8,388 L425,387.9 L425.2,388.1 L425.5,388.1 L425.8,388.2 L426,387.8 L426.2,388 L426.5,387.8 L426.8,387.8 L427,388 L427.2,387.9 L427.5,388.1 L427.8,387.9 L428,387.8 L428.2,387.3 L428.5,386.9 L428.8,386.7 L429,385.9 L429.2,384.8 L429.5,383.4 L429.8,381.6 L430,378.9 L430.2,381.4 L430.5,383.5 L430.8,384.7 L431,385.8 L431.2,386.7 L431.5,387.2 L431.8,387.4 L432,387.6 L432.2,387.9 L432.5,387.8 L432.8,388 L433,388.2 L433.2,388.1 L433.5,387.8 L433.8,388.2 L434,388.2 L434.2,388.2 L434.5,388.1 L434.8,388.2 L435,387.9 L435.2,387.9 L435.5,388.2 L435.8,387.9 L436,388.1 L436.2,388.1 L436.5,387.9 L436.8,387.7 L437,387.6 L437.2,387.5 L437.5,387.1 L437.8,387 L438,386.2 L438.2,385.3 L438.5,384.1 L438.8,382.5 L439,380.4 L439.2,380.7 L439.5,382.7 L439.8,384.5 L440,385.5 L440.2,386.2 L440.5,386.9 L440.8,387.2 L441,387.5 L441.2,387.7 L441.5,388.1 L441.8,388.2 L442,388 L442.2,388 L442.5,388.1 L442.8,388.2 L443,387.8 L443.2,388.1 L443.5,388.1 L443.8,387.9 L444,387.9 L444.2,388.2 L444.5,388 L444.8,388.2 L445,388.2 L445.2,387.8 L445.5,387.9 L445.8,388.1 L446,387.9 L446.2,387.7 L446.5,387.4 L446.8,387.2 L447,386.7 L447.2,385.7 L447.5,384.5 L447.8,383 L448,381.5 L448.2,379.8 L448.5,382.4 L448.8,383.7 L449,385.1 L449.2,385.9 L449.5,386.9 L449.8,387 L450,387.6 L450.2,387.6 L450.5,388.1 L450.8,387.8 L451,388.1 L451.2,388 L451.5,388.1 L451.8,388 L452,388.1 L452.2,387.9 L452.5,387.8 L452.8,387.9 L453,388 L453.2,387.8 L453.5,387.8 L453.8,387.9 L454,388.1 L454.2,387.8 L454.5,387.9 L454.8,387.8 L455,387.8 L455.2,387.9 L455.5,387.6 L455.8,387.1 L456,386.8 L456.2,386.3 L456.5,385.1 L456.8,383.9 L457,382.2 L457.2,380.3 L457.5,381.3 L457.8,383.5 L458,385 L458.2,385.7 L458.5,386.5 L458.8,386.9 L459,387.3 L459.2,387.7 L459.5,388 L459.8,388 L460,387.8 L460.2,388.1 L460.5,388 L460.8,388.2 L461,388 L461.2,387.9 L461.5,388.2 L461.8,387.9 L462,388.2 L462.2,388.2 L462.5,387.8 L462.8,388.2 L463,388 L463.2,388.2 L463.5,388.2 L463.8,387.8 L464,387.7 L464.2,387.7 L464.5,387.6 L464.8,387.7 L465,387.1 L465.2,386.5 L465.5,385.7 L465.8,384.6 L466,382.9 L466.2,381.4 L466.5,381 L466.8,382.9 L467,384.2 L467.2,385.7 L467.5,386.3 L467.8,387 L468,387.2 L468.2,387.7 L468.5,387.8 L468.8,388.1 L469,388.1 L469.2,388.2 L469.5,388.1 L469.8,388.1 L470,388.1 L470.2,388 L470.5,388.2 L470.8,388.2 L471,388.1 L471.2,387.8 L471.5,387.9 L471.8,387.9 L472,388.2 L472.2,388 L472.5,388.1 L472.8,388.1 L473,388 L473.2,387.9 L473.5,388 L473.8,387.7 L474,387.4 L474.2,386.9 L474.5,386 L474.8,385.1 L475,383.7 L475.2,382 L475.5,380 L475.8,382.3 L476,383.9 L476.2,385.1 L476.5,386 L476.8,386.9 L477,387.1 L477.2,387.8 L477.5,387.7 L477.8,388.1 L478,388 L478.2,388.1 L478.5,388.1 L478.8,387.9 L479,388.2 L479.2,388.1 L479.5,388 L479.8,387.9 L480,388 L480.2,388 L480.5,387.8 L480.8,388 L481,387.9 L481.2,387.9 L481.5,387.9 L481.8,387.9 L482,387.9 L482.2,387.8 L482.5,388 L482.8,387.5 L483,387.6 L483.2,387.2 L483.5,386.4 L483.8,385.9 L484,384.6 L484.2,382.8 L484.5,381.3 L484.8,381.8 L485,383.5 L485.2,384.8 L485.5,385.9 L485.8,386.5 L486,386.9 L486.2,387.5 L486.5,387.5 L486.8,388 L487,387.9 L487.2,387.7 L487.5,388.1 L487.8,388.1 L488,387.8 L488.2,387.9 L488.5,387.9 L488.8,388.2 L489,387.9 L489.2,388.2 L489.5,388.2 L489.8,388.1 L490,388.1 L490.2,387.9 L490.5,388.2 L490.8,388.2 L491,388.1 L491.2,387.9 L491.5,387.7 L491.8,387.7 L492,387.4 L492.2,387.1 L492.5,386.5 L492.8,386.1 L493,385.3 L493.2,383.6 L493.5,382.3 L493.8,380.7 L494,382.9 L494.2,384.4 L494.5,385.3 L494.8,386.3 L495,386.9 L495.2,387.2 L495.5,387.7 L495.8,387.7 L496,387.8 L496.2,387.8 L496.5,388.1 L496.8,387.9 L497,387.9 L497.2,388.2 L497.5,388 L497.8,388.2 L498,388.1 L498.2,388 L498.5,387.9 L498.8,388.1 L499,388.2 L499.2,388.1 L499.5,388 L499.8,388.1 L500,387.8 L500.2,388.1 L500.5,387.7 L500.8,387.9 L501,387.5 L501.2,387.3 L501.5,387 L501.8,386.6 L502,385.7 L502.2,384.4 L502.5,383.3 L502.8,381.1 L503,382.3 L503.2,383.8 L503.5,385.1 L503.8,386.1 L504,386.6 L504.2,387.5 L504.5,387.4 L504.8,387.6 L505,387.8 L505.2,387.8 L505.5,387.9 L505.8,388.2 L506,388.2 L506.2,387.9 L506.5,388.2 L506.8,388.1 L507,388.1 L507.2,387.8 L507.5,388.1 L507.8,388 L508,388.2 L508.2,388.1 L508.5,387.9 L508.8,387.9 L509,388 L509.2,387.8 L509.5,388.1 L509.8,387.6 L510,387.8 L510.2,387.4 L510.5,387 L510.8,386.7 L511,385.8 L511.2,385.2 L511.5,383.6 L511.8,382.1 L512,382 L512.2,383.2 L512.5,384.9 L512.8,386 L513,386.6 L513.2,387.1 L513.5,387.4 L513.8,387.9 L514,387.8 L514.2,387.8 L514.5,388 L514.8,387.8 L515,388.1 L515.2,387.8 L515.5,387.9 L515.8,387.8 L516,387.9 L516.2,388.1 L516.5,388.2 L516.8,388.2 L517,388 L517.2,388.2 L517.5,388 L517.8,387.8 L518,387.8 L518.2,387.8 L518.5,387.9 L518.8,387.9 L519,387.8 L519.2,387.4 L519.5,387.4 L519.8,386.9 L520,386.3 L520.2,385.6 L520.5,384.3 L520.8,383.1 L521,381.3 L521.2,382.9 L521.5,384.6 L521.8,385.3 L522,386.6 L522.2,386.7 L522.5,387.1 L522.8,387.8 L523,387.9 L523.2,387.9 L523.5,388.1 L523.8,387.8 L524,388.1 L524.2,388.2 L524.5,387.8 L524.8,387.9 L525,388.1 L525.2,388.2 L525.5,388.2 L525.8,387.9 L526,387.8 L526.2,388.2 L526.5,387.8 L526.8,387.8 L527,388 L527.2,388 L527.5,388.1 L527.8,387.8 L528,387.8 L528.2,387.7 L528.5,387.7 L528.8,387.1 L529,386.8 L529.2,385.9 L529.5,385 L529.8,383.7 L530,382.3 L530.2,382.7 L530.5,383.9 L530.8,385.3 L531,386.2 L531.2,386.7 L531.5,387.2 L531.8,387.4 L532,387.8 L532.2,387.7 L532.5,388 L532.8,388.1 L533,388.1 L533.2,387.9 L533.5,387.9 L533.8,387.9 L534,387.8 L534.2,388.1 L534.5,388 L534.8,388.1 L535,388.1 L535.2,388.2 L535.5,388.1 L535.8,388.1 L536,388.2 L536.2,387.8 L536.5,387.9 L536.8,388.1 L537,387.8 L537.2,387.7 L537.5,387.4 L537.8,387.4 L538,387.1 L538.2,386.4 L538.5,385.3 L538.8,384.3 L539,382.9 L539.2,381.9 L539.5,383.4 L539.8,384.8 L540,385.8 L540.2,386.4 L540.5,387.1 L540.8,387.5 L541,387.7 L541.2,387.6 L541.5,388.2 L541.8,388 L542,387.8 L542.2,388 L542.5,388 L542.8,387.9 L543,388.2 L543.2,388.2 L543.5,388.1 L543.8,388 L544,388 L544.2,388 L544.5,388.2 L544.8,387.8 L545,388 L545.2,388.1 L545.5,387.8 L545.8,388 L546,387.7 L546.2,387.7 L546.5,387.7 L546.8,387.4 L547,387.1 L547.2,386.7 L547.5,386 L547.8,385.2 L548,383.6 L548.2,382.2 L548.5,382.9 L548.8,384.4 L549,385.4 L549.2,386.4 L549.5,386.7 L549.8,387.2 L550,387.8 L550.2,387.6 L550.5,387.9 L550.8,387.8 L551,388.1 L551.2,387.7 L551.5,388 L551.8,388 L552,387.9 L552.2,388.1 L552.5,388.1 L552.8,388.1 L553,388.2 L553.2,387.9 L553.5,387.8 L553.8,387.9 L554,388.2 L554.2,388.1 L554.5,388.2 L554.8,388.2 L555,387.9 L555.2,387.8 L555.5,387.9 L555.8,387.4 L556,387.3 L556.2,386.8 L556.5,386.3 L556.8,385.4 L557,384.5 L557.2,382.8 L557.5,382.5 L557.8,384 L558,385.1 L558.2,386 L558.5,387 L558.8,387.2 L559,387.7 L559.2,387.7 L559.5,387.9 L559.8,388 L560,387.8 L560.2,388.1 L560.5,387.9 L560.8,387.9 L561,388.1 L561.2,387.8 L561.5,388 L561.8,388.1 L562,388.2 L562.2,387.9 L562.5,388.1 L562.8,388.1 L563,388.2 L563.2,387.9 L563.5,387.8 L563.8,388.1 L564,388.2 L564.2,387.9 L564.5,387.9 L564.8,387.7 L565,387.4 L565.2,387.3 L565.5,386.7 L565.8,385.9 L566,384.8 L566.2,383.7 L566.5,382.3 L566.8,383.9 L567,385.2 L567.2,386 L567.5,386.8 L567.8,387.4 L568,387.5 L568.2,387.8 L568.5,387.9 L568.8,388 L569,388.1 L569.2,388 L569.5,388 L569.8,387.9 L570,388.2 L570.2,387.8 L570.5,388.2 L570.8,388.2 L571,388.1 L571.2,388.1 L571.5,387.9 L571.8,387.8 L572,388 L572.2,388 L572.5,388.2 L572.8,388.1 L573,388.2 L573.2,387.9 L573.5,387.9 L573.8,387.6 L574,387.6 L574.2,387.5 L574.5,386.9 L574.8,386.1 L575,385.5 L575.2,384.4 L575.5,382.8 L575.8,383.4 L576,384.5 L576.2,385.8 L576.5,386.6 L576.8,386.8 L577,387.3 L577.2,387.4 L577.5,387.7 L577.8,387.6 L578,388 L578.2,387.9 L578.5,387.8 L578.8,388.2 L579,387.8 L579.2,388 L579.5,388 L579.8,388.1 L580,388 L580.2,388 L580.5,387.9 L580.8,388 L581,387.8 L581.2,387.9 L581.5,388.1 L581.8,388 L582,388 L582.2,387.8 L582.5,388 L582.8,388 L583,387.8 L583.2,387.3 L583.5,386.9 L583.8,386.4 L584,386.1 L584.2,385.1 L584.5,384 L584.8,383.2 L585,384.5 L585.2,385.4 L585.5,386.1 L585.8,386.8 L586,387.1 L586.2,387.3 L586.5,387.7 L586.8,387.8 L587,387.9 L587.2,388.2 L587.5,388 L587.8,387.8 L588,387.8 L588.2,388.1 L588.5,387.9 L588.8,388 L589,387.8 L589.2,388 L589.5,387.9 L589.8,387.8 L590,387.9 L590.2,388.1 L590.5,388.1 L590.8,388.2 L591,388.2 L591.2,387.8 L591.5,388 L591.8,388.1 L592,387.8 L592.2,387.6 L592.5,387.2 L592.8,386.7 L593,386.1 L593.2,385.6 L593.5,384.6 L593.8,383.4 L594,384 L594.2,385.3 L594.5,386.1 L594.8,386.4 L595,387 L595.2,387.5 L595.5,387.5 L595.8,388 L596,387.8 L596.2,387.8 L596.5,387.9 L596.8,387.9 L597,388.1 L597.2,388.1 L597.5,388.1 L597.8,388.2 L598,387.9 L598.2,387.8 L598.5,388.1 L598.8,388.2 L599,388 L599.2,388 L599.5,388.2 L599.8,388.2 L600,388.1 L600.2,388 L600.5,387.8 L600.8,387.7 L601,387.8 L601.2,387.9 L601.5,387.7 L601.8,387.4 L602,387.4 L602.2,386.6 L602.5,386.2 L602.8,385.8 L603,385.4 L603.2,386.2 L603.5,386.6 L603.8,386.9 L604,387.5 L604.2,387.9 L604.5,387.6 L604.8,387.9 L605,388 L605.2,387.7 L605.5,388.1 L605.8,387.9 L606,387.8 L606.2,387.9 L606.5,387.8 L606.8,387.9 L607,388.1 L607.2,388.2 L607.5,387.9 L607.8,387.9 L608,387.9 L608.2,388.2 L608.5,388.1 L608.8,387.8 L609,387.8 L609.2,388.1 L609.5,388.2 L609.8,388.2 L610,387.9 L610.2,387.7 L610.5,387.6 L610.8,387.7 L611,387.6 L611.2,387.2 L611.5,386.6 L611.8,386.2 L612,385.2 L612.2,385.9 L612.5,386.7 L612.8,386.8 L613,387.5 L613.2,387.7 L613.5,387.5 L613.8,388 L614,387.8 L614.2,387.7 L614.5,388.1 L614.8,387.9 L615,388 L615.2,388.2 L615.5,388 L615.8,388.1 L616,388.2 L616.2,388.2 L616.5,388.1 L616.8,388 L617,387.8 L617.2,388.1 L617.5,388 L617.8,388.1 L618,388.1 L618.2,388.2 L618.5,387.8 L618.8,388 L619,387.8 L619.2,388.1 L619.5,387.7 L619.8,387.4 L620,387.6 L620.2,387.3 L620.5,386.9 L620.8,386.4 L621,385.8 L621.2,385.7 L621.5,386.6 L621.8,386.9 L622,387.5 L622.2,387.5 L622.5,387.7 L622.8,387.8 L623,387.8 L623.2,388 L623.5,387.8 L623.8,387.9 L624,388.1 L624.2,387.9 L624.5,387.9 L624.8,388.1 L625,388.1 L625.2,387.8 L625.5,387.8 L625.8,388.2 L626,388 L626.2,387.8 L626.5,387.8 L626.8,387.9 L627,387.8 L627.2,387.9 L627.5,388.1 L627.8,387.9 L628,388 L628.2,388.1 L628.5,388 L628.8,387.8 L629,387.7 L629.2,387.6 L629.5,387.2 L629.8,386.4 L630,386.1 L630.2,385.4 L630.5,386.4 L630.8,386.8 L631,387.1 L631.2,387.5 L631.5,387.4 L631.8,387.8 L632,388 L632.2,387.9 L632.5,387.8 L632.8,387.9 L633,387.8 L633.2,388.1 L633.5,388.2 L633.8,388 L634,388.2 L634.2,387.9 L634.5,388 L634.8,387.9 L635,388 L635.2,388.2 L635.5,387.8 L635.8,388.2 L636,388.2 L636.2,387.8 L636.5,388.2 L636.8,388.1 L637,388.2 L637.2,388.1 L637.5,387.9 L637.8,388 L638,387.8 L638.2,387.5 L638.5,387.3 L638.8,387.1 L639,386.2 L639.2,385.6 L639.5,386.3 L639.8,386.7 L640,386.9 L640.2,387.2 L640.5,387.4 L640.8,387.8 L641,387.8 L641.2,388.1 L641.5,388 L641.8,388.1 L642,387.8 L642.2,387.9 L642.5,388.2 L642.8,388 L643,388.2 L643.2,388.2 L643.5,387.8 L643.8,387.8 L644,387.8 L644.2,387.9 L644.5,387.8 L644.8,388.1 L645,388.2 L645.2,387.8 L645.5,388 L645.8,387.9 L646,387.8 L646.2,387.8 L646.5,388 L646.8,387.8 L647,387.8 L647.2,387.7 L647.5,387.3 L647.8,387.2 L648,386.5 L648.2,386.2 L648.5,385.9 L648.8,386.8 L649,387 L649.2,387.1 L649.5,387.3 L649.8,388 L650,388 L650.2,387.9 L650.5,387.7 L650.8,387.9 L651,387.8 L651.2,388.1 L651.5,388.1 L651.8,387.8 L652,388 L652.2,388.2 L652.5,387.9 L652.8,387.9 L653,388.2 L653.2,387.9 L653.5,388 L653.8,388 L654,388 L654.2,388.1 L654.5,388 L654.8,388 L655,388 L655.2,388 L655.5,387.9 L655.8,387.9 L656,388 L656.2,387.5 L656.5,387.3 L656.8,387.2 L657,386.9 L657.2,386.5 L657.5,385.9 L657.8,386.4 L658,386.8 L658.2,387.5 L658.5,387.4 L658.8,387.6 L659,387.9 L659.2,387.4 L659.5,387.3 L659.8,387.5 L660,407 L660,387.5 L660.2,387.5 L660.5,387.6 L660.8,387.5 L661,387.9 L661.2,387.6 L661.5,387.9 L661.8,387.8 L662,388.2 L662.2,388.2 L662.5,388.2 L662.8,388.7 L663,388.8 L663.2,388.7 L663.5,389 L663.8,389.3 L664,389.7 L664.2,389.9 L664.5,390 L664.8,390.5 L665,390.6 L665.2,390.6 L665.5,391 L665.8,391.9 L666,393.7 L666.2,395.6 L666.5,397.5 L666.8,396.7 L667,393.6 L667.2,391.1 L667.5,387.9 L667.8,387.9 L668,387.9 L668.2,387.6 L668.5,387.3 L668.8,387.6 L669,387.2 L669.2,387.2 L669.5,387.5 L669.8,387.6 L670,387.8 L670.2,387.8 L670.5,388 L670.8,388.1 L671,388.1 L671.2,388.3 L671.5,388.1 L671.8,388.6 L672,388.7 L672.2,388.9 L672.5,389.1 L672.8,389.4 L673,389.5 L673.2,389.4 L673.5,390 L673.8,390.2 L674,390.6 L674.2,390.8 L674.5,391.2 L674.8,391.5 L675,392.9 L675.2,395.1 L675.5,396.7 L675.8,397.9 L676,395.3 L676.2,392 L676.5,389.4 L676.8,387.9 L677,387.6 L677.2,387.8 L677.5,387.6 L677.8,387.6 L678,387.4 L678.2,387.6 L678.5,387.4 L678.8,387.4 L679,387.3 L679.2,387.5 L679.5,387.7 L679.8,388.1 L680,387.8 L680.2,388.3 L680.5,388.2 L680.8,388.3 L681,388.6 L681.2,388.9 L681.5,389.1 L681.8,389.3 L682,389.2 L682.2,389.8 L682.5,389.7 L682.8,390.2 L683,390.3 L683.2,390.7 L683.5,390.8 L683.8,391 L684,392 L684.2,394.1 L684.5,396 L684.8,398.3 L685,396.4 L685.2,393.2 L685.5,390.5 L685.8,387.8 L686,387.9 L686.2,387.8 L686.5,387.3 L686.8,387.6 L687,387.5 L687.2,387.2 L687.5,387.3 L687.8,387.6 L688,387.4 L688.2,387.4 L688.5,387.7 L688.8,387.7 L689,388.1 L689.2,387.8 L689.5,388 L689.8,388.4 L690,388.4 L690.2,388.6 L690.5,388.9 L690.8,389.2 L691,389 L691.2,389.3 L691.5,389.9 L691.8,390.1 L692,390.4 L692.2,390.5 L692.5,390.6 L692.8,391.2 L693,391.3 L693.2,393.6 L693.5,395.5 L693.8,397.5 L694,397.3 L694.2,394.4 L694.5,391.7 L694.8,388.9 L695,387.9 L695.2,387.5 L695.5,387.8 L695.8,387.5 L696,387.6 L696.2,387.3 L696.5,387.6 L696.8,387.3 L697,387.5 L697.2,387.5 L697.5,387.8 L697.8,387.6 L698,388 L698.2,388 L698.5,388.3 L698.8,388.5 L699,388.5 L699.2,388.4 L699.5,388.6 L699.8,388.7 L700,389.3 L700.2,389.6 L700.5,389.5 L700.8,389.7 L701,390.1 L701.2,390.4 L701.5,390.8 L701.8,390.7 L702,391.2 L702.2,392.7 L702.5,394.3 L702.8,396.5 L703,398.4 L703.2,395.4 L703.5,392.9 L703.8,389.9 L704,387.8 L704.2,387.8 L704.5,387.8 L704.8,387.7 L705,387.2 L705.2,387.6 L705.5,387.4 L705.8,387.2 L706,387.3 L706.2,387.6 L706.5,387.4 L706.8,387.6 L707,387.8 L707.2,388 L707.5,388.4 L707.8,388.5 L708,388.4 L708.2,388.3 L708.5,388.9 L708.8,389.1 L709,389.2 L709.2,389.2 L709.5,389.4 L709.8,389.7 L710,389.9 L710.2,390.5 L710.5,390.6 L710.8,390.7 L711,390.9 L711.2,391.6 L711.5,393.6 L711.8,395.5 L712,397.6 L712.2,396.9 L712.5,394 L712.8,390.9 L713,387.9 L713.2,388 L713.5,387.8 L713.8,387.7 L714,387.7 L714.2,387.5 L714.5,387.5 L714.8,387.3 L715,387.4 L715.2,387.6 L715.5,387.7 L715.8,387.6 L716,388 L716.2,388 L716.5,387.9 L716.8,388.3 L717,388.4 L717.2,388.7 L717.5,388.4 L717.8,388.8 L718,388.9 L718.2,389 L718.5,389.6 L718.8,389.6 L719,389.9 L719.2,389.9 L719.5,390.5 L719.8,390.6 L720,391.2 L720.2,391.6 L720.5,392.9 L720.8,395.1 L721,397.1 L721.2,398.1 L721.5,394.9 L721.8,392.3 L722,389.2 L722.2,387.8 L722.5,387.8 L722.8,387.4 L723,387.4 L723.2,387.4 L723.5,387.5 L723.8,387.5 L724,387.4 L724.2,387.3 L724.5,387.4 L724.8,387.8 L725,388 L725.2,388 L725.5,387.9 L725.8,388.3 L726,388.5 L726.2,388.2 L726.5,388.6 L726.8,388.5 L727,388.7 L727.2,389 L727.5,389.2 L727.8,389.3 L728,389.9 L728.2,390.1 L728.5,390.1 L728.8,390.8 L729,390.9 L729.2,391 L729.5,392.2 L729.8,394.3 L730,396.1 L730.2,398.3 L730.5,396.2 L730.8,393.2 L731,390.5 L731.2,387.8 L731.5,388.1 L731.8,387.7 L732,387.7 L732.2,387.3 L732.5,387.3 L732.8,387.3 L733,387.3 L733.2,387.6 L733.5,387.3 L733.8,387.7 L734,387.6 L734.2,388.1 L734.5,387.8 L734.8,388.1 L735,388.3 L735.2,388.6 L735.5,388.6 L735.8,388.7 L736,389 L736.2,389.3 L736.5,389.5 L736.8,389.3 L737,389.6 L737.2,390 L737.5,390.3 L737.8,390.4 L738,390.8 L738.2,391.3 L738.5,391.2 L738.8,393.4 L739,395.4 L739.2,397.5 L739.5,397.5 L739.8,394.4 L740,391.6 L740.2,388.8 L740.5,387.9 L740.8,387.9 L741,387.5 L741.2,387.4 L741.5,387.2 L741.8,387.5 L742,387.3 L742.2,387.4 L742.5,387.5 L742.8,387.3 L743,387.7 L743.2,388 L743.5,387.9 L743.8,388.2 L744,388 L744.2,388.1 L744.5,388.3 L744.8,388.7 L745,388.7 L745.2,389.2 L745.5,389.1 L745.8,389.4 L746,389.7 L746.2,389.8 L746.5,389.9 L746.8,390.3 L747,390.5 L747.2,390.9 L747.5,391.2 L747.8,392.7 L748,394.7 L748.2,396.4 L748.5,398.6 L748.8,395.7 L749,392.5 L749.2,389.7 L749.5,388.1 L749.8,387.7 L750,387.9 L750.2,387.7 L750.5,387.6 L750.8,387.2 L751,387.1 L751.2,387.2 L751.5,387.2 L751.8,387.3 L752,387.6 L752.2,387.6 L752.5,388.2 L752.8,387.9 L753,388.2 L753.2,388.4 L753.5,388.2 L753.8,388.7 L754,388.5 L754.2,388.7 L754.5,388.8 L754.8,389.1 L755,389.7 L755.2,389.7 L755.5,390.2 L755.8,390.1 L756,390.6 L756.2,390.7 L756.5,391.1 L756.8,391.7 L757,393.6 L757.2,395.8 L757.5,397.6 L757.8,397 L758,393.7 L758.2,390.9 L758.5,388 L758.8,387.8 L759,387.7 L759.2,387.8 L759.5,387.7 L759.8,387.2 L760,387.2 L760.2,387.3 L760.5,387.4 L760.8,387.4 L761,387.6 L761.2,387.8 L761.5,388.1 L761.8,388 L762,388.3 L762.2,388.3 L762.5,388.3 L762.8,388.5 L763,388.7 L763.2,388.8 L763.5,388.8 L763.8,389.3 L764,389.3 L764.2,389.7 L764.5,389.8 L764.8,390.2 L765,390.5 L765.2,390.8 L765.5,390.9 L765.8,391.3 L766,393.1 L766.2,394.9 L766.5,397.2 L766.8,397.9 L767,395.3 L767.2,392.1 L767.5,389.1 L767.8,388.1 L768,387.7 L768.2,387.8 L768.5,387.6 L768.8,387.4 L769,387.2 L769.2,387.4 L769.5,387.4 L769.8,387.3 L770,387.6 L770.2,387.5 L770.5,388 L770.8,387.8 L771,388.2 L771.2,388.2 L771.5,388.4 L771.8,388.6 L772,388.6 L772.2,388.7 L772.5,389 L772.8,389.1 L773,389.1 L773.2,389.4 L773.5,389.9 L773.8,390.2 L774,390.1 L774.2,390.7 L774.5,390.9 L774.8,391.2 L775,392.3 L775.2,394 L775.5,396 L775.8,398 L776,396.1 L776.2,393.5 L776.5,390.6 L776.8,388.2 L777,387.8 L777.2,387.9 L777.5,387.5 L777.8,387.6 L778,387.2 L778.2,387.2 L778.5,387.6 L778.8,387.4 L779,387.3 L779.2,387.4 L779.5,387.6 L779.8,387.9 L780,388 L780.2,387.9 L780.5,388.2 L780.8,388.2 L781,388.6 L781.2,388.6 L781.5,388.7 L781.8,389.1 L782,389.1 L782.2,389.6 L782.5,389.9 L782.8,390.2 L783,390.2 L783.2,390.3 L783.5,390.6 L783.8,391.3 L784,391.6 L784.2,393.6 L784.5,395.1 L784.8,397.2 L785,397.2 L785.2,394.3 L785.5,391.4 L785.8,388.9 L786,388 L786.2,387.9 L786.5,387.6 L786.8,387.6 L787,387.6 L787.2,387.6 L787.5,387.4 L787.8,387.2 L788,387.6 L788.2,387.3 L788.5,387.7 L788.8,387.9 L789,388.1 L789.2,388.2 L789.5,388.2 L789.8,388.3 L790,388.4 L790.2,388.6 L790.5,388.5 L790.8,389 L791,389.1 L791.2,389.5 L791.5,389.6 L791.8,389.9 L792,390 L792.2,390.3 L792.5,390.8 L792.8,391 L793,391.3 L793.2,392.5 L793.5,394.8 L793.8,396.6 L794,398.4 L794.2,395.8 L794.5,392.9 L794.8,389.7 L795,387.9 L795.2,387.7 L795.5,387.5 L795.8,387.7 L796,387.7 L796.2,387.4 L796.5,387.6 L796.8,387.4 L797,387.4 L797.2,387.7 L797.5,387.8 L797.8,387.6 L798,387.8 L798.2,388 L798.5,388.1 L798.8,388.4 L799,388.3 L799.2,388.6 L799.5,388.8 L799.8,388.7 L800,388.9 L800.2,389.5 L800.5,389.4 L800.8,390 L801,389.8 L801.2,390.3 L801.5,390.4 L801.8,390.9 L802,391.1 L802.2,391.8 L802.5,393.7 L802.8,395.9 L803,397.9 L803.2,396.9 L803.5,393.9 L803.8,390.9 L804,388.2 L804.2,388.1 L804.5,387.8 L804.8,387.5 L805,387.5 L805.2,387.5 L805.5,387.3 L805.8,387.4 L806,387.5 L806.2,387.4 L806.5,387.4 L806.8,387.8 L807,387.9 L807.2,388 L807.5,388 L807.8,388 L808,388.4 L808.2,388.6 L808.5,388.8 L808.8,389 L809,389 L809.2,389.2 L809.5,389.3 L809.8,389.8 L810,390 L810.2,390.3 L810.5,390.5 L810.8,390.7 L811,391.1 L811.2,391.2 L811.5,393 L811.8,394.9 L812,397 L812.2,397.8 L812.5,395.3 L812.8,392 L813,389.2 L813.2,388.1 L813.5,387.9 L813.8,387.6 L814,387.7 L814.2,387.3 L814.5,387.2 L814.8,387.3 L815,387.2 L815.2,387.5 L815.5,387.6 L815.8,387.6 L816,387.9 L816.2,388.1 L816.5,387.9 L816.8,387.9 L817,388.4 L817.2,388.1 L817.5,388.8 L817.8,388.6 L818,388.7 L818.2,389.1 L818.5,389.6 L818.8,389.8 L819,389.7 L819.2,390.2 L819.5,390.2 L819.8,390.8 L820,390.7 L820.2,391.2 L820.5,392.2 L820.8,394.2 L821,396.3 L821.2,398 L821.5,396.4 L821.8,393.3 L822,390.6 L822.2,387.8 L822.5,387.6 L822.8,387.7 L823,387.7 L823.2,387.4 L823.5,387.3 L823.8,387.4 L824,387.2 L824.2,387.4 L824.5,387.6 L824.8,387.5 L825,387.9 L825.2,387.7 L825.5,387.9 L825.8,388.1 L826,388.3 L826.2,388.3 L826.5,388.6 L826.8,388.8 L827,388.9 L827.2,388.9 L827.5,389.2 L827.8,389.7 L828,389.8 L828.2,389.9 L828.5,390.2 L828.8,390.6 L829,390.8 L829.2,391.1 L829.5,391.4 L829.8,393.2 L830,395.3 L830.2,397.6 L830.5,397.4 L830.8,394.4 L831,391.4 L831.2,388.9 L831.5,387.8 L831.8,387.8 L832,387.6 L832.2,387.4 L832.5,387.4 L832.8,387.2 L833,387.5 L833.2,387.4 L833.5,387.6 L833.8,387.7 L834,387.5 L834.2,387.7 L834.5,388.2 L834.8,388.2 L835,388.2 L835.2,388.3 L835.5,388.3 L835.8,388.7 L836,388.5 L836.2,389 L836.5,389.3 L836.8,389.4 L837,389.5 L837.2,389.7 L837.5,390.2 L837.8,390.6 L838,390.8 L838.2,391 L838.5,391.4 L838.8,392.6 L839,394.8 L839.2,396.7 L839.5,398.7 L839.8,395.8 L840,392.5 L840.2,389.9 L840.5,387.8 L840.8,387.6 L841,387.6 L841.2,387.5 L841.5,387.7 L841.8,387.5 L842,387.5 L842.2,387.5 L842.5,387.4 L842.8,387.5 L843,387.8 L843.2,387.6 L843.5,387.8 L843.8,388.1 L844,387.9 L844.2,388 L844.5,388.2 L844.8,388.4 L845,388.6 L845.2,389.1 L845.5,389.1 L845.8,389.3 L846,389.7 L846.2,389.6 L846.5,389.9 L846.8,390.3 L847,390.4 L847.2,390.7 L847.5,391.3 L847.8,391.9 L848,393.8 L848.2,395.9 L848.5,397.6 L848.8,396.7 L849,393.9 L849.2,391.1 L849.5,387.9 L849.8,387.6 L850,387.5 L850.2,387.5 L850.5,387.4 L850.8,387.4 L851,387.2 L851.2,387.6 L851.5,387.3 L851.8,387.4 L852,387.5 L852.2,387.6 L852.5,388.1 L852.8,387.8 L853,388.3 L853.2,388.3 L853.5,388.4 L853.8,388.5 L854,388.5 L854.2,388.9 L854.5,389.2 L854.8,389.3 L855,389.5 L855.2,389.8 L855.5,389.7 L855.8,390.3 L856,390.3 L856.2,391 L856.5,390.8 L856.8,391.1 L857,393 L857.2,395.1 L857.5,397.1 L857.8,398.2 L858,395 L858.2,392.3 L858.5,389.3 L858.8,388 L859,387.9 L859.2,387.6 L859.5,387.4 L859.8,387.2 L860,387.2 L860.2,387.4 L860.5,387.2 L860.8,387.4 L861,387.7 L861.2,387.6 L861.5,387.6 L861.8,388 L862,387.8 L862.2,388.1 L862.5,388.3 L862.8,388.2 L863,388.4 L863.2,388.8 L863.5,388.8 L863.8,389 L864,389.2 L864.2,389.7 L864.5,390 L864.8,390.1 L865,390.5 L865.2,390.7 L865.5,391.1 L865.8,391.1 L866,392.3 L866.2,394.1 L866.5,396.3 L866.8,398.1 L867,396.4 L867.2,393.3 L867.5,390.5 L867.8,388.1 L868,387.7 L868.2,387.6 L868.5,387.3 L868.8,387.6 L869,387.6 L869.2,387.2 L869.5,387.4 L869.8,387.3 L870,387.8 L870.2,387.9 L870.5,387.6 L870.8,388 L871,388 L871.2,388.1 L871.5,388 L871.8,388.2 L872,388.4 L872.2,388.7 L872.5,388.8 L872.8,388.9 L873,389.2 L873.2,389.6 L873.5,389.7 L873.8,389.8 L874,390 L874.2,390.6 L874.5,390.8 L874.8,391.2 L875,391.2 L875.2,393.2 L875.5,395.5 L875.8,397.3 L876,397.2 L876.2,394.2 L876.5,391.4 L876.8,388.8 L877,387.8 L877.2,387.6 L877.5,387.7 L877.8,387.4 L878,387.6 L878.2,387.4 L878.5,387.6 L878.8,387.2 L879,387.5 L879.2,387.4 L879.5,387.6 L879.8,387.8 L880,388 L880.2,387.8 L880.5,388.1 L880.8,388.1 L881,388.6 L881.2,388.6 L881.5,388.7 L881.8,388.9 L882,389.3 L882.2,389.4 L882.5,389.8 L882.8,389.8 L883,390.3 L883.2,390.5 L883.5,390.8 L883.8,390.7 L884,391.4 L884.2,392.8 L884.5,394.8 L884.8,396.4 L885,398.5 L885.2,395.8 L885.5,392.7 L885.8,389.7 L886,388 L886.2,388 L886.5,387.5 L886.8,387.5 L887,387.7 L887.2,387.2 L887.5,387.4 L887.8,387.3 L888,387.2 L888.2,387.4 L888.5,387.8 L888.8,387.6 L889,387.7 L889.2,387.9 L889.5,388.3 L889.8,388.2 L890,388.3 L890.2,388.3 L890.5,388.7 L890.8,389.1 L891,389 L891.2,389.4 L891.5,389.5 L891.8,389.6 L892,389.9 L892.2,390.2 L892.5,390.7 L892.8,390.9 L893,391 L893.2,391.7 L893.5,393.9 L893.8,395.6 L894,397.6 L894.2,396.6 L894.5,394 L894.8,390.8 L895,388.2 L895.2,388 L895.5,387.7 L895.8,387.5 L896,387.3 L896.2,387.4 L896.5,387.6 L896.8,387.4 L897,387.2 L897.2,387.3 L897.5,387.8 L897.8,387.5 L898,388 L898.2,388.1 L898.5,387.9 L898.8,388.1 L899,388.2 L899.2,388.5 L899.5,388.4 L899.8,388.9 L900,389.1" fill="none" stroke="#e27f1a" stroke-width="1.15" stroke-linejoin="round" opacity="1"/><path d="M2,443.3 L2.2,442.9 L2.5,442.8 L2.8,442.9 L3,443.1 L3.2,442.9 L3.5,442.7 L3.8,442.7 L4,442.9 L4.2,442.8 L4.5,443 L4.8,442.9 L5,443.2 L5.2,443.1 L5.5,443.1 L5.8,442.9 L6,443.2 L6.2,443 L6.5,443.2 L6.8,443.1 L7,443 L7.2,442.8 L7.5,442.8 L7.8,442.9 L8,442.8 L8.2,443 L8.5,442.8 L8.8,443.1 L9,442.9 L9.2,443.1 L9.5,442.9 L9.8,443.1 L10,443 L10.2,443.2 L10.5,443 L10.8,443 L11,443 L11.2,443.2 L11.5,443.1 L11.8,442.9 L12,443 L12.2,442.8 L12.5,442.7 L12.8,442.8 L13,442.7 L13.2,443 L13.5,442.8 L13.8,442.9 L14,443 L14.2,443 L14.5,443 L14.8,443.3 L15,443.2 L15.2,443.1 L15.5,443.3 L15.8,443.1 L16,443.2 L16.2,443.1 L16.5,443.2 L16.8,443.3 L17,442.9 L17.2,443 L17.5,442.9 L17.8,442.6 L18,442.8 L18.2,442.8 L18.5,442.6 L18.8,443.1 L19,443 L19.2,443.2 L19.5,443.2 L19.8,442.8 L20,443.2 L20.2,443.3 L20.5,443.1 L20.8,443.2 L21,443 L21.2,442.9 L21.5,443.2 L21.8,443.1 L22,442.9 L22.2,443.1 L22.5,442.9 L22.8,443 L23,442.7 L23.2,443 L23.5,442.7 L23.8,443 L24,443 L24.2,443 L24.5,443 L24.8,443 L25,443 L25.2,443.1 L25.5,443.1 L25.8,442.9 L26,443.2 L26.2,443.1 L26.5,442.9 L26.8,443.1 L27,442.7 L27.2,442.9 L27.5,442.8 L27.8,442.7 L28,443 L28.2,442.7 L28.5,442.9 L28.8,443.1 L29,443 L29.2,443.3 L29.5,443 L29.8,442.9 L30,443.1 L30.2,442.9 L30.5,443 L30.8,443.2 L31,443.1 L31.2,442.9 L31.5,443 L31.8,443.2 L32,442.9 L32.2,442.7 L32.5,443 L32.8,442.7 L33,442.9 L33.2,442.9 L33.5,442.8 L33.8,443.2 L34,443.3 L34.2,443 L34.5,443.1 L34.8,443.2 L35,443.3 L35.2,443 L35.5,443 L35.8,442.9 L36,442.9 L36.2,443 L36.5,442.9 L36.8,442.9 L37,442.8 L37.2,442.6 L37.5,443 L37.8,443.1 L38,443.1 L38.2,443.1 L38.5,442.9 L38.8,442.9 L39,443.1 L39.2,443.2 L39.5,443.1 L39.8,443.1 L40,442.9 L40.2,443.3 L40.5,443.2 L40.8,443 L41,443.3 L41.2,443.2 L41.5,443.1 L41.8,442.7 L42,442.9 L42.2,442.7 L42.5,443 L42.8,443 L43,443.1 L43.2,442.9 L43.5,443.1 L43.8,442.9 L44,443.3 L44.2,443.2 L44.5,443.1 L44.8,443.1 L45,443.4 L45.2,443.3 L45.5,443.1 L45.8,442.8 L46,442.9 L46.2,442.9 L46.5,442.8 L46.8,443.1 L47,442.7 L47.2,443 L47.5,443.1 L47.8,443 L48,443.2 L48.2,442.8 L48.5,443.2 L48.8,443.3 L49,443 L49.2,443.3 L49.5,443.1 L49.8,443.3 L50,443.2 L50.2,443.2 L50.5,443.3 L50.8,442.8 L51,442.9 L51.2,443.1 L51.5,442.9 L51.8,442.9 L52,443 L52.2,442.6 L52.5,442.7 L52.8,443 L53,443 L53.2,443.3 L53.5,443 L53.8,442.9 L54,443.1 L54.2,443.2 L54.5,443 L54.8,442.9 L55,443.2 L55.2,443.2 L55.5,442.8 L55.8,443 L56,442.7 L56.2,442.9 L56.5,442.7 L56.8,442.9 L57,442.8 L57.2,442.7 L57.5,442.8 L57.8,443.1 L58,442.9 L58.2,442.8 L58.5,442.9 L58.8,443.1 L59,443.2 L59.2,443.3 L59.5,443.3 L59.8,443.3 L60,443.1 L60.2,443.2 L60.5,442.8 L60.8,442.9 L61,443.1 L61.2,442.7 L61.5,443 L61.8,442.6 L62,443.1 L62.2,442.9 L62.5,443.2 L62.8,442.8 L63,443.2 L63.2,443.3 L63.5,442.9 L63.8,443.3 L64,443.2 L64.2,443 L64.5,443.3 L64.8,443.2 L65,443.2 L65.2,443.2 L65.5,443.2 L65.8,443.1 L66,442.9 L66.2,442.8 L66.5,442.9 L66.8,442.6 L67,443 L67.2,443.1 L67.5,443.1 L67.8,443 L68,442.9 L68.2,443.3 L68.5,442.9 L68.8,443.3 L69,443.4 L69.2,443.4 L69.5,443.3 L69.8,442.9 L70,442.9 L70.2,442.8 L70.5,443 L70.8,442.7 L71,442.8 L71.2,442.8 L71.5,442.6 L71.8,443 L72,442.7 L72.2,443.1 L72.5,442.8 L72.8,443.1 L73,443.3 L73.2,443.3 L73.5,443.3 L73.8,443 L74,443.1 L74.2,443.2 L74.5,443.3 L74.8,443.1 L75,443 L75.2,442.8 L75.5,442.9 L75.8,442.9 L76,443 L76.2,442.8 L76.5,442.8 L76.8,442.8 L77,443 L77.2,443.2 L77.5,442.8 L77.8,443.2 L78,443.3 L78.2,443 L78.5,442.9 L78.8,443.3 L79,443.3 L79.2,442.9 L79.5,442.9 L79.8,442.8 L80,442.9 L80.2,442.8 L80.5,443 L80.8,443 L81,443 L81.2,442.6 L81.5,442.9 L81.8,442.8 L82,443 L82.2,443.2 L82.5,443.1 L82.8,443.2 L83,443.2 L83.2,443.3 L83.5,442.9 L83.8,443.3 L84,442.9 L84.2,443.3 L84.5,443.2 L84.8,443 L85,443 L85.2,443.1 L85.5,443 L85.8,442.6 L86,442.6 L86.2,442.9 L86.5,442.8 L86.8,443.2 L87,442.8 L87.2,443.2 L87.5,443.1 L87.8,443.2 L88,443.3 L88.2,443.3 L88.5,443 L88.8,443.2 L89,443.3 L89.2,442.9 L89.5,443.2 L89.8,442.9 L90,443.1 L90.2,443 L90.5,443 L90.8,443 L91,443 L91.2,442.9 L91.5,443 L91.8,443 L92,443.1 L92.2,442.9 L92.5,443 L92.8,443.3 L93,443.2 L93.2,443.1 L93.5,443.1 L93.8,443.3 L94,443.2 L94.2,442.9 L94.5,442.9 L94.8,443 L95,442.9 L95.2,442.8 L95.5,442.8 L95.8,442.9 L96,442.7 L96.2,442.9 L96.5,442.8 L96.8,443.1 L97,443.1 L97.2,443 L97.5,443.4 L97.8,443.2 L98,443.4 L98.2,442.9 L98.5,442.9 L98.8,442.9 L99,443 L99.2,442.9 L99.5,442.8 L99.8,442.8 L100,443.9 L100.2,444 L100.5,443.8 L100.8,444.2 L101,443.9 L101.2,444 L101.5,444.1 L101.8,443.9 L102,443.5 L102.2,443.1 L102.5,443.2 L102.8,443 L103,443.1 L103.2,443.1 L103.5,443.1 L103.8,443.3 L104,443.2 L104.2,443.4 L104.5,443.6 L104.8,443.4 L105,443.3 L105.2,443.6 L105.5,443.8 L105.8,443.5 L106,443.9 L106.2,444 L106.5,444 L106.8,443.8 L107,444.2 L107.2,444.3 L107.5,444 L107.8,444.4 L108,444.2 L108.2,444.6 L108.5,444.5 L108.8,444.7 L109,444.5 L109.2,444.9 L109.5,444.7 L109.8,445 L110,445.1 L110.2,445.2 L110.5,445.2 L110.8,444.3 L111,444.1 L111.2,443.3 L111.5,443.1 L111.8,443 L112,443.1 L112.2,443.3 L112.5,443.4 L112.8,443.6 L113,443.2 L113.2,443.7 L113.5,443.6 L113.8,443.7 L114,444.1 L114.2,444 L114.5,444.1 L114.8,443.9 L115,444.2 L115.2,444.4 L115.5,444.4 L115.8,444.6 L116,444.5 L116.2,444.8 L116.5,445 L116.8,444.9 L117,444.9 L117.2,445.1 L117.5,445.4 L117.8,445.5 L118,445.8 L118.2,445.8 L118.5,445.7 L118.8,445.8 L119,445.8 L119.2,446.3 L119.5,446.2 L119.8,445.8 L120,444.7 L120.2,444 L120.5,443.4 L120.8,443.2 L121,443.3 L121.2,443.4 L121.5,443.5 L121.8,443.4 L122,443.6 L122.2,443.8 L122.5,443.9 L122.8,443.9 L123,444.2 L123.2,444.2 L123.5,444.2 L123.8,444.3 L124,444.7 L124.2,444.9 L124.5,444.9 L124.8,445 L125,445.3 L125.2,445.1 L125.5,445.3 L125.8,445.6 L126,445.7 L126.2,446.1 L126.5,445.8 L126.8,446.3 L127,446.4 L127.2,446.7 L127.5,446.8 L127.8,446.7 L128,446.9 L128.2,446.9 L128.5,447.1 L128.8,446.7 L129,445.9 L129.2,444.7 L129.5,444 L129.8,443 L130,443 L130.2,443.3 L130.5,443.3 L130.8,443.8 L131,443.8 L131.2,443.9 L131.5,443.9 L131.8,444.3 L132,444.4 L132.2,444.6 L132.5,444.5 L132.8,444.6 L133,445 L133.2,445 L133.5,445.6 L133.8,445.3 L134,445.6 L134.2,445.7 L134.5,446.1 L134.8,446 L135,446.4 L135.2,446.6 L135.5,446.5 L135.8,446.8 L136,447 L136.2,447.1 L136.5,447.3 L136.8,447.6 L137,448 L137.2,448 L137.5,448 L137.8,448.1 L138,447.1 L138.2,445.8 L138.5,444.4 L138.8,443.2 L139,443.1 L139.2,443.4 L139.5,443.6 L139.8,443.7 L140,443.6 L140.2,443.9 L140.5,444 L140.8,444.3 L141,444.6 L141.2,445 L141.5,445.2 L141.8,445.1 L142,445.4 L142.2,445.5 L142.5,445.5 L142.8,445.8 L143,446 L143.2,446.2 L143.5,446.8 L143.8,446.7 L144,446.9 L144.2,447.1 L144.5,447.7 L144.8,447.6 L145,448 L145.2,447.9 L145.5,448.4 L145.8,448.5 L146,448.9 L146.2,449.2 L146.5,449 L146.8,449.6 L147,448.4 L147.2,447.1 L147.5,445.3 L147.8,443.7 L148,443 L148.2,443.1 L148.5,443.4 L148.8,443.8 L149,444 L149.2,444.2 L149.5,444.2 L149.8,444.4 L150,444.7 L150.2,445.1 L150.5,445.4 L150.8,445.3 L151,445.8 L151.2,445.8 L151.5,446.3 L151.8,446.2 L152,446.7 L152.2,446.9 L152.5,447 L152.8,447.3 L153,447.7 L153.2,447.8 L153.5,447.9 L153.8,448.3 L154,448.7 L154.2,448.8 L154.5,448.9 L154.8,449.6 L155,449.7 L155.2,450 L155.5,450 L155.8,450.2 L156,449.9 L156.2,448.4 L156.5,446.6 L156.8,444.8 L157,443 L157.2,443.5 L157.5,443.3 L157.8,443.9 L158,444.2 L158.2,444.2 L158.5,444.7 L158.8,444.6 L159,444.8 L159.2,445.4 L159.5,445.6 L159.8,445.8 L160,446.2 L160.2,446.1 L160.5,446.7 L160.8,446.9 L161,447.1 L161.2,447.3 L161.5,447.8 L161.8,447.7 L162,448.2 L162.2,448.6 L162.5,448.5 L162.8,449.3 L163,449.3 L163.2,449.6 L163.5,449.8 L163.8,450.1 L164,450.5 L164.2,450.7 L164.5,450.9 L164.8,451.1 L165,451.8 L165.2,450 L165.5,447.6 L165.8,445.8 L166,443.7 L166.2,443.3 L166.5,443.2 L166.8,443.8 L167,444.2 L167.2,444.3 L167.5,444.7 L167.8,444.8 L168,445.3 L168.2,445.3 L168.5,445.5 L168.8,445.8 L169,446.3 L169.2,446.6 L169.5,446.8 L169.8,447.4 L170,447.6 L170.2,447.7 L170.5,447.9 L170.8,448.5 L171,448.9 L171.2,449.2 L171.5,449.5 L171.8,449.5 L172,449.9 L172.2,450.1 L172.5,450.5 L172.8,451 L173,451.1 L173.2,451.4 L173.5,451.8 L173.8,452.4 L174,452.4 L174.2,451.3 L174.5,449.4 L174.8,446.8 L175,444.8 L175.2,443.3 L175.5,443.5 L175.8,443.6 L176,444.1 L176.2,444.5 L176.5,444.5 L176.8,445.1 L177,445.3 L177.2,445.6 L177.5,445.8 L177.8,446.4 L178,446.6 L178.2,447.1 L178.5,447.1 L178.8,447.6 L179,447.7 L179.2,448.3 L179.5,448.7 L179.8,448.8 L180,449.1 L180.2,449.6 L180.5,449.9 L180.8,450.4 L181,450.5 L181.2,450.8 L181.5,451.4 L181.8,451.7 L182,452.1 L182.2,452.2 L182.5,452.8 L182.8,453.2 L183,453.4 L183.2,453.2 L183.5,451.1 L183.8,448.5 L184,445.9 L184.2,443.7 L184.5,443.4 L184.8,443.8 L185,443.9 L185.2,444.3 L185.5,444.7 L185.8,444.8 L186,445.5 L186.2,445.6 L186.5,446.2 L186.8,446.6 L187,446.7 L187.2,446.9 L187.5,447.7 L187.8,448.1 L188,448.1 L188.2,448.4 L188.5,449.1 L188.8,449.3 L189,449.9 L189.2,450.2 L189.5,450.5 L189.8,450.7 L190,451.3 L190.2,451.6 L190.5,451.8 L190.8,452.4 L191,452.8 L191.2,453.4 L191.5,453.6 L191.8,454.2 L192,454.3 L192.2,455 L192.5,452.7 L192.8,450.1 L193,447.4 L193.2,444.7 L193.5,443.1 L193.8,443.4 L194,443.7 L194.2,444.4 L194.5,444.7 L194.8,445.1 L195,445.3 L195.2,445.7 L195.5,446.4 L195.8,446.5 L196,447 L196.2,447.6 L196.5,447.6 L196.8,448.3 L197,448.7 L197.2,448.8 L197.5,449.3 L197.8,450 L198,450.3 L198.2,450.4 L198.5,451 L198.8,451.4 L199,452 L199.2,452 L199.5,452.8 L199.8,453 L200,453.6 L200.2,454 L200.5,454.2 L200.8,454.8 L201,455.3 L201.2,455.8 L201.5,454.8 L201.8,451.8 L202,449 L202.2,446 L202.5,443 L202.8,443.3 L203,443.6 L203.2,444.1 L203.5,444.9 L203.8,445.2 L204,445.4 L204.2,445.9 L204.5,446.2 L204.8,446.7 L205,447.3 L205.2,447.8 L205.5,448 L205.8,448.2 L206,449 L206.2,449.1 L206.5,449.8 L206.8,450.1 L207,450.4 L207.2,451.2 L207.5,451.4 L207.8,452.2 L208,452.4 L208.2,453.1 L208.5,453.3 L208.8,453.6 L209,454.1 L209.2,454.5 L209.5,454.9 L209.8,455.4 L210,456.2 L210.2,456.4 L210.5,435.4 L210.8,434.5 L211,433 L211.2,431.9 L211.5,430.3 L211.8,431 L212,432 L212.2,433.3 L212.5,434.7 L212.8,435.5 L213,436.4 L213.2,437.4 L213.5,438.5 L213.8,439.6 L214,440.1 L214.2,440.6 L214.5,441.2 L214.8,442.1 L215,442.2 L215.2,442.7 L215.5,442.7 L215.8,442.8 L216,442.9 L216.2,443.1 L216.5,443.1 L216.8,442.6 L217,442.8 L217.2,442.2 L217.5,442.2 L217.8,441.3 L218,441.1 L218.2,440.1 L218.5,439.6 L218.8,438.6 L219,437.9 L219.2,436.9 L219.5,435.8 L219.8,434.5 L220,433.5 L220.2,432 L220.5,431 L220.8,430 L221,431.2 L221.2,432.5 L221.5,434.1 L221.8,434.8 L222,436.2 L222.2,437.4 L222.5,438.3 L222.8,439.1 L223,440 L223.2,440.6 L223.5,441.2 L223.8,441.8 L224,442.1 L224.2,442.3 L224.5,442.5 L224.8,442.9 L225,442.9 L225.2,443.1 L225.5,442.9 L225.8,442.8 L226,442.9 L226.2,442.6 L226.5,441.9 L226.8,441.7 L227,441.2 L227.2,440.4 L227.5,439.7 L227.8,438.8 L228,437.9 L228.2,436.9 L228.5,435.9 L228.8,435.1 L229,433.8 L229.2,432.8 L229.5,431.2 L229.8,430 L230,430.7 L230.2,431.9 L230.5,433.3 L230.8,434.6 L231,435.5 L231.2,437 L231.5,438 L231.8,438.4 L232,439.4 L232.2,440.5 L232.5,441 L232.8,441.7 L233,442.1 L233.2,442.3 L233.5,442.7 L233.8,443 L234,443.2 L234.2,443.2 L234.5,443.1 L234.8,443.1 L235,443 L235.2,442.8 L235.5,442.4 L235.8,441.9 L236,441.3 L236.2,440.6 L236.5,440 L236.8,439.3 L237,438.7 L237.2,437.8 L237.5,436.5 L237.8,435.2 L238,434.2 L238.2,433.2 L238.5,431.8 L238.8,430.3 L239,430.3 L239.2,431.3 L239.5,433 L239.8,433.7 L240,435 L240.2,436.3 L240.5,437.3 L240.8,438.5 L241,439 L241.2,440 L241.5,440.8 L241.8,441.1 L242,441.8 L242.2,442.2 L242.5,442.6 L242.8,442.6 L243,443 L243.2,442.9 L243.5,443 L243.8,442.8 L244,443 L244.2,442.9 L244.5,442.6 L244.8,442 L245,441.4 L245.2,441.1 L245.5,440.6 L245.8,439.8 L246,439 L246.2,437.7 L246.5,437 L246.8,435.9 L247,434.7 L247.2,433.5 L247.5,432.2 L247.8,431 L248,429.3 L248.2,430.8 L248.5,432.3 L248.8,433.4 L249,434.6 L249.2,435.9 L249.5,436.9 L249.8,438 L250,439 L250.2,439.5 L250.5,440.3 L250.8,440.9 L251,441.8 L251.2,442.1 L251.5,442.5 L251.8,442.7 L252,442.8 L252.2,443 L252.5,443.1 L252.8,442.9 L253,442.8 L253.2,442.9 L253.5,442.7 L253.8,442.2 L254,441.8 L254.2,441.4 L254.5,440.8 L254.8,440 L255,439 L255.2,438.4 L255.5,437 L255.8,436.2 L256,434.9 L256.2,433.6 L256.5,432.6 L256.8,431.4 L257,429.7 L257.2,430 L257.5,431.4 L257.8,433 L258,434 L258.2,435.5 L258.5,436.3 L258.8,437.6 L259,438.4 L259.2,439 L259.5,440.3 L259.8,440.6 L260,441.3 L260.2,442.1 L260.5,442.5 L260.8,442.5 L261,442.6 L261.2,442.7 L261.5,443 L261.8,443.2 L262,442.9 L262.2,443 L262.5,442.6 L262.8,442.2 L263,441.8 L263.2,441.2 L263.5,440.8 L263.8,440 L264,439.5 L264.2,438.4 L264.5,437.7 L264.8,436.5 L265,435.6 L265.2,434 L265.5,433.1 L265.8,431.7 L266,430.4 L266.2,429.5 L266.5,430.7 L266.8,432 L267,433.6 L267.2,434.7 L267.5,436 L267.8,437.2 L268,438 L268.2,438.8 L268.5,439.8 L268.8,440.4 L269,441.1 L269.2,441.6 L269.5,442 L269.8,442.4 L270,442.6 L270.2,443 L270.5,443 L270.8,443.1 L271,442.9 L271.2,443 L271.5,442.9 L271.8,442.3 L272,441.9 L272.2,441.5 L272.5,441 L272.8,440.5 L273,439.8 L273.2,439 L273.5,438 L273.8,436.9 L274,435.6 L274.2,434.8 L274.5,433.2 L274.8,432.1 L275,430.6 L275.2,429.2 L275.5,430.4 L275.8,431.4 L276,432.9 L276.2,433.9 L276.5,435.3 L276.8,436.2 L277,437.5 L277.2,438.7 L277.5,439.2 L277.8,440 L278,441.1 L278.2,441.6 L278.5,442.1 L278.8,442.5 L279,442.4 L279.2,442.6 L279.5,443 L279.8,443.2 L280,443.1 L280.2,442.7 L280.5,442.8 L280.8,442.7 L281,442.1 L281.2,441.7 L281.5,441.3 L281.8,440.9 L282,440 L282.2,439.2 L282.5,438.4 L282.8,437.1 L283,436 L283.2,435.2 L283.5,433.7 L283.8,432.5 L284,431.4 L284.2,429.6 L284.5,429.3 L284.8,431 L285,432.5 L285.2,433.4 L285.5,434.9 L285.8,435.8 L286,436.9 L286.2,438 L286.5,439.1 L286.8,439.6 L287,440.5 L287.2,441.4 L287.5,441.7 L287.8,441.9 L288,442.4 L288.2,442.8 L288.5,443 L288.8,443.1 L289,443.1 L289.2,442.7 L289.5,442.8 L289.8,442.7 L290,442.3 L290.2,441.8 L290.5,441.7 L290.8,441 L291,440.5 L291.2,439.5 L291.5,438.8 L291.8,437.8 L292,436.4 L292.2,435.6 L292.5,434.2 L292.8,432.8 L293,431.4 L293.2,430.2 L293.5,428.8 L293.8,430.2 L294,431.4 L294.2,432.8 L294.5,434.2 L294.8,435.5 L295,436.5 L295.2,437.5 L295.5,438.5 L295.8,439.3 L296,440.3 L296.2,441 L296.5,441.5 L296.8,442.1 L297,442.2 L297.2,442.7 L297.5,442.9 L297.8,442.9 L298,443.2 L298.2,443.2 L298.5,443.1 L298.8,442.6 L299,442.5 L299.2,442.1 L299.5,441.5 L299.8,441 L300,440.4 L300.2,439.8 L300.5,438.9 L300.8,438.1 L301,437.2 L301.2,435.6 L301.5,434.9 L301.8,433.5 L302,432 L302.2,430.5 L302.5,429.5 L302.8,429.6 L303,430.8 L303.2,432.1 L303.5,433.7 L303.8,435.1 L304,435.9 L304.2,437.4 L304.5,438.2 L304.8,439.2 L305,439.7 L305.2,440.9 L305.5,441.3 L305.8,442 L306,442.5 L306.2,442.6 L306.5,442.9 L306.8,443.2 L307,442.8 L307.2,442.9 L307.5,443.2 L307.8,442.9 L308,442.7 L308.2,442.5 L308.5,442 L308.8,441.6 L309,440.9 L309.2,440 L309.5,439.2 L309.8,438.5 L310,437.5 L310.2,436 L310.5,435.2 L310.8,433.6 L311,432.7 L311.2,431.2 L311.5,429.7 L311.8,428.9 L312,430.4 L312.2,431.5 L312.5,433.2 L312.8,434.1 L313,435.6 L313.2,436.6 L313.5,437.7 L313.8,438.8 L314,439.7 L314.2,440.4 L314.5,440.9 L314.8,441.6 L315,442.3 L315.2,442.3 L315.5,442.8 L315.8,443 L316,443.1 L316.2,443.1 L316.5,443 L316.8,442.7 L317,442.7 L317.2,442.6 L317.5,442.1 L317.8,441.7 L318,440.9 L318.2,440.5 L318.5,439.8 L318.8,438.8 L319,437.9 L319.2,436.5 L319.5,435.4 L319.8,434.2 L320,432.8 L320.2,431.4 L320.5,430.3 L320.8,429 L321,429.7 L321.2,431.2 L321.5,432.3 L321.8,433.7 L322,435 L322.2,435.9 L322.5,437.2 L322.8,438.1 L323,439 L323.2,439.9 L323.5,440.9 L323.8,441.4 L324,441.8 L324.2,442.5 L324.5,442.6 L324.8,443 L325,443.1 L325.2,443 L325.5,442.8 L325.8,443.1 L326,442.6 L326.2,442.5 L326.5,442.3 L326.8,441.9 L327,441.3 L327.2,440.5 L327.5,439.8 L327.8,439.2 L328,438.2 L328.2,436.9 L328.5,435.9 L328.8,434.9 L329,433.3 L329.2,431.9 L329.5,430.9 L329.8,429 L330,429.2 L330.2,430.2 L330.5,431.8 L330.8,433.1 L331,434.3 L331.2,435.6 L331.5,436.9 L331.8,437.9 L332,439 L332.2,439.5 L332.5,440.7 L332.8,441.4 L333,441.7 L333.2,442.1 L333.5,442.6 L333.8,442.8 L334,442.7 L334.2,442.9 L334.5,442.9 L334.8,442.8 L335,442.9 L335.2,442.4 L335.5,442.1 L335.8,442 L336,441.3 L336.2,441 L336.5,440.2 L336.8,439.5 L337,438.6 L337.2,437.2 L337.5,436.2 L337.8,435 L338,433.7 L338.2,432.5 L338.5,431.4 L338.8,429.6 L339,428.3 L339.2,429.5 L339.5,431 L339.8,432.4 L340,434 L340.2,435.1 L340.5,436.2 L340.8,437.2 L341,438.4 L341.2,439.2 L341.5,440.1 L341.8,440.8 L342,441.2 L342.2,442 L342.5,442.3 L342.8,442.5 L343,442.7 L343.2,443 L343.5,442.9 L343.8,442.8 L344,443.1 L344.2,442.8 L344.5,442.6 L344.8,442 L345,441.5 L345.2,441.2 L345.5,440.3 L345.8,439.7 L346,438.8 L346.2,438 L346.5,436.7 L346.8,435.7 L347,434.4 L347.2,433 L347.5,431.8 L347.8,430.4 L348,429 L348.2,429.1 L348.5,430.6 L348.8,431.8 L349,433.2 L349.2,434.7 L349.5,435.9 L349.8,437 L350,438.2 L350.2,438.9 L350.5,439.6 L350.8,440.4 L351,441 L351.2,441.9 L351.5,442 L351.8,442.6 L352,442.7 L352.2,443 L352.5,442.8 L352.8,443.1 L353,443.1 L353.2,442.7 L353.5,442.5 L353.8,442.5 L354,441.9 L354.2,441.5 L354.5,440.6 L354.8,440 L355,439 L355.2,438 L355.5,437.2 L355.8,435.9 L356,434.6 L356.2,433.2 L356.5,432.2 L356.8,430.5 L357,429.2 L357.2,428.5 L357.5,429.6 L357.8,431.3 L358,432.8 L358.2,434.1 L358.5,435.2 L358.8,436.3 L359,437.4 L359.2,438.3 L359.5,439.5 L359.8,440.3 L360,440.9 L360.2,441.7 L360.5,442.3 L360.8,442.3 L361,442.5 L361.2,442.7 L361.5,443.1 L361.8,443.1 L362,442.9 L362.2,443.1 L362.5,442.9 L362.8,442.5 L363,441.9 L363.2,441.5 L363.5,441.1 L363.8,440.4 L364,439.4 L364.2,438.7 L364.5,437.5 L364.8,436.5 L365,435.2 L365.2,434 L365.5,432.8 L365.8,430.9 L366,429.5 L366.2,428.1 L366.5,429 L366.8,430.3 L367,431.8 L367.2,433.1 L367.5,434.6 L367.8,435.7 L368,437.1 L368.2,437.9 L368.5,439.2 L368.8,439.9 L369,440.7 L369.2,441.2 L369.5,441.8 L369.8,442.4 L370,442.7 L370.2,442.6 L370.5,442.9 L370.8,443.1 L371,443 L371.2,442.7 L371.5,442.6 L371.8,442.6 L372,442 L372.2,441.9 L372.5,441 L372.8,440.6 L373,439.5 L373.2,438.9 L373.5,437.8 L373.8,436.8 L374,435.7 L374.2,434.6 L374.5,432.9 L374.8,431.6 L375,429.9 L375.2,428.7 L375.5,428.4 L375.8,429.7 L376,431.4 L376.2,432.7 L376.5,434.1 L376.8,435.5 L377,436.3 L377.2,437.4 L377.5,438.4 L377.8,439.5 L378,440.4 L378.2,440.9 L378.5,441.5 L378.8,442.3 L379,442.4 L379.2,442.9 L379.5,442.9 L379.8,442.8 L380,442.9 L380.2,442.7 L380.5,442.7 L380.8,442.5 L381,442.4 L381.2,442.1 L381.5,441.5 L381.8,440.5 L382,440 L382.2,439.3 L382.5,438.1 L382.8,437.1 L383,436.3 L383.2,435 L383.5,433.4 L383.8,431.9 L384,430.8 L384.2,429.4 L384.5,427.8 L384.8,429.4 L385,430.5 L385.2,431.8 L385.5,433.3 L385.8,434.9 L386,435.8 L386.2,437.1 L386.5,438 L386.8,439.1 L387,439.9 L387.2,440.6 L387.5,441.3 L387.8,442 L388,442.2 L388.2,442.6 L388.5,442.9 L388.8,442.9 L389,442.8 L389.2,442.9 L389.5,442.7 L389.8,442.7 L390,442.4 L390.2,442 L390.5,441.5 L390.8,441 L391,440.4 L391.2,439.7 L391.5,438.5 L391.8,437.4 L392,436.4 L392.2,435.2 L392.5,434.1 L392.8,432.3 L393,431.4 L393.2,429.7 L393.5,428 L393.8,428.3 L394,430.1 L394.2,431.6 L394.5,433.1 L394.8,434 L395,435.5 L395.2,436.8 L395.5,437.8 L395.8,439 L396,439.4 L396.2,440.7 L396.5,440.9 L396.8,441.5 L397,442 L397.2,442.6 L397.5,443 L397.8,442.7 L398,442.8 L398.2,443 L398.5,442.8 L398.8,442.9 L399,442.5 L399.2,442.1 L399.5,441.8 L399.8,441.1 L400,440.7 L400.2,439.6 L400.5,438.7 L400.8,438 L401,436.8 L401.2,435.7 L401.5,434.2 L401.8,433.2 L402,431.7 L402.2,430 L402.5,428.6 L402.8,427.6 L403,429 L403.2,430.9 L403.5,432.3 L403.8,433.6 L404,434.7 L404.2,436.2 L404.5,437.4 L404.8,438.4 L405,439.1 L405.2,439.9 L405.5,440.7 L405.8,441.6 L406,442.1 L406.2,442.3 L406.5,442.7 L406.8,442.7 L407,442.9 L407.2,442.9 L407.5,443 L407.8,442.9 L408,442.9 L408.2,442.5 L408.5,441.9 L408.8,441.5 L409,440.9 L409.2,440.2 L409.5,439.1 L409.8,438.4 L410,437 L410.2,435.9 L410.5,434.9 L410.8,433.3 L411,432.3 L411.2,430.9 L411.5,428.9 L411.8,427.8 L412,428.4 L412.2,430 L412.5,431.7 L412.8,432.8 L413,434.2 L413.2,435.7 L413.5,436.7 L413.8,438 L414,438.9 L414.2,439.6 L414.5,440.5 L414.8,441 L415,441.8 L415.2,442.2 L415.5,442.5 L415.8,442.8 L416,443.1 L416.2,443.1 L416.5,443 L416.8,443.1 L417,442.8 L417.2,442.3 L417.5,442.3 L417.8,441.7 L418,441.2 L418.2,440.2 L418.5,439.7 L418.8,438.7 L419,437.7 L419.2,436.5 L419.5,435.4 L419.8,433.8 L420,432.6 L420.2,431 L420.5,429.7 L420.8,428 L421,427.6 L421.2,429.5 L421.5,430.9 L421.8,432.5 L422,433.8 L422.2,434.8 L422.5,436.4 L422.8,437.2 L423,438.3 L423.2,439.2 L423.5,440.3 L423.8,440.8 L424,441.5 L424.2,442 L424.5,442.6 L424.8,442.7 L425,443 L425.2,442.9 L425.5,443 L425.8,443 L426,442.7 L426.2,442.5 L426.5,442.4 L426.8,442 L427,441.4 L427.2,440.5 L427.5,439.8 L427.8,439.1 L428,438 L428.2,436.9 L428.5,435.8 L428.8,434.5 L429,433.1 L429.2,431.6 L429.5,430.2 L429.8,428.6 L430,426.9 L430.2,428.5 L430.5,430.1 L430.8,431.8 L431,432.9 L431.2,434.6 L431.5,435.9 L431.8,437.1 L432,437.9 L432.2,439.3 L432.5,440.1 L432.8,440.5 L433,441.2 L433.2,441.7 L433.5,442.5 L433.8,442.7 L434,442.9 L434.2,442.8 L434.5,442.8 L434.8,443.1 L435,442.8 L435.2,442.7 L435.5,442.3 L435.8,441.9 L436,441.3 L436.2,440.9 L436.5,440.1 L436.8,439.5 L437,438.5 L437.2,437.1 L437.5,436.3 L437.8,434.9 L438,433.4 L438.2,432.3 L438.5,430.6 L438.8,429 L439,427.3 L439.2,427.7 L439.5,429.2 L439.8,431 L440,432.4 L440.2,433.6 L440.5,435.2 L440.8,436.5 L441,437.7 L441.2,438.7 L441.5,439.7 L441.8,440.6 L442,441.2 L442.2,441.7 L442.5,442.2 L442.8,442.4 L443,442.8 L443.2,442.8 L443.5,442.9 L443.8,443.2 L444,443.2 L444.2,442.8 L444.5,442.7 L444.8,442 L445,441.8 L445.2,441.1 L445.5,440.6 L445.8,439.5 L446,438.7 L446.2,437.7 L446.5,436.4 L446.8,435.4 L447,434 L447.2,432.8 L447.5,431.3 L447.8,429.6 L448,428 L448.2,427.1 L448.5,428.5 L448.8,430.5 L449,431.8 L449.2,433.4 L449.5,434.7 L449.8,435.7 L450,436.9 L450.2,438.3 L450.5,439.2 L450.8,439.9 L451,440.8 L451.2,441.4 L451.5,442.1 L451.8,442.4 L452,442.5 L452.2,442.8 L452.5,442.9 L452.8,443.2 L453,442.8 L453.2,443.1 L453.5,442.5 L453.8,442.2 L454,441.9 L454.2,441.5 L454.5,441 L454.8,440.1 L455,439 L455.2,438.2 L455.5,437.2 L455.8,436 L456,434.3 L456.2,433.1 L456.5,431.7 L456.8,430.4 L457,428.4 L457.2,426.9 L457.5,428.2 L457.8,429.5 L458,430.9 L458.2,432.5 L458.5,434.1 L458.8,435.3 L459,436.6 L459.2,437.5 L459.5,438.7 L459.8,439.8 L460,440.4 L460.2,441.3 L460.5,442 L460.8,442.2 L461,442.8 L461.2,442.8 L461.5,443.2 L461.8,442.8 L462,442.9 L462.2,443 L462.5,443 L462.8,442.7 L463,442.1 L463.2,441.7 L463.5,441 L463.8,440.3 L464,439.6 L464.2,438.3 L464.5,437.6 L464.8,436.3 L465,435 L465.2,433.5 L465.5,432.3 L465.8,430.5 L466,429.1 L466.2,427.4 L466.5,427 L466.8,428.9 L467,430.4 L467.2,431.8 L467.5,433.2 L467.8,434.7 L468,436.2 L468.2,437.3 L468.5,438.5 L468.8,439.2 L469,439.9 L469.2,440.7 L469.5,441.5 L469.8,442.3 L470,442.7 L470.2,442.8 L470.5,442.7 L470.8,443.1 L471,443.1 L471.2,442.9 L471.5,442.8 L471.8,442.8 L472,442.1 L472.2,442.1 L472.5,441.5 L472.8,440.5 L473,439.6 L473.2,438.9 L473.5,437.8 L473.8,436.9 L474,435.5 L474.2,434 L474.5,433 L474.8,431.4 L475,429.5 L475.2,428.3 L475.5,426.4 L475.8,428.3 L476,429.7 L476.2,431.2 L476.5,432.5 L476.8,434 L477,435.5 L477.2,436.7 L477.5,437.9 L477.8,438.9 L478,440 L478.2,440.7 L478.5,441.2 L478.8,442 L479,442.1 L479.2,442.5 L479.5,443 L479.8,443.1 L480,443.2 L480.2,442.9 L480.5,442.8 L480.8,442.6 L481,442.3 L481.2,442 L481.5,441.4 L481.8,440.9 L482,440.4 L482.2,439.4 L482.5,438.5 L482.8,437.2 L483,435.9 L483.2,434.8 L483.5,433.1 L483.8,431.6 L484,430 L484.2,428.8 L484.5,427.2 L484.8,427.2 L485,429 L485.2,430.5 L485.5,432 L485.8,433.7 L486,435 L486.2,436.1 L486.5,437.4 L486.8,438.3 L487,439.6 L487.2,440.5 L487.5,441 L487.8,441.5 L488,442.1 L488.2,442.7 L488.5,442.7 L488.8,442.8 L489,443 L489.2,442.9 L489.5,442.8 L489.8,442.7 L490,442.5 L490.2,442.1 L490.5,441.5 L490.8,441.2 L491,440.6 L491.2,439.3 L491.5,438.8 L491.8,437.7 L492,436.4 L492.2,434.9 L492.5,433.8 L492.8,432.3 L493,431 L493.2,429.2 L493.5,427.5 L493.8,426.3 L494,428 L494.2,429.9 L494.5,431.5 L494.8,432.8 L495,434.4 L495.2,435.5 L495.5,436.8 L495.8,438.2 L496,438.8 L496.2,439.9 L496.5,440.9 L496.8,441.2 L497,441.7 L497.2,442.1 L497.5,442.6 L497.8,442.9 L498,443 L498.2,443.1 L498.5,443.1 L498.8,442.6 L499,442.9 L499.2,442.6 L499.5,442.1 L499.8,441.1 L500,440.6 L500.2,439.7 L500.5,439.1 L500.8,437.8 L501,436.8 L501.2,435.3 L501.5,434.4 L501.8,433 L502,431 L502.2,429.9 L502.5,428.1 L502.8,426.5 L503,427.2 L503.2,429 L503.5,430.7 L503.8,432.2 L504,433.8 L504.2,435 L504.5,436.1 L504.8,437.3 L505,438.7 L505.2,439.5 L505.5,440.6 L505.8,441.3 L506,441.9 L506.2,442.4 L506.5,442.6 L506.8,442.7 L507,443 L507.2,442.8 L507.5,442.9 L507.8,443 L508,442.6 L508.2,442.5 L508.5,442.2 L508.8,441.7 L509,441.1 L509.2,440 L509.5,439.5 L509.8,438.3 L510,437.2 L510.2,436.2 L510.5,434.8 L510.8,433.1 L511,431.7 L511.2,430.2 L511.5,428.7 L511.8,426.8 L512,426.7 L512.2,428.1 L512.5,429.8 L512.8,431.3 L513,432.9 L513.2,434.6 L513.5,435.8 L513.8,437.1 L514,437.9 L514.2,439 L514.5,440.2 L514.8,440.6 L515,441.2 L515.2,442.1 L515.5,442.3 L515.8,442.8 L516,442.8 L516.2,443 L516.5,443.2 L516.8,443.1 L517,442.9 L517.2,442.6 L517.5,442.4 L517.8,442 L518,441.3 L518.2,440.4 L518.5,439.8 L518.8,438.7 L519,437.9 L519.2,436.7 L519.5,435.4 L519.8,433.6 L520,432.2 L520.2,431 L520.5,429 L520.8,427.5 L521,425.7 L521.2,427.6 L521.5,429.2 L521.8,430.6 L522,432.4 L522.2,434 L522.5,435 L522.8,436.7 L523,437.8 L523.2,438.9 L523.5,439.7 L523.8,440.7 L524,441.3 L524.2,441.7 L524.5,442.3 L524.8,442.4 L525,442.9 L525.2,442.8 L525.5,443.2 L525.8,443.1 L526,442.8 L526.2,442.5 L526.5,442.2 L526.8,442 L527,441.3 L527.2,441 L527.5,439.9 L527.8,439.1 L528,437.9 L528.2,437 L528.5,435.7 L528.8,434.3 L529,432.7 L529.2,431.5 L529.5,429.7 L529.8,428.3 L530,426.6 L530.2,427 L530.5,428.5 L530.8,429.9 L531,431.6 L531.2,432.9 L531.5,434.7 L531.8,436 L532,437.3 L532.2,438.2 L532.5,439.4 L532.8,440.3 L533,440.7 L533.2,441.8 L533.5,441.9 L533.8,442.3 L534,442.7 L534.2,443.1 L534.5,443.1 L534.8,443 L535,443 L535.2,442.7 L535.5,442.3 L535.8,442 L536,441.5 L536.2,441 L536.5,440.4 L536.8,439.5 L537,438.7 L537.2,437.5 L537.5,436.2 L537.8,434.8 L538,433.4 L538.2,431.8 L538.5,430.5 L538.8,428.8 L539,427.2 L539.2,426.2 L539.5,427.8 L539.8,429.5 L540,430.9 L540.2,432.5 L540.5,433.9 L540.8,435.5 L541,436.4 L541.2,438 L541.5,438.7 L541.8,439.6 L542,440.8 L542.2,441.1 L542.5,441.8 L542.8,442.4 L543,442.8 L543.2,443.1 L543.5,443 L543.8,443.2 L544,443.2 L544.2,442.8 L544.5,442.9 L544.8,442.1 L545,441.7 L545.2,441.3 L545.5,440.7 L545.8,439.8 L546,438.9 L546.2,437.6 L546.5,436.7 L546.8,435.4 L547,433.7 L547.2,432.6 L547.5,431.1 L547.8,429.2 L548,427.3 L548.2,426 L548.5,427.1 L548.8,428.7 L549,430.2 L549.2,431.9 L549.5,433.5 L549.8,434.7 L550,436.3 L550.2,437.3 L550.5,438.2 L550.8,439.2 L551,440.2 L551.2,441.3 L551.5,441.6 L551.8,442.2 L552,442.4 L552.2,442.9 L552.5,443.1 L552.8,442.9 L553,443 L553.2,442.9 L553.5,442.8 L553.8,442.7 L554,442.1 L554.2,441.5 L554.5,440.9 L554.8,440.3 L555,439 L555.2,438.3 L555.5,437.2 L555.8,436 L556,434.2 L556.2,432.8 L556.5,431.6 L556.8,429.7 L557,428 L557.2,426.3 L557.5,425.9 L557.8,427.6 L558,429.4 L558.2,430.9 L558.5,432.6 L558.8,434.2 L559,435.3 L559.2,436.8 L559.5,438.1 L559.8,438.8 L560,439.9 L560.2,440.8 L560.5,441.3 L560.8,442 L561,442.6 L561.2,442.6 L561.5,442.9 L561.8,442.9 L562,443 L562.2,443.1 L562.5,442.9 L562.8,442.8 L563,442.1 L563.2,441.9 L563.5,441.4 L563.8,440.3 L564,439.5 L564.2,438.7 L564.5,437.4 L564.8,436 L565,434.7 L565.2,433.5 L565.5,432.1 L565.8,430.5 L566,428.6 L566.2,426.9 L566.5,425.4 L566.8,426.7 L567,428.5 L567.2,430.3 L567.5,431.9 L567.8,433.2 L568,434.7 L568.2,436.4 L568.5,437.3 L568.8,438.6 L569,439.7 L569.2,440.3 L569.5,441.3 L569.8,441.8 L570,442.2 L570.2,442.7 L570.5,442.9 L570.8,442.8 L571,443.2 L571.2,442.7 L571.5,442.7 L571.8,442.6 L572,442.2 L572.2,441.8 L572.5,441.4 L572.8,440.7 L573,439.7 L573.2,439 L573.5,438.1 L573.8,436.9 L574,435.3 L574.2,433.8 L574.5,432.7 L574.8,431.1 L575,429.4 L575.2,427.4 L575.5,425.8 L575.8,426.1 L576,428.1 L576.2,429.7 L576.5,431.3 L576.8,432.6 L577,434.3 L577.2,435.7 L577.5,436.8 L577.8,438.2 L578,439 L578.2,440.2 L578.5,440.9 L578.8,441.5 L579,441.9 L579.2,442.5 L579.5,442.6 L579.8,442.8 L580,443 L580.2,443.1 L580.5,442.9 L580.8,443 L581,442.3 L581.2,442.2 L581.5,441.7 L581.8,441.1 L582,440.1 L582.2,439.2 L582.5,438.2 L582.8,437.1 L583,435.8 L583.2,434.6 L583.5,433.3 L583.8,431.4 L584,429.8 L584.2,428.3 L584.5,426.3 L584.8,425.5 L585,427 L585.2,429.1 L585.5,430.3 L585.8,432.2 L586,433.6 L586.2,435.2 L586.5,436.3 L586.8,437.4 L587,438.8 L587.2,439.5 L587.5,440.4 L587.8,441.4 L588,441.9 L588.2,442.4 L588.5,442.8 L588.8,442.8 L589,442.9 L589.2,442.8 L589.5,443.1 L589.8,442.8 L590,442.7 L590.2,442.1 L590.5,441.7 L590.8,441.4 L591,440.7 L591.2,439.6 L591.5,438.8 L591.8,437.6 L592,436.4 L592.2,434.9 L592.5,433.5 L592.8,432.1 L593,430.3 L593.2,429 L593.5,427 L593.8,425.5 L594,426.1 L594.2,428.1 L594.5,429.9 L594.8,431.3 L595,433.1 L595.2,434.3 L595.5,435.9 L595.8,437 L596,438.2 L596.2,439.5 L596.5,440 L596.8,440.8 L597,441.5 L597.2,441.9 L597.5,442.3 L597.8,442.6 L598,442.9 L598.2,443.1 L598.5,443.1 L598.8,443 L599,442.6 L599.2,442.6 L599.5,442.2 L599.8,441.6 L600,440.7 L600.2,440.1 L600.5,439.1 L600.8,438.2 L601,436.9 L601.2,435.6 L601.5,434.1 L601.8,432.6 L602,431.2 L602.2,429.2 L602.5,427.5 L602.8,426 L603,425.4 L603.2,427.1 L603.5,429 L603.8,430.6 L604,432.3 L604.2,433.6 L604.5,435.3 L604.8,436.6 L605,438 L605.2,439 L605.5,439.6 L605.8,440.4 L606,441.2 L606.2,441.8 L606.5,442.3 L606.8,442.5 L607,443.1 L607.2,443 L607.5,442.8 L607.8,443.1 L608,442.7 L608.2,442.4 L608.5,442.4 L608.8,441.9 L609,441.3 L609.2,440.4 L609.5,439.5 L609.8,438.4 L610,437.3 L610.2,436.2 L610.5,434.6 L610.8,433.2 L611,431.5 L611.2,429.9 L611.5,428.1 L611.8,426.6 L612,424.5 L612.2,426.6 L612.5,428.1 L612.8,430.1 L613,431.4 L613.2,433 L613.5,434.4 L613.8,436 L614,437.4 L614.2,438.6 L614.5,439.2 L614.8,440.4 L615,440.9 L615.2,441.8 L615.5,442.1 L615.8,442.4 L616,442.7 L616.2,442.9 L616.5,442.8 L616.8,443.1 L617,442.9 L617.2,442.6 L617.5,442.3 L617.8,441.9 L618,441.5 L618.2,440.8 L618.5,439.8 L618.8,438.9 L619,437.7 L619.2,436.4 L619.5,435.4 L619.8,433.8 L620,432 L620.2,430.4 L620.5,428.9 L620.8,427.2 L621,425 L621.2,425.5 L621.5,427.5 L621.8,429.2 L622,431 L622.2,432.4 L622.5,433.8 L622.8,435.5 L623,436.9 L623.2,437.9 L623.5,439 L623.8,440.1 L624,440.6 L624.2,441.5 L624.5,441.8 L624.8,442.2 L625,442.7 L625.2,443 L625.5,442.9 L625.8,442.9 L626,442.9 L626.2,442.6 L626.5,442.6 L626.8,442.3 L627,441.6 L627.2,440.8 L627.5,440.1 L627.8,439.1 L628,438.2 L628.2,436.9 L628.5,435.7 L628.8,434.1 L629,432.5 L629.2,431.2 L629.5,429.3 L629.8,427.8 L630,425.9 L630.2,424.5 L630.5,426.4 L630.8,428.6 L631,430.1 L631.2,431.5 L631.5,433.1 L631.8,434.8 L632,436.1 L632.2,437.4 L632.5,438.7 L632.8,439.7 L633,440.3 L633.2,441.2 L633.5,441.6 L633.8,442.1 L634,442.7 L634.2,442.9 L634.5,443.1 L634.8,442.8 L635,443.2 L635.2,442.8 L635.5,442.6 L635.8,442.2 L636,441.7 L636.2,441.1 L636.5,440.3 L636.8,439.7 L637,438.5 L637.2,437.6 L637.5,436.2 L637.8,434.8 L638,433.1 L638.2,431.6 L638.5,430 L638.8,428.5 L639,426.7 L639.2,424.5 L639.5,425.7 L639.8,427.7 L640,429.5 L640.2,430.8 L640.5,432.8 L640.8,434.1 L641,435.8 L641.2,436.7 L641.5,437.9 L641.8,439.1 L642,440.3 L642.2,440.7 L642.5,441.5 L642.8,441.9 L643,442.4 L643.2,443 L643.5,443 L643.8,442.9 L644,442.9 L644.2,442.8 L644.5,442.5 L644.8,442.5 L645,442 L645.2,441.3 L645.5,440.7 L645.8,439.9 L646,438.9 L646.2,437.6 L646.5,436.6 L646.8,435.2 L647,434 L647.2,432.4 L647.5,430.5 L647.8,428.9 L648,427.2 L648.2,425 L648.5,425.1 L648.8,426.5 L649,428.5 L649.2,430.4 L649.5,431.9 L649.8,433.4 L650,434.8 L650.2,436.5 L650.5,437.4 L650.8,438.8 L651,439.5 L651.2,440.7 L651.5,441.1 L651.8,441.8 L652,442.2 L652.2,442.9 L652.5,442.9 L652.8,443.1 L653,443 L653.2,442.8 L653.5,442.9 L653.8,442.3 L654,442.2 L654.2,441.5 L654.5,440.9 L654.8,440.1 L655,439.5 L655.2,438.4 L655.5,437.3 L655.8,435.7 L656,434.2 L656.2,432.8 L656.5,431.3 L656.8,429.7 L657,427.5 L657.2,426 L657.5,424.1 L657.8,426.1 L658,427.9 L658.2,429.5 L658.5,431 L658.8,432.8 L659,443.2 L659.2,443 L659.5,443.1 L659.8,443 L660,443.1 L660.2,443.1 L660.5,442.9 L660.8,443 L661,443 L661.2,442.9 L661.5,443.1 L661.8,442.9 L662,443 L662.2,443 L662.5,442.9 L662.8,442.9 L663,443.1 L663.2,443.3 L663.5,443.1 L663.8,443 L664,443 L664.2,443.1 L664.5,443.1 L664.8,443.1 L665,443 L665.2,442.8 L665.5,442.8 L665.8,442.7 L666,443.1 L666.2,442.9 L666.5,443 L666.8,442.9 L667,443 L667.2,443 L667.5,443.2 L667.8,442.9 L668,443.3 L668.2,443.3 L668.5,443 L668.8,443.3 L669,443 L669.2,443.1 L669.5,443.2 L669.8,442.7 L670,442.9 L670.2,442.8 L670.5,443.1 L670.8,442.9 L671,442.9 L671.2,442.9 L671.5,442.7 L671.8,443 L672,443.2 L672.2,443 L672.5,443.2 L672.8,443.2 L673,443.2 L673.2,443 L673.5,443.1 L673.8,443 L674,442.9 L674.2,443 L674.5,443.1 L674.8,442.8 L675,443.1 L675.2,442.6 L675.5,443.1 L675.8,442.8 L676,443.1 L676.2,443.1 L676.5,442.9 L676.8,442.9 L677,443.2 L677.2,443.2 L677.5,443 L677.8,443.2 L678,442.9 L678.2,442.9 L678.5,442.9 L678.8,443.2 L679,443.1 L679.2,443.2 L679.5,442.9 L679.8,443 L680,442.8 L680.2,442.7 L680.5,443.1 L680.8,443 L681,443.1 L681.2,442.9 L681.5,442.8 L681.8,443 L682,443.1 L682.2,443.3 L682.5,443.1 L682.8,442.9 L683,443.1 L683.2,442.9 L683.5,443.1 L683.8,443.1 L684,442.7 L684.2,443.1 L684.5,442.9 L684.8,442.9 L685,442.9 L685.2,443 L685.5,443 L685.8,442.9 L686,442.7 L686.2,442.9 L686.5,443.1 L686.8,442.9 L687,442.9 L687.2,443.3 L687.5,443.3 L687.8,443 L688,442.9 L688.2,443.1 L688.5,443 L688.8,442.8 L689,443.1 L689.2,442.7 L689.5,442.9 L689.8,442.9 L690,442.7 L690.2,443 L690.5,442.9 L690.8,442.9 L691,443.1 L691.2,443 L691.5,443.2 L691.8,443.1 L692,443 L692.2,443.1 L692.5,443 L692.8,443 L693,442.9 L693.2,443.3 L693.5,443.2 L693.8,443.1 L694,442.7 L694.2,442.7 L694.5,442.8 L694.8,442.7 L695,442.9 L695.2,442.9 L695.5,442.7 L695.8,443.1 L696,443.1 L696.2,442.9 L696.5,442.9 L696.8,443.3 L697,443.1 L697.2,443.2 L697.5,443.2 L697.8,442.9 L698,443.3 L698.2,443.2 L698.5,443.2 L698.8,443.1 L699,443.1 L699.2,443 L699.5,442.7 L699.8,442.9 L700,442.8 L700.2,442.7 L700.5,442.7 L700.8,442.8 L701,443.2 L701.2,442.9 L701.5,443.2 L701.8,443 L702,443.1 L702.2,443.2 L702.5,443.2 L702.8,443.2 L703,443 L703.2,443.2 L703.5,443 L703.8,443 L704,442.8 L704.2,442.7 L704.5,443 L704.8,443 L705,442.9 L705.2,442.9 L705.5,443 L705.8,443.1 L706,443.1 L706.2,443.3 L706.5,443 L706.8,443.3 L707,443.3 L707.2,443.3 L707.5,443.1 L707.8,443.2 L708,442.8 L708.2,443 L708.5,442.8 L708.8,442.7 L709,442.9 L709.2,443 L709.5,442.8 L709.8,443.1 L710,442.8 L710.2,443.1 L710.5,443.1 L710.8,442.9 L711,443.3 L711.2,443.2 L711.5,443.1 L711.8,443.3 L712,443.2 L712.2,443.2 L712.5,443.1 L712.8,443.2 L713,442.8 L713.2,442.9 L713.5,443.1 L713.8,442.6 L714,443 L714.2,442.9 L714.5,442.8 L714.8,442.9 L715,443.2 L715.2,443.1 L715.5,443.1 L715.8,442.9 L716,443.1 L716.2,443.1 L716.5,442.9 L716.8,443.2 L717,443.2 L717.2,443.1 L717.5,442.9 L717.8,442.9 L718,442.8 L718.2,443.1 L718.5,442.7 L718.8,442.9 L719,442.9 L719.2,442.7 L719.5,442.8 L719.8,443.1 L720,443 L720.2,442.8 L720.5,443.1 L720.8,443 L721,443.4 L721.2,443.1 L721.5,443 L721.8,443 L722,443.3 L722.2,443.1 L722.5,442.8 L722.8,442.8 L723,443 L723.2,442.9 L723.5,442.7 L723.8,443 L724,442.6 L724.2,443.1 L724.5,443.1 L724.8,442.7 L725,443.1 L725.2,443.2 L725.5,443.2 L725.8,443.3 L726,443.4 L726.2,443.1 L726.5,443 L726.8,442.9 L727,442.9 L727.2,442.9 L727.5,442.8 L727.8,442.8 L728,442.8 L728.2,442.9 L728.5,442.6 L728.8,443 L729,443 L729.2,442.9 L729.5,443 L729.8,443.2 L730,442.9 L730.2,443.3 L730.5,443.3 L730.8,443 L731,442.9 L731.2,443.3 L731.5,443.1 L731.8,443.3 L732,442.9 L732.2,442.9 L732.5,442.8 L732.8,443.1 L733,443 L733.2,442.7 L733.5,442.7 L733.8,442.8 L734,442.8 L734.2,442.9 L734.5,442.8 L734.8,442.9 L735,443.1 L735.2,443.1 L735.5,443.4 L735.8,443 L736,443.1 L736.2,443.3 L736.5,442.9 L736.8,443.2 L737,443 L737.2,442.8 L737.5,442.8 L737.8,442.8 L738,442.9 L738.2,443 L738.5,442.9 L738.8,442.7 L739,443.1 L739.2,443 L739.5,442.9 L739.8,442.8 L740,443.3 L740.2,443.2 L740.5,443.4 L740.8,443.1 L741,443.1 L741.2,443.2 L741.5,443.3 L741.8,443 L742,442.9 L742.2,443 L742.5,443 L742.8,442.6 L743,442.8 L743.2,442.7 L743.5,442.6 L743.8,443.1 L744,442.9 L744.2,443.2 L744.5,442.9 L744.8,443.2 L745,443 L745.2,443.1 L745.5,443.4 L745.8,443 L746,443.2 L746.2,443.2 L746.5,442.9 L746.8,443 L747,443 L747.2,442.8 L747.5,442.9 L747.8,442.7 L748,443 L748.2,442.8 L748.5,443 L748.8,442.7 L749,442.9 L749.2,442.8 L749.5,442.9 L749.8,443.1 L750,443 L750.2,443.3 L750.5,443 L750.8,443.1 L751,443.2 L751.2,443.1 L751.5,443 L751.8,442.8 L752,443.1 L752.2,442.8 L752.5,443.1 L752.8,442.8 L753,442.8 L753.2,442.9 L753.5,443 L753.8,443 L754,443.2 L754.2,443.1 L754.5,442.9 L754.8,443.2 L755,443.2 L755.2,443 L755.5,443 L755.8,442.9 L756,443.2 L756.2,443.1 L756.5,443.1 L756.8,442.8 L757,442.8 L757.2,442.7 L757.5,442.9 L757.8,442.7 L758,443.1 L758.2,442.7 L758.5,442.9 L758.8,443.1 L759,443 L759.2,442.9 L759.5,442.9 L759.8,443.3 L760,443.3 L760.2,443.2 L760.5,442.9 L760.8,443.1 L761,443.2 L761.2,443 L761.5,442.9 L761.8,443 L762,442.8 L762.2,442.7 L762.5,442.8 L762.8,442.7 L763,443.1 L763.2,443.1 L763.5,443.1 L763.8,443 L764,443.3 L764.2,443.2 L764.5,443.4 L764.8,443.3 L765,443.4 L765.2,443.2 L765.5,442.9 L765.8,443.1 L766,442.9 L766.2,442.7 L766.5,442.9 L766.8,442.9 L767,442.7 L767.2,442.7 L767.5,442.7 L767.8,442.6 L768,442.9 L768.2,443 L768.5,442.8 L768.8,443.1 L769,442.9 L769.2,443.4 L769.5,443.1 L769.8,443.1 L770,443 L770.2,443.3 L770.5,443 L770.8,443.2 L771,442.9 L771.2,443 L771.5,443 L771.8,442.6 L772,442.8 L772.2,443 L772.5,442.9 L772.8,442.8 L773,443.1 L773.2,442.9 L773.5,443 L773.8,442.9 L774,443.1 L774.2,443.1 L774.5,443.3 L774.8,443.4 L775,442.9 L775.2,443 L775.5,443 L775.8,443.2 L776,443.1 L776.2,442.9 L776.5,442.9 L776.8,442.9 L777,443.1 L777.2,442.8 L777.5,442.8 L777.8,443.1 L778,442.8 L778.2,443.1 L778.5,443 L778.8,443.1 L779,443.3 L779.2,442.9 L779.5,443.3 L779.8,443.3 L780,443.3 L780.2,443.3 L780.5,442.8 L780.8,442.8 L781,443.1 L781.2,443 L781.5,443 L781.8,442.8 L782,442.8 L782.2,443 L782.5,442.9 L782.8,443 L783,442.9 L783.2,442.9 L783.5,443.3 L783.8,443.1 L784,443 L784.2,443 L784.5,443.1 L784.8,443.2 L785,442.9 L785.2,442.9 L785.5,442.9 L785.8,442.7 L786,443 L786.2,442.6 L786.5,443.1 L786.8,442.6 L787,442.9 L787.2,442.7 L787.5,443.1 L787.8,443.2 L788,442.8 L788.2,443 L788.5,443.2 L788.8,443.3 L789,443.2 L789.2,443 L789.5,442.9 L789.8,442.9 L790,443.2 L790.2,443 L790.5,442.9 L790.8,442.7 L791,442.8 L791.2,443.1 L791.5,442.8 L791.8,442.8 L792,442.8 L792.2,442.7 L792.5,442.9 L792.8,443.1 L793,442.9 L793.2,443.3 L793.5,443.1 L793.8,443 L794,443.1 L794.2,443.2 L794.5,443.2 L794.8,443.1 L795,443.2 L795.2,442.9 L795.5,443 L795.8,442.7 L796,442.9 L796.2,442.9 L796.5,443.1 L796.8,443 L797,442.8 L797.2,443.1 L797.5,443.1 L797.8,443.1 L798,443.2 L798.2,443.1 L798.5,443.1 L798.8,443 L799,443.4 L799.2,443.1 L799.5,443.3 L799.8,443.1 L800,442.8 L800.2,443.1 L800.5,442.7 L800.8,442.9 L801,442.8 L801.2,442.9 L801.5,442.8 L801.8,443 L802,443.2 L802.2,443.1 L802.5,442.9 L802.8,442.9 L803,443 L803.2,443.4 L803.5,443.1 L803.8,443 L804,443.1 L804.2,443 L804.5,442.9 L804.8,443.1 L805,442.9 L805.2,443 L805.5,443 L805.8,442.9 L806,442.9 L806.2,442.9 L806.5,443 L806.8,443 L807,443.1 L807.2,442.8 L807.5,443.1 L807.8,443.3 L808,443.1 L808.2,443.4 L808.5,443.4 L808.8,443.3 L809,442.9 L809.2,443.2 L809.5,443 L809.8,443 L810,443 L810.2,442.9 L810.5,442.6 L810.8,442.7 L811,443 L811.2,443.1 L811.5,443.1 L811.8,442.8 L812,443.2 L812.2,442.8 L812.5,442.9 L812.8,443.3 L813,443.2 L813.2,443.2 L813.5,443 L813.8,443.1 L814,443.1 L814.2,443.1 L814.5,443.1 L814.8,443.1 L815,443 L815.2,443.1 L815.5,443.1 L815.8,442.6 L816,442.6 L816.2,442.9 L816.5,443.1 L816.8,443.2 L817,443.1 L817.2,443.2 L817.5,443.2 L817.8,443.2 L818,443.2 L818.2,443.1 L818.5,443 L818.8,442.9 L819,442.8 L819.2,443.2 L819.5,443 L819.8,443 L820,442.8 L820.2,442.7 L820.5,443 L820.8,442.8 L821,443.1 L821.2,443.1 L821.5,443 L821.8,443 L822,443 L822.2,443 L822.5,443.2 L822.8,443.2 L823,443.1 L823.2,443.3 L823.5,443 L823.8,443 L824,442.8 L824.2,442.8 L824.5,443 L824.8,443.1 L825,443.1 L825.2,442.9 L825.5,442.9 L825.8,442.8 L826,443.1 L826.2,442.9 L826.5,443.1 L826.8,443 L827,443.2 L827.2,443.3 L827.5,443.3 L827.8,443.1 L828,443.2 L828.2,443 L828.5,442.8 L828.8,443.2 L829,443.1 L829.2,442.9 L829.5,442.8 L829.8,442.9 L830,442.8 L830.2,442.6 L830.5,442.7 L830.8,442.9 L831,443 L831.2,443 L831.5,443.1 L831.8,443.3 L832,443.3 L832.2,443.2 L832.5,443.1 L832.8,443.2 L833,443.2 L833.2,443.2 L833.5,442.9 L833.8,442.7 L834,442.9 L834.2,442.9 L834.5,443.1 L834.8,443 L835,442.9 L835.2,442.7 L835.5,443 L835.8,443.1 L836,442.9 L836.2,443.3 L836.5,443.3 L836.8,443.1 L837,443.1 L837.2,443.3 L837.5,442.9 L837.8,443.4 L838,443.3 L838.2,442.8 L838.5,443 L838.8,442.8 L839,442.8 L839.2,442.8 L839.5,442.9 L839.8,442.6 L840,442.7 L840.2,442.7 L840.5,442.9 L840.8,442.8 L841,443 L841.2,443 L841.5,443 L841.8,443 L842,443.1 L842.2,443.3 L842.5,442.9 L842.8,443.2 L843,443.1 L843.2,443.1 L843.5,442.8 L843.8,442.7 L844,442.8 L844.2,443.1 L844.5,443 L844.8,443 L845,443.1 L845.2,442.7 L845.5,443.2 L845.8,442.9 L846,443.1 L846.2,443.1 L846.5,443.3 L846.8,443.2 L847,443 L847.2,443.1 L847.5,443.2 L847.8,443.1 L848,443 L848.2,443.1 L848.5,443 L848.8,443 L849,442.7 L849.2,442.9 L849.5,442.7 L849.8,443 L850,442.9 L850.2,442.8 L850.5,443.2 L850.8,443 L851,443.3 L851.2,443 L851.5,443.1 L851.8,443 L852,443 L852.2,443.3 L852.5,443.3 L852.8,443.3 L853,442.9 L853.2,443.1 L853.5,442.7 L853.8,442.9 L854,442.8 L854.2,443 L854.5,442.9 L854.8,442.8 L855,442.8 L855.2,443.2 L855.5,443.2 L855.8,443.1 L856,442.9 L856.2,443.2 L856.5,443.1 L856.8,443 L857,443 L857.2,442.9 L857.5,442.9 L857.8,443.1 L858,443 L858.2,442.7 L858.5,442.9 L858.8,442.7 L859,443 L859.2,442.7 L859.5,442.9 L859.8,443.1 L860,442.7 L860.2,443.2 L860.5,442.8 L860.8,443 L861,443.1 L861.2,442.9 L861.5,443.3 L861.8,443 L862,443.2 L862.2,443.1 L862.5,443.3 L862.8,443.1 L863,443.1 L863.2,442.9 L863.5,443.1 L863.8,442.7 L864,443 L864.2,442.7 L864.5,442.9 L864.8,443 L865,443 L865.2,443.2 L865.5,443.1 L865.8,443 L866,443.3 L866.2,443 L866.5,443.3 L866.8,443 L867,443.2 L867.2,442.8 L867.5,443.1 L867.8,443 L868,442.9 L868.2,442.9 L868.5,442.9 L868.8,442.6 L869,443 L869.2,442.9 L869.5,442.9 L869.8,442.9 L870,443.1 L870.2,443.2 L870.5,442.9 L870.8,443 L871,443.1 L871.2,443.4 L871.5,443.2 L871.8,443.1 L872,443 L872.2,443.1 L872.5,442.8 L872.8,443 L873,443.1 L873.2,443.1 L873.5,442.9 L873.8,443.1 L874,442.9 L874.2,442.7 L874.5,443 L874.8,443.2 L875,442.9 L875.2,442.9 L875.5,443.2 L875.8,443.3 L876,443 L876.2,443.3 L876.5,443.3 L876.8,442.9 L877,443.1 L877.2,443 L877.5,442.9 L877.8,442.9 L878,442.6 L878.2,442.7 L878.5,442.8 L878.8,442.9 L879,442.9 L879.2,443.1 L879.5,443.1 L879.8,443.3 L880,443.2 L880.2,443 L880.5,443.2 L880.8,443.3 L881,442.9 L881.2,443.3 L881.5,443 L881.8,443.2 L882,443.3 L882.2,442.8 L882.5,442.8 L882.8,442.6 L883,443 L883.2,442.6 L883.5,442.7 L883.8,442.7 L884,443.1 L884.2,443.1 L884.5,443 L884.8,442.9 L885,443.1 L885.2,443.2 L885.5,443.1 L885.8,443.2 L886,443.4 L886.2,442.9 L886.5,442.8 L886.8,443.2 L887,443.1 L887.2,443 L887.5,442.8 L887.8,442.6 L888,443 L888.2,442.7 L888.5,442.6 L888.8,442.9 L889,443 L889.2,443.1 L889.5,443 L889.8,443.2 L890,443.1 L890.2,443.3 L890.5,443.4 L890.8,442.9 L891,443.3 L891.2,443.1 L891.5,442.9 L891.8,443.1 L892,442.9 L892.2,443.1 L892.5,442.8 L892.8,443.1 L893,442.7 L893.2,442.8 L893.5,443.1 L893.8,443 L894,443.2 L894.2,443.1 L894.5,443 L894.8,442.9 L895,443 L895.2,443.2 L895.5,442.9 L895.8,443.3 L896,443.1 L896.2,442.9 L896.5,443.2 L896.8,443 L897,442.7 L897.2,442.9 L897.5,442.7 L897.8,442.9 L898,442.7 L898.2,442.8 L898.5,443.1 L898.8,442.8 L899,443 L899.2,443.3 L899.5,443.2 L899.8,443 L900,443.3" fill="none" stroke="#2a2298" stroke-width="1.15" stroke-linejoin="round" opacity="1"/><path d="M2,512.5 L3,511.8 L4,511.4 L5,512.1 L6,512.5 L7,512.3 L8,511.6 L9,511.5 L10,512.1 L11,512.3 L12,512.8 L13,511.8 L14,511.5 L15,512 L16,512.7 L17,512.3 L18,511.7 L19,511.9 L20,512.2 L21,512.5 L22,512.4 L23,512.1 L24,511.7 L25,512.2 L26,512.5 L27,512.6 L28,511.7 L29,511.5 L30,511.8 L31,512.9 L32,512.5 L33,511.6 L34,511.9 L35,512.2 L36,512.9 L37,512.9 L38,512 L39,511.8 L40,512.4 L41,512.9 L42,512.5 L43,511.8 L44,511.8 L45,512.3 L46,512.3 L47,512.4 L48,511.7 L49,511.5 L50,512.1 L51,512.3 L52,512.8 L53,512 L54,512 L55,512 L56,512.4 L57,512.5 L58,512.2 L59,511.3 L60,511.8 L61,512.9 L62,512.6 L63,511.8 L64,511.8 L65,511.6 L66,512.2 L67,512.9 L68,512 L69,511.9 L70,512.1 L71,512.3 L72,512.2 L73,512 L74,511.4 L75,512.1 L76,512.3 L77,512.4 L78,512.3 L79,511.9 L80,511.9 L81,512.4 L82,512.6 L83,512.4 L84,511.7 L85,511.6 L86,512.4 L87,512.3 L88,512.3 L89,511.8 L90,512 L91,512.6 L92,512.6 L93,512 L94,511.7 L95,511.9 L96,512.6 L97,512.9 L98,512.1 L99,511.6 L100,511.5 L101,512.5 L102,512.5 L103,512.5 L104,511.6 L105,512.1 L106,512.2 L107,512.3 L108,511.9 L109,511.3 L110,511.4 L111,512.1 L112,512.6 L113,511.9 L114,511.7 L115,512 L116,512 L117,512.7 L118,512.3 L119,512 L120,512 L121,512.5 L122,512.5 L123,511.8 L124,511.5 L125,512 L126,511.9 L127,512.3 L128,512.5 L129,511.9 L130,511.7 L131,512.4 L132,512.4 L133,512.4 L134,512 L135,512 L136,512.3 L137,512.4 L138,512 L139,512 L140,511.6 L141,512.2 L142,512.8 L143,512.1 L144,511.7 L145,511.3 L146,511.9 L147,512.7 L148,512.4 L149,511.4 L150,511.7 L151,512.3 L152,512.9 L153,512.4 L154,511.5 L155,511.8 L156,512.1 L157,512.5 L158,512 L159,511.4 L160,511.6 L161,512.1 L162,512.6 L163,512.2 L164,511.7 L165,511.3 L166,512.3 L167,512.4 L168,512.1 L169,511.5 L170,511.4 L171,512.1 L172,512.4 L173,512.5 L174,512 L175,511.7 L176,512 L177,512.3 L178,512.5 L179,511.4 L180,511.8 L181,511.8 L182,512.7 L183,512.2 L184,511.4 L185,511.5 L186,512.1 L187,512.4 L188,512.5 L189,511.5 L190,511.6 L191,511.8 L192,512.6 L193,512.1 L194,511.6 L195,511.5 L196,511.7 L197,512.5 L198,512.3 L199,512 L200,511.8 L201,511.9 L202,512.6 L203,512 L204,511.7 L205,511.8 L206,512.2 L207,512.4 L208,512.5 L209,511.7 L210,511.7 L211,511.6 L212,512.4 L213,512.2 L214,512.1 L215,511.3 L216,511.6 L217,512.5 L218,512.6 L219,511.6 L220,511.5 L221,511.3 L222,512.1 L223,511.9 L224,510.9 L225,510.7 L226,510.9 L227,511.6 L228,511.9 L229,510.7 L230,510.4 L231,511 L232,510.9 L233,511.1 L234,510.8 L235,510.1 L236,510.6 L237,510.7 L238,510.6 L239,510.3 L240,509.9 L241,509.9 L242,510.2 L243,510.1 L244,510 L245,509 L246,509.8 L247,509.9 L248,509.7 L249,509.5 L250,508.7 L251,508.9 L252,509.8 L253,509.6 L254,509.1 L255,508.7 L256,508.4 L257,508.9 L258,509 L259,508.7 L260,508.2 L261,508 L262,508.5 L263,509.1 L264,508.1 L265,507.7 L266,507.5 L267,508.1 L268,508.4 L269,508.1 L270,507.3 L271,507.6 L272,508 L273,508.2 L274,507.6 L275,507 L276,507.2 L277,507.7 L278,507.7 L279,507.1 L280,506.6 L281,506.3 L282,507.2 L283,507 L284,506.6 L285,506 L286,506.5 L287,506.5 L288,507 L289,506.3 L290,506 L291,505.7 L292,506.4 L293,506.1 L294,505.6 L295,505.5 L296,505.6 L297,506.1 L298,506.3 L299,505.4 L300,504.8 L301,504.9 L302,505.1 L303,505.9 L304,505.3 L305,504.5 L306,504.8 L307,505.1 L308,505.1 L309,504.4 L310,504.3 L311,504.3 L312,504.4 L313,504.9 L314,504.4 L315,504 L316,503.4 L317,504.5 L318,504.4 L319,504 L320,503.4 L321,503.3 L322,503.6 L323,503.9 L324,503.5 L325,503.3 L326,502.7 L327,503.4 L328,503.8 L329,502.9 L330,502.7 L331,502.2 L332,503 L333,503.2 L334,502.8 L335,502.1 L336,502.3 L337,502.8 L338,503.1 L339,502.4 L340,501.6 L341,501.4 L342,502.2 L343,502.6 L344,501.8 L345,501.2 L346,501 L347,502 L348,501.9 L349,501.8 L350,501.1 L351,501 L352,501.4 L353,501.8 L354,501.5 L355,500.8 L356,500.6 L357,500.9 L358,501 L359,500.8 L360,500.5 L361,499.7 L362,500.5 L363,501.1 L364,500.8 L365,499.6 L366,499.7 L367,500.4 L368,500.3 L369,500.1 L370,499.5 L371,499.3 L372,499.5 L373,499.8 L374,500 L375,498.8 L376,499.2 L377,498.9 L378,499.4 L379,499.5 L380,498.5 L381,498.4 L382,499 L383,499 L384,499.1 L385,498.1 L386,498.3 L387,498.6 L388,499 L389,498.8 L390,498 L391,497.8 L392,497.7 L393,498.4 L394,498.2 L395,497.6 L396,497.1 L397,497.3 L398,497.9 L399,498.1 L400,497.4 L401,496.6 L402,497 L403,497.4 L404,497.7 L405,497.1 L406,496.8 L407,496.8 L408,497.4 L409,497 L410,496.6 L411,496 L412,496.2 L413,496.7 L414,496.7 L415,495.7 L416,495.5 L417,495.7 L418,496.2 L419,496.5 L420,495.7 L421,495.5 L422,495.4 L423,495.9 L424,496.1 L425,495.4 L426,494.9 L427,495.1 L428,495.3 L429,495.3 L430,495 L431,494.2 L432,494.6 L433,494.8 L434,494.9 L435,494.2 L436,494.2 L437,494.5 L438,494.5 L439,494.5 L440,493.8 L441,493.6 L442,494 L443,494.2 L444,494.4 L445,494 L446,493.4 L447,493.6 L448,494 L449,494.1 L450,493.5 L451,493 L452,492.8 L453,493.5 L454,493.7 L455,493.3 L456,492.2 L457,492.7 L458,493.2 L459,493.2 L460,492.8 L461,492.3 L462,491.9 L463,492.4 L464,493 L465,492 L466,491.5 L467,491.6 L468,492.2 L469,492.3 L470,491.9 L471,491.1 L472,491.7 L473,491.7 L474,492.3 L475,491.7 L476,490.7 L477,491.1 L478,491.2 L479,491.7 L480,490.8 L481,490.5 L482,490.5 L483,491.4 L484,491.6 L485,491 L486,489.9 L487,490.2 L488,490.9 L489,490.6 L490,490 L491,490 L492,489.9 L493,490.3 L494,490.7 L495,490.2 L496,489.7 L497,489.6 L498,489.6 L499,490.4 L500,489.8 L501,489.2 L502,488.8 L503,489.4 L504,489.7 L505,489 L506,488.9 L507,488.2 L508,489 L509,489.4 L510,489 L511,488 L512,488 L513,488.9 L514,488.9 L515,488.2 L516,487.5 L517,487.7 L518,488.4 L519,488.8 L520,488.3 L521,487.1 L522,487.6 L523,488 L524,488.2 L525,487.5 L526,487.3 L527,486.5 L528,487.7 L529,487.5 L530,487.4 L531,486.6 L532,486.2 L533,487.1 L534,487.2 L535,486.9 L536,486 L537,486.3 L538,486.8 L539,487.1 L540,486.6 L541,486 L542,485.9 L543,486.2 L544,486.6 L545,485.9 L546,485.4 L547,485.4 L548,485.8 L549,485.8 L550,485.6 L551,485.4 L552,485 L553,485 L554,485.4 L555,485.6 L556,484.5 L557,484.4 L558,484.8 L559,485.2 L560,485 L561,484.5 L562,484.4 L563,484.5 L564,484.7 L565,484.9 L566,483.6 L567,483.8 L568,484.1 L569,484.1 L570,484.4 L571,483.7 L572,483.3 L573,483.6 L574,483.9 L575,483.9 L576,482.9 L577,483 L578,483.6 L579,483.6 L580,483.1 L581,482.6 L582,482.6 L583,482.9 L584,483.5 L585,483.3 L586,482.6 L587,481.8 L588,482.3 L589,483 L590,482.8 L591,482.2 L592,481.3 L593,481.8 L594,482.7 L595,482.6 L596,481.3 L597,481.1 L598,481.8 L599,482.3 L600,481.8 L601,481.1 L602,480.7 L603,480.9 L604,481.3 L605,481.7 L606,480.7 L607,480.2 L608,480.8 L609,481.1 L610,481.3 L611,480.6 L612,479.9 L613,480.3 L614,480.7 L615,481.2 L616,480 L617,480.2 L618,480.1 L619,480.6 L620,480.5 L621,480.2 L622,479.7 L623,480.1 L624,480.2 L625,480 L626,479.6 L627,479 L628,479.4 L629,480 L630,479.9 L631,479.7 L632,478.7 L633,479.2 L634,479.4 L635,479.7 L636,478.8 L637,478.6 L638,478.8 L639,479 L640,479.1 L641,478.8 L642,478 L643,478.6 L644,478.7 L645,479 L646,478.2 L647,477.7 L648,478.1 L649,478.6 L650,478.4 L651,477.9 L652,477.4 L653,478.1 L654,478.1 L655,478.5 L656,478.1 L657,477.6 L658,477.6 L659,478.4 L660,478.5 L661,477.5 L662,477.1 L663,477.2 L664,477.9 L665,478.1 L666,477.4 L667,476.9 L668,477.2 L669,477.4 L670,477.5 L671,477 L672,477 L673,477 L674,477.3 L675,477.5 L676,477.2 L677,476.5 L678,476.6 L679,477.1 L680,477.5 L681,477 L682,476.5 L683,476.6 L684,477.2 L685,476.9 L686,477 L687,476.2 L688,476.1 L689,476.7 L690,476.9 L691,476.5 L692,475.7 L693,475.6 L694,476.3 L695,476.5 L696,476.5 L697,475.5 L698,475.7 L699,476.5 L700,476.6 L701,475.8 L702,475.6 L703,475.4 L704,475.6 L705,475.9 L706,476.1 L707,474.9 L708,475.3 L709,476 L710,475.8 L711,475.6 L712,474.7 L713,475.2 L714,475.6 L715,475.7 L716,475.3 L717,475 L718,474.8 L719,475.2 L720,475.5 L721,475.2 L722,474.4 L723,474.6 L724,474.9 L725,475.5 L726,474.8 L727,474.3 L728,474.3 L729,474.4 L730,475.4 L731,474.6 L732,474.4 L733,473.9 L734,474.2 L735,474.8 L736,474.7 L737,473.9 L738,474.2 L739,474.2 L740,475.1 L741,474.6 L742,474.4 L743,474.1 L744,474.2 L745,475.1 L746,474.8 L747,474 L748,474.1 L749,474.1 L750,475.1 L751,474.5 L752,473.9 L753,474.2 L754,474.3 L755,474.9 L756,474.9 L757,473.9 L758,473.8 L759,474 L760,475 L761,474.7 L762,473.8 L763,474 L764,474 L765,475 L766,474.4 L767,474 L768,473.8 L769,474.5 L770,474.6 L771,474.6 L772,474.2 L773,473.8 L774,474.6 L775,474.5 L776,474.6 L777,474.2 L778,473.8 L779,474.1 L780,475.1 L781,474.6 L782,474.2 L783,473.8 L784,474.4 L785,474.8 L786,474.8 L787,473.9 L788,473.8 L789,474.4 L790,474.8 L791,474.9 L792,474.3 L793,474 L794,474.1 L795,474.6 L796,474.9 L797,474.2 L798,474 L799,474.1 L800,474.7 L801,474.8 L802,473.8 L803,473.6 L804,474.3 L805,474.6 L806,474.5 L807,473.9 L808,473.6 L809,473.7 L810,474.7 L811,474.9 L812,473.9 L813,473.8 L814,473.9 L815,474.8 L816,474.4 L817,473.9 L818,474 L819,474 L820,474.5 L821,474.4 L822,474.3 L823,473.6 L824,473.6 L825,474.3 L826,474.7 L827,473.8 L828,473.9 L829,474.3 L830,474.3 L831,474.6 L832,473.8 L833,473.8 L834,473.7 L835,474.5 L836,474.4 L837,474 L838,473.5 L839,474.1 L840,474.3 L841,474.4 L842,474.2 L843,473.6 L844,474.2 L845,474.5 L846,474.6 L847,474.4 L848,474 L849,474 L850,474.3 L851,474.5 L852,474 L853,474 L854,473.7 L855,474.5 L856,474.9 L857,473.9 L858,473.6 L859,473.5 L860,474.3 L861,474.7 L862,474.3 L863,473.7 L864,474 L865,474.3 L866,474.9 L867,474.1 L868,473.7 L869,473.8 L870,474.5 L871,474.2 L872,474.4 L873,473.8 L874,473.8 L875,474.4 L876,474.8 L877,474.1 L878,473.6 L879,473.5 L880,474.2 L881,474.2 L882,474.3 L883,473.8 L884,474 L885,474.3 L886,474.8 L887,473.8 L888,473.5 L889,473.5 L890,473.9 L891,474.7 L892,474.3 L893,473.6 L894,473.9 L895,474.3 L896,474.3 L897,474.2 L898,473.6 L899,473.7 L900,474.5" fill="none" stroke="#d07818" stroke-width="1.0" stroke-linejoin="round" opacity="1"/><polyline fill="none" stroke="#8c1428" stroke-width="1.1" points="2,531.5 233,531.5 234,532 666,532 667,532.8 900,532.8"/></svg>
<svg class="a" style="left:3px;top:170px" width="22" height="14"><polygon points="1.5,0.8 14,0.8 19.5,7 14,13.2 1.5,13.2" fill="#e8df22" stroke="#e8df22" stroke-width="1.2" stroke-linejoin="round"/><text x="9.0" y="10" font-family="Liberation Sans" font-size="7" fill="#222" text-anchor="middle" letter-spacing="0.7">C1</text></svg>
<svg class="a" style="left:3px;top:222.5px" width="22" height="14"><polygon points="1.5,0.8 14,0.8 19.5,7 14,13.2 1.5,13.2" fill="#06302f" stroke="#23b5b5" stroke-width="1.2" stroke-linejoin="round"/><text x="9.0" y="10" font-family="Liberation Sans" font-size="7" fill="#5fd0d0" text-anchor="middle" letter-spacing="0.7">C2</text></svg>
<svg class="a" style="left:3px;top:276px" width="22" height="14"><polygon points="1.5,0.8 14,0.8 19.5,7 14,13.2 1.5,13.2" fill="#1a0a0e" stroke="#d8244e" stroke-width="1.2" stroke-linejoin="round"/><text x="9.0" y="10" font-family="Liberation Sans" font-size="7" fill="#e0e0e0" text-anchor="middle" letter-spacing="0.7">C3</text></svg>
<svg class="a" style="left:3px;top:329px" width="22" height="14"><polygon points="1.5,0.8 14,0.8 19.5,7 14,13.2 1.5,13.2" fill="#0c1404" stroke="#8cb02a" stroke-width="1.2" stroke-linejoin="round"/><text x="9.0" y="10" font-family="Liberation Sans" font-size="7" fill="#a0c040" text-anchor="middle" letter-spacing="0.7">C4</text></svg>
<svg class="a" style="left:3px;top:381.5px" width="22" height="14"><polygon points="1.5,0.8 14,0.8 19.5,7 14,13.2 1.5,13.2" fill="#2a1a06" stroke="#e8861c" stroke-width="1.2" stroke-linejoin="round"/><text x="9.0" y="10" font-family="Liberation Sans" font-size="7" fill="#f0a040" text-anchor="middle" letter-spacing="0.7">C5</text></svg>
<svg class="a" style="left:3px;top:435px" width="22" height="14"><polygon points="1.5,0.8 14,0.8 19.5,7 14,13.2 1.5,13.2" fill="#06062a" stroke="#3030a8" stroke-width="1.2" stroke-linejoin="round"/><text x="9.0" y="10" font-family="Liberation Sans" font-size="7" fill="#d0d0f0" text-anchor="middle" letter-spacing="0.7">C6</text></svg>
<svg class="a" style="left:3px;top:487px" width="22" height="14"><polygon points="1.5,0.8 14,0.8 19.5,7 14,13.2 1.5,13.2" fill="#140a02" stroke="#d87a1c" stroke-width="1.2" stroke-linejoin="round"/><text x="9.0" y="10" font-family="Liberation Sans" font-size="7" fill="#e08a2c" text-anchor="middle" letter-spacing="0.7">M1</text></svg>
<svg class="a" style="left:3px;top:531px" width="22" height="14"><polygon points="1.5,0.8 14,0.8 19.5,7 14,13.2 1.5,13.2" fill="#140204" stroke="#8a1428" stroke-width="1.2" stroke-linejoin="round"/><text x="9.0" y="10" font-family="Liberation Sans" font-size="7" fill="#a82838" text-anchor="middle" letter-spacing="0.7">T2</text></svg>
<div class="t" style="left:30px;top:487.2px;height:13.7px;line-height:13.7px;font-size:10.5px;color:#d98a2a;">PQ:Filtered ch1(meas1)</div>
<div class="t" style="left:30px;top:531.7px;height:13.7px;line-height:13.7px;font-size:10.5px;color:#a81c30;">VrmsPh1</div>
<div class="t" style="right:182px;top:151.1px;height:9.8px;line-height:9.8px;font-size:7.5px;color:#e8df22;">40 V</div>
<div class="t" style="right:182px;top:161.6px;height:9.8px;line-height:9.8px;font-size:7.5px;color:#e8df22;">20 V</div>
<div class="t" style="right:182px;top:182.6px;height:9.8px;line-height:9.8px;font-size:7.5px;color:#e8df22;">-20 V</div>
<div class="t" style="right:182px;top:193.1px;height:9.8px;line-height:9.8px;font-size:7.5px;color:#e8df22;">-40 V</div>
<svg class="a" style="left:886px;top:171px" width="14" height="12"><polygon points="0,6 8,0 8,3 14,3 14,9 8,9 8,12" fill="#e8df22"/></svg>
<div class="t" style="right:182px;top:203.1px;height:9.8px;line-height:9.8px;font-size:7.5px;color:#23b5b5;">2 A</div>
<div class="t" style="right:182px;top:213.6px;height:9.8px;line-height:9.8px;font-size:7.5px;color:#23b5b5;">1 A</div>
<div class="t" style="right:182px;top:224.6px;height:9.8px;line-height:9.8px;font-size:7.5px;color:#23b5b5;">0 A</div>
<div class="t" style="right:182px;top:235.1px;height:9.8px;line-height:9.8px;font-size:7.5px;color:#23b5b5;">-1 A</div>
<div class="t" style="right:182px;top:245.6px;height:9.8px;line-height:9.8px;font-size:7.5px;color:#23b5b5;">-2 A</div>
<div class="t" style="right:182px;top:257.1px;height:9.8px;line-height:9.8px;font-size:7.5px;color:#d8244e;">40 V</div>
<div class="t" style="right:182px;top:267.6px;height:9.8px;line-height:9.8px;font-size:7.5px;color:#d8244e;">20 V</div>
<div class="t" style="right:182px;top:278.1px;height:9.8px;line-height:9.8px;font-size:7.5px;color:#d8244e;">0 V</div>
<div class="t" style="right:182px;top:288.6px;height:9.8px;line-height:9.8px;font-size:7.5px;color:#d8244e;">-20 V</div>
<div class="t" style="right:182px;top:299.1px;height:9.8px;line-height:9.8px;font-size:7.5px;color:#d8244e;">-40 V</div>
<div class="t" style="right:182px;top:311.1px;height:9.8px;line-height:9.8px;font-size:7.5px;color:#8cb02a;">2.300 A</div>
<div class="t" style="right:182px;top:321.1px;height:9.8px;line-height:9.8px;font-size:7.5px;color:#8cb02a;">1.150 A</div>
<div class="t" style="right:182px;top:331.6px;height:9.8px;line-height:9.8px;font-size:7.5px;color:#8cb02a;">0 A</div>
<div class="t" style="right:182px;top:342.1px;height:9.8px;line-height:9.8px;font-size:7.5px;color:#8cb02a;">-1.150 A</div>
<div class="t" style="right:182px;top:352.1px;height:9.8px;line-height:9.8px;font-size:7.5px;color:#8cb02a;">-2.300 A</div>
<div class="t" style="right:182px;top:363.1px;height:9.8px;line-height:9.8px;font-size:7.5px;color:#e8861c;">40 V</div>
<div class="t" style="right:182px;top:373.1px;height:9.8px;line-height:9.8px;font-size:7.5px;color:#e8861c;">20 V</div>
<div class="t" style="right:182px;top:383.6px;height:9.8px;line-height:9.8px;font-size:7.5px;color:#e8861c;">0 V</div>
<div class="t" style="right:182px;top:394.1px;height:9.8px;line-height:9.8px;font-size:7.5px;color:#e8861c;">-20 V</div>
<div class="t" style="right:182px;top:404.6px;height:9.8px;line-height:9.8px;font-size:7.5px;color:#e8861c;">-40 V</div>
<div class="t" style="right:182px;top:422.9px;height:9.8px;line-height:9.8px;font-size:7.5px;color:#3434b8;">1.65 A</div>
<div class="t" style="right:182px;top:433.3px;height:9.8px;line-height:9.8px;font-size:7.5px;color:#3434b8;">550 mA</div>
<div class="t" style="right:182px;top:443.7px;height:9.8px;line-height:9.8px;font-size:7.5px;color:#3434b8;">-550 mA</div>
<div class="t" style="right:182px;top:454.1px;height:9.8px;line-height:9.8px;font-size:7.5px;color:#3434b8;">-1.65 A</div>
<div class="t" style="right:182px;top:469.6px;height:9.8px;line-height:9.8px;font-size:7.5px;color:#e8861c;">7.401 V</div>
<div class="t" style="right:182px;top:479.6px;height:9.8px;line-height:9.8px;font-size:7.5px;color:#e8861c;">3.700 V</div>
<div class="t" style="right:182px;top:490.1px;height:9.8px;line-height:9.8px;font-size:7.5px;color:#e8861c;">0 V</div>
<div class="t" style="right:182px;top:500.6px;height:9.8px;line-height:9.8px;font-size:7.5px;color:#e8861c;">-3.700 V</div>
<div class="t" style="right:182px;top:511.1px;height:9.8px;line-height:9.8px;font-size:7.5px;color:#e8861c;">-7.401 V</div>
<div class="t" style="right:182px;top:523.6px;height:9.8px;line-height:9.8px;font-size:7.5px;color:#b82438;">5.502714 V</div>
<div class="t" style="right:182px;top:534.6px;height:9.8px;line-height:9.8px;font-size:7.5px;color:#b82438;">5.456959 V</div>
<div class="t" style="right:182px;top:545.6px;height:9.8px;line-height:9.8px;font-size:7.5px;color:#b82438;">5.412205 V</div>
<div class="a" style="left:905px;top:282px;width:2.5px;height:2.5px;background:#ccc"></div>
<div class="a" style="left:905px;top:286.5px;width:2.5px;height:2.5px;background:#ccc"></div>
<div class="a" style="left:905px;top:291px;width:2.5px;height:2.5px;background:#ccc"></div>
<div class="a" style="left:910px;top:16px;width:167px;height:543px;border:1px solid #3c3c3c;background:#2a2a2a"></div>
<div class="t" style="left:973px;top:16.8px;height:12.3px;line-height:12.3px;font-size:9.5px;color:#e8e8e8;font-weight:bold;transform:translateX(-50%);">Add New...</div>
<div class="a" style="left:1035px;top:17px;width:1px;height:63px;background:#3c3c3c"></div>
<div class="a" style="left:911px;top:82px;width:165px;height:1px;background:#3c3c3c"></div>
<div class="a" style="left:914px;top:31px;width:36px;height:21px;border:1px solid #4a4a4a;border-radius:3px;background:#262626"></div><div class="t" style="left:932px;top:36.6px;height:11.7px;line-height:11.7px;font-size:9px;color:#d4d4d4;transform:translateX(-50%);">Cursors</div>
<div class="a" style="left:954px;top:31px;width:36px;height:21px;border:1px solid #4a4a4a;border-radius:3px;background:#262626"></div><div class="t" style="left:972px;top:36.6px;height:11.7px;line-height:11.7px;font-size:9px;color:#d4d4d4;transform:translateX(-50%);">Callout</div>
<div class="a" style="left:995px;top:31px;width:36px;height:21px;border:1px solid #4a4a4a;border-radius:3px;background:#262626"></div>
<div class="t" style="left:995px;top:32.5px;width:36px;text-align:center;font-size:8.5px;line-height:10px;color:#d8d8d8">Results<br>Table</div>
<div class="a" style="left:1039px;top:31px;width:36px;height:21px;border:1px solid #4a4a4a;border-radius:3px;background:#262626"></div><div class="t" style="left:1057px;top:36.6px;height:11.7px;line-height:11.7px;font-size:9px;color:#d4d4d4;transform:translateX(-50%);"></div>
<svg class="a" style="left:1046px;top:31px" width="22" height="20"><rect x="3.40" y="3.10" width="1.6" height="1.6" fill="#b8b8b8"/><rect x="3.40" y="13.90" width="1.6" height="1.6" fill="#b8b8b8"/><rect x="7.50" y="3.10" width="1.6" height="1.6" fill="#b8b8b8"/><rect x="7.50" y="13.90" width="1.6" height="1.6" fill="#b8b8b8"/><rect x="11.60" y="3.10" width="1.6" height="1.6" fill="#b8b8b8"/><rect x="11.60" y="13.90" width="1.6" height="1.6" fill="#b8b8b8"/><rect x="15.70" y="3.10" width="1.6" height="1.6" fill="#b8b8b8"/><rect x="15.70" y="13.90" width="1.6" height="1.6" fill="#b8b8b8"/><rect x="3.40" y="6.70" width="1.6" height="1.6" fill="#b8b8b8"/><rect x="15.70" y="6.70" width="1.6" height="1.6" fill="#b8b8b8"/><rect x="3.40" y="10.30" width="1.6" height="1.6" fill="#b8b8b8"/><rect x="15.70" y="10.30" width="1.6" height="1.6" fill="#b8b8b8"/><circle cx="11.6" cy="8.8" r="2.6" fill="none" stroke="#d0d0d0" stroke-width="1.5"/><line x1="9.7" y1="10.8" x2="6.8" y2="13.2" stroke="#d0d0d0" stroke-width="1.9" stroke-linecap="round"/><polygon points="14.2,12 18.4,16.3 16.5,16.5 17.3,18.2 16.2,18.6 15.4,16.9 14.2,18" fill="#d0d0d0"/></svg>
<div class="a" style="left:914px;top:57px;width:36px;height:21px;border:1px solid #4a4a4a;border-radius:3px;background:#262626"></div><div class="t" style="left:932px;top:62.6px;height:11.7px;line-height:11.7px;font-size:9px;color:#d4d4d4;transform:translateX(-50%);">Measure</div>
<div class="a" style="left:954px;top:57px;width:36px;height:21px;border:1px solid #4a4a4a;border-radius:3px;background:#262626"></div><div class="t" style="left:972px;top:62.6px;height:11.7px;line-height:11.7px;font-size:9px;color:#d4d4d4;transform:translateX(-50%);">Search</div>
<div class="a" style="left:995px;top:57px;width:36px;height:21px;border:1px solid #4a4a4a;border-radius:3px;background:#262626"></div><div class="t" style="left:1013px;top:62.6px;height:11.7px;line-height:11.7px;font-size:9px;color:#d4d4d4;transform:translateX(-50%);">Plot</div>
<div class="a" style="left:1039px;top:57px;width:36px;height:21px;border:1px solid #4a4a4a;border-radius:3px;background:#262626"></div><div class="t" style="left:1057px;top:62.6px;height:11.7px;line-height:11.7px;font-size:9px;color:#d4d4d4;transform:translateX(-50%);">More...</div>
<div class="a" style="left:912px;top:91px;width:164px;height:11px;background:#000"></div>
<div class="t" style="left:914px;top:90.5px;font-size:8.8px;line-height:12px;color:#f0f0f0;transform:scaleX(0.95);transform-origin:0 50%">IMDA Meas 1: <span style="color:#d8d8d8">Cyc Power Quality'</span></div>
<div class="a" style="left:912px;top:102px;width:164px;height:151px;background:#d6d7d9"></div>
<div class="a" style="left:912px;top:252.5px;width:164px;height:1.5px;background:#3a3a3a"></div>
<div class="a" style="left:912px;top:253.5px;width:164px;height:44px;background:#d8d9db;border:1px solid #bbb"></div>
<div class="t" style="left:966px;top:101.8px;height:11.4px;line-height:11.4px;font-size:8.8px;color:#525252;transform:scaleX(0.9);transform-origin:0 50%;">Vab:Ia</div>
<div class="t" style="left:1003.5px;top:101.8px;height:11.4px;line-height:11.4px;font-size:8.8px;color:#525252;transform:scaleX(0.9);transform-origin:0 50%;">Vbc:Ib</div>
<div class="t" style="left:1040.5px;top:101.8px;height:11.4px;line-height:11.4px;font-size:8.8px;color:#525252;transform:scaleX(0.9);transform-origin:0 50%;">Vca:Ic</div>
<div class="t" style="left:966px;top:112.6px;height:11.4px;line-height:11.4px;font-size:8.8px;color:#525252;transform:scaleX(0.9);transform-origin:0 50%;">LL-LN</div>
<div class="t" style="left:1003.5px;top:112.6px;height:11.4px;line-height:11.4px;font-size:8.8px;color:#525252;transform:scaleX(0.9);transform-origin:0 50%;">LL-LN</div>
<div class="t" style="left:1040.5px;top:112.6px;height:11.4px;line-height:11.4px;font-size:8.8px;color:#525252;transform:scaleX(0.9);transform-origin:0 50%;">LL-LN</div>
<svg class="a" style="left:967px;top:125px" width="31" height="8"><defs><clipPath id="cp1"><rect x="0.5" y="0.5" width="30" height="7" rx="3.5"/></clipPath></defs><g clip-path="url(#cp1)"><rect x="0" y="0" width="31" height="8" fill="#f2ea2a"/><polygon points="17,0 31,0 31,8 13,8" fill="#2cc0c8"/></g><rect x="0.5" y="0.5" width="30" height="7" rx="3.5" fill="none" stroke="#555" stroke-width="0.6"/><text x="8" y="6.6" font-size="6" font-family="Liberation Sans" fill="#444">1</text><text x="22" y="6.6" font-size="6" font-family="Liberation Sans" fill="#333">2</text></svg>
<svg class="a" style="left:1004.5px;top:125px" width="31" height="8"><defs><clipPath id="cp3"><rect x="0.5" y="0.5" width="30" height="7" rx="3.5"/></clipPath></defs><g clip-path="url(#cp3)"><rect x="0" y="0" width="31" height="8" fill="#e83c5c"/><polygon points="17,0 31,0 31,8 13,8" fill="#7cc040"/></g><rect x="0.5" y="0.5" width="30" height="7" rx="3.5" fill="none" stroke="#555" stroke-width="0.6"/><text x="8" y="6.6" font-size="6" font-family="Liberation Sans" fill="#444">3</text><text x="22" y="6.6" font-size="6" font-family="Liberation Sans" fill="#333">4</text></svg>
<svg class="a" style="left:1041.5px;top:125px" width="31" height="8"><defs><clipPath id="cp5"><rect x="0.5" y="0.5" width="30" height="7" rx="3.5"/></clipPath></defs><g clip-path="url(#cp5)"><rect x="0" y="0" width="31" height="8" fill="#f08a20"/><polygon points="17,0 31,0 31,8 13,8" fill="#2a2ac8"/></g><rect x="0.5" y="0.5" width="30" height="7" rx="3.5" fill="none" stroke="#555" stroke-width="0.6"/><text x="8" y="6.6" font-size="6" font-family="Liberation Sans" fill="#444">5</text><text x="22" y="6.6" font-size="6" font-family="Liberation Sans" fill="#333">6</text></svg>
<div class="t" style="left:915px;top:134.3px;height:11.4px;line-height:11.4px;font-size:8.8px;color:#525252;transform:scaleX(0.88);transform-origin:0 50%;">V<sub>RMS</sub>(V):</div>
<div class="t" style="left:966px;top:134.3px;height:11.4px;line-height:11.4px;font-size:8.8px;color:#525252;transform:scaleX(0.95);transform-origin:0 50%;">5.466</div>
<div class="t" style="left:1003.5px;top:134.3px;height:11.4px;line-height:11.4px;font-size:8.8px;color:#525252;transform:scaleX(0.95);transform-origin:0 50%;">5.780</div>
<div class="t" style="left:1040.5px;top:134.3px;height:11.4px;line-height:11.4px;font-size:8.8px;color:#525252;transform:scaleX(0.95);transform-origin:0 50%;">5.587</div>
<div class="t" style="left:915px;top:144.9px;height:11.4px;line-height:11.4px;font-size:8.8px;color:#525252;transform:scaleX(0.88);transform-origin:0 50%;">V<sub>MAG</sub>(V):</div>
<div class="t" style="left:966px;top:144.9px;height:11.4px;line-height:11.4px;font-size:8.8px;color:#525252;transform:scaleX(0.95);transform-origin:0 50%;">2.983</div>
<div class="t" style="left:1003.5px;top:144.9px;height:11.4px;line-height:11.4px;font-size:8.8px;color:#525252;transform:scaleX(0.95);transform-origin:0 50%;">3.012</div>
<div class="t" style="left:1040.5px;top:144.9px;height:11.4px;line-height:11.4px;font-size:8.8px;color:#525252;transform:scaleX(0.95);transform-origin:0 50%;">3.017</div>
<div class="t" style="left:915px;top:155.6px;height:11.4px;line-height:11.4px;font-size:8.8px;color:#525252;transform:scaleX(0.88);transform-origin:0 50%;">I<sub>RMS</sub>(A):</div>
<div class="t" style="left:966px;top:155.6px;height:11.4px;line-height:11.4px;font-size:8.8px;color:#525252;transform:scaleX(0.95);transform-origin:0 50%;">628.1 m</div>
<div class="t" style="left:1003.5px;top:155.6px;height:11.4px;line-height:11.4px;font-size:8.8px;color:#525252;transform:scaleX(0.95);transform-origin:0 50%;">706.8 m</div>
<div class="t" style="left:1040.5px;top:155.6px;height:11.4px;line-height:11.4px;font-size:8.8px;color:#525252;transform:scaleX(0.95);transform-origin:0 50%;">682.5 m</div>
<div class="t" style="left:915px;top:166.3px;height:11.4px;line-height:11.4px;font-size:8.8px;color:#525252;transform:scaleX(0.88);transform-origin:0 50%;">I<sub>MAG</sub>(A):</div>
<div class="t" style="left:966px;top:166.3px;height:11.4px;line-height:11.4px;font-size:8.8px;color:#525252;transform:scaleX(0.95);transform-origin:0 50%;">377.1 m</div>
<div class="t" style="left:1003.5px;top:166.3px;height:11.4px;line-height:11.4px;font-size:8.8px;color:#525252;transform:scaleX(0.95);transform-origin:0 50%;">471.6 m</div>
<div class="t" style="left:1040.5px;top:166.3px;height:11.4px;line-height:11.4px;font-size:8.8px;color:#525252;transform:scaleX(0.95);transform-origin:0 50%;">435.1 m</div>
<div class="t" style="left:915px;top:177px;height:11.4px;line-height:11.4px;font-size:8.8px;color:#525252;transform:scaleX(0.88);transform-origin:0 50%;">V CF:</div>
<div class="t" style="left:966px;top:177px;height:11.4px;line-height:11.4px;font-size:8.8px;color:#525252;transform:scaleX(0.95);transform-origin:0 50%;">3.953</div>
<div class="t" style="left:1003.5px;top:177px;height:11.4px;line-height:11.4px;font-size:8.8px;color:#525252;transform:scaleX(0.95);transform-origin:0 50%;">3.690</div>
<div class="t" style="left:1040.5px;top:177px;height:11.4px;line-height:11.4px;font-size:8.8px;color:#525252;transform:scaleX(0.95);transform-origin:0 50%;">3.831</div>
<div class="t" style="left:915px;top:187.6px;height:11.4px;line-height:11.4px;font-size:8.8px;color:#525252;transform:scaleX(0.88);transform-origin:0 50%;">I CF:</div>
<div class="t" style="left:966px;top:187.6px;height:11.4px;line-height:11.4px;font-size:8.8px;color:#525252;transform:scaleX(0.95);transform-origin:0 50%;">3.117</div>
<div class="t" style="left:1003.5px;top:187.6px;height:11.4px;line-height:11.4px;font-size:8.8px;color:#525252;transform:scaleX(0.95);transform-origin:0 50%;">3.260</div>
<div class="t" style="left:1040.5px;top:187.6px;height:11.4px;line-height:11.4px;font-size:8.8px;color:#525252;transform:scaleX(0.95);transform-origin:0 50%;">3.432</div>
<div class="t" style="left:915px;top:198.3px;height:11.4px;line-height:11.4px;font-size:8.8px;color:#525252;transform:scaleX(0.88);transform-origin:0 50%;">TrPwr(W):</div>
<div class="t" style="left:966px;top:198.3px;height:11.4px;line-height:11.4px;font-size:8.8px;color:#525252;transform:scaleX(0.95);transform-origin:0 50%;">1.592</div>
<div class="t" style="left:1003.5px;top:198.3px;height:11.4px;line-height:11.4px;font-size:8.8px;color:#525252;transform:scaleX(0.95);transform-origin:0 50%;">1.959</div>
<div class="t" style="left:1040.5px;top:198.3px;height:11.4px;line-height:11.4px;font-size:8.8px;color:#525252;transform:scaleX(0.95);transform-origin:0 50%;">1.704</div>
<div class="t" style="left:915px;top:209px;height:11.4px;line-height:11.4px;font-size:8.8px;color:#525252;transform:scaleX(0.88);transform-origin:0 50%;">RePwr(VAR):</div>
<div class="t" style="left:966px;top:209px;height:11.4px;line-height:11.4px;font-size:8.8px;color:#525252;transform:scaleX(0.95);transform-origin:0 50%;">-3.042</div>
<div class="t" style="left:1003.5px;top:209px;height:11.4px;line-height:11.4px;font-size:8.8px;color:#525252;transform:scaleX(0.95);transform-origin:0 50%;">-3.585</div>
<div class="t" style="left:1040.5px;top:209px;height:11.4px;line-height:11.4px;font-size:8.8px;color:#525252;transform:scaleX(0.95);transform-origin:0 50%;">-3.411</div>
<div class="t" style="left:915px;top:219.6px;height:11.4px;line-height:11.4px;font-size:8.8px;color:#525252;transform:scaleX(0.88);transform-origin:0 50%;">ApPwr(VA):</div>
<div class="t" style="left:966px;top:219.6px;height:11.4px;line-height:11.4px;font-size:8.8px;color:#525252;transform:scaleX(0.95);transform-origin:0 50%;">3.433</div>
<div class="t" style="left:1003.5px;top:219.6px;height:11.4px;line-height:11.4px;font-size:8.8px;color:#525252;transform:scaleX(0.95);transform-origin:0 50%;">4.085</div>
<div class="t" style="left:1040.5px;top:219.6px;height:11.4px;line-height:11.4px;font-size:8.8px;color:#525252;transform:scaleX(0.95);transform-origin:0 50%;">3.813</div>
<div class="t" style="left:915px;top:230.3px;height:11.4px;line-height:11.4px;font-size:8.8px;color:#525252;transform:scaleX(0.88);transform-origin:0 50%;">PF:</div>
<div class="t" style="left:966px;top:230.3px;height:11.4px;line-height:11.4px;font-size:8.8px;color:#525252;transform:scaleX(0.95);transform-origin:0 50%;">944.2 m</div>
<div class="t" style="left:1003.5px;top:230.3px;height:11.4px;line-height:11.4px;font-size:8.8px;color:#525252;transform:scaleX(0.95);transform-origin:0 50%;">947.4 m</div>
<div class="t" style="left:1040.5px;top:230.3px;height:11.4px;line-height:11.4px;font-size:8.8px;color:#525252;transform:scaleX(0.95);transform-origin:0 50%;">864.3 m</div>
<div class="t" style="left:915px;top:241px;height:11.4px;line-height:11.4px;font-size:8.8px;color:#525252;transform:scaleX(0.88);transform-origin:0 50%;">Phase:</div>
<div class="t" style="left:966px;top:241px;height:11.4px;line-height:11.4px;font-size:8.8px;color:#525252;transform:scaleX(0.95);transform-origin:0 50%;">-19.16 °</div>
<div class="t" style="left:1003.5px;top:241px;height:11.4px;line-height:11.4px;font-size:8.8px;color:#525252;transform:scaleX(0.95);transform-origin:0 50%;">-18.55 °</div>
<div class="t" style="left:1040.5px;top:241px;height:11.4px;line-height:11.4px;font-size:8.8px;color:#525252;transform:scaleX(0.95);transform-origin:0 50%;">-30.02 °</div>
<div class="t" style="left:915px;top:253.8px;height:11.4px;line-height:11.4px;font-size:8.8px;color:#525252;transform:scaleX(0.9);transform-origin:0 50%;">Freq:</div>
<div class="t" style="left:996.5px;top:253.8px;height:11.4px;line-height:11.4px;font-size:8.8px;color:#525252;transform:scaleX(0.92);transform-origin:0 50%;">160.1 Hz</div>
<div class="t" style="left:915px;top:264.6px;height:11.4px;line-height:11.4px;font-size:8.8px;color:#525252;transform:scaleX(0.9);transform-origin:0 50%;">&Sigma; TrPwr:</div>
<div class="t" style="left:996.5px;top:264.6px;height:11.4px;line-height:11.4px;font-size:8.8px;color:#525252;transform:scaleX(0.92);transform-origin:0 50%;">5.254 W</div>
<div class="t" style="left:915px;top:275.4px;height:11.4px;line-height:11.4px;font-size:8.8px;color:#525252;transform:scaleX(0.9);transform-origin:0 50%;">&Sigma; RePwr:</div>
<div class="t" style="left:996.5px;top:275.4px;height:11.4px;line-height:11.4px;font-size:8.8px;color:#525252;transform:scaleX(0.92);transform-origin:0 50%;">-10.04 VAR</div>
<div class="t" style="left:915px;top:286.2px;height:11.4px;line-height:11.4px;font-size:8.8px;color:#525252;transform:scaleX(0.9);transform-origin:0 50%;">&Sigma; ApPwr:</div>
<div class="t" style="left:996.5px;top:286.2px;height:11.4px;line-height:11.4px;font-size:8.8px;color:#525252;transform:scaleX(0.92);transform-origin:0 50%;">11.33 VA</div>
<div class="a" style="left:911px;top:558px;width:166px;height:1px;background:#555"></div>
<div class="a" style="left:0;top:560px;width:1080px;height:48px;background:#2a2a2a"></div>
<div class="a" style="left:0;top:605px;width:1080px;height:3px;background:#1a5aa0"></div>
<div class="a" style="left:1077px;top:0;width:3px;height:608px;background:#1b5ea6"></div>
<div class="a" style="left:1.7px;top:560px;width:51px;height:44px;border-radius:3px;background:#dadada;overflow:hidden"><div style="position:absolute;left:0;top:0;width:51px;height:11px;background:#f2ea2a"></div></div>
<div class="t" style="left:5.7px;top:560.9px;height:11.7px;line-height:11.7px;font-size:9px;color:#333;transform:scaleX(0.9);transform-origin:0 50%;">Ch 1</div>
<div class="t" style="left:5.7px;top:571.6px;height:11.4px;line-height:11.4px;font-size:8.8px;color:#4a4a4a;transform:scaleX(0.87);transform-origin:0 50%;">10 V/div</div>
<div class="t" style="left:5.7px;top:581.7px;height:11.4px;line-height:11.4px;font-size:8.8px;color:#4a4a4a;transform:scaleX(0.87);transform-origin:0 50%;">1 M&Omega;</div>
<div class="t" style="left:5.7px;top:591.8px;height:11.4px;line-height:11.4px;font-size:8.8px;color:#4a4a4a;transform:scaleX(0.87);transform-origin:0 50%;">100 kHz</div>
<svg class="a" style="left:31.2px;top:583.5px" width="9" height="7"><path d="M1,5 C2,0 4,0 4.5,3 C5,6 7,6 8,2" fill="none" stroke="#444" stroke-width="1.2"/></svg>
<svg class="a" style="left:42.2px;top:593.5px" width="7" height="6"><path d="M0.5,0.5 V3.5 H3 V5.5 H6.5 V3.5" fill="#444" stroke="#444" stroke-width="1"/></svg>
<div class="a" style="left:55.1px;top:560px;width:51px;height:44px;border-radius:3px;background:#dadada;overflow:hidden"><div style="position:absolute;left:0;top:0;width:51px;height:11px;background:#1d4a4a"></div></div>
<div class="t" style="left:59.1px;top:560.9px;height:11.7px;line-height:11.7px;font-size:9px;color:#36c0c0;transform:scaleX(0.9);transform-origin:0 50%;">Ch 2</div>
<div class="t" style="left:59.1px;top:571.6px;height:11.4px;line-height:11.4px;font-size:8.8px;color:#4a4a4a;transform:scaleX(0.87);transform-origin:0 50%;">500 mA/div</div>
<div class="t" style="left:59.1px;top:581.7px;height:11.4px;line-height:11.4px;font-size:8.8px;color:#4a4a4a;transform:scaleX(0.87);transform-origin:0 50%;">1 M&Omega;</div>
<div class="t" style="left:59.1px;top:591.8px;height:11.4px;line-height:11.4px;font-size:8.8px;color:#4a4a4a;transform:scaleX(0.87);transform-origin:0 50%;">100 kHz</div>
<svg class="a" style="left:84.6px;top:583.5px" width="9" height="7"><path d="M1,5 C2,0 4,0 4.5,3 C5,6 7,6 8,2" fill="none" stroke="#444" stroke-width="1.2"/></svg>
<svg class="a" style="left:95.6px;top:593.5px" width="7" height="6"><path d="M0.5,0.5 V3.5 H3 V5.5 H6.5 V3.5" fill="#444" stroke="#444" stroke-width="1"/></svg>
<div class="a" style="left:108.4px;top:560px;width:51px;height:44px;border-radius:3px;background:#dadada;overflow:hidden"><div style="position:absolute;left:0;top:0;width:51px;height:11px;background:#5e1a32"></div></div>
<div class="t" style="left:112.4px;top:560.9px;height:11.7px;line-height:11.7px;font-size:9px;color:#f0a0b0;transform:scaleX(0.9);transform-origin:0 50%;">Ch 3</div>
<div class="t" style="left:112.4px;top:571.6px;height:11.4px;line-height:11.4px;font-size:8.8px;color:#4a4a4a;transform:scaleX(0.87);transform-origin:0 50%;">10 V/div</div>
<div class="t" style="left:112.4px;top:581.7px;height:11.4px;line-height:11.4px;font-size:8.8px;color:#4a4a4a;transform:scaleX(0.87);transform-origin:0 50%;">1 M&Omega;</div>
<div class="t" style="left:112.4px;top:591.8px;height:11.4px;line-height:11.4px;font-size:8.8px;color:#4a4a4a;transform:scaleX(0.87);transform-origin:0 50%;">100 kHz</div>
<svg class="a" style="left:137.9px;top:583.5px" width="9" height="7"><path d="M1,5 C2,0 4,0 4.5,3 C5,6 7,6 8,2" fill="none" stroke="#444" stroke-width="1.2"/></svg>
<svg class="a" style="left:148.9px;top:593.5px" width="7" height="6"><path d="M0.5,0.5 V3.5 H3 V5.5 H6.5 V3.5" fill="#444" stroke="#444" stroke-width="1"/></svg>
<div class="a" style="left:161.8px;top:560px;width:51px;height:44px;border-radius:3px;background:#dadada;overflow:hidden"><div style="position:absolute;left:0;top:0;width:51px;height:11px;background:#2a4018"></div></div>
<div class="t" style="left:165.8px;top:560.9px;height:11.7px;line-height:11.7px;font-size:9px;color:#90d030;transform:scaleX(0.9);transform-origin:0 50%;">Ch 4</div>
<div class="t" style="left:165.8px;top:571.6px;height:11.4px;line-height:11.4px;font-size:8.8px;color:#4a4a4a;transform:scaleX(0.87);transform-origin:0 50%;">575 mA/div</div>
<div class="t" style="left:165.8px;top:581.7px;height:11.4px;line-height:11.4px;font-size:8.8px;color:#4a4a4a;transform:scaleX(0.87);transform-origin:0 50%;">1 M&Omega;</div>
<div class="t" style="left:165.8px;top:591.8px;height:11.4px;line-height:11.4px;font-size:8.8px;color:#4a4a4a;transform:scaleX(0.87);transform-origin:0 50%;">100 kHz</div>
<svg class="a" style="left:191.2px;top:583.5px" width="9" height="7"><path d="M1,5 C2,0 4,0 4.5,3 C5,6 7,6 8,2" fill="none" stroke="#444" stroke-width="1.2"/></svg>
<svg class="a" style="left:202.2px;top:593.5px" width="7" height="6"><path d="M0.5,0.5 V3.5 H3 V5.5 H6.5 V3.5" fill="#444" stroke="#444" stroke-width="1"/></svg>
<div class="a" style="left:215.1px;top:560px;width:51px;height:44px;border-radius:3px;background:#dadada;overflow:hidden"><div style="position:absolute;left:0;top:0;width:51px;height:11px;background:#5a3a1a"></div></div>
<div class="t" style="left:219.1px;top:560.9px;height:11.7px;line-height:11.7px;font-size:9px;color:#f09030;transform:scaleX(0.9);transform-origin:0 50%;">Ch 5</div>
<div class="t" style="left:219.1px;top:571.6px;height:11.4px;line-height:11.4px;font-size:8.8px;color:#4a4a4a;transform:scaleX(0.87);transform-origin:0 50%;">10 V/div</div>
<div class="t" style="left:219.1px;top:581.7px;height:11.4px;line-height:11.4px;font-size:8.8px;color:#4a4a4a;transform:scaleX(0.87);transform-origin:0 50%;">1 M&Omega;</div>
<div class="t" style="left:219.1px;top:591.8px;height:11.4px;line-height:11.4px;font-size:8.8px;color:#4a4a4a;transform:scaleX(0.87);transform-origin:0 50%;">100 kHz</div>
<svg class="a" style="left:244.6px;top:583.5px" width="9" height="7"><path d="M1,5 C2,0 4,0 4.5,3 C5,6 7,6 8,2" fill="none" stroke="#444" stroke-width="1.2"/></svg>
<svg class="a" style="left:255.6px;top:593.5px" width="7" height="6"><path d="M0.5,0.5 V3.5 H3 V5.5 H6.5 V3.5" fill="#444" stroke="#444" stroke-width="1"/></svg>
<div class="a" style="left:268.4px;top:560px;width:51px;height:44px;border-radius:3px;background:#dadada;overflow:hidden"><div style="position:absolute;left:0;top:0;width:51px;height:11px;background:#20267a"></div></div>
<div class="t" style="left:272.4px;top:560.9px;height:11.7px;line-height:11.7px;font-size:9px;color:#dde0ff;transform:scaleX(0.9);transform-origin:0 50%;">Ch 6</div>
<div class="t" style="left:272.4px;top:571.6px;height:11.4px;line-height:11.4px;font-size:8.8px;color:#4a4a4a;transform:scaleX(0.87);transform-origin:0 50%;">550 mA/div</div>
<div class="t" style="left:272.4px;top:581.7px;height:11.4px;line-height:11.4px;font-size:8.8px;color:#4a4a4a;transform:scaleX(0.87);transform-origin:0 50%;">1 M&Omega;</div>
<div class="t" style="left:272.4px;top:591.8px;height:11.4px;line-height:11.4px;font-size:8.8px;color:#4a4a4a;transform:scaleX(0.87);transform-origin:0 50%;">100 kHz</div>
<svg class="a" style="left:297.9px;top:583.5px" width="9" height="7"><path d="M1,5 C2,0 4,0 4.5,3 C5,6 7,6 8,2" fill="none" stroke="#444" stroke-width="1.2"/></svg>
<svg class="a" style="left:308.9px;top:593.5px" width="7" height="6"><path d="M0.5,0.5 V3.5 H3 V5.5 H6.5 V3.5" fill="#444" stroke="#444" stroke-width="1"/></svg>
<div class="a" style="left:321.8px;top:560px;width:51px;height:44px;border-radius:3px;background:#dadada;overflow:hidden"><div style="position:absolute;left:0;top:0;width:51px;height:11px;background:#5a3c14"></div></div>
<div class="t" style="left:325.8px;top:560.9px;height:11.7px;line-height:11.7px;font-size:9px;color:#f09a30;transform:scaleX(0.9);transform-origin:0 50%;">Math 1</div>
<div class="t" style="left:325.8px;top:571.6px;height:11.4px;line-height:11.4px;font-size:8.8px;color:#4a4a4a;transform:scaleX(0.87);transform-origin:0 50%;">1.8502 V/div</div>
<div class="t" style="left:325.8px;top:581.7px;height:11.4px;line-height:11.4px;font-size:8.8px;color:#4a4a4a;transform:scaleX(0.87);transform-origin:0 50%;">Static|low...</div>
<div class="t" style="left:325.8px;top:591.8px;height:11.4px;line-height:11.4px;font-size:8.8px;color:#4a4a4a;transform:scaleX(0.87);transform-origin:0 50%;">Meas 1</div>
<div class="a" style="left:375.1px;top:560px;width:51px;height:44px;border-radius:3px;background:#dadada;overflow:hidden"><div style="position:absolute;left:0;top:0;width:51px;height:11px;background:#4a1c1e"></div></div>
<div class="t" style="left:379.1px;top:560.9px;height:11.7px;line-height:11.7px;font-size:9px;color:#f0f0f0;transform:scaleX(0.9);transform-origin:0 50%;">Trend 2</div>
<div class="t" style="left:379.1px;top:571.6px;height:11.4px;line-height:11.4px;font-size:8.8px;color:#4a4a4a;transform:scaleX(0.87);transform-origin:0 50%;">15.9182</div>
<div class="t" style="left:379.1px;top:581.7px;height:11.4px;line-height:11.4px;font-size:8.8px;color:#4a4a4a;transform:scaleX(0.87);transform-origin:0 50%;">Cyc Powe...</div>
<div class="t" style="left:379.1px;top:591.8px;height:11.4px;line-height:11.4px;font-size:8.8px;color:#4a4a4a;transform:scaleX(0.87);transform-origin:0 50%;">Meas 1</div>
<div class="a" style="left:511px;top:561px;width:22px;height:43px;border:1px solid #4a4a4a;border-radius:4px;background:#262626"></div><div class="a" style="left:514px;top:564.5px;width:16px;height:2px;background:#e040a0"></div><div class="t" style="left:511px;width:22px;top:578.9px;text-align:center;font-size:12px;line-height:13.200000000000001px;color:#c8c8c8">7</div>
<div class="a" style="left:536px;top:561px;width:22px;height:43px;border:1px solid #4a4a4a;border-radius:4px;background:#262626"></div><div class="a" style="left:539px;top:564.5px;width:16px;height:2px;background:#20d080"></div><div class="t" style="left:536px;width:22px;top:578.9px;text-align:center;font-size:12px;line-height:13.200000000000001px;color:#c8c8c8">8</div>
<div class="a" style="left:564px;top:561px;width:1px;height:43px;background:#3e3e3e"></div>
<div class="a" style="left:570px;top:561px;width:23px;height:43px;border:1px solid #4a4a4a;border-radius:4px;background:#262626"></div><div class="a" style="left:573px;top:564.5px;width:17px;height:2px;background:#8030c0"></div><div class="t" style="left:570px;width:23px;top:570.65px;text-align:center;font-size:9px;line-height:9.9px;color:#c8c8c8">Add<br>New<br>Math</div>
<div class="a" style="left:595px;top:561px;width:23px;height:43px;border:1px solid #4a4a4a;border-radius:4px;background:#262626"></div><div class="a" style="left:598px;top:564.5px;width:17px;height:2px;background:#f0e020"></div><div class="t" style="left:595px;width:23px;top:570.65px;text-align:center;font-size:9px;line-height:9.9px;color:#c8c8c8">Add<br>New<br>Ref</div>
<div class="a" style="left:620px;top:561px;width:23px;height:43px;border:1px solid #4a4a4a;border-radius:4px;background:#262626"></div><div class="a" style="left:623px;top:564.5px;width:17px;height:2px;background:#c040e0"></div><div class="t" style="left:620px;width:23px;top:570.65px;text-align:center;font-size:9px;line-height:9.9px;color:#c8c8c8">Add<br>New<br>Bus</div>
<div class="a" style="left:649px;top:561px;width:1px;height:43px;background:#3e3e3e"></div>
<div class="a" style="left:655px;top:561px;width:23px;height:43px;border:1px solid #4a4a4a;border-radius:4px;background:#262626"></div><div class="a" style="left:658px;top:564.5px;width:17px;height:2px;background:#3a3a3a"></div><div class="t" style="left:655px;width:23px;top:580.55px;text-align:center;font-size:9px;line-height:9.9px;color:#c8c8c8">DVM</div>
<div class="a" style="left:683px;top:561px;width:23px;height:43px;border:1px solid #4a4a4a;border-radius:4px;background:#262626"></div><div class="a" style="left:686px;top:564.5px;width:17px;height:2px;background:#3a3a3a"></div><div class="t" style="left:683px;width:23px;top:580.55px;text-align:center;font-size:9px;line-height:9.9px;color:#c8c8c8">AFG</div>
<div class="a" style="left:711.5px;top:561px;width:1px;height:43px;background:#3e3e3e"></div>
<div class="a" style="left:718px;top:561px;width:112px;height:43px;border-radius:3px;background:#dadada;overflow:hidden"><div style="position:absolute;left:0;top:0;width:112px;height:10.5px;background:#525252"></div></div><div class="t" style="left:721px;top:559.8px;height:12.3px;line-height:12.3px;font-size:9.5px;color:#d6d6d6;">Horizontal</div>
<div class="t" style="left:721px;top:572.3px;height:11.4px;line-height:11.4px;font-size:8.8px;color:#4a4a4a;transform:scaleX(0.85);transform-origin:0 50%;">10 ms/div</div>
<div class="t" style="left:780px;top:572.3px;height:11.4px;line-height:11.4px;font-size:8.8px;color:#4a4a4a;transform:scaleX(0.85);transform-origin:0 50%;">100 ms</div>
<div class="t" style="left:721px;top:582.6px;height:11.4px;line-height:11.4px;font-size:8.8px;color:#4a4a4a;transform:scaleX(0.85);transform-origin:0 50%;">SR: 312.5 kS/s</div>
<div class="t" style="left:780px;top:582.6px;height:11.4px;line-height:11.4px;font-size:8.8px;color:#4a4a4a;transform:scaleX(0.85);transform-origin:0 50%;">3.2 &micro;s/pt</div>
<div class="t" style="left:721px;top:592.8px;height:11.4px;line-height:11.4px;font-size:8.8px;color:#4a4a4a;transform:scaleX(0.85);transform-origin:0 50%;">RI : 31.25 kpts</div>
<div class="a" style="left:780px;top:594px;width:5px;height:7px;background:#e8801c;border-radius:1px"></div>
<div class="t" style="left:788px;top:592.8px;height:11.4px;line-height:11.4px;font-size:8.8px;color:#4a4a4a;transform:scaleX(0.85);transform-origin:0 50%;">50%</div>
<div class="a" style="left:834px;top:561px;width:89px;height:43px;border-radius:3px;background:#dadada;overflow:hidden"><div style="position:absolute;left:0;top:0;width:89px;height:10.5px;background:#525252"></div></div><div class="t" style="left:837px;top:559.8px;height:12.3px;line-height:12.3px;font-size:9.5px;color:#d6d6d6;">Trigger</div>
<div class="a" style="left:836.5px;top:573px;width:16.5px;height:8.5px;border-radius:3px;background:#f2ea2a;border:1px solid #777"></div>
<div class="a" style="left:844px;top:574.5px;width:1px;height:5px;background:#333"></div>
<svg class="a" style="left:857px;top:573px" width="9" height="9"><line x1="1" y1="8" x2="8" y2="1" stroke="#555" stroke-width="1"/></svg>
<div class="t" style="left:872px;top:571.8px;height:11.4px;line-height:11.4px;font-size:8.8px;color:#4a4a4a;transform:scaleX(0.85);transform-origin:0 50%;">400 mV</div>
<div class="a" style="left:926.5px;top:561px;width:83.5px;height:43px;border-radius:3px;background:#dadada;overflow:hidden"><div style="position:absolute;left:0;top:0;width:83.5px;height:10.5px;background:#525252"></div></div><div class="t" style="left:929.5px;top:559.8px;height:12.3px;line-height:12.3px;font-size:9.5px;color:#d6d6d6;">Acquisition</div>
<div class="t" style="left:929.5px;top:571.8px;height:11.4px;line-height:11.4px;font-size:8.8px;color:#4a4a4a;transform:scaleX(0.85);transform-origin:0 50%;">Manual,</div>
<div class="t" style="left:974px;top:571.8px;height:11.4px;line-height:11.4px;font-size:8.8px;color:#4a4a4a;transform:scaleX(0.85);transform-origin:0 50%;">Analyze</div>
<div class="t" style="left:929.5px;top:582.6px;height:11.4px;line-height:11.4px;font-size:8.8px;color:#4a4a4a;transform:scaleX(0.85);transform-origin:0 50%;">High Res: 16 bits</div>
<div class="t" style="left:929.5px;top:592.8px;height:11.4px;line-height:11.4px;font-size:8.8px;color:#4a4a4a;transform:scaleX(0.85);transform-origin:0 50%;">0 Acqs</div>
<div class="a" style="left:1014px;top:561px;width:1px;height:43px;background:#3e3e3e"></div>
<div class="a" style="left:1023px;top:560.5px;width:50px;height:20px;border-radius:3px;background:#ea1c24"></div>
<div class="t" style="left:1048px;top:565.8px;height:10.4px;line-height:10.4px;font-size:8px;color:#ffffff;font-weight:bold;transform:translateX(-50%);">Preview</div>
</body></html>
